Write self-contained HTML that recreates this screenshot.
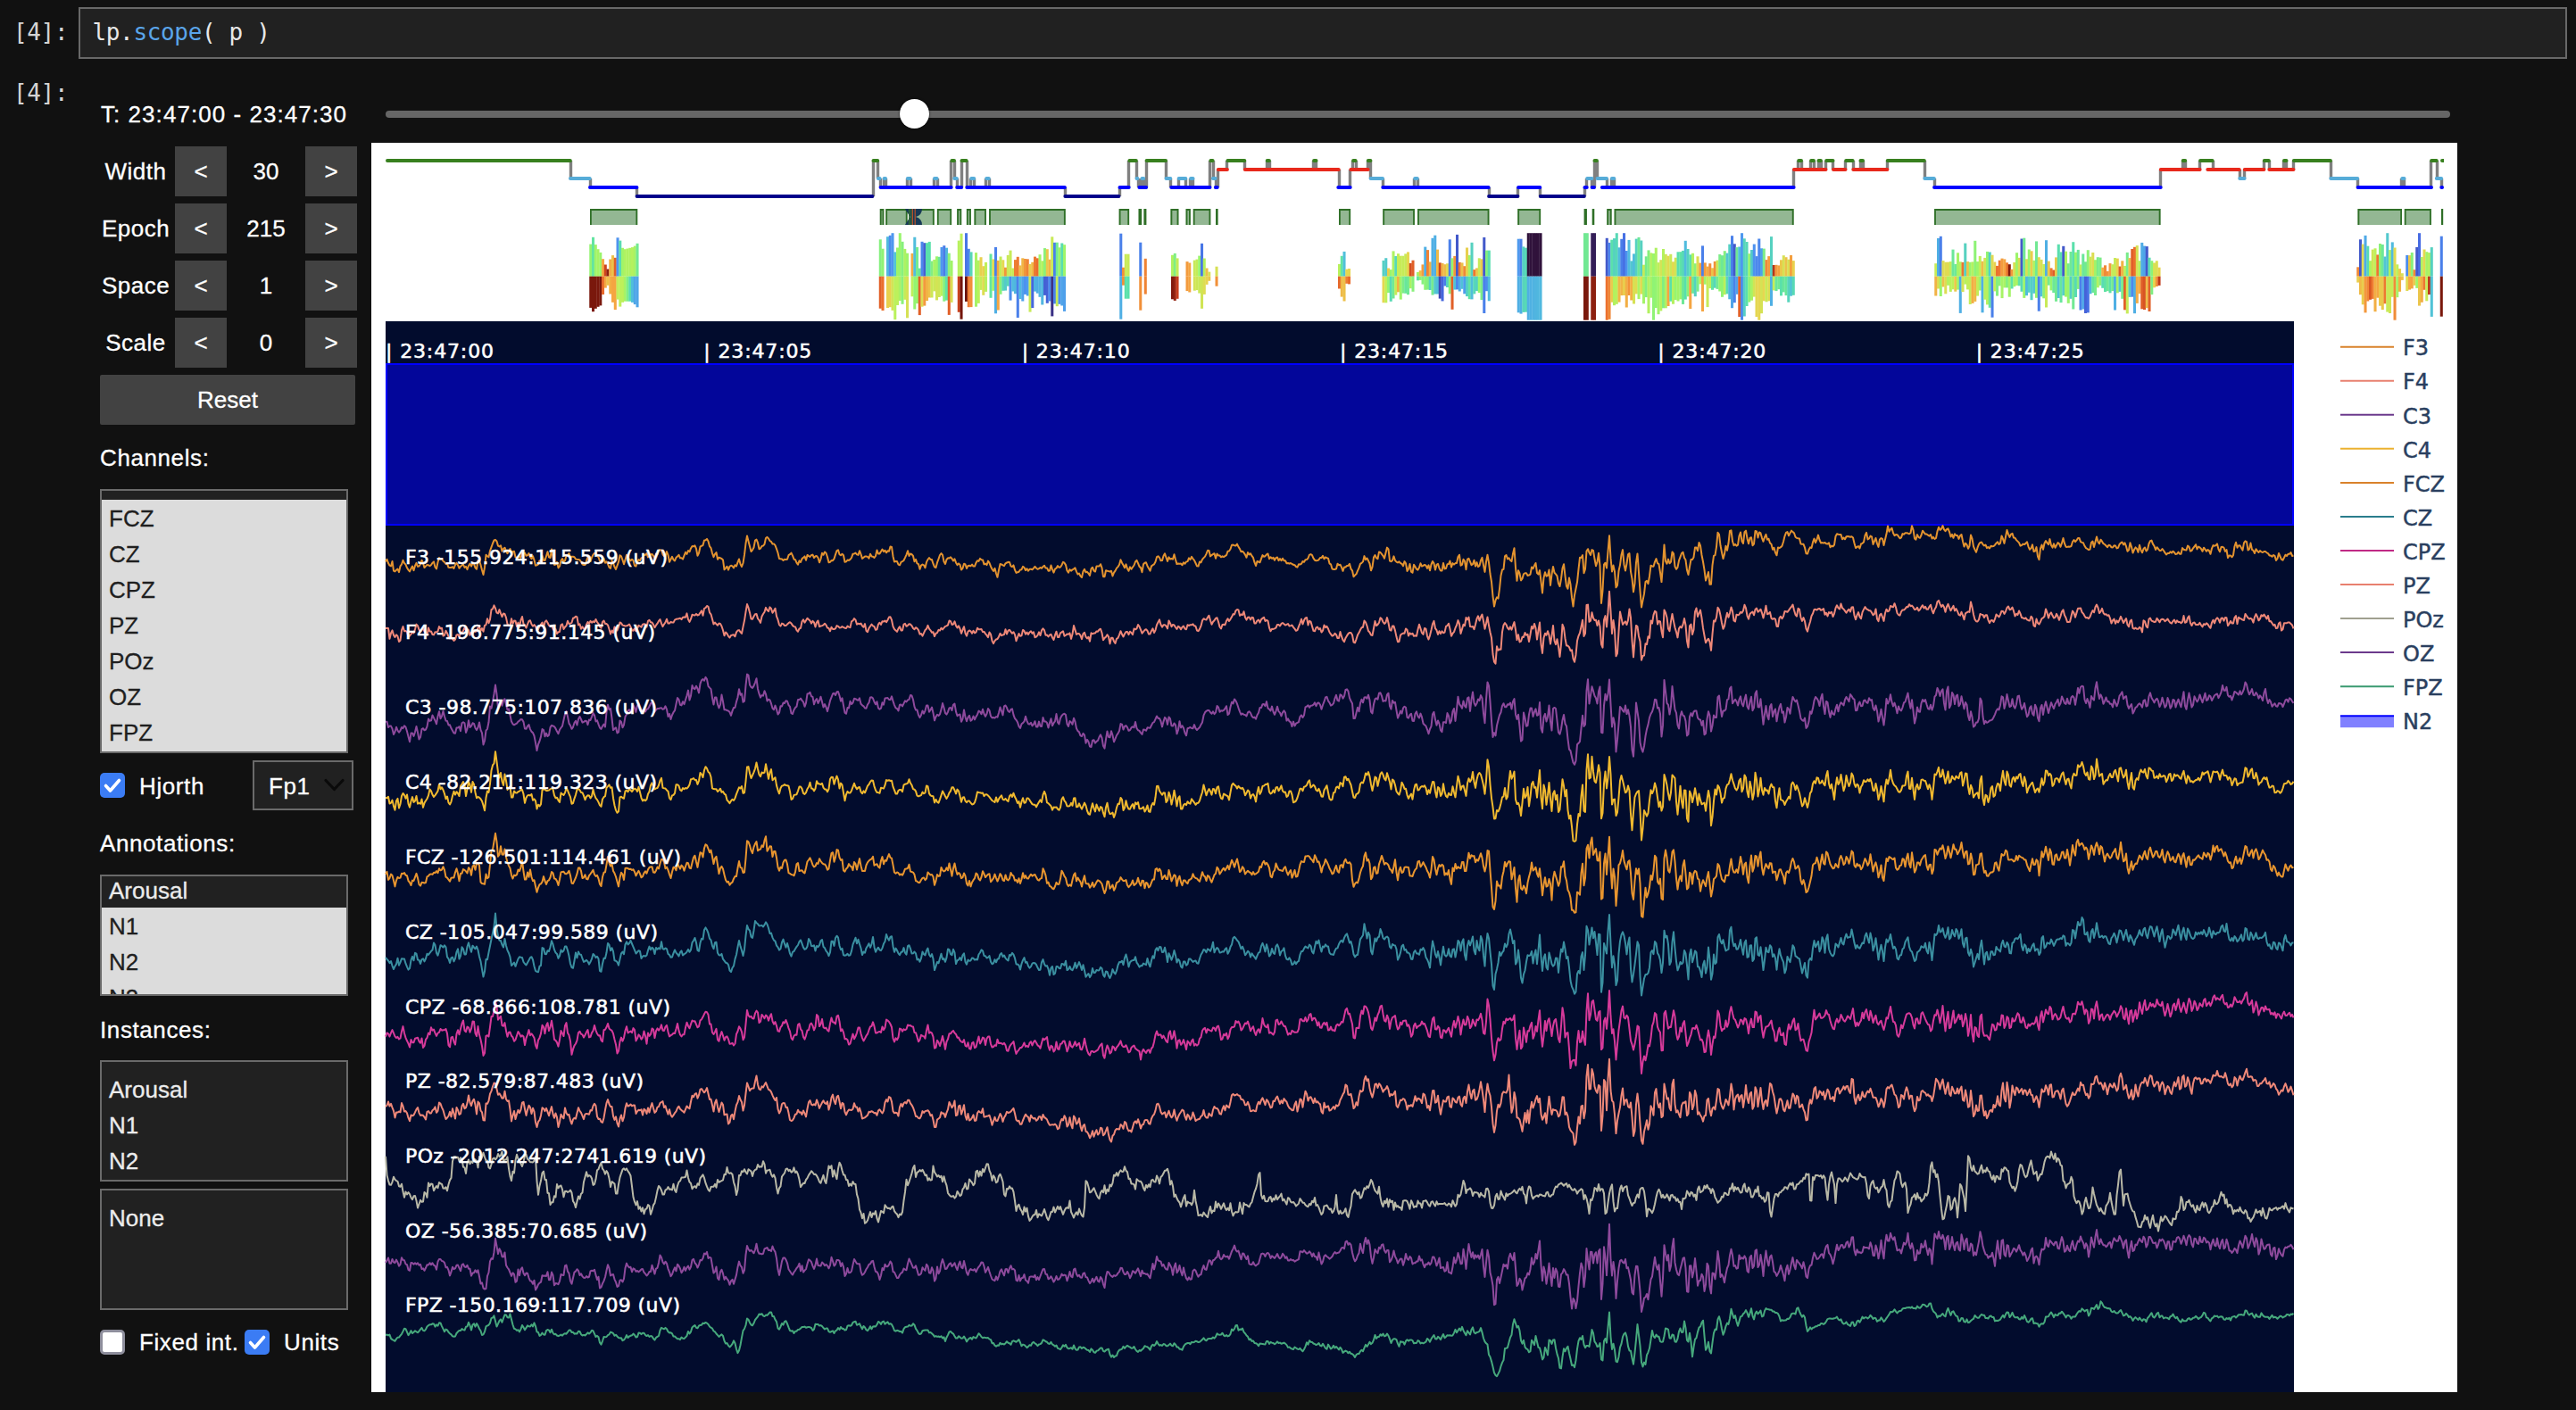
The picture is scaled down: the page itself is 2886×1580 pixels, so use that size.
<!DOCTYPE html><html><head><meta charset="utf-8"><title>lp.scope</title><style>
html,body{margin:0;padding:0;background:#111111;}
body{-webkit-text-stroke:0.3px currentColor;width:2886px;height:1580px;position:relative;overflow:hidden;font-family:"Liberation Sans",sans-serif;font-size:26px;color:#fff;}
.abs{position:absolute;}
.mono{font-family:"DejaVu Sans Mono","Liberation Mono",monospace;font-size:26px;letter-spacing:-0.35px;-webkit-text-stroke:0;}
.prompt{color:#d4d4d4;left:15px;width:70px;white-space:pre;}
.cell{left:88px;top:8px;width:2784px;height:54px;border:2px solid #686868;background:#212121;}
.code{left:103.5px;top:20px;color:#e8e8e8;white-space:pre;line-height:32px;}
.code .fn{color:#5aa5ea;}
.lbl{white-space:nowrap;line-height:30px;letter-spacing:0.6px;}
.btn{background:#424242;width:58px;height:56px;text-align:center;line-height:56px;color:#fff;}
.val{width:80px;text-align:center;line-height:56px;}
.rlbl{width:84px;text-align:center;line-height:56px;left:110px;letter-spacing:0.5px;}
.box{border:2px solid #6a6a6a;background:#212121;box-sizing:border-box;overflow:hidden;}
.it{position:absolute;left:8px;line-height:40px;height:40px;white-space:nowrap;}
.dk{color:#1f1f1f;}
.lt{color:#ececec;}
.cb{width:28px;height:28px;border-radius:5px;box-sizing:border-box;}
.cbon{background:#3b7cf4;}
.cboff{background:#fff;border:3.5px solid #8e8e9c;}
svg text{font-family:"DejaVu Sans","Liberation Sans",sans-serif;}
.wt{fill:#fff;stroke:#fff;stroke-width:0.55px;}
.lg{fill:#2a3f5f;stroke:#2a3f5f;stroke-width:0.45px;}
</style></head><body>
<div class="abs mono prompt" style="top:20px;line-height:32px;">[4]:</div>
<div class="abs cell"></div>
<div class="abs mono code">lp.<span class="fn">scope</span>( p )</div>
<div class="abs mono prompt" style="top:88px;line-height:32px;">[4]:</div>
<div class="abs lbl" id="tlabel" style="left:113px;top:113px;letter-spacing:1.05px;">T: 23:47:00 - 23:47:30</div>
<div class="abs" style="left:432px;top:124px;width:2313px;height:8px;border-radius:4px;background:#666666;"></div>
<div class="abs" style="left:1008px;top:111px;width:33px;height:33px;border-radius:50%;background:#ffffff;box-shadow:0 0 2px 1px rgba(0,0,0,0.35);"></div>
<div class="abs rlbl" style="top:164px;">Width</div>
<div class="abs btn" style="left:196px;top:164px;">&lt;</div>
<div class="abs val" style="left:258px;top:164px;">30</div>
<div class="abs btn" style="left:342px;top:164px;">&gt;</div>
<div class="abs rlbl" style="top:228px;">Epoch</div>
<div class="abs btn" style="left:196px;top:228px;">&lt;</div>
<div class="abs val" style="left:258px;top:228px;">215</div>
<div class="abs btn" style="left:342px;top:228px;">&gt;</div>
<div class="abs rlbl" style="top:292px;">Space</div>
<div class="abs btn" style="left:196px;top:292px;">&lt;</div>
<div class="abs val" style="left:258px;top:292px;">1</div>
<div class="abs btn" style="left:342px;top:292px;">&gt;</div>
<div class="abs rlbl" style="top:356px;">Scale</div>
<div class="abs btn" style="left:196px;top:356px;">&lt;</div>
<div class="abs val" style="left:258px;top:356px;">0</div>
<div class="abs btn" style="left:342px;top:356px;">&gt;</div>
<div class="abs" style="left:112px;top:420px;width:286px;height:56px;background:#424242;text-align:center;line-height:56px;border-radius:2px;">Reset</div>
<div class="abs lbl" style="left:112px;top:498px;">Channels:</div>
<div class="abs box" style="left:112px;top:548px;width:278px;height:296px;"><div class="abs" style="left:0;top:10px;width:274px;height:284px;background:#dcdcdc;"></div>
<div class="it dk" style="top:11px;">FCZ</div>
<div class="it dk" style="top:51px;">CZ</div>
<div class="it dk" style="top:91px;">CPZ</div>
<div class="it dk" style="top:131px;">PZ</div>
<div class="it dk" style="top:171px;">POz</div>
<div class="it dk" style="top:211px;">OZ</div>
<div class="it dk" style="top:251px;">FPZ</div>
</div>
<div class="abs cb cbon" style="left:112px;top:866px;"><svg width="28" height="28" viewBox="0 0 28 28"><path d="M6.5 14.5 L11.5 20 L21.5 8.5" fill="none" stroke="#fff" stroke-width="3.6" stroke-linecap="round" stroke-linejoin="round"/></svg></div>
<div class="abs lbl" style="left:156px;top:866px;">Hjorth</div>
<div class="abs box" style="left:283px;top:852px;width:113px;height:56px;"></div>
<div class="abs lbl" style="left:301px;top:866px;">Fp1</div>
<svg class="abs" style="left:362px;top:871px;" width="26" height="18" viewBox="0 0 26 18"><path d="M3 3.5 L12.5 13.5 L22 3.5" fill="none" stroke="#0a0a0a" stroke-width="3.2" stroke-linecap="round" stroke-linejoin="round"/></svg>
<div class="abs lbl" style="left:112px;top:930px;">Annotations:</div>
<div class="abs box" style="left:112px;top:980px;width:278px;height:136px;"><div class="abs" style="left:0;top:35px;width:274px;height:100px;background:#dcdcdc;"></div><div class="it lt" style="top:-4px;">Arousal</div><div class="it dk" style="top:36px;">N1</div><div class="it dk" style="top:76px;">N2</div><div class="it dk" style="top:116px;">N3</div></div>
<div class="abs lbl" style="left:112px;top:1139px;">Instances:</div>
<div class="abs box" style="left:112px;top:1188px;width:278px;height:136px;"><div class="it lt" style="top:11px;">Arousal</div><div class="it lt" style="top:51px;">N1</div><div class="it lt" style="top:91px;">N2</div></div>
<div class="abs box" style="left:112px;top:1332px;width:278px;height:136px;"><div class="it lt" style="top:11px;">None</div></div>
<div class="abs cb cboff" style="left:112px;top:1490px;"></div>
<div class="abs lbl" style="left:156px;top:1489px;">Fixed int.</div>
<div class="abs cb cbon" style="left:274px;top:1490px;"><svg width="28" height="28" viewBox="0 0 28 28"><path d="M6.5 14.5 L11.5 20 L21.5 8.5" fill="none" stroke="#fff" stroke-width="3.6" stroke-linecap="round" stroke-linejoin="round"/></svg></div>
<div class="abs lbl" style="left:318px;top:1489px;">Units</div>
<svg class="abs" style="left:0;top:0;" width="2886" height="1580" viewBox="0 0 2886 1580">
<rect x="416" y="160" width="2337" height="1400" fill="#ffffff"/>
<defs><clipPath id="ov"><rect x="432" y="160" width="2306" height="200"/></clipPath></defs><g clip-path="url(#ov)">
<path d="M639.5 180V200M661.5 200V210M713.5 210V220M978.5 180V220M983.5 180V200M986.5 200V210M990.5 200V210M992.5 200V210M1016.5 200V210M1020.5 200V210M1046.5 200V210M1050.5 200V210M1065.5 180V210M1069.5 180V200M1072.5 200V210M1077.5 180V210M1083.5 180V210M1087.5 200V210M1091.5 200V210M1104.5 200V210M1108.5 200V210M1193.5 210V220M1254.5 210V220M1264.5 180V210M1273.5 180V200M1275.5 200V210M1278.5 200V210M1281.5 200V210M1284.5 180V210M1306.5 180V200M1311.5 200V210M1320.5 200V210M1328.5 200V210M1333.5 200V210M1336.5 200V210M1355.5 180V210M1359.5 180V200M1362.5 200V210M1364.5 190V210M1374.5 180V190M1394.5 180V190M1419.5 180V190M1422.5 180V190M1471.5 180V190M1474.5 180V190M1500.5 190V210M1512.5 190V210M1515.5 180V190M1519.5 180V190M1532.5 180V190M1535.5 180V200M1549.5 200V210M1584.5 200V210M1588.5 200V210M1668.5 210V220M1700.5 210V220M1725.5 210V220M1775.5 210V220M1777.5 200V210M1783.5 200V210M1786.5 180V210M1789.5 180V200M1800.5 200V210M1805.5 200V210M1808.5 200V210M2009.5 190V210M2014.5 180V190M2018.5 180V190M2028.5 180V190M2032.5 180V190M2037.5 180V190M2040.5 180V190M2045.5 180V190M2053.5 180V190M2067.5 180V190M2076.5 180V190M2084.5 180V190M2087.5 180V190M2114.5 180V190M2156.5 180V200M2167.5 200V210M2420.5 190V210M2445.5 180V190M2448.5 180V190M2464.5 180V190M2479.5 180V190M2509.5 190V200M2514.5 190V200M2536.5 180V190M2542.5 180V190M2558.5 180V190M2561.5 180V190M2569.5 180V190M2611.5 180V200M2641.5 200V210M2690.5 200V210M2693.5 200V210M2723.5 180V210M2730.5 180V200M2735.5 200V210" stroke="#808080" stroke-width="3.4" fill="none"/>
<path d="M713.6 220H977.4M1193.4 220H1253.4M1668.1 220H1700.4M1725.8 220H1774.8" stroke="#00008b" stroke-width="4" stroke-linecap="round" fill="none"/>
<path d="M661.0 210H713.4M986.6 210H1065.7M1072.2 210H1077.2M1083.3 210H1192.9M1254.5 210H1264.7M1276.4 210H1284.1M1312.3 210H1355.5M1361.8 210H1363.7M1499.3 210H1512.7M1549.3 210H1667.6M1701.1 210H1725.3M1775.5 210H1777.7M1783.6 210H1786.0M1794.9 210H2009.6M2167.1 210H2420.7M2641.6 210H2724.0M2735.3 210H2736.0" stroke="#0000ff" stroke-width="4" stroke-linecap="round" fill="none"/>
<path d="M639.0 200H660.7M983.9 200H985.6M990.6 200H992.0M1016.9 200H1019.7M1047.0 200H1049.6M1069.3 200H1071.9M1088.2 200H1091.2M1105.2 200H1107.8M1273.5 200H1274.4M1279.4 200H1281.2M1306.5 200H1311.3M1320.7 200H1328.3M1334.1 200H1336.5M1358.9 200H1361.7M1535.6 200H1549.0M1585.2 200H1587.8M1778.2 200H1783.5M1789.5 200H1800.0M1805.9 200H1808.3M2156.3 200H2166.8M2509.3 200H2514.6M2611.3 200H2641.2M2691.3 200H2693.5M2729.8 200H2735.1" stroke="#56acd8" stroke-width="4" stroke-linecap="round" fill="none"/>
<path d="M1364.8 190H1374.9M1394.8 190H1499.7M1513.4 190H1532.7M2009.9 190H2045.5M2054.0 190H2067.5M2076.3 190H2114.4M2420.8 190H2464.6M2473.3 190H2508.7M2514.8 190H2536.4M2542.4 190H2569.5" stroke="#e8291c" stroke-width="4" stroke-linecap="round" fill="none"/>
<path d="M434.0 180H638.8M978.5 180H983.2M1066.4 180H1069.0M1077.5 180H1082.6M1265.4 180H1272.8M1284.6 180H1306.0M1356.4 180H1358.6M1375.4 180H1394.3M1419.7 180H1421.9M1472.1 180H1474.5M1516.1 180H1518.6M1532.8 180H1535.4M1786.5 180H1788.9M2015.2 180H2018.0M2029.1 180H2031.9M2037.5 180H2039.9M2046.2 180H2053.5M2068.2 180H2075.6M2084.5 180H2087.0M2114.7 180H2155.8M2445.7 180H2448.2M2465.1 180H2478.6M2536.8 180H2541.8M2559.0 180H2561.5M2569.9 180H2610.9M2724.1 180H2729.7M2738.0 180H2736.0" stroke="#38801f" stroke-width="4" stroke-linecap="round" fill="none"/>
<g fill="#93b793"><rect x="661.0" y="234" width="53.2" height="18"/><rect x="985.8" y="234" width="4.5" height="18"/><rect x="992.3" y="234" width="24.3" height="18"/><rect x="1020.0" y="234" width="26.7" height="18"/><rect x="1049.9" y="234" width="16.2" height="18"/><rect x="1072.2" y="234" width="5.0" height="18"/><rect x="1082.9" y="234" width="5.0" height="18"/><rect x="1091.5" y="234" width="13.4" height="18"/><rect x="1108.1" y="234" width="85.6" height="18"/><rect x="1253.7" y="234" width="11.4" height="18"/><rect x="1275.6" y="234" width="3.5" height="18"/><rect x="1281.5" y="234" width="2.8" height="18"/><rect x="1311.5" y="234" width="8.9" height="18"/><rect x="1328.6" y="234" width="5.2" height="18"/><rect x="1336.8" y="234" width="19.5" height="18"/><rect x="1362.0" y="234" width="2.5" height="18"/><rect x="1500.0" y="234" width="13.1" height="18"/><rect x="1549.3" y="234" width="35.6" height="18"/><rect x="1588.1" y="234" width="80.3" height="18"/><rect x="1700.3" y="234" width="25.8" height="18"/><rect x="1774.7" y="234" width="3.2" height="18"/><rect x="1783.8" y="234" width="2.4" height="18"/><rect x="1800.3" y="234" width="5.3" height="18"/><rect x="1808.6" y="234" width="201.0" height="18"/><rect x="2167.1" y="234" width="253.4" height="18"/><rect x="2641.5" y="234" width="49.5" height="18"/><rect x="2693.8" y="234" width="30.0" height="18"/><rect x="2735.4" y="234" width="1.5" height="18"/></g>
<path d="M661.9 252V235H713.3V252M986.7 252V235H989.4V252M993.2 252V235H1015.7V252M1020.9 252V235H1045.8V252M1050.8 252V235H1065.2V252M1073.1 252V235H1076.3V252M1083.8 252V235H1087.0V252M1092.4 252V235H1104.0V252M1109.0 252V235H1192.8V252M1254.6 252V235H1264.2V252M1276.5 252V235H1278.2V252M1282.4 252V235H1283.4V252M1312.4 252V235H1319.5V252M1329.5 252V235H1332.9V252M1337.7 252V235H1355.4V252M1362.9 252V235H1363.6V252M1500.9 252V235H1512.2V252M1550.2 252V235H1584.0V252M1589.0 252V235H1667.5V252M1701.2 252V235H1725.2V252M1775.6 252V235H1777.0V252M1784.7 252V235H1785.3V252M1801.2 252V235H1804.7V252M1809.5 252V235H2008.7V252M2168.0 252V235H2419.6V252M2642.4 252V235H2690.1V252M2694.7 252V235H2722.9V252M2736.3 252V235H2735.9V252" stroke="#2f6f27" stroke-width="1.8" fill="none"/>
<path d="M1014 234 L1033 234 Q1033 241 1026 243 Q1033 245 1033 252 L1014 252 L1019.5 243 Z" fill="#183a56"/>
<path d="M1018.5 234V252M1020.8 234V252" stroke="#3a7d2a" stroke-width="1"/>
<path d="M1022.4 234V252M1025.2 234V252" stroke="#b8522a" stroke-width="1.2"/>
<g><path d="M660.25 273.6h3.05V309.7h-3.05z" fill="#94f470"/><path d="M660.25 309.7h3.05v35.2h-3.05z" fill="#7a180c"/><path d="M663.00 265.8h3.05V309.7h-3.05z" fill="#63e4a1"/><path d="M663.00 309.7h3.05v39.5h-3.05z" fill="#7a180c"/><path d="M665.75 274.1h3.05V309.7h-3.05z" fill="#a1f469"/><path d="M665.75 309.7h3.05v36.1h-3.05z" fill="#7a180c"/><path d="M668.50 279.2h3.05V309.7h-3.05z" fill="#a7f365"/><path d="M668.50 309.7h3.05v34.1h-3.05z" fill="#7a180c"/><path d="M671.25 282.9h3.05V309.7h-3.05z" fill="#9cf46b"/><path d="M671.25 309.7h3.05v32.7h-3.05z" fill="#7a180c"/><path d="M674.00 290.2h3.05V309.7h-3.05z" fill="#f3aa43"/><path d="M674.00 309.7h3.05v20.3h-3.05z" fill="#e6682b"/><path d="M676.75 296.5h3.05V309.7h-3.05z" fill="#cc431e"/><path d="M676.75 309.7h3.05v12.9h-3.05z" fill="#f4a742"/><path d="M679.50 301.5h3.05V309.7h-3.05z" fill="#8f2110"/><path d="M679.50 309.7h3.05v10.1h-3.05z" fill="#edc049"/><path d="M682.25 290.5h3.05V309.7h-3.05z" fill="#f2ae44"/><path d="M682.25 309.7h3.05v19.8h-3.05z" fill="#f2af44"/><path d="M685.00 286.1h3.05V309.7h-3.05z" fill="#ecc24a"/><path d="M685.00 309.7h3.05v29.1h-3.05z" fill="#f5a541"/><path d="M687.75 288.8h3.05V309.7h-3.05z" fill="#e06028"/><path d="M687.75 309.7h3.05v37.4h-3.05z" fill="#f5a541"/><path d="M690.50 266.3h3.05V309.7h-3.05z" fill="#4e93ef"/><path d="M690.50 309.7h3.05v25.9h-3.05z" fill="#c3ed59"/><path d="M693.25 269.6h3.05V309.7h-3.05z" fill="#59dcb1"/><path d="M693.25 309.7h3.05v33.9h-3.05z" fill="#bef05a"/><path d="M696.00 277.8h3.05V309.7h-3.05z" fill="#a2f468"/><path d="M696.00 309.7h3.05v29.1h-3.05z" fill="#bef05a"/><path d="M698.75 279.2h3.05V309.7h-3.05z" fill="#aff261"/><path d="M698.75 309.7h3.05v28.0h-3.05z" fill="#a6f366"/><path d="M701.50 278.5h3.05V309.7h-3.05z" fill="#aff261"/><path d="M701.50 309.7h3.05v28.0h-3.05z" fill="#80ee84"/><path d="M704.25 277.8h3.05V309.7h-3.05z" fill="#aff261"/><path d="M704.25 309.7h3.05v28.0h-3.05z" fill="#59ddb0"/><path d="M707.00 277.1h3.05V309.7h-3.05z" fill="#b5f15f"/><path d="M707.00 309.7h3.05v29.2h-3.05z" fill="#50bddc"/><path d="M709.75 275.6h3.05V309.7h-3.05z" fill="#a8f365"/><path d="M709.75 309.7h3.05v31.4h-3.05z" fill="#4fa5e8"/><path d="M712.50 272.8h3.05V309.7h-3.05z" fill="#73e991"/><path d="M712.50 309.7h3.05v34.6h-3.05z" fill="#4fa5e8"/><path d="M984.75 268.3h3.05V309.7h-3.05z" fill="#86f07e"/><path d="M984.75 309.7h3.05v36.0h-3.05z" fill="#e16028"/><path d="M987.50 278.7h3.05V309.7h-3.05z" fill="#8ff375"/><path d="M987.50 309.7h3.05v38.3h-3.05z" fill="#eb6f2d"/><path d="M993.00 265.2h3.05V309.7h-3.05z" fill="#50bade"/><path d="M993.00 309.7h3.05v35.3h-3.05z" fill="#e8d14e"/><path d="M995.75 263.8h3.05V309.7h-3.05z" fill="#4c8ced"/><path d="M995.75 309.7h3.05v34.5h-3.05z" fill="#e8d14e"/><path d="M998.50 261.2h3.05V309.7h-3.05z" fill="#4e97ef"/><path d="M998.50 309.7h3.05v38.2h-3.05z" fill="#d2e455"/><path d="M1001.25 282.4h3.05V309.7h-3.05z" fill="#52c4d4"/><path d="M1001.25 309.7h3.05v48.4h-3.05z" fill="#baf15c"/><path d="M1004.00 277.5h3.05V309.7h-3.05z" fill="#9df46a"/><path d="M1004.00 309.7h3.05v32.3h-3.05z" fill="#bdf05b"/><path d="M1006.75 261.2h3.05V309.7h-3.05z" fill="#99f56d"/><path d="M1006.75 309.7h3.05v27.3h-3.05z" fill="#aaf264"/><path d="M1009.50 270.8h3.05V309.7h-3.05z" fill="#87f07d"/><path d="M1009.50 309.7h3.05v31.1h-3.05z" fill="#8af17a"/><path d="M1012.25 278.9h3.05V309.7h-3.05z" fill="#acf263"/><path d="M1012.25 309.7h3.05v26.1h-3.05z" fill="#c5eb58"/><path d="M1015.00 283.7h3.05V309.7h-3.05z" fill="#9ff469"/><path d="M1015.00 309.7h3.05v46.6h-3.05z" fill="#d6e154"/><path d="M1020.50 283.9h3.05V309.7h-3.05z" fill="#f3ab43"/><path d="M1020.50 309.7h3.05v22.6h-3.05z" fill="#bef05a"/><path d="M1023.25 265.8h3.05V309.7h-3.05z" fill="#50bddc"/><path d="M1023.25 309.7h3.05v36.9h-3.05z" fill="#94f470"/><path d="M1026.00 277.0h3.05V309.7h-3.05z" fill="#77eb8d"/><path d="M1026.00 309.7h3.05v30.4h-3.05z" fill="#97f56e"/><path d="M1028.75 300.6h3.05V309.7h-3.05z" fill="#65e59f"/><path d="M1028.75 309.7h3.05v43.4h-3.05z" fill="#e16028"/><path d="M1031.50 270.8h3.05V309.7h-3.05z" fill="#4b87ec"/><path d="M1031.50 309.7h3.05v34.0h-3.05z" fill="#dcdd52"/><path d="M1034.25 272.2h3.05V309.7h-3.05z" fill="#4460d4"/><path d="M1034.25 309.7h3.05v32.9h-3.05z" fill="#f39a3d"/><path d="M1037.00 272.2h3.05V309.7h-3.05z" fill="#5ae0ab"/><path d="M1037.00 309.7h3.05v27.3h-3.05z" fill="#f1b345"/><path d="M1039.75 270.9h3.05V309.7h-3.05z" fill="#5ae0ab"/><path d="M1039.75 309.7h3.05v23.8h-3.05z" fill="#edc149"/><path d="M1042.50 292.5h3.05V309.7h-3.05z" fill="#82ee82"/><path d="M1042.50 309.7h3.05v23.8h-3.05z" fill="#cde756"/><path d="M1045.25 290.9h3.05V309.7h-3.05z" fill="#a8f365"/><path d="M1045.25 309.7h3.05v16.7h-3.05z" fill="#cce757"/><path d="M1048.00 287.3h3.05V309.7h-3.05z" fill="#9ff469"/><path d="M1048.00 309.7h3.05v26.7h-3.05z" fill="#d3e355"/><path d="M1050.75 287.8h3.05V309.7h-3.05z" fill="#6ce798"/><path d="M1050.75 309.7h3.05v23.3h-3.05z" fill="#cde656"/><path d="M1053.50 276.9h3.05V309.7h-3.05z" fill="#4e97ef"/><path d="M1053.50 309.7h3.05v22.0h-3.05z" fill="#bbf05b"/><path d="M1056.25 275.2h3.05V309.7h-3.05z" fill="#497ce8"/><path d="M1056.25 309.7h3.05v28.0h-3.05z" fill="#84ef80"/><path d="M1059.00 277.7h3.05V309.7h-3.05z" fill="#50b5e0"/><path d="M1059.00 309.7h3.05v26.9h-3.05z" fill="#60e3a4"/><path d="M1061.75 283.7h3.05V309.7h-3.05z" fill="#8cf278"/><path d="M1061.75 309.7h3.05v43.2h-3.05z" fill="#e16028"/><path d="M1064.50 292.0h3.05V309.7h-3.05z" fill="#a1f468"/><path d="M1064.50 309.7h3.05v29.2h-3.05z" fill="#dcdd52"/><path d="M1072.75 269.6h3.05V309.7h-3.05z" fill="#b7f15e"/><path d="M1072.75 309.7h3.05v40.1h-3.05z" fill="#ca411d"/><path d="M1075.50 261.7h3.05V309.7h-3.05z" fill="#bef05a"/><path d="M1075.50 309.7h3.05v48.0h-3.05z" fill="#74160c"/><path d="M1081.00 261.2h3.05V309.7h-3.05z" fill="#4876e6"/><path d="M1081.00 309.7h3.05v28.2h-3.05z" fill="#69120a"/><path d="M1083.75 278.8h3.05V309.7h-3.05z" fill="#4b86eb"/><path d="M1083.75 309.7h3.05v34.5h-3.05z" fill="#ee7c32"/><path d="M1086.50 282.4h3.05V309.7h-3.05z" fill="#57d7b8"/><path d="M1086.50 309.7h3.05v34.4h-3.05z" fill="#f18e39"/><path d="M1092.00 283.1h3.05V309.7h-3.05z" fill="#abf264"/><path d="M1092.00 309.7h3.05v34.0h-3.05z" fill="#a4f367"/><path d="M1094.75 291.7h3.05V309.7h-3.05z" fill="#b4f15f"/><path d="M1094.75 309.7h3.05v30.2h-3.05z" fill="#bbf05b"/><path d="M1097.50 288.2h3.05V309.7h-3.05z" fill="#e8d04e"/><path d="M1097.50 309.7h3.05v15.2h-3.05z" fill="#c6eb58"/><path d="M1100.25 298.2h3.05V309.7h-3.05z" fill="#e8d14e"/><path d="M1100.25 309.7h3.05v21.1h-3.05z" fill="#dddd52"/><path d="M1103.00 293.9h3.05V309.7h-3.05z" fill="#c0ef5a"/><path d="M1103.00 309.7h3.05v17.2h-3.05z" fill="#b7f15e"/><path d="M1108.50 284.5h3.05V309.7h-3.05z" fill="#65e59f"/><path d="M1108.50 309.7h3.05v24.1h-3.05z" fill="#62e4a2"/><path d="M1111.25 290.4h3.05V309.7h-3.05z" fill="#e0db51"/><path d="M1111.25 309.7h3.05v16.1h-3.05z" fill="#9ff46a"/><path d="M1114.00 277.0h3.05V309.7h-3.05z" fill="#4a80ea"/><path d="M1114.00 309.7h3.05v41.6h-3.05z" fill="#4fafe4"/><path d="M1116.75 291.9h3.05V309.7h-3.05z" fill="#f5a641"/><path d="M1116.75 309.7h3.05v37.8h-3.05z" fill="#f5a541"/><path d="M1119.50 287.5h3.05V309.7h-3.05z" fill="#c4ec58"/><path d="M1119.50 309.7h3.05v20.1h-3.05z" fill="#8af17a"/><path d="M1122.25 291.3h3.05V309.7h-3.05z" fill="#e4d951"/><path d="M1122.25 309.7h3.05v16.1h-3.05z" fill="#58d8b6"/><path d="M1125.00 299.7h3.05V309.7h-3.05z" fill="#f2953b"/><path d="M1125.00 309.7h3.05v15.9h-3.05z" fill="#54caca"/><path d="M1127.75 285.9h3.05V309.7h-3.05z" fill="#c9e957"/><path d="M1127.75 309.7h3.05v11.0h-3.05z" fill="#57d7b8"/><path d="M1130.50 280.6h3.05V309.7h-3.05z" fill="#c7eb58"/><path d="M1130.50 309.7h3.05v26.9h-3.05z" fill="#4c8ded"/><path d="M1133.25 300.5h3.05V309.7h-3.05z" fill="#c7ea58"/><path d="M1133.25 309.7h3.05v16.8h-3.05z" fill="#50bbde"/><path d="M1136.00 291.1h3.05V309.7h-3.05z" fill="#ee7d32"/><path d="M1136.00 309.7h3.05v19.5h-3.05z" fill="#50b7df"/><path d="M1138.75 287.8h3.05V309.7h-3.05z" fill="#ed7931"/><path d="M1138.75 309.7h3.05v46.3h-3.05z" fill="#4a80ea"/><path d="M1141.50 297.4h3.05V309.7h-3.05z" fill="#eebc48"/><path d="M1141.50 309.7h3.05v25.3h-3.05z" fill="#50bbde"/><path d="M1144.25 289.3h3.05V309.7h-3.05z" fill="#f0b546"/><path d="M1144.25 309.7h3.05v27.8h-3.05z" fill="#4fa2ea"/><path d="M1147.00 290.0h3.05V309.7h-3.05z" fill="#f2963b"/><path d="M1147.00 309.7h3.05v20.2h-3.05z" fill="#4d91ef"/><path d="M1149.75 290.3h3.05V309.7h-3.05z" fill="#ef8335"/><path d="M1149.75 309.7h3.05v21.8h-3.05z" fill="#4e9ded"/><path d="M1152.50 295.9h3.05V309.7h-3.05z" fill="#e9cc4d"/><path d="M1152.50 309.7h3.05v39.9h-3.05z" fill="#c8ea58"/><path d="M1155.25 293.8h3.05V309.7h-3.05z" fill="#efba47"/><path d="M1155.25 309.7h3.05v35.4h-3.05z" fill="#4567dd"/><path d="M1158.00 287.6h3.05V309.7h-3.05z" fill="#ed7931"/><path d="M1158.00 309.7h3.05v16.9h-3.05z" fill="#4fb2e2"/><path d="M1160.75 289.3h3.05V309.7h-3.05z" fill="#ea6d2d"/><path d="M1160.75 309.7h3.05v19.0h-3.05z" fill="#4faee4"/><path d="M1163.50 285.2h3.05V309.7h-3.05z" fill="#a4f367"/><path d="M1163.50 309.7h3.05v23.1h-3.05z" fill="#50b5e1"/><path d="M1166.25 292.3h3.05V309.7h-3.05z" fill="#b2f260"/><path d="M1166.25 309.7h3.05v31.8h-3.05z" fill="#50b5e0"/><path d="M1169.00 278.1h3.05V309.7h-3.05z" fill="#8bf179"/><path d="M1169.00 309.7h3.05v21.2h-3.05z" fill="#4460d3"/><path d="M1171.75 279.2h3.05V309.7h-3.05z" fill="#ebc84b"/><path d="M1171.75 309.7h3.05v30.1h-3.05z" fill="#4562d7"/><path d="M1174.50 290.7h3.05V309.7h-3.05z" fill="#f0b646"/><path d="M1174.50 309.7h3.05v27.8h-3.05z" fill="#4c8ced"/><path d="M1177.25 265.3h3.05V309.7h-3.05z" fill="#c8ea57"/><path d="M1177.25 309.7h3.05v44.7h-3.05z" fill="#3a3185"/><path d="M1180.00 271.8h3.05V309.7h-3.05z" fill="#4a80ea"/><path d="M1180.00 309.7h3.05v30.7h-3.05z" fill="#4a82ea"/><path d="M1182.75 271.7h3.05V309.7h-3.05z" fill="#73e991"/><path d="M1182.75 309.7h3.05v33.5h-3.05z" fill="#c8ea58"/><path d="M1185.50 277.3h3.05V309.7h-3.05z" fill="#98f56d"/><path d="M1185.50 309.7h3.05v31.1h-3.05z" fill="#4d93ef"/><path d="M1188.25 272.5h3.05V309.7h-3.05z" fill="#59ddb0"/><path d="M1188.25 309.7h3.05v32.8h-3.05z" fill="#4fa4e9"/><path d="M1191.00 274.2h3.05V309.7h-3.05z" fill="#9ff46a"/><path d="M1191.00 309.7h3.05v39.2h-3.05z" fill="#4e9feb"/><path d="M1254.25 261.7h3.05V309.7h-3.05z" fill="#4a80ea"/><path d="M1254.25 309.7h3.05v48.0h-3.05z" fill="#4fafe4"/><path d="M1257.00 299.7h3.05V309.7h-3.05z" fill="#f19039"/><path d="M1257.00 309.7h3.05v10.0h-3.05z" fill="#f19039"/><path d="M1259.75 284.7h3.05V309.7h-3.05z" fill="#c8ea58"/><path d="M1259.75 309.7h3.05v25.0h-3.05z" fill="#5ae1aa"/><path d="M1262.50 284.7h3.05V309.7h-3.05z" fill="#c8ea58"/><path d="M1262.50 309.7h3.05v25.0h-3.05z" fill="#5ae1aa"/><path d="M1276.25 271.7h3.05V309.7h-3.05z" fill="#4a80ea"/><path d="M1276.25 309.7h3.05v38.0h-3.05z" fill="#f19039"/><path d="M1281.75 289.8h3.05V309.7h-3.05z" fill="#ef8334"/><path d="M1281.75 309.7h3.05v19.9h-3.05z" fill="#ef8334"/><path d="M1312.00 285.8h3.05V309.7h-3.05z" fill="#b1f260"/><path d="M1312.00 309.7h3.05v25.6h-3.05z" fill="#801a0d"/><path d="M1314.75 283.9h3.05V309.7h-3.05z" fill="#80ee84"/><path d="M1314.75 309.7h3.05v27.2h-3.05z" fill="#942411"/><path d="M1317.50 289.4h3.05V309.7h-3.05z" fill="#c5ec58"/><path d="M1317.50 309.7h3.05v25.1h-3.05z" fill="#c63d1c"/><path d="M1328.50 293.1h3.05V309.7h-3.05z" fill="#f39a3d"/><path d="M1328.50 309.7h3.05v16.4h-3.05z" fill="#f39a3d"/><path d="M1331.25 294.5h3.05V309.7h-3.05z" fill="#f5a441"/><path d="M1331.25 309.7h3.05v17.8h-3.05z" fill="#f5a441"/><path d="M1336.75 291.6h3.05V309.7h-3.05z" fill="#c8ea58"/><path d="M1336.75 309.7h3.05v16.0h-3.05z" fill="#d2e455"/><path d="M1339.50 290.6h3.05V309.7h-3.05z" fill="#c2ed59"/><path d="M1339.50 309.7h3.05v15.4h-3.05z" fill="#cce756"/><path d="M1342.25 286.6h3.05V309.7h-3.05z" fill="#98f56d"/><path d="M1342.25 309.7h3.05v18.9h-3.05z" fill="#cae957"/><path d="M1345.00 272.8h3.05V309.7h-3.05z" fill="#4876e6"/><path d="M1345.00 309.7h3.05v36.1h-3.05z" fill="#d0e455"/><path d="M1347.75 289.5h3.05V309.7h-3.05z" fill="#b4f15f"/><path d="M1347.75 309.7h3.05v20.2h-3.05z" fill="#dddd52"/><path d="M1350.50 300.5h3.05V309.7h-3.05z" fill="#edbf49"/><path d="M1350.50 309.7h3.05v9.2h-3.05z" fill="#e7d44f"/><path d="M1353.25 304.6h3.05V309.7h-3.05z" fill="#d9df53"/><path d="M1353.25 309.7h3.05v5.1h-3.05z" fill="#ebc74b"/><path d="M1361.50 298.7h3.05V309.7h-3.05z" fill="#d7e054"/><path d="M1361.50 309.7h3.05v11.0h-3.05z" fill="#f19039"/><path d="M1499.00 295.9h3.05V309.7h-3.05z" fill="#b9f15c"/><path d="M1499.00 309.7h3.05v13.8h-3.05z" fill="#e6682b"/><path d="M1501.75 286.8h3.05V309.7h-3.05z" fill="#62e4a2"/><path d="M1501.75 309.7h3.05v22.9h-3.05z" fill="#efb847"/><path d="M1504.50 281.9h3.05V309.7h-3.05z" fill="#50c0da"/><path d="M1504.50 309.7h3.05v27.8h-3.05z" fill="#edc049"/><path d="M1507.25 301.6h3.05V309.7h-3.05z" fill="#e6d750"/><path d="M1507.25 309.7h3.05v8.1h-3.05z" fill="#ee7e33"/><path d="M1510.00 301.0h3.05V309.7h-3.05z" fill="#e6d750"/><path d="M1510.00 309.7h3.05v8.7h-3.05z" fill="#e96b2c"/><path d="M1548.50 291.9h3.05V309.7h-3.05z" fill="#55d0c2"/><path d="M1548.50 309.7h3.05v29.5h-3.05z" fill="#e5d750"/><path d="M1551.25 289.2h3.05V309.7h-3.05z" fill="#53cacb"/><path d="M1551.25 309.7h3.05v29.6h-3.05z" fill="#c0ef5a"/><path d="M1554.00 300.5h3.05V309.7h-3.05z" fill="#e9cc4d"/><path d="M1554.00 309.7h3.05v18.4h-3.05z" fill="#90f374"/><path d="M1556.75 302.1h3.05V309.7h-3.05z" fill="#99f56d"/><path d="M1556.75 309.7h3.05v28.1h-3.05z" fill="#58dab4"/><path d="M1559.50 281.4h3.05V309.7h-3.05z" fill="#aef262"/><path d="M1559.50 309.7h3.05v24.8h-3.05z" fill="#71e993"/><path d="M1562.25 287.0h3.05V309.7h-3.05z" fill="#58d9b6"/><path d="M1562.25 309.7h3.05v20.9h-3.05z" fill="#c4ec59"/><path d="M1565.00 284.2h3.05V309.7h-3.05z" fill="#c5ec58"/><path d="M1565.00 309.7h3.05v17.6h-3.05z" fill="#f1b245"/><path d="M1567.75 286.7h3.05V309.7h-3.05z" fill="#c8ea57"/><path d="M1567.75 309.7h3.05v25.9h-3.05z" fill="#9ff469"/><path d="M1570.50 286.7h3.05V309.7h-3.05z" fill="#c5ec58"/><path d="M1570.50 309.7h3.05v18.9h-3.05z" fill="#7cec88"/><path d="M1573.25 284.4h3.05V309.7h-3.05z" fill="#c9e957"/><path d="M1573.25 309.7h3.05v19.1h-3.05z" fill="#69e69b"/><path d="M1576.00 282.4h3.05V309.7h-3.05z" fill="#e6d750"/><path d="M1576.00 309.7h3.05v20.5h-3.05z" fill="#6fe895"/><path d="M1578.75 294.9h3.05V309.7h-3.05z" fill="#d34d21"/><path d="M1578.75 309.7h3.05v13.5h-3.05z" fill="#abf264"/><path d="M1581.50 291.7h3.05V309.7h-3.05z" fill="#e06028"/><path d="M1581.50 309.7h3.05v17.1h-3.05z" fill="#89f17b"/><path d="M1587.00 304.9h3.05V309.7h-3.05z" fill="#a5f366"/><path d="M1587.00 309.7h3.05v4.6h-3.05z" fill="#62e4a2"/><path d="M1589.75 303.1h3.05V309.7h-3.05z" fill="#ecc24a"/><path d="M1589.75 309.7h3.05v4.2h-3.05z" fill="#8df277"/><path d="M1592.50 296.4h3.05V309.7h-3.05z" fill="#f39b3d"/><path d="M1592.50 309.7h3.05v8.9h-3.05z" fill="#86f07e"/><path d="M1595.25 276.6h3.05V309.7h-3.05z" fill="#4fafe4"/><path d="M1595.25 309.7h3.05v15.1h-3.05z" fill="#8cf278"/><path d="M1598.00 280.1h3.05V309.7h-3.05z" fill="#ee8134"/><path d="M1598.00 309.7h3.05v14.9h-3.05z" fill="#83ef81"/><path d="M1600.75 293.4h3.05V309.7h-3.05z" fill="#f1b245"/><path d="M1600.75 309.7h3.05v15.3h-3.05z" fill="#56d2c0"/><path d="M1603.50 266.8h3.05V309.7h-3.05z" fill="#4fafe4"/><path d="M1603.50 309.7h3.05v20.9h-3.05z" fill="#76ea8e"/><path d="M1606.25 263.7h3.05V309.7h-3.05z" fill="#4fafe4"/><path d="M1606.25 309.7h3.05v19.8h-3.05z" fill="#53c8cd"/><path d="M1609.00 279.6h3.05V309.7h-3.05z" fill="#efb947"/><path d="M1609.00 309.7h3.05v19.8h-3.05z" fill="#50bfdb"/><path d="M1611.75 294.4h3.05V309.7h-3.05z" fill="#cc441e"/><path d="M1611.75 309.7h3.05v24.9h-3.05z" fill="#404ab4"/><path d="M1614.50 295.0h3.05V309.7h-3.05z" fill="#f0b546"/><path d="M1614.50 309.7h3.05v27.7h-3.05z" fill="#4566dc"/><path d="M1617.25 296.2h3.05V309.7h-3.05z" fill="#eebb48"/><path d="M1617.25 309.7h3.05v10.8h-3.05z" fill="#497ee9"/><path d="M1620.00 295.3h3.05V309.7h-3.05z" fill="#e2da51"/><path d="M1620.00 309.7h3.05v12.3h-3.05z" fill="#56d1c0"/><path d="M1622.75 268.3h3.05V309.7h-3.05z" fill="#4a80ea"/><path d="M1622.75 309.7h3.05v19.6h-3.05z" fill="#8cf278"/><path d="M1625.50 289.3h3.05V309.7h-3.05z" fill="#97f56d"/><path d="M1625.50 309.7h3.05v37.1h-3.05z" fill="#e16028"/><path d="M1628.25 286.9h3.05V309.7h-3.05z" fill="#f2943b"/><path d="M1628.25 309.7h3.05v14.9h-3.05z" fill="#51c3d5"/><path d="M1631.00 262.9h3.05V309.7h-3.05z" fill="#4359ca"/><path d="M1631.00 309.7h3.05v14.7h-3.05z" fill="#4b86eb"/><path d="M1633.75 293.9h3.05V309.7h-3.05z" fill="#ec7530"/><path d="M1633.75 309.7h3.05v16.8h-3.05z" fill="#4faae6"/><path d="M1636.50 294.4h3.05V309.7h-3.05z" fill="#edc049"/><path d="M1636.50 309.7h3.05v14.1h-3.05z" fill="#51c1d8"/><path d="M1639.25 298.2h3.05V309.7h-3.05z" fill="#f08937"/><path d="M1639.25 309.7h3.05v19.6h-3.05z" fill="#4e9eec"/><path d="M1642.00 277.5h3.05V309.7h-3.05z" fill="#e8cf4e"/><path d="M1642.00 309.7h3.05v22.4h-3.05z" fill="#54cdc7"/><path d="M1644.75 285.9h3.05V309.7h-3.05z" fill="#a6f366"/><path d="M1644.75 309.7h3.05v25.5h-3.05z" fill="#61e3a3"/><path d="M1647.50 271.8h3.05V309.7h-3.05z" fill="#56d1c0"/><path d="M1647.50 309.7h3.05v25.7h-3.05z" fill="#50bedb"/><path d="M1650.25 302.1h3.05V309.7h-3.05z" fill="#ed7730"/><path d="M1650.25 309.7h3.05v19.7h-3.05z" fill="#57d8b7"/><path d="M1653.00 300.4h3.05V309.7h-3.05z" fill="#ecc24a"/><path d="M1653.00 309.7h3.05v16.4h-3.05z" fill="#55d1c1"/><path d="M1655.75 289.3h3.05V309.7h-3.05z" fill="#c8e957"/><path d="M1655.75 309.7h3.05v18.4h-3.05z" fill="#96f56e"/><path d="M1658.50 290.3h3.05V309.7h-3.05z" fill="#eaca4c"/><path d="M1658.50 309.7h3.05v26.4h-3.05z" fill="#7aec8a"/><path d="M1661.25 266.0h3.05V309.7h-3.05z" fill="#4359ca"/><path d="M1661.25 309.7h3.05v41.3h-3.05z" fill="#4a80ea"/><path d="M1664.00 280.6h3.05V309.7h-3.05z" fill="#85ef7f"/><path d="M1664.00 309.7h3.05v16.5h-3.05z" fill="#4c8ced"/><path d="M1666.75 280.6h3.05V309.7h-3.05z" fill="#59deaf"/><path d="M1666.75 309.7h3.05v27.6h-3.05z" fill="#50bade"/><path d="M1699.75 267.7h3.05V309.7h-3.05z" fill="#4e9aee"/><path d="M1699.75 309.7h3.05v40.6h-3.05z" fill="#4fafe4"/><path d="M1702.50 267.7h3.05V309.7h-3.05z" fill="#4a82ea"/><path d="M1702.50 309.7h3.05v41.9h-3.05z" fill="#4fafe4"/><path d="M1705.25 276.4h3.05V309.7h-3.05z" fill="#55d0c3"/><path d="M1705.25 309.7h3.05v40.2h-3.05z" fill="#56d4bc"/><path d="M1708.00 277.7h3.05V309.7h-3.05z" fill="#58d9b5"/><path d="M1708.00 309.7h3.05v40.0h-3.05z" fill="#58d9b5"/><path d="M1710.75 261.2h3.05V309.7h-3.05z" fill="#30123b"/><path d="M1710.75 309.7h3.05v49.0h-3.05z" fill="#4fafe3"/><path d="M1713.50 261.2h3.05V309.7h-3.05z" fill="#30123b"/><path d="M1713.50 309.7h3.05v49.0h-3.05z" fill="#4fb1e2"/><path d="M1716.25 261.2h3.05V309.7h-3.05z" fill="#30123b"/><path d="M1716.25 309.7h3.05v49.0h-3.05z" fill="#4fb3e1"/><path d="M1719.00 261.2h3.05V309.7h-3.05z" fill="#30123b"/><path d="M1719.00 309.7h3.05v49.0h-3.05z" fill="#50b5e0"/><path d="M1721.75 261.2h3.05V309.7h-3.05z" fill="#30123b"/><path d="M1721.75 309.7h3.05v49.0h-3.05z" fill="#50b7df"/><path d="M1724.50 261.2h3.05V309.7h-3.05z" fill="#30123b"/><path d="M1724.50 309.7h3.05v49.0h-3.05z" fill="#50b9df"/><path d="M1774.00 261.2h3.05V309.7h-3.05z" fill="#71e893"/><path d="M1774.00 309.7h3.05v49.0h-3.05z" fill="#7a180c"/><path d="M1776.75 261.2h3.05V309.7h-3.05z" fill="#71e893"/><path d="M1776.75 309.7h3.05v49.0h-3.05z" fill="#7a180c"/><path d="M1782.25 261.2h3.05V309.7h-3.05z" fill="#341e58"/><path d="M1782.25 309.7h3.05v49.0h-3.05z" fill="#8c2010"/><path d="M1785.00 261.2h3.05V309.7h-3.05z" fill="#341e58"/><path d="M1785.00 309.7h3.05v49.0h-3.05z" fill="#8c2010"/><path d="M1798.75 266.8h3.05V309.7h-3.05z" fill="#4359ca"/><path d="M1798.75 309.7h3.05v49.0h-3.05z" fill="#ec712e"/><path d="M1801.50 271.9h3.05V309.7h-3.05z" fill="#4b85eb"/><path d="M1801.50 309.7h3.05v48.1h-3.05z" fill="#ef8636"/><path d="M1804.25 268.7h3.05V309.7h-3.05z" fill="#5ae0ab"/><path d="M1804.25 309.7h3.05v29.0h-3.05z" fill="#e9cc4d"/><path d="M1807.00 267.1h3.05V309.7h-3.05z" fill="#56d2c0"/><path d="M1807.00 309.7h3.05v32.5h-3.05z" fill="#b2f160"/><path d="M1809.75 261.2h3.05V309.7h-3.05z" fill="#58d9b6"/><path d="M1809.75 309.7h3.05v31.1h-3.05z" fill="#b7f15d"/><path d="M1812.50 277.3h3.05V309.7h-3.05z" fill="#50bbde"/><path d="M1812.50 309.7h3.05v28.9h-3.05z" fill="#f0b746"/><path d="M1815.25 267.8h3.05V309.7h-3.05z" fill="#4a7ee9"/><path d="M1815.25 309.7h3.05v21.4h-3.05z" fill="#f0b546"/><path d="M1818.00 261.2h3.05V309.7h-3.05z" fill="#4770e4"/><path d="M1818.00 309.7h3.05v21.3h-3.05z" fill="#e9ce4d"/><path d="M1820.75 281.0h3.05V309.7h-3.05z" fill="#4d92ef"/><path d="M1820.75 309.7h3.05v34.8h-3.05z" fill="#f2ae44"/><path d="M1823.50 268.9h3.05V309.7h-3.05z" fill="#50bade"/><path d="M1823.50 309.7h3.05v21.3h-3.05z" fill="#f2923a"/><path d="M1826.25 292.4h3.05V309.7h-3.05z" fill="#52c6d0"/><path d="M1826.25 309.7h3.05v26.8h-3.05z" fill="#f2b144"/><path d="M1829.00 284.4h3.05V309.7h-3.05z" fill="#50bcdd"/><path d="M1829.00 309.7h3.05v30.8h-3.05z" fill="#d6e154"/><path d="M1831.75 267.6h3.05V309.7h-3.05z" fill="#56d1c0"/><path d="M1831.75 309.7h3.05v19.7h-3.05z" fill="#e0db51"/><path d="M1834.50 265.9h3.05V309.7h-3.05z" fill="#6ce798"/><path d="M1834.50 309.7h3.05v25.4h-3.05z" fill="#aaf364"/><path d="M1837.25 269.5h3.05V309.7h-3.05z" fill="#56d1c0"/><path d="M1837.25 309.7h3.05v19.9h-3.05z" fill="#dfdb52"/><path d="M1840.00 296.7h3.05V309.7h-3.05z" fill="#c5eb58"/><path d="M1840.00 309.7h3.05v30.6h-3.05z" fill="#a3f368"/><path d="M1842.75 287.3h3.05V309.7h-3.05z" fill="#76ea8e"/><path d="M1842.75 309.7h3.05v23.4h-3.05z" fill="#82ee82"/><path d="M1845.50 280.4h3.05V309.7h-3.05z" fill="#87f07d"/><path d="M1845.50 309.7h3.05v41.5h-3.05z" fill="#b2f160"/><path d="M1848.25 283.4h3.05V309.7h-3.05z" fill="#b2f160"/><path d="M1848.25 309.7h3.05v24.0h-3.05z" fill="#a4f367"/><path d="M1851.00 284.0h3.05V309.7h-3.05z" fill="#9af56c"/><path d="M1851.00 309.7h3.05v49.0h-3.05z" fill="#8ff375"/><path d="M1853.75 277.7h3.05V309.7h-3.05z" fill="#aef262"/><path d="M1853.75 309.7h3.05v35.4h-3.05z" fill="#93f471"/><path d="M1856.50 294.1h3.05V309.7h-3.05z" fill="#bfef5a"/><path d="M1856.50 309.7h3.05v42.5h-3.05z" fill="#9ff469"/><path d="M1859.25 291.2h3.05V309.7h-3.05z" fill="#d3e355"/><path d="M1859.25 309.7h3.05v38.7h-3.05z" fill="#b6f15e"/><path d="M1862.00 279.0h3.05V309.7h-3.05z" fill="#b3f15f"/><path d="M1862.00 309.7h3.05v35.6h-3.05z" fill="#81ee83"/><path d="M1864.75 284.8h3.05V309.7h-3.05z" fill="#cfe556"/><path d="M1864.75 309.7h3.05v35.6h-3.05z" fill="#aff262"/><path d="M1867.50 286.7h3.05V309.7h-3.05z" fill="#e0db51"/><path d="M1867.50 309.7h3.05v33.3h-3.05z" fill="#f5a541"/><path d="M1870.25 284.8h3.05V309.7h-3.05z" fill="#cae857"/><path d="M1870.25 309.7h3.05v28.0h-3.05z" fill="#5be1a9"/><path d="M1873.00 293.3h3.05V309.7h-3.05z" fill="#e2d951"/><path d="M1873.00 309.7h3.05v31.0h-3.05z" fill="#b4f15f"/><path d="M1875.75 288.7h3.05V309.7h-3.05z" fill="#d0e555"/><path d="M1875.75 309.7h3.05v26.3h-3.05z" fill="#97f56e"/><path d="M1878.50 282.3h3.05V309.7h-3.05z" fill="#59dfad"/><path d="M1878.50 309.7h3.05v27.8h-3.05z" fill="#a3f367"/><path d="M1881.25 282.2h3.05V309.7h-3.05z" fill="#5ee2a6"/><path d="M1881.25 309.7h3.05v25.7h-3.05z" fill="#9cf46b"/><path d="M1884.00 280.9h3.05V309.7h-3.05z" fill="#58dab5"/><path d="M1884.00 309.7h3.05v31.2h-3.05z" fill="#6ee896"/><path d="M1886.75 269.8h3.05V309.7h-3.05z" fill="#50bbde"/><path d="M1886.75 309.7h3.05v25.9h-3.05z" fill="#59dfad"/><path d="M1889.50 279.0h3.05V309.7h-3.05z" fill="#55d1c1"/><path d="M1889.50 309.7h3.05v22.6h-3.05z" fill="#89f17b"/><path d="M1892.25 285.3h3.05V309.7h-3.05z" fill="#5ae0ac"/><path d="M1892.25 309.7h3.05v36.3h-3.05z" fill="#f5a541"/><path d="M1895.00 283.8h3.05V309.7h-3.05z" fill="#b1f261"/><path d="M1895.00 309.7h3.05v19.1h-3.05z" fill="#6fe895"/><path d="M1897.75 295.2h3.05V309.7h-3.05z" fill="#8af17a"/><path d="M1897.75 309.7h3.05v22.5h-3.05z" fill="#56d1c0"/><path d="M1900.50 287.3h3.05V309.7h-3.05z" fill="#dfdb52"/><path d="M1900.50 309.7h3.05v17.0h-3.05z" fill="#7aec8a"/><path d="M1903.25 294.6h3.05V309.7h-3.05z" fill="#f4a140"/><path d="M1903.25 309.7h3.05v8.7h-3.05z" fill="#b8f15d"/><path d="M1906.00 275.4h3.05V309.7h-3.05z" fill="#4a80ea"/><path d="M1906.00 309.7h3.05v39.3h-3.05z" fill="#f5a541"/><path d="M1908.75 294.4h3.05V309.7h-3.05z" fill="#f39b3d"/><path d="M1908.75 309.7h3.05v9.0h-3.05z" fill="#9ff46a"/><path d="M1911.50 298.6h3.05V309.7h-3.05z" fill="#f3ab43"/><path d="M1911.50 309.7h3.05v34.4h-3.05z" fill="#c8ea58"/><path d="M1914.25 295.2h3.05V309.7h-3.05z" fill="#f18e39"/><path d="M1914.25 309.7h3.05v13.4h-3.05z" fill="#c1ee59"/><path d="M1917.00 300.3h3.05V309.7h-3.05z" fill="#edc149"/><path d="M1917.00 309.7h3.05v15.1h-3.05z" fill="#63e4a1"/><path d="M1919.75 292.9h3.05V309.7h-3.05z" fill="#f19039"/><path d="M1919.75 309.7h3.05v13.0h-3.05z" fill="#57d6b9"/><path d="M1922.50 291.6h3.05V309.7h-3.05z" fill="#c7ea58"/><path d="M1922.50 309.7h3.05v14.2h-3.05z" fill="#73e991"/><path d="M1925.25 285.0h3.05V309.7h-3.05z" fill="#7ded87"/><path d="M1925.25 309.7h3.05v16.8h-3.05z" fill="#93f471"/><path d="M1928.00 286.2h3.05V309.7h-3.05z" fill="#6ee896"/><path d="M1928.00 309.7h3.05v23.1h-3.05z" fill="#91f373"/><path d="M1930.75 281.2h3.05V309.7h-3.05z" fill="#85ef7f"/><path d="M1930.75 309.7h3.05v20.5h-3.05z" fill="#bbf05c"/><path d="M1933.50 283.6h3.05V309.7h-3.05z" fill="#52c5d2"/><path d="M1933.50 309.7h3.05v19.7h-3.05z" fill="#59ddaf"/><path d="M1936.25 273.7h3.05V309.7h-3.05z" fill="#55d0c3"/><path d="M1936.25 309.7h3.05v25.6h-3.05z" fill="#50b5e0"/><path d="M1939.00 264.2h3.05V309.7h-3.05z" fill="#4a80ea"/><path d="M1939.00 309.7h3.05v35.5h-3.05z" fill="#4fa5e8"/><path d="M1941.75 273.3h3.05V309.7h-3.05z" fill="#4359ca"/><path d="M1941.75 309.7h3.05v29.5h-3.05z" fill="#4a83ea"/><path d="M1944.50 277.1h3.05V309.7h-3.05z" fill="#6fe895"/><path d="M1944.50 309.7h3.05v20.1h-3.05z" fill="#4fa1eb"/><path d="M1947.25 276.5h3.05V309.7h-3.05z" fill="#50bedc"/><path d="M1947.25 309.7h3.05v45.4h-3.05z" fill="#e16028"/><path d="M1950.00 261.2h3.05V309.7h-3.05z" fill="#4e98ef"/><path d="M1950.00 309.7h3.05v49.0h-3.05z" fill="#4c89ec"/><path d="M1952.75 267.3h3.05V309.7h-3.05z" fill="#57d5bb"/><path d="M1952.75 309.7h3.05v44.8h-3.05z" fill="#55cec5"/><path d="M1955.50 271.0h3.05V309.7h-3.05z" fill="#57d7b8"/><path d="M1955.50 309.7h3.05v33.3h-3.05z" fill="#59dfad"/><path d="M1958.25 284.2h3.05V309.7h-3.05z" fill="#94f470"/><path d="M1958.25 309.7h3.05v28.9h-3.05z" fill="#8cf278"/><path d="M1961.00 280.0h3.05V309.7h-3.05z" fill="#54cbc9"/><path d="M1961.00 309.7h3.05v27.0h-3.05z" fill="#a9f364"/><path d="M1963.75 273.6h3.05V309.7h-3.05z" fill="#4d92ef"/><path d="M1963.75 309.7h3.05v22.9h-3.05z" fill="#d1e455"/><path d="M1966.50 287.1h3.05V309.7h-3.05z" fill="#4c89ec"/><path d="M1966.50 309.7h3.05v45.3h-3.05z" fill="#e5d750"/><path d="M1969.25 267.5h3.05V309.7h-3.05z" fill="#4b86eb"/><path d="M1969.25 309.7h3.05v49.0h-3.05z" fill="#e6d650"/><path d="M1972.00 278.3h3.05V309.7h-3.05z" fill="#4fa0eb"/><path d="M1972.00 309.7h3.05v41.5h-3.05z" fill="#d5e254"/><path d="M1974.75 278.6h3.05V309.7h-3.05z" fill="#7cec88"/><path d="M1974.75 309.7h3.05v27.6h-3.05z" fill="#e6d750"/><path d="M1977.50 291.1h3.05V309.7h-3.05z" fill="#f08736"/><path d="M1977.50 309.7h3.05v28.6h-3.05z" fill="#c8ea57"/><path d="M1980.25 287.1h3.05V309.7h-3.05z" fill="#f39b3d"/><path d="M1980.25 309.7h3.05v27.6h-3.05z" fill="#dcdd52"/><path d="M1983.00 265.1h3.05V309.7h-3.05z" fill="#56d1c0"/><path d="M1983.00 309.7h3.05v33.1h-3.05z" fill="#4fafe4"/><path d="M1985.75 297.0h3.05V309.7h-3.05z" fill="#b63518"/><path d="M1985.75 309.7h3.05v15.7h-3.05z" fill="#c3ed59"/><path d="M1988.50 296.8h3.05V309.7h-3.05z" fill="#f39a3d"/><path d="M1988.50 309.7h3.05v16.4h-3.05z" fill="#69e69b"/><path d="M1991.25 297.4h3.05V309.7h-3.05z" fill="#f49f3f"/><path d="M1991.25 309.7h3.05v14.5h-3.05z" fill="#72e992"/><path d="M1994.00 291.3h3.05V309.7h-3.05z" fill="#ebc74b"/><path d="M1994.00 309.7h3.05v21.7h-3.05z" fill="#5ae0ab"/><path d="M1996.75 286.2h3.05V309.7h-3.05z" fill="#d7e154"/><path d="M1996.75 309.7h3.05v17.7h-3.05z" fill="#69e69b"/><path d="M1999.50 288.2h3.05V309.7h-3.05z" fill="#ecc24a"/><path d="M1999.50 309.7h3.05v21.4h-3.05z" fill="#69e69b"/><path d="M2002.25 290.7h3.05V309.7h-3.05z" fill="#d9df53"/><path d="M2002.25 309.7h3.05v29.0h-3.05z" fill="#56d4bc"/><path d="M2005.00 286.0h3.05V309.7h-3.05z" fill="#f49f3f"/><path d="M2005.00 309.7h3.05v22.0h-3.05z" fill="#52c4d4"/><path d="M2007.75 292.1h3.05V309.7h-3.05z" fill="#e8d14e"/><path d="M2007.75 309.7h3.05v21.1h-3.05z" fill="#58d9b5"/><path d="M2167.25 295.2h3.05V309.7h-3.05z" fill="#c7eb58"/><path d="M2167.25 309.7h3.05v21.8h-3.05z" fill="#f1b245"/><path d="M2170.00 267.0h3.05V309.7h-3.05z" fill="#4fafe4"/><path d="M2170.00 309.7h3.05v13.8h-3.05z" fill="#dddc52"/><path d="M2172.75 264.8h3.05V309.7h-3.05z" fill="#4a80ea"/><path d="M2172.75 309.7h3.05v22.3h-3.05z" fill="#99f56c"/><path d="M2175.50 292.1h3.05V309.7h-3.05z" fill="#e0db52"/><path d="M2175.50 309.7h3.05v11.8h-3.05z" fill="#edbf49"/><path d="M2178.25 293.7h3.05V309.7h-3.05z" fill="#dedc52"/><path d="M2178.25 309.7h3.05v19.6h-3.05z" fill="#dcdd53"/><path d="M2181.00 293.7h3.05V309.7h-3.05z" fill="#e2d951"/><path d="M2181.00 309.7h3.05v10.1h-3.05z" fill="#b3f15f"/><path d="M2183.75 293.1h3.05V309.7h-3.05z" fill="#c6eb58"/><path d="M2183.75 309.7h3.05v17.2h-3.05z" fill="#baf15c"/><path d="M2186.50 279.6h3.05V309.7h-3.05z" fill="#6be799"/><path d="M2186.50 309.7h3.05v14.6h-3.05z" fill="#bdf05b"/><path d="M2189.25 295.9h3.05V309.7h-3.05z" fill="#6ee896"/><path d="M2189.25 309.7h3.05v17.0h-3.05z" fill="#ebc84b"/><path d="M2192.00 283.3h3.05V309.7h-3.05z" fill="#a5f366"/><path d="M2192.00 309.7h3.05v14.9h-3.05z" fill="#a7f366"/><path d="M2194.75 293.3h3.05V309.7h-3.05z" fill="#b3f160"/><path d="M2194.75 309.7h3.05v41.2h-3.05z" fill="#4fafe4"/><path d="M2197.50 293.9h3.05V309.7h-3.05z" fill="#ec7630"/><path d="M2197.50 309.7h3.05v17.4h-3.05z" fill="#d4e254"/><path d="M2200.25 272.6h3.05V309.7h-3.05z" fill="#56d1c0"/><path d="M2200.25 309.7h3.05v8.9h-3.05z" fill="#b7f15e"/><path d="M2203.00 293.1h3.05V309.7h-3.05z" fill="#ecc44a"/><path d="M2203.00 309.7h3.05v14.7h-3.05z" fill="#c1ee59"/><path d="M2205.75 293.8h3.05V309.7h-3.05z" fill="#98f56d"/><path d="M2205.75 309.7h3.05v31.3h-3.05z" fill="#c6eb58"/><path d="M2208.50 293.4h3.05V309.7h-3.05z" fill="#b4f15f"/><path d="M2208.50 309.7h3.05v30.2h-3.05z" fill="#f3ad43"/><path d="M2211.25 269.8h3.05V309.7h-3.05z" fill="#8ef276"/><path d="M2211.25 309.7h3.05v28.2h-3.05z" fill="#efb847"/><path d="M2214.00 293.1h3.05V309.7h-3.05z" fill="#9af56c"/><path d="M2214.00 309.7h3.05v21.9h-3.05z" fill="#c5ec58"/><path d="M2216.75 286.9h3.05V309.7h-3.05z" fill="#bfef5a"/><path d="M2216.75 309.7h3.05v15.8h-3.05z" fill="#a0f469"/><path d="M2219.50 292.7h3.05V309.7h-3.05z" fill="#eebc48"/><path d="M2219.50 309.7h3.05v40.6h-3.05z" fill="#4fafe4"/><path d="M2222.25 288.9h3.05V309.7h-3.05z" fill="#d3e355"/><path d="M2222.25 309.7h3.05v26.0h-3.05z" fill="#b7f15e"/><path d="M2225.00 281.9h3.05V309.7h-3.05z" fill="#93f471"/><path d="M2225.00 309.7h3.05v31.7h-3.05z" fill="#b8f15d"/><path d="M2227.75 282.5h3.05V309.7h-3.05z" fill="#54cdc7"/><path d="M2227.75 309.7h3.05v35.1h-3.05z" fill="#6be799"/><path d="M2230.50 285.7h3.05V309.7h-3.05z" fill="#e2da51"/><path d="M2230.50 309.7h3.05v46.0h-3.05z" fill="#4a80ea"/><path d="M2233.25 293.5h3.05V309.7h-3.05z" fill="#e8d04e"/><path d="M2233.25 309.7h3.05v16.7h-3.05z" fill="#c4ec59"/><path d="M2236.00 297.9h3.05V309.7h-3.05z" fill="#eb702e"/><path d="M2236.00 309.7h3.05v21.9h-3.05z" fill="#85ef7f"/><path d="M2238.75 291.7h3.05V309.7h-3.05z" fill="#ec7630"/><path d="M2238.75 309.7h3.05v10.7h-3.05z" fill="#8cf278"/><path d="M2241.50 289.6h3.05V309.7h-3.05z" fill="#f39c3e"/><path d="M2241.50 309.7h3.05v24.4h-3.05z" fill="#a7f366"/><path d="M2244.25 290.4h3.05V309.7h-3.05z" fill="#f5a541"/><path d="M2244.25 309.7h3.05v12.7h-3.05z" fill="#a9f365"/><path d="M2247.00 294.3h3.05V309.7h-3.05z" fill="#ee7d32"/><path d="M2247.00 309.7h3.05v12.7h-3.05z" fill="#84ef80"/><path d="M2249.75 296.2h3.05V309.7h-3.05z" fill="#861d0e"/><path d="M2249.75 309.7h3.05v23.0h-3.05z" fill="#a3f368"/><path d="M2252.50 301.8h3.05V309.7h-3.05z" fill="#f3983c"/><path d="M2252.50 309.7h3.05v13.8h-3.05z" fill="#5ce2a8"/><path d="M2255.25 294.0h3.05V309.7h-3.05z" fill="#d9df53"/><path d="M2255.25 309.7h3.05v11.5h-3.05z" fill="#a1f469"/><path d="M2258.00 283.2h3.05V309.7h-3.05z" fill="#9cf46b"/><path d="M2258.00 309.7h3.05v10.2h-3.05z" fill="#adf262"/><path d="M2260.75 288.9h3.05V309.7h-3.05z" fill="#dade53"/><path d="M2260.75 309.7h3.05v10.6h-3.05z" fill="#60e3a4"/><path d="M2263.50 267.5h3.05V309.7h-3.05z" fill="#4359ca"/><path d="M2263.50 309.7h3.05v17.1h-3.05z" fill="#58d9b6"/><path d="M2266.25 266.7h3.05V309.7h-3.05z" fill="#71e893"/><path d="M2266.25 309.7h3.05v24.2h-3.05z" fill="#9cf46b"/><path d="M2269.00 290.3h3.05V309.7h-3.05z" fill="#d7e054"/><path d="M2269.00 309.7h3.05v21.5h-3.05z" fill="#50bade"/><path d="M2271.75 279.5h3.05V309.7h-3.05z" fill="#95f56f"/><path d="M2271.75 309.7h3.05v18.1h-3.05z" fill="#55d1c1"/><path d="M2274.50 281.3h3.05V309.7h-3.05z" fill="#e9ce4d"/><path d="M2274.50 309.7h3.05v26.5h-3.05z" fill="#55cfc4"/><path d="M2277.25 291.8h3.05V309.7h-3.05z" fill="#aff262"/><path d="M2277.25 309.7h3.05v19.1h-3.05z" fill="#52c6d1"/><path d="M2280.00 270.4h3.05V309.7h-3.05z" fill="#71e893"/><path d="M2280.00 309.7h3.05v24.1h-3.05z" fill="#9bf46b"/><path d="M2282.75 288.2h3.05V309.7h-3.05z" fill="#dddc52"/><path d="M2282.75 309.7h3.05v39.0h-3.05z" fill="#4a80ea"/><path d="M2285.50 290.9h3.05V309.7h-3.05z" fill="#dade53"/><path d="M2285.50 309.7h3.05v22.6h-3.05z" fill="#50c0da"/><path d="M2288.25 296.0h3.05V309.7h-3.05z" fill="#c2ee59"/><path d="M2288.25 309.7h3.05v24.6h-3.05z" fill="#8bf179"/><path d="M2291.00 269.2h3.05V309.7h-3.05z" fill="#4fafe4"/><path d="M2291.00 309.7h3.05v34.8h-3.05z" fill="#c8ea58"/><path d="M2293.75 292.6h3.05V309.7h-3.05z" fill="#eac94c"/><path d="M2293.75 309.7h3.05v10.0h-3.05z" fill="#75ea8f"/><path d="M2296.50 300.4h3.05V309.7h-3.05z" fill="#ec7630"/><path d="M2296.50 309.7h3.05v15.7h-3.05z" fill="#96f56e"/><path d="M2299.25 302.5h3.05V309.7h-3.05z" fill="#df5e27"/><path d="M2299.25 309.7h3.05v18.4h-3.05z" fill="#6be799"/><path d="M2302.00 288.4h3.05V309.7h-3.05z" fill="#e9cc4d"/><path d="M2302.00 309.7h3.05v28.1h-3.05z" fill="#74ea90"/><path d="M2304.75 273.8h3.05V309.7h-3.05z" fill="#59deae"/><path d="M2304.75 309.7h3.05v24.3h-3.05z" fill="#51c2d7"/><path d="M2307.50 282.4h3.05V309.7h-3.05z" fill="#59ddb0"/><path d="M2307.50 309.7h3.05v29.4h-3.05z" fill="#68e69c"/><path d="M2310.25 275.8h3.05V309.7h-3.05z" fill="#4359ca"/><path d="M2310.25 309.7h3.05v21.5h-3.05z" fill="#54cec6"/><path d="M2313.00 281.7h3.05V309.7h-3.05z" fill="#b0f261"/><path d="M2313.00 309.7h3.05v22.9h-3.05z" fill="#a3f367"/><path d="M2315.75 295.2h3.05V309.7h-3.05z" fill="#78eb8c"/><path d="M2315.75 309.7h3.05v30.1h-3.05z" fill="#99f56d"/><path d="M2318.50 282.0h3.05V309.7h-3.05z" fill="#71e993"/><path d="M2318.50 309.7h3.05v25.1h-3.05z" fill="#54cdc7"/><path d="M2321.25 271.2h3.05V309.7h-3.05z" fill="#5ae0ab"/><path d="M2321.25 309.7h3.05v36.8h-3.05z" fill="#71e993"/><path d="M2324.00 282.7h3.05V309.7h-3.05z" fill="#98f56d"/><path d="M2324.00 309.7h3.05v23.3h-3.05z" fill="#58dab4"/><path d="M2326.75 279.9h3.05V309.7h-3.05z" fill="#6be799"/><path d="M2326.75 309.7h3.05v14.2h-3.05z" fill="#88f07c"/><path d="M2329.50 296.4h3.05V309.7h-3.05z" fill="#c0ef5a"/><path d="M2329.50 309.7h3.05v37.8h-3.05z" fill="#4a80ea"/><path d="M2332.25 284.5h3.05V309.7h-3.05z" fill="#6be799"/><path d="M2332.25 309.7h3.05v36.8h-3.05z" fill="#4fa6e8"/><path d="M2335.00 293.3h3.05V309.7h-3.05z" fill="#73e991"/><path d="M2335.00 309.7h3.05v41.3h-3.05z" fill="#4562d7"/><path d="M2337.75 280.2h3.05V309.7h-3.05z" fill="#8ef276"/><path d="M2337.75 309.7h3.05v40.7h-3.05z" fill="#476fe4"/><path d="M2340.50 287.6h3.05V309.7h-3.05z" fill="#cee656"/><path d="M2340.50 309.7h3.05v19.6h-3.05z" fill="#50b5e0"/><path d="M2343.25 283.0h3.05V309.7h-3.05z" fill="#dcdd52"/><path d="M2343.25 309.7h3.05v18.3h-3.05z" fill="#66e59e"/><path d="M2346.00 291.2h3.05V309.7h-3.05z" fill="#a2f368"/><path d="M2346.00 309.7h3.05v21.3h-3.05z" fill="#77eb8d"/><path d="M2348.75 288.2h3.05V309.7h-3.05z" fill="#7bec89"/><path d="M2348.75 309.7h3.05v12.6h-3.05z" fill="#b1f261"/><path d="M2351.50 288.6h3.05V309.7h-3.05z" fill="#7cec88"/><path d="M2351.50 309.7h3.05v10.2h-3.05z" fill="#89f17b"/><path d="M2354.25 299.7h3.05V309.7h-3.05z" fill="#f1b145"/><path d="M2354.25 309.7h3.05v13.1h-3.05z" fill="#58dbb3"/><path d="M2357.00 297.3h3.05V309.7h-3.05z" fill="#f08937"/><path d="M2357.00 309.7h3.05v17.4h-3.05z" fill="#5ee2a6"/><path d="M2359.75 303.9h3.05V309.7h-3.05z" fill="#f1923a"/><path d="M2359.75 309.7h3.05v16.5h-3.05z" fill="#71e993"/><path d="M2362.50 295.1h3.05V309.7h-3.05z" fill="#f39d3e"/><path d="M2362.50 309.7h3.05v18.6h-3.05z" fill="#5be1a9"/><path d="M2365.25 296.2h3.05V309.7h-3.05z" fill="#c5eb58"/><path d="M2365.25 309.7h3.05v16.4h-3.05z" fill="#74ea90"/><path d="M2368.00 289.0h3.05V309.7h-3.05z" fill="#c4ec59"/><path d="M2368.00 309.7h3.05v37.8h-3.05z" fill="#4fafe4"/><path d="M2370.75 289.6h3.05V309.7h-3.05z" fill="#e8d24e"/><path d="M2370.75 309.7h3.05v18.6h-3.05z" fill="#a4f367"/><path d="M2373.50 298.5h3.05V309.7h-3.05z" fill="#dd5b26"/><path d="M2373.50 309.7h3.05v17.2h-3.05z" fill="#53c7cf"/><path d="M2376.25 292.3h3.05V309.7h-3.05z" fill="#f1b345"/><path d="M2376.25 309.7h3.05v25.1h-3.05z" fill="#77eb8d"/><path d="M2379.00 297.9h3.05V309.7h-3.05z" fill="#bfef5a"/><path d="M2379.00 309.7h3.05v37.6h-3.05z" fill="#e16028"/><path d="M2381.75 282.9h3.05V309.7h-3.05z" fill="#79eb8b"/><path d="M2381.75 309.7h3.05v41.7h-3.05z" fill="#c8ea58"/><path d="M2384.50 289.1h3.05V309.7h-3.05z" fill="#edc049"/><path d="M2384.50 309.7h3.05v23.2h-3.05z" fill="#54cbc9"/><path d="M2387.25 279.0h3.05V309.7h-3.05z" fill="#e05f28"/><path d="M2387.25 309.7h3.05v23.0h-3.05z" fill="#4c89ec"/><path d="M2390.00 276.8h3.05V309.7h-3.05z" fill="#eb6e2d"/><path d="M2390.00 309.7h3.05v41.5h-3.05z" fill="#4fafe4"/><path d="M2392.75 275.1h3.05V309.7h-3.05z" fill="#d4e254"/><path d="M2392.75 309.7h3.05v30.2h-3.05z" fill="#f3ab43"/><path d="M2395.50 292.2h3.05V309.7h-3.05z" fill="#b4f15f"/><path d="M2395.50 309.7h3.05v19.4h-3.05z" fill="#f3ac43"/><path d="M2398.25 271.9h3.05V309.7h-3.05z" fill="#4face5"/><path d="M2398.25 309.7h3.05v36.6h-3.05z" fill="#df5e27"/><path d="M2401.00 275.6h3.05V309.7h-3.05z" fill="#4fa4e9"/><path d="M2401.00 309.7h3.05v37.3h-3.05z" fill="#d85424"/><path d="M2403.75 276.1h3.05V309.7h-3.05z" fill="#4359ca"/><path d="M2403.75 309.7h3.05v35.5h-3.05z" fill="#eebb48"/><path d="M2406.50 288.7h3.05V309.7h-3.05z" fill="#59ddb0"/><path d="M2406.50 309.7h3.05v39.3h-3.05z" fill="#e16028"/><path d="M2409.25 292.2h3.05V309.7h-3.05z" fill="#8df277"/><path d="M2409.25 309.7h3.05v20.4h-3.05z" fill="#81ee83"/><path d="M2412.00 294.5h3.05V309.7h-3.05z" fill="#d6e154"/><path d="M2412.00 309.7h3.05v12.6h-3.05z" fill="#e7d54f"/><path d="M2414.75 292.3h3.05V309.7h-3.05z" fill="#dbde53"/><path d="M2414.75 309.7h3.05v11.3h-3.05z" fill="#f2933b"/><path d="M2417.50 299.7h3.05V309.7h-3.05z" fill="#e7d34f"/><path d="M2417.50 309.7h3.05v10.2h-3.05z" fill="#c03a1a"/><path d="M2640.25 299.3h3.05V309.7h-3.05z" fill="#ef8736"/><path d="M2640.25 309.7h3.05v6.9h-3.05z" fill="#e9ce4d"/><path d="M2643.00 268.3h3.05V309.7h-3.05z" fill="#4359ca"/><path d="M2643.00 309.7h3.05v20.5h-3.05z" fill="#efba47"/><path d="M2645.75 273.6h3.05V309.7h-3.05z" fill="#e2da51"/><path d="M2645.75 309.7h3.05v31.6h-3.05z" fill="#e9cd4d"/><path d="M2648.50 263.9h3.05V309.7h-3.05z" fill="#4fa9e7"/><path d="M2648.50 309.7h3.05v40.7h-3.05z" fill="#f3983c"/><path d="M2651.25 275.7h3.05V309.7h-3.05z" fill="#58d9b5"/><path d="M2651.25 309.7h3.05v27.8h-3.05z" fill="#f08937"/><path d="M2654.00 292.2h3.05V309.7h-3.05z" fill="#acf263"/><path d="M2654.00 309.7h3.05v26.1h-3.05z" fill="#db5825"/><path d="M2656.75 279.6h3.05V309.7h-3.05z" fill="#cee656"/><path d="M2656.75 309.7h3.05v25.2h-3.05z" fill="#ee7c32"/><path d="M2659.50 278.3h3.05V309.7h-3.05z" fill="#bef05a"/><path d="M2659.50 309.7h3.05v39.5h-3.05z" fill="#f2af44"/><path d="M2662.25 285.4h3.05V309.7h-3.05z" fill="#ed7730"/><path d="M2662.25 309.7h3.05v24.0h-3.05z" fill="#f4a842"/><path d="M2665.00 273.0h3.05V309.7h-3.05z" fill="#8af17a"/><path d="M2665.00 309.7h3.05v33.0h-3.05z" fill="#eac94c"/><path d="M2667.75 274.0h3.05V309.7h-3.05z" fill="#6ee896"/><path d="M2667.75 309.7h3.05v37.4h-3.05z" fill="#eac84c"/><path d="M2670.50 287.5h3.05V309.7h-3.05z" fill="#52c5d3"/><path d="M2670.50 309.7h3.05v30.6h-3.05z" fill="#ed7931"/><path d="M2673.25 261.2h3.05V309.7h-3.05z" fill="#53c8ce"/><path d="M2673.25 309.7h3.05v39.9h-3.05z" fill="#c7ea58"/><path d="M2676.00 280.1h3.05V309.7h-3.05z" fill="#aaf264"/><path d="M2676.00 309.7h3.05v41.3h-3.05z" fill="#cee656"/><path d="M2678.75 271.4h3.05V309.7h-3.05z" fill="#50bbde"/><path d="M2678.75 309.7h3.05v23.1h-3.05z" fill="#c4ed59"/><path d="M2681.50 277.5h3.05V309.7h-3.05z" fill="#e0db51"/><path d="M2681.50 309.7h3.05v49.0h-3.05z" fill="#f08c38"/><path d="M2684.25 296.3h3.05V309.7h-3.05z" fill="#c0ef5a"/><path d="M2684.25 309.7h3.05v23.5h-3.05z" fill="#a7f366"/><path d="M2687.00 301.1h3.05V309.7h-3.05z" fill="#e9cd4d"/><path d="M2687.00 309.7h3.05v17.1h-3.05z" fill="#f1b145"/><path d="M2689.75 306.2h3.05V309.7h-3.05z" fill="#d7e054"/><path d="M2689.75 309.7h3.05v4.2h-3.05z" fill="#eebe48"/><path d="M2695.25 286.0h3.05V309.7h-3.05z" fill="#4c8ced"/><path d="M2695.25 309.7h3.05v16.3h-3.05z" fill="#e1da51"/><path d="M2698.00 286.1h3.05V309.7h-3.05z" fill="#ebc84b"/><path d="M2698.00 309.7h3.05v14.9h-3.05z" fill="#f4a842"/><path d="M2700.75 283.0h3.05V309.7h-3.05z" fill="#89f17b"/><path d="M2700.75 309.7h3.05v13.7h-3.05z" fill="#f5a340"/><path d="M2703.50 302.2h3.05V309.7h-3.05z" fill="#f08937"/><path d="M2703.50 309.7h3.05v10.2h-3.05z" fill="#e9cc4d"/><path d="M2706.25 277.0h3.05V309.7h-3.05z" fill="#4359ca"/><path d="M2706.25 309.7h3.05v13.2h-3.05z" fill="#9ff469"/><path d="M2709.00 261.2h3.05V309.7h-3.05z" fill="#466be3"/><path d="M2709.00 309.7h3.05v32.9h-3.05z" fill="#ebc54b"/><path d="M2711.75 288.0h3.05V309.7h-3.05z" fill="#aff262"/><path d="M2711.75 309.7h3.05v29.1h-3.05z" fill="#f3ac43"/><path d="M2714.50 279.5h3.05V309.7h-3.05z" fill="#e4d850"/><path d="M2714.50 309.7h3.05v15.1h-3.05z" fill="#ed7830"/><path d="M2717.25 282.2h3.05V309.7h-3.05z" fill="#a4f367"/><path d="M2717.25 309.7h3.05v27.6h-3.05z" fill="#c8ea58"/><path d="M2720.00 283.1h3.05V309.7h-3.05z" fill="#b3f160"/><path d="M2720.00 309.7h3.05v20.4h-3.05z" fill="#bf391a"/><path d="M2722.75 277.1h3.05V309.7h-3.05z" fill="#56d1c0"/><path d="M2722.75 309.7h3.05v45.2h-3.05z" fill="#51c2d6"/><path d="M2733.75 264.7h3.05V309.7h-3.05z" fill="#4a80ea"/><path d="M2733.75 309.7h3.05v45.0h-3.05z" fill="#7a180c"/></g>
</g>
<rect x="432" y="360" width="2138" height="1200" fill="#020c2d"/>
<rect x="433" y="408" width="2136" height="180" fill="#03069a" stroke="#0000ff" stroke-width="2"/>
<text x="432.0" y="401" font-size="22" class="wt" textLength="121" lengthAdjust="spacing">| 23:47:00</text>
<text x="788.3" y="401" font-size="22" class="wt" textLength="121" lengthAdjust="spacing">| 23:47:05</text>
<text x="1144.7" y="401" font-size="22" class="wt" textLength="121" lengthAdjust="spacing">| 23:47:10</text>
<text x="1501.0" y="401" font-size="22" class="wt" textLength="121" lengthAdjust="spacing">| 23:47:15</text>
<text x="1857.3" y="401" font-size="22" class="wt" textLength="121" lengthAdjust="spacing">| 23:47:20</text>
<text x="2213.7" y="401" font-size="22" class="wt" textLength="121" lengthAdjust="spacing">| 23:47:25</text>
<path d="M432.0,629.2 433.5,626.7 435.0,631.1 436.5,633.7 438.0,634.4 439.5,628.9 441.0,639.6 442.5,640.4 444.0,638.8 445.5,637.6 447.0,641.1 448.5,634.3 450.0,632.3 451.5,627.8 453.0,631.0 454.5,632.6 456.0,636.3 457.5,638.6 459.0,640.4 460.5,637.3 462.0,634.5 463.5,639.1 465.0,634.0 466.5,630.8 468.0,634.8 469.5,634.5 471.0,632.2 472.5,627.7 474.0,631.0 475.5,636.1 477.0,634.4 478.5,632.9 480.0,633.2 481.5,634.3 483.0,633.0 484.5,630.7 486.0,629.4 487.5,635.4 489.0,637.5 490.5,630.0 492.0,625.1 493.5,626.5 495.0,626.4 496.5,628.8 498.0,629.9 499.5,632.0 501.0,631.7 502.5,635.8 504.0,636.0 505.5,636.1 507.0,635.2 508.5,637.0 510.0,633.0 511.5,630.7 513.0,633.2 514.5,636.8 516.0,634.7 517.5,633.4 519.0,632.7 520.5,635.9 522.0,634.9 523.5,638.2 525.0,634.0 526.5,631.5 528.0,634.5 529.5,631.3 531.0,632.1 532.5,636.2 534.0,637.8 535.5,628.0 537.0,628.0 538.5,633.0 540.0,638.8 541.5,644.0 543.0,635.7 544.5,621.8 546.0,623.2 547.5,624.3 549.0,617.3 550.5,613.1 552.0,609.0 553.5,605.5 555.0,604.8 556.5,606.5 558.0,611.6 559.5,612.4 561.0,611.3 562.5,617.8 564.0,615.1 565.5,613.7 567.0,617.2 568.5,620.2 570.0,617.5 571.5,615.1 573.0,618.8 574.5,618.2 576.0,617.8 577.5,624.2 579.0,624.7 580.5,624.8 582.0,623.8 583.5,625.1 585.0,619.8 586.5,619.9 588.0,619.6 589.5,622.7 591.0,622.3 592.5,620.1 594.0,624.2 595.5,626.2 597.0,623.2 598.5,627.5 600.0,633.7 601.5,633.3 603.0,632.4 604.5,628.2 606.0,629.2 607.5,622.9 609.0,627.7 610.5,628.1 612.0,623.3 613.5,618.3 615.0,624.4 616.5,625.0 618.0,615.6 619.5,624.9 621.0,632.9 622.5,632.6 624.0,629.9 625.5,636.4 627.0,634.4 628.5,628.4 630.0,626.0 631.5,629.5 633.0,628.2 634.5,622.5 636.0,622.1 637.5,620.0 639.0,624.8 640.5,623.8 642.0,623.7 643.5,624.2 645.0,626.5 646.5,626.9 648.0,626.9 649.5,627.4 651.0,629.8 652.5,632.3 654.0,633.1 655.5,633.0 657.0,628.5 658.5,624.3 660.0,629.3 661.5,629.1 663.0,624.7 664.5,621.7 666.0,619.8 667.5,620.5 669.0,622.9 670.5,624.2 672.0,628.7 673.5,628.4 675.0,626.3 676.5,625.8 678.0,630.7 679.5,629.2 681.0,632.0 682.5,635.8 684.0,636.9 685.5,628.0 687.0,631.0 688.5,635.3 690.0,637.9 691.5,633.9 693.0,629.7 694.5,622.2 696.0,623.3 697.5,627.5 699.0,632.3 700.5,627.4 702.0,621.8 703.5,624.4 705.0,626.8 706.5,628.2 708.0,626.7 709.5,628.1 711.0,633.8 712.5,634.5 714.0,629.9 715.5,627.1 717.0,628.2 718.5,625.2 720.0,625.1 721.5,622.3 723.0,621.8 724.5,620.1 726.0,624.4 727.5,623.6 729.0,621.2 730.5,621.0 732.0,622.8 733.5,625.7 735.0,620.6 736.5,621.2 738.0,616.7 739.5,616.3 741.0,616.4 742.5,621.3 744.0,623.2 745.5,623.3 747.0,618.1 748.5,622.0 750.0,629.8 751.5,626.8 753.0,623.8 754.5,627.2 756.0,628.4 757.5,624.8 759.0,623.5 760.5,621.8 762.0,625.3 763.5,625.3 765.0,626.6 766.5,622.7 768.0,618.8 769.5,621.0 771.0,617.0 772.5,618.3 774.0,614.4 775.5,611.9 777.0,612.3 778.5,611.4 780.0,614.9 781.5,622.7 783.0,619.8 784.5,612.7 786.0,611.7 787.5,611.1 789.0,605.4 790.5,605.3 792.0,603.9 793.5,606.5 795.0,612.2 796.5,614.1 798.0,620.0 799.5,624.2 801.0,620.9 802.5,619.0 804.0,626.8 805.5,624.7 807.0,625.3 808.5,626.0 810.0,627.4 811.5,638.3 813.0,636.6 814.5,634.7 816.0,638.6 817.5,634.8 819.0,633.7 820.5,634.4 822.0,636.4 823.5,633.2 825.0,634.5 826.5,630.2 828.0,626.5 829.5,632.1 831.0,635.0 832.5,631.0 834.0,621.7 835.5,609.0 837.0,600.5 838.5,606.4 840.0,612.3 841.5,618.1 843.0,616.4 844.5,613.5 846.0,605.6 847.5,604.6 849.0,608.2 850.5,615.3 852.0,614.6 853.5,611.9 855.0,611.6 856.5,609.8 858.0,603.0 859.5,601.9 861.0,603.5 862.5,606.1 864.0,606.9 865.5,609.6 867.0,609.4 868.5,611.1 870.0,615.1 871.5,619.5 873.0,626.0 874.5,626.2 876.0,626.5 877.5,627.9 879.0,626.7 880.5,627.0 882.0,626.8 883.5,622.2 885.0,621.2 886.5,619.6 888.0,622.6 889.5,626.7 891.0,627.1 892.5,630.6 894.0,632.7 895.5,628.3 897.0,630.0 898.5,626.1 900.0,624.9 901.5,623.4 903.0,627.8 904.5,621.9 906.0,623.1 907.5,624.0 909.0,622.0 910.5,621.6 912.0,625.0 913.5,623.3 915.0,623.0 916.5,625.0 918.0,630.3 919.5,626.5 921.0,619.8 922.5,621.8 924.0,618.5 925.5,619.7 927.0,624.2 928.5,630.3 930.0,629.7 931.5,628.1 933.0,628.2 934.5,626.2 936.0,621.4 937.5,617.2 939.0,616.3 940.5,621.2 942.0,622.3 943.5,620.8 945.0,622.3 946.5,629.8 948.0,629.3 949.5,627.6 951.0,627.9 952.5,626.9 954.0,625.0 955.5,620.7 957.0,620.4 958.5,619.6 960.0,621.4 961.5,621.9 963.0,617.2 964.5,621.0 966.0,625.9 967.5,624.7 969.0,623.5 970.5,623.5 972.0,623.9 973.5,625.7 975.0,620.7 976.5,623.4 978.0,623.7 979.5,625.0 981.0,623.0 982.5,616.5 984.0,620.5 985.5,620.4 987.0,618.0 988.5,615.6 990.0,618.1 991.5,616.7 993.0,619.3 994.5,617.3 996.0,617.7 997.5,612.4 999.0,612.9 1000.5,623.4 1002.0,629.6 1003.5,629.0 1005.0,629.1 1006.5,632.6 1008.0,633.3 1009.5,629.8 1011.0,629.1 1012.5,628.0 1014.0,624.9 1015.5,621.6 1017.0,617.3 1018.5,623.1 1020.0,620.5 1021.5,621.2 1023.0,623.0 1024.5,629.2 1026.0,626.8 1027.5,631.4 1029.0,632.1 1030.5,637.8 1032.0,633.6 1033.5,632.5 1035.0,633.4 1036.5,636.3 1038.0,629.9 1039.5,627.0 1041.0,625.0 1042.5,626.9 1044.0,627.1 1045.5,631.7 1047.0,635.3 1048.5,636.0 1050.0,630.4 1051.5,626.4 1053.0,622.0 1054.5,620.1 1056.0,621.9 1057.5,629.3 1059.0,632.0 1060.5,627.0 1062.0,625.3 1063.5,625.5 1065.0,624.3 1066.5,626.0 1068.0,628.5 1069.5,626.4 1071.0,630.4 1072.5,633.1 1074.0,631.4 1075.5,632.7 1077.0,638.6 1078.5,636.9 1080.0,631.7 1081.5,632.5 1083.0,637.0 1084.5,633.9 1086.0,633.7 1087.5,634.3 1089.0,632.6 1090.5,634.6 1092.0,634.6 1093.5,630.6 1095.0,628.2 1096.5,628.9 1098.0,625.9 1099.5,627.3 1101.0,627.4 1102.5,632.4 1104.0,631.6 1105.5,633.1 1107.0,628.6 1108.5,630.9 1110.0,634.7 1111.5,637.8 1113.0,640.0 1114.5,636.8 1116.0,642.5 1117.5,646.8 1119.0,638.9 1120.5,632.1 1122.0,632.4 1123.5,633.4 1125.0,634.1 1126.5,631.3 1128.0,630.5 1129.5,629.8 1131.0,630.0 1132.5,634.3 1134.0,635.1 1135.5,633.4 1137.0,638.7 1138.5,641.9 1140.0,641.3 1141.5,640.8 1143.0,638.5 1144.5,638.2 1146.0,634.8 1147.5,636.0 1149.0,639.0 1150.5,637.2 1152.0,639.6 1153.5,637.8 1155.0,637.8 1156.5,638.2 1158.0,636.7 1159.5,634.9 1161.0,636.7 1162.5,637.8 1164.0,637.1 1165.5,636.0 1167.0,636.8 1168.5,635.0 1170.0,633.7 1171.5,636.6 1173.0,636.4 1174.5,639.7 1176.0,639.5 1177.5,633.5 1179.0,638.1 1180.5,641.7 1182.0,637.6 1183.5,636.7 1185.0,634.1 1186.5,635.9 1188.0,635.5 1189.5,633.2 1191.0,629.8 1192.5,630.7 1194.0,633.1 1195.5,639.4 1197.0,641.6 1198.5,638.1 1200.0,639.6 1201.5,638.4 1203.0,637.6 1204.5,636.3 1206.0,640.6 1207.5,643.5 1209.0,642.6 1210.5,645.5 1212.0,647.0 1213.5,640.3 1215.0,637.9 1216.5,641.3 1218.0,640.8 1219.5,642.6 1221.0,644.9 1222.5,637.5 1224.0,635.7 1225.5,639.7 1227.0,640.5 1228.5,634.4 1230.0,634.4 1231.5,634.5 1233.0,632.2 1234.5,636.3 1236.0,646.2 1237.5,646.3 1239.0,639.2 1240.5,639.7 1242.0,640.1 1243.5,640.6 1245.0,639.7 1246.5,645.5 1248.0,641.7 1249.5,639.6 1251.0,636.6 1252.5,635.1 1254.0,632.8 1255.5,627.3 1257.0,630.7 1258.5,633.2 1260.0,636.3 1261.5,632.4 1263.0,637.3 1264.5,639.8 1266.0,635.4 1267.5,637.8 1269.0,635.5 1270.5,633.5 1272.0,629.5 1273.5,627.8 1275.0,631.1 1276.5,634.9 1278.0,636.1 1279.5,641.2 1281.0,632.3 1282.5,630.7 1284.0,630.3 1285.5,634.2 1287.0,637.0 1288.5,639.6 1290.0,634.4 1291.5,633.2 1293.0,632.3 1294.5,629.5 1296.0,624.2 1297.5,623.3 1299.0,624.9 1300.5,628.3 1302.0,628.1 1303.5,623.0 1305.0,620.3 1306.5,624.7 1308.0,628.9 1309.5,624.4 1311.0,626.5 1312.5,626.0 1314.0,626.6 1315.5,621.2 1317.0,627.0 1318.5,632.1 1320.0,631.5 1321.5,631.7 1323.0,631.6 1324.5,633.3 1326.0,630.3 1327.5,631.7 1329.0,629.5 1330.5,629.1 1332.0,625.4 1333.5,627.1 1335.0,623.9 1336.5,626.1 1338.0,627.8 1339.5,631.0 1341.0,634.3 1342.5,634.6 1344.0,629.5 1345.5,630.3 1347.0,626.9 1348.5,625.1 1350.0,623.6 1351.5,620.6 1353.0,616.8 1354.5,617.1 1356.0,623.4 1357.5,622.1 1359.0,621.0 1360.5,620.2 1362.0,625.8 1363.5,620.6 1365.0,622.4 1366.5,622.4 1368.0,624.3 1369.5,623.3 1371.0,624.1 1372.5,623.0 1374.0,622.2 1375.5,617.8 1377.0,617.5 1378.5,615.3 1380.0,610.7 1381.5,610.6 1383.0,611.2 1384.5,611.6 1386.0,609.6 1387.5,612.8 1389.0,615.1 1390.5,618.3 1392.0,617.8 1393.5,619.2 1395.0,621.6 1396.5,624.7 1398.0,619.1 1399.5,621.4 1401.0,620.2 1402.5,622.9 1404.0,624.9 1405.5,630.2 1407.0,634.0 1408.5,628.9 1410.0,629.5 1411.5,630.3 1413.0,626.2 1414.5,622.1 1416.0,623.7 1417.5,623.2 1419.0,621.3 1420.5,620.5 1422.0,626.2 1423.5,624.2 1425.0,625.8 1426.5,624.8 1428.0,627.8 1429.5,625.1 1431.0,624.5 1432.5,628.1 1434.0,626.0 1435.5,628.2 1437.0,625.7 1438.5,628.2 1440.0,628.2 1441.5,631.2 1443.0,631.0 1444.5,631.7 1446.0,631.0 1447.5,632.0 1449.0,632.8 1450.5,633.2 1452.0,635.0 1453.5,635.7 1455.0,632.3 1456.5,632.6 1458.0,631.7 1459.5,629.0 1461.0,629.8 1462.5,627.3 1464.0,627.1 1465.5,625.5 1467.0,621.6 1468.5,621.1 1470.0,622.1 1471.5,625.6 1473.0,627.7 1474.5,628.2 1476.0,628.0 1477.5,627.3 1479.0,625.0 1480.5,625.1 1482.0,622.9 1483.5,626.3 1485.0,624.4 1486.5,625.2 1488.0,625.6 1489.5,631.5 1491.0,632.3 1492.5,637.6 1494.0,637.9 1495.5,638.0 1497.0,637.4 1498.5,631.7 1500.0,633.2 1501.5,632.8 1503.0,635.6 1504.5,639.8 1506.0,635.5 1507.5,635.5 1509.0,633.9 1510.5,633.9 1512.0,631.8 1513.5,637.5 1515.0,639.3 1516.5,646.3 1518.0,644.6 1519.5,643.3 1521.0,639.6 1522.5,636.4 1524.0,631.9 1525.5,630.9 1527.0,629.4 1528.5,623.1 1530.0,627.2 1531.5,625.5 1533.0,628.3 1534.5,631.5 1536.0,639.3 1537.5,635.4 1539.0,624.6 1540.5,622.0 1542.0,625.4 1543.5,626.2 1545.0,618.4 1546.5,619.0 1548.0,620.9 1549.5,622.8 1551.0,625.7 1552.5,619.4 1554.0,613.6 1555.5,615.4 1557.0,628.5 1558.5,629.2 1560.0,627.9 1561.5,623.4 1563.0,628.0 1564.5,629.6 1566.0,630.5 1567.5,629.3 1569.0,631.0 1570.5,631.8 1572.0,634.3 1573.5,629.1 1575.0,631.3 1576.5,639.9 1578.0,637.6 1579.5,632.0 1581.0,640.6 1582.5,641.8 1584.0,632.8 1585.5,635.1 1587.0,637.7 1588.5,638.6 1590.0,635.9 1591.5,631.3 1593.0,634.5 1594.5,633.9 1596.0,632.9 1597.5,633.6 1599.0,636.9 1600.5,633.3 1602.0,639.2 1603.5,632.5 1605.0,629.0 1606.5,631.4 1608.0,638.5 1609.5,632.9 1611.0,631.9 1612.5,636.8 1614.0,639.5 1615.5,639.6 1617.0,631.0 1618.5,637.4 1620.0,637.0 1621.5,632.2 1623.0,632.1 1624.5,628.6 1626.0,635.5 1627.5,631.1 1629.0,632.6 1630.5,631.1 1632.0,631.0 1633.5,624.0 1635.0,621.7 1636.5,633.7 1638.0,632.8 1639.5,626.7 1641.0,628.9 1642.5,638.2 1644.0,626.6 1645.5,625.8 1647.0,629.4 1648.5,633.2 1650.0,632.2 1651.5,627.7 1653.0,634.6 1654.5,630.1 1656.0,635.1 1657.5,634.0 1659.0,627.9 1660.5,624.9 1662.0,633.6 1663.5,640.9 1665.0,629.5 1666.5,621.8 1668.0,630.3 1669.5,643.0 1671.0,652.0 1672.5,668.1 1674.0,679.6 1675.5,672.7 1677.0,669.3 1678.5,670.6 1680.0,659.8 1681.5,645.0 1683.0,638.5 1684.5,637.8 1686.0,623.3 1687.5,622.0 1689.0,626.4 1690.5,625.3 1692.0,627.8 1693.5,629.1 1695.0,620.6 1696.5,614.3 1698.0,636.2 1699.5,650.8 1701.0,639.2 1702.5,642.5 1704.0,650.4 1705.5,648.4 1707.0,643.3 1708.5,642.2 1710.0,642.2 1711.5,644.9 1713.0,644.6 1714.5,643.6 1716.0,635.5 1717.5,637.2 1719.0,633.8 1720.5,631.0 1722.0,642.0 1723.5,643.6 1725.0,639.1 1726.5,651.8 1728.0,664.4 1729.5,647.4 1731.0,641.3 1732.5,645.7 1734.0,645.0 1735.5,638.4 1737.0,655.9 1738.5,643.6 1740.0,634.9 1741.5,641.8 1743.0,643.4 1744.5,645.3 1746.0,653.8 1747.5,657.0 1749.0,648.7 1750.5,636.8 1752.0,632.2 1753.5,645.4 1755.0,656.9 1756.5,659.7 1758.0,647.6 1759.5,654.8 1761.0,669.4 1762.5,679.6 1764.0,667.0 1765.5,659.8 1767.0,652.3 1768.5,637.9 1770.0,624.7 1771.5,624.9 1773.0,622.1 1774.5,642.3 1776.0,637.6 1777.5,617.6 1779.0,615.2 1780.5,619.3 1782.0,622.0 1783.5,616.1 1785.0,616.9 1786.5,626.3 1788.0,634.2 1789.5,629.5 1791.0,619.8 1792.5,634.1 1794.0,676.0 1795.5,661.8 1797.0,632.6 1798.5,630.7 1800.0,636.6 1801.5,617.8 1803.0,600.3 1804.5,625.4 1806.0,640.5 1807.5,633.6 1809.0,640.4 1810.5,658.3 1812.0,655.9 1813.5,639.8 1815.0,633.1 1816.5,621.7 1818.0,616.1 1819.5,632.9 1821.0,639.6 1822.5,631.5 1824.0,621.3 1825.5,620.1 1827.0,640.6 1828.5,648.6 1830.0,663.3 1831.5,653.8 1833.0,630.4 1834.5,620.5 1836.0,641.6 1837.5,662.4 1839.0,680.5 1840.5,672.9 1842.0,665.4 1843.5,652.1 1845.0,650.8 1846.5,654.1 1848.0,645.7 1849.5,633.7 1851.0,634.5 1852.5,634.7 1854.0,629.6 1855.5,626.1 1857.0,631.2 1858.5,632.1 1860.0,641.5 1861.5,652.1 1863.0,632.9 1864.5,610.4 1866.0,628.9 1867.5,631.7 1869.0,626.6 1870.5,631.3 1872.0,629.5 1873.5,618.5 1875.0,620.3 1876.5,634.9 1878.0,637.8 1879.5,635.7 1881.0,628.1 1882.5,624.1 1884.0,620.0 1885.5,618.7 1887.0,625.1 1888.5,627.6 1890.0,638.8 1891.5,644.0 1893.0,635.1 1894.5,626.9 1896.0,627.1 1897.5,624.4 1899.0,613.6 1900.5,613.4 1902.0,617.2 1903.5,608.0 1905.0,611.5 1906.5,622.0 1908.0,629.5 1909.5,638.6 1911.0,650.5 1912.5,646.1 1914.0,641.0 1915.5,654.8 1917.0,654.7 1918.5,633.3 1920.0,622.9 1921.5,622.1 1923.0,612.8 1924.5,596.7 1926.0,598.9 1927.5,611.3 1929.0,619.0 1930.5,626.1 1932.0,620.9 1933.5,611.7 1935.0,616.7 1936.5,608.8 1938.0,594.9 1939.5,594.4 1941.0,606.5 1942.5,611.2 1944.0,609.9 1945.5,611.7 1947.0,610.6 1948.5,600.5 1950.0,596.5 1951.5,606.5 1953.0,609.0 1954.5,596.1 1956.0,594.6 1957.5,603.4 1959.0,609.2 1960.5,602.9 1962.0,602.2 1963.5,611.2 1965.0,609.6 1966.5,595.0 1968.0,595.4 1969.5,602.5 1971.0,596.4 1972.5,597.4 1974.0,602.8 1975.5,606.8 1977.0,602.0 1978.5,598.9 1980.0,604.7 1981.5,603.8 1983.0,608.5 1984.5,609.7 1986.0,615.8 1987.5,613.7 1989.0,619.2 1990.5,622.3 1992.0,613.5 1993.5,614.1 1995.0,613.2 1996.5,611.7 1998.0,607.0 1999.5,600.8 2001.0,596.9 2002.5,596.0 2004.0,600.3 2005.5,597.4 2007.0,594.6 2008.5,596.1 2010.0,597.3 2011.5,601.8 2013.0,602.9 2014.5,603.3 2016.0,603.6 2017.5,609.6 2019.0,609.7 2020.5,609.8 2022.0,613.7 2023.5,620.2 2025.0,620.6 2026.5,616.0 2028.0,613.4 2029.5,614.0 2031.0,607.7 2032.5,603.6 2034.0,608.1 2035.5,604.7 2037.0,599.6 2038.5,605.0 2040.0,608.4 2041.5,608.1 2043.0,608.5 2044.5,607.9 2046.0,609.3 2047.5,609.5 2049.0,608.4 2050.5,613.2 2052.0,611.6 2053.5,612.4 2055.0,610.6 2056.5,601.0 2058.0,598.3 2059.5,598.8 2061.0,599.1 2062.5,599.1 2064.0,604.3 2065.5,602.5 2067.0,604.3 2068.5,601.3 2070.0,601.1 2071.5,601.3 2073.0,601.8 2074.5,601.3 2076.0,602.5 2077.5,608.7 2079.0,614.1 2080.5,612.9 2082.0,612.1 2083.5,614.5 2085.0,609.5 2086.5,608.8 2088.0,607.5 2089.5,600.0 2091.0,596.8 2092.5,604.4 2094.0,603.5 2095.5,600.6 2097.0,601.4 2098.5,609.9 2100.0,606.3 2101.5,603.0 2103.0,609.0 2104.5,612.9 2106.0,604.5 2107.5,603.1 2109.0,603.9 2110.5,611.0 2112.0,604.5 2113.5,598.3 2115.0,589.5 2116.5,595.7 2118.0,593.2 2119.5,591.7 2121.0,597.2 2122.5,600.1 2124.0,599.1 2125.5,599.2 2127.0,601.1 2128.5,603.3 2130.0,602.3 2131.5,598.1 2133.0,598.7 2134.5,597.3 2136.0,597.3 2137.5,597.6 2139.0,598.3 2140.5,597.2 2142.0,589.3 2143.5,593.7 2145.0,603.4 2146.5,604.6 2148.0,599.1 2149.5,602.1 2151.0,602.7 2152.5,599.7 2154.0,594.7 2155.5,596.7 2157.0,598.5 2158.5,598.5 2160.0,599.7 2161.5,600.6 2163.0,599.0 2164.5,603.5 2166.0,601.9 2167.5,604.0 2169.0,603.0 2170.5,595.4 2172.0,590.7 2173.5,593.9 2175.0,592.7 2176.5,589.1 2178.0,593.3 2179.5,595.2 2181.0,593.2 2182.5,592.3 2184.0,596.1 2185.5,601.6 2187.0,598.9 2188.5,602.8 2190.0,598.3 2191.5,600.1 2193.0,600.0 2194.5,603.9 2196.0,600.3 2197.5,599.0 2199.0,606.5 2200.5,612.6 2202.0,608.8 2203.5,610.4 2205.0,614.7 2206.5,611.7 2208.0,599.5 2209.5,603.6 2211.0,612.3 2212.5,615.9 2214.0,618.8 2215.5,613.7 2217.0,609.9 2218.5,607.9 2220.0,607.6 2221.5,610.1 2223.0,611.5 2224.5,610.5 2226.0,614.0 2227.5,613.1 2229.0,614.4 2230.5,611.7 2232.0,612.2 2233.5,612.0 2235.0,610.7 2236.5,608.7 2238.0,607.3 2239.5,609.9 2241.0,608.7 2242.5,600.4 2244.0,604.0 2245.5,608.9 2247.0,601.5 2248.5,594.0 2250.0,598.6 2251.5,601.9 2253.0,598.6 2254.5,597.8 2256.0,602.6 2257.5,602.8 2259.0,605.1 2260.5,606.6 2262.0,608.1 2263.5,611.6 2265.0,611.0 2266.5,609.6 2268.0,610.1 2269.5,608.9 2271.0,607.3 2272.5,612.6 2274.0,615.8 2275.5,614.3 2277.0,610.4 2278.5,618.0 2280.0,617.5 2281.5,613.1 2283.0,623.7 2284.5,627.2 2286.0,614.7 2287.5,610.5 2289.0,615.8 2290.5,608.7 2292.0,606.0 2293.5,608.4 2295.0,610.2 2296.5,604.1 2298.0,611.1 2299.5,613.6 2301.0,609.4 2302.5,613.7 2304.0,611.1 2305.5,608.1 2307.0,609.2 2308.5,612.8 2310.0,608.4 2311.5,602.9 2313.0,609.0 2314.5,612.7 2316.0,612.9 2317.5,612.5 2319.0,612.7 2320.5,612.0 2322.0,607.0 2323.5,605.1 2325.0,607.2 2326.5,605.4 2328.0,602.9 2329.5,602.9 2331.0,607.1 2332.5,607.9 2334.0,608.3 2335.5,611.8 2337.0,614.1 2338.5,615.0 2340.0,616.1 2341.5,615.5 2343.0,608.0 2344.5,606.6 2346.0,613.0 2347.5,607.2 2349.0,601.5 2350.5,607.1 2352.0,609.3 2353.5,604.7 2355.0,606.7 2356.5,609.1 2358.0,610.0 2359.5,611.5 2361.0,613.2 2362.5,610.8 2364.0,611.2 2365.5,613.3 2367.0,613.4 2368.5,611.3 2370.0,611.5 2371.5,614.4 2373.0,613.9 2374.5,610.0 2376.0,608.3 2377.5,607.5 2379.0,610.4 2380.5,608.4 2382.0,612.2 2383.5,617.7 2385.0,616.3 2386.5,608.3 2388.0,612.7 2389.5,619.6 2391.0,616.0 2392.5,613.4 2394.0,614.9 2395.5,618.8 2397.0,610.7 2398.5,616.4 2400.0,619.3 2401.5,615.0 2403.0,613.5 2404.5,617.5 2406.0,615.9 2407.5,609.2 2409.0,606.2 2410.5,605.6 2412.0,609.7 2413.5,611.8 2415.0,616.0 2416.5,613.2 2418.0,615.0 2419.5,616.9 2421.0,616.9 2422.5,615.1 2424.0,617.0 2425.5,619.4 2427.0,621.4 2428.5,620.1 2430.0,620.0 2431.5,618.3 2433.0,619.6 2434.5,617.7 2436.0,619.1 2437.5,621.1 2439.0,620.6 2440.5,618.6 2442.0,620.7 2443.5,620.8 2445.0,614.1 2446.5,615.7 2448.0,616.3 2449.5,616.4 2451.0,611.6 2452.5,612.8 2454.0,617.6 2455.5,617.0 2457.0,614.3 2458.5,612.5 2460.0,610.2 2461.5,615.4 2463.0,612.6 2464.5,613.4 2466.0,615.0 2467.5,617.8 2469.0,613.7 2470.5,615.7 2472.0,617.8 2473.5,616.0 2475.0,617.1 2476.5,620.8 2478.0,614.6 2479.5,611.1 2481.0,611.7 2482.5,611.1 2484.0,609.4 2485.5,615.5 2487.0,618.3 2488.5,613.0 2490.0,612.7 2491.5,613.8 2493.0,617.9 2494.5,616.0 2496.0,625.1 2497.5,622.4 2499.0,622.6 2500.5,624.3 2502.0,622.2 2503.5,612.2 2505.0,607.7 2506.5,613.7 2508.0,611.3 2509.5,611.3 2511.0,613.9 2512.5,616.6 2514.0,608.4 2515.5,606.3 2517.0,607.1 2518.5,616.4 2520.0,615.4 2521.5,608.6 2523.0,615.9 2524.5,616.8 2526.0,620.0 2527.5,615.3 2529.0,617.4 2530.5,619.0 2532.0,617.1 2533.5,618.4 2535.0,619.0 2536.5,618.1 2538.0,617.9 2539.5,619.4 2541.0,620.1 2542.5,622.4 2544.0,622.6 2545.5,623.8 2547.0,622.0 2548.5,622.9 2550.0,628.0 2551.5,625.9 2553.0,619.9 2554.5,623.5 2556.0,626.9 2557.5,627.7 2559.0,624.8 2560.5,621.7 2562.0,623.0 2563.5,620.8 2565.0,620.8 2566.5,619.1 2568.0,622.9 2569.5,622.7" fill="none" stroke="#e3932f" stroke-width="2" stroke-linejoin="round"/>
<path d="M432.0,704.1 433.5,703.8 435.0,703.9 436.5,715.8 438.0,709.5 439.5,706.4 441.0,711.6 442.5,714.0 444.0,711.3 445.5,712.9 447.0,719.0 448.5,717.7 450.0,706.1 451.5,702.0 453.0,707.3 454.5,707.0 456.0,708.0 457.5,713.7 459.0,712.4 460.5,710.7 462.0,708.7 463.5,709.4 465.0,705.1 466.5,699.6 468.0,701.2 469.5,705.6 471.0,708.3 472.5,706.1 474.0,703.7 475.5,707.4 477.0,708.6 478.5,711.5 480.0,703.6 481.5,707.6 483.0,707.5 484.5,711.0 486.0,711.4 487.5,708.2 489.0,708.5 490.5,707.4 492.0,702.1 493.5,704.4 495.0,703.7 496.5,712.6 498.0,711.8 499.5,706.8 501.0,709.4 502.5,713.3 504.0,715.4 505.5,714.8 507.0,716.1 508.5,718.0 510.0,716.6 511.5,711.4 513.0,711.1 514.5,713.7 516.0,708.9 517.5,709.4 519.0,706.7 520.5,703.3 522.0,706.3 523.5,705.2 525.0,706.1 526.5,711.8 528.0,708.8 529.5,708.0 531.0,706.3 532.5,707.9 534.0,707.4 535.5,703.4 537.0,702.9 538.5,706.8 540.0,704.1 541.5,707.7 543.0,700.8 544.5,700.1 546.0,693.2 547.5,698.2 549.0,694.1 550.5,683.2 552.0,682.3 553.5,678.4 555.0,681.6 556.5,686.7 558.0,687.4 559.5,683.1 561.0,687.3 562.5,691.1 564.0,687.5 565.5,688.0 567.0,692.1 568.5,699.3 570.0,701.2 571.5,701.1 573.0,693.3 574.5,698.7 576.0,695.6 577.5,695.7 579.0,701.9 580.5,697.6 582.0,702.7 583.5,694.9 585.0,691.0 586.5,699.2 588.0,700.3 589.5,703.7 591.0,699.6 592.5,695.9 594.0,695.3 595.5,699.5 597.0,701.7 598.5,700.1 600.0,701.8 601.5,706.3 603.0,705.1 604.5,701.6 606.0,699.7 607.5,697.5 609.0,703.8 610.5,697.0 612.0,695.3 613.5,697.7 615.0,700.7 616.5,702.0 618.0,700.9 619.5,704.6 621.0,707.0 622.5,705.0 624.0,710.1 625.5,708.2 627.0,707.9 628.5,700.3 630.0,699.3 631.5,705.0 633.0,702.6 634.5,701.2 636.0,695.8 637.5,699.1 639.0,698.8 640.5,697.7 642.0,692.8 643.5,692.2 645.0,690.7 646.5,691.5 648.0,700.4 649.5,699.3 651.0,704.7 652.5,702.3 654.0,704.6 655.5,704.1 657.0,699.9 658.5,697.0 660.0,698.8 661.5,695.9 663.0,697.7 664.5,696.3 666.0,697.2 667.5,694.0 669.0,697.1 670.5,699.0 672.0,702.3 673.5,703.7 675.0,697.0 676.5,695.5 678.0,698.9 679.5,699.0 681.0,700.4 682.5,705.0 684.0,710.5 685.5,706.5 687.0,709.0 688.5,702.4 690.0,704.7 691.5,706.4 693.0,702.7 694.5,697.4 696.0,698.4 697.5,700.6 699.0,701.0 700.5,701.5 702.0,701.2 703.5,700.7 705.0,699.5 706.5,702.4 708.0,706.3 709.5,706.7 711.0,704.3 712.5,707.2 714.0,704.3 715.5,700.9 717.0,701.7 718.5,702.8 720.0,699.7 721.5,699.3 723.0,699.4 724.5,702.5 726.0,695.9 727.5,694.8 729.0,697.2 730.5,697.5 732.0,699.9 733.5,703.1 735.0,700.7 736.5,698.7 738.0,695.9 739.5,694.0 741.0,698.6 742.5,702.1 744.0,699.5 745.5,697.4 747.0,693.7 748.5,698.6 750.0,698.5 751.5,696.8 753.0,697.5 754.5,697.6 756.0,694.6 757.5,693.8 759.0,693.6 760.5,693.2 762.0,692.8 763.5,694.1 765.0,691.7 766.5,691.6 768.0,691.8 769.5,687.4 771.0,694.1 772.5,696.9 774.0,693.7 775.5,688.8 777.0,689.2 778.5,689.5 780.0,687.9 781.5,689.5 783.0,688.8 784.5,686.7 786.0,684.4 787.5,689.8 789.0,681.8 790.5,681.1 792.0,679.0 793.5,679.8 795.0,686.4 796.5,688.3 798.0,693.8 799.5,699.4 801.0,697.6 802.5,699.2 804.0,700.7 805.5,698.6 807.0,698.9 808.5,701.7 810.0,706.2 811.5,712.3 813.0,708.5 814.5,710.0 816.0,712.9 817.5,714.5 819.0,712.0 820.5,711.6 822.0,711.3 823.5,713.3 825.0,708.4 826.5,706.5 828.0,706.1 829.5,708.3 831.0,709.9 832.5,702.4 834.0,695.3 835.5,685.7 837.0,677.1 838.5,680.9 840.0,686.4 841.5,693.6 843.0,693.8 844.5,690.7 846.0,688.2 847.5,687.9 849.0,693.1 850.5,695.0 852.0,697.9 853.5,690.7 855.0,688.0 856.5,685.7 858.0,680.9 859.5,683.7 861.0,685.1 862.5,680.4 864.0,682.0 865.5,686.8 867.0,684.4 868.5,681.7 870.0,690.7 871.5,694.4 873.0,700.1 874.5,701.6 876.0,698.6 877.5,699.1 879.0,701.1 880.5,701.1 882.0,699.6 883.5,698.2 885.0,697.2 886.5,698.5 888.0,700.9 889.5,702.1 891.0,702.5 892.5,706.1 894.0,707.7 895.5,704.5 897.0,703.9 898.5,696.5 900.0,694.3 901.5,697.7 903.0,695.2 904.5,692.8 906.0,694.3 907.5,695.6 909.0,698.6 910.5,695.9 912.0,697.5 913.5,702.5 915.0,697.3 916.5,695.5 918.0,702.2 919.5,701.5 921.0,701.1 922.5,700.4 924.0,698.8 925.5,700.4 927.0,703.6 928.5,703.9 930.0,707.3 931.5,702.7 933.0,705.0 934.5,705.0 936.0,704.3 937.5,701.1 939.0,701.8 940.5,703.4 942.0,703.3 943.5,702.1 945.0,703.0 946.5,703.7 948.0,704.1 949.5,701.6 951.0,702.6 952.5,703.1 954.0,696.4 955.5,695.5 957.0,693.1 958.5,694.6 960.0,699.7 961.5,698.7 963.0,699.4 964.5,698.5 966.0,701.2 967.5,702.8 969.0,699.1 970.5,706.9 972.0,708.1 973.5,703.9 975.0,701.7 976.5,699.6 978.0,701.3 979.5,702.2 981.0,705.8 982.5,705.3 984.0,699.6 985.5,697.7 987.0,699.9 988.5,696.2 990.0,696.6 991.5,695.5 993.0,697.2 994.5,694.7 996.0,691.6 997.5,691.3 999.0,694.7 1000.5,702.0 1002.0,705.0 1003.5,706.4 1005.0,707.9 1006.5,704.3 1008.0,702.2 1009.5,706.4 1011.0,706.4 1012.5,699.7 1014.0,698.9 1015.5,701.8 1017.0,700.8 1018.5,699.3 1020.0,699.6 1021.5,701.2 1023.0,703.9 1024.5,705.2 1026.0,703.2 1027.5,704.1 1029.0,706.1 1030.5,710.6 1032.0,710.0 1033.5,712.6 1035.0,709.4 1036.5,706.1 1038.0,704.7 1039.5,700.9 1041.0,704.6 1042.5,706.3 1044.0,708.8 1045.5,708.2 1047.0,713.1 1048.5,709.7 1050.0,709.1 1051.5,705.9 1053.0,706.5 1054.5,703.7 1056.0,705.4 1057.5,703.7 1059.0,701.9 1060.5,701.4 1062.0,700.4 1063.5,695.5 1065.0,696.2 1066.5,700.0 1068.0,699.5 1069.5,696.4 1071.0,701.1 1072.5,703.4 1074.0,701.3 1075.5,704.5 1077.0,709.8 1078.5,705.9 1080.0,702.2 1081.5,709.5 1083.0,712.7 1084.5,707.8 1086.0,706.4 1087.5,707.3 1089.0,709.7 1090.5,706.8 1092.0,709.3 1093.5,708.4 1095.0,703.7 1096.5,705.2 1098.0,705.3 1099.5,704.9 1101.0,708.1 1102.5,707.9 1104.0,710.1 1105.5,711.9 1107.0,714.1 1108.5,708.5 1110.0,710.7 1111.5,718.1 1113.0,721.1 1114.5,718.1 1116.0,716.5 1117.5,716.0 1119.0,713.4 1120.5,709.8 1122.0,712.2 1123.5,711.4 1125.0,711.1 1126.5,705.3 1128.0,710.5 1129.5,706.7 1131.0,705.8 1132.5,707.8 1134.0,709.8 1135.5,708.3 1137.0,711.1 1138.5,718.2 1140.0,714.2 1141.5,710.0 1143.0,712.8 1144.5,712.4 1146.0,705.9 1147.5,707.1 1149.0,710.7 1150.5,708.6 1152.0,710.9 1153.5,708.5 1155.0,707.4 1156.5,709.8 1158.0,708.2 1159.5,714.2 1161.0,713.5 1162.5,711.8 1164.0,708.3 1165.5,712.0 1167.0,706.4 1168.5,704.3 1170.0,706.2 1171.5,711.8 1173.0,711.5 1174.5,713.4 1176.0,711.5 1177.5,710.8 1179.0,714.4 1180.5,716.9 1182.0,711.7 1183.5,707.7 1185.0,714.1 1186.5,713.9 1188.0,709.3 1189.5,708.4 1191.0,707.3 1192.5,712.7 1194.0,711.8 1195.5,710.5 1197.0,710.7 1198.5,709.4 1200.0,715.9 1201.5,710.6 1203.0,701.1 1204.5,705.9 1206.0,710.9 1207.5,710.1 1209.0,710.1 1210.5,712.1 1212.0,716.1 1213.5,710.2 1215.0,708.8 1216.5,713.6 1218.0,715.4 1219.5,713.8 1221.0,718.6 1222.5,709.3 1224.0,710.3 1225.5,709.6 1227.0,709.5 1228.5,707.4 1230.0,707.7 1231.5,705.6 1233.0,704.7 1234.5,709.3 1236.0,717.3 1237.5,714.9 1239.0,713.7 1240.5,711.2 1242.0,713.5 1243.5,721.4 1245.0,714.7 1246.5,714.7 1248.0,718.7 1249.5,720.9 1251.0,715.8 1252.5,714.9 1254.0,711.3 1255.5,707.2 1257.0,710.8 1258.5,713.5 1260.0,710.3 1261.5,708.1 1263.0,708.0 1264.5,711.1 1266.0,707.7 1267.5,709.0 1269.0,711.1 1270.5,704.5 1272.0,705.3 1273.5,704.3 1275.0,700.0 1276.5,702.1 1278.0,705.7 1279.5,709.7 1281.0,707.9 1282.5,706.0 1284.0,705.2 1285.5,706.9 1287.0,710.6 1288.5,710.4 1290.0,706.9 1291.5,704.3 1293.0,709.0 1294.5,706.1 1296.0,700.3 1297.5,697.3 1299.0,694.4 1300.5,699.9 1302.0,702.6 1303.5,700.2 1305.0,700.3 1306.5,701.5 1308.0,704.4 1309.5,695.5 1311.0,698.4 1312.5,702.2 1314.0,699.9 1315.5,700.4 1317.0,703.0 1318.5,704.9 1320.0,701.8 1321.5,702.8 1323.0,705.3 1324.5,702.8 1326.0,701.6 1327.5,704.6 1329.0,705.2 1330.5,700.2 1332.0,701.1 1333.5,700.2 1335.0,700.3 1336.5,699.4 1338.0,701.3 1339.5,701.8 1341.0,706.5 1342.5,707.2 1344.0,704.9 1345.5,701.4 1347.0,695.4 1348.5,693.2 1350.0,694.1 1351.5,694.6 1353.0,691.8 1354.5,689.7 1356.0,695.3 1357.5,699.7 1359.0,696.8 1360.5,695.2 1362.0,692.9 1363.5,692.2 1365.0,696.7 1366.5,702.5 1368.0,704.5 1369.5,700.0 1371.0,699.8 1372.5,700.2 1374.0,695.8 1375.5,693.2 1377.0,695.9 1378.5,693.8 1380.0,691.3 1381.5,688.1 1383.0,688.5 1384.5,684.2 1386.0,683.1 1387.5,683.4 1389.0,689.9 1390.5,688.5 1392.0,689.1 1393.5,685.3 1395.0,691.8 1396.5,694.6 1398.0,691.7 1399.5,691.6 1401.0,694.4 1402.5,691.8 1404.0,692.3 1405.5,698.5 1407.0,698.4 1408.5,695.5 1410.0,694.6 1411.5,697.6 1413.0,694.1 1414.5,692.9 1416.0,691.7 1417.5,696.0 1419.0,694.8 1420.5,695.8 1422.0,703.4 1423.5,707.3 1425.0,704.8 1426.5,704.9 1428.0,704.4 1429.5,703.5 1431.0,699.9 1432.5,700.1 1434.0,701.4 1435.5,698.9 1437.0,698.0 1438.5,699.2 1440.0,700.6 1441.5,699.9 1443.0,699.0 1444.5,701.6 1446.0,701.1 1447.5,700.5 1449.0,702.9 1450.5,704.7 1452.0,706.8 1453.5,706.1 1455.0,702.1 1456.5,698.3 1458.0,693.8 1459.5,699.4 1461.0,695.1 1462.5,692.4 1464.0,692.1 1465.5,700.4 1467.0,695.8 1468.5,696.6 1470.0,701.8 1471.5,706.9 1473.0,707.3 1474.5,703.4 1476.0,702.5 1477.5,705.3 1479.0,704.1 1480.5,708.5 1482.0,706.7 1483.5,700.5 1485.0,703.1 1486.5,701.9 1488.0,704.6 1489.5,708.5 1491.0,710.6 1492.5,712.7 1494.0,712.0 1495.5,709.7 1497.0,711.2 1498.5,715.1 1500.0,715.0 1501.5,708.1 1503.0,713.2 1504.5,717.2 1506.0,719.2 1507.5,714.9 1509.0,712.4 1510.5,710.1 1512.0,708.9 1513.5,708.9 1515.0,711.4 1516.5,719.5 1518.0,720.3 1519.5,716.3 1521.0,711.6 1522.5,709.1 1524.0,705.8 1525.5,703.3 1527.0,702.7 1528.5,695.5 1530.0,697.4 1531.5,701.3 1533.0,707.0 1534.5,708.5 1536.0,711.6 1537.5,712.0 1539.0,704.2 1540.5,696.0 1542.0,701.1 1543.5,699.9 1545.0,697.7 1546.5,692.3 1548.0,693.6 1549.5,697.0 1551.0,698.9 1552.5,697.5 1554.0,692.1 1555.5,698.0 1557.0,705.9 1558.5,706.6 1560.0,701.6 1561.5,701.6 1563.0,706.6 1564.5,713.6 1566.0,719.2 1567.5,718.9 1569.0,711.7 1570.5,710.3 1572.0,709.6 1573.5,709.8 1575.0,704.5 1576.5,705.8 1578.0,712.6 1579.5,709.4 1581.0,710.8 1582.5,709.7 1584.0,712.7 1585.5,712.3 1587.0,712.8 1588.5,705.5 1590.0,699.7 1591.5,704.4 1593.0,709.2 1594.5,710.9 1596.0,704.0 1597.5,704.7 1599.0,712.8 1600.5,716.5 1602.0,712.1 1603.5,706.0 1605.0,699.1 1606.5,695.9 1608.0,704.2 1609.5,706.2 1611.0,711.0 1612.5,707.2 1614.0,710.1 1615.5,707.4 1617.0,709.2 1618.5,708.6 1620.0,701.9 1621.5,701.0 1623.0,698.7 1624.5,704.7 1626.0,712.7 1627.5,709.7 1629.0,708.1 1630.5,703.7 1632.0,700.5 1633.5,695.1 1635.0,699.2 1636.5,709.9 1638.0,705.0 1639.5,699.7 1641.0,701.3 1642.5,692.1 1644.0,694.4 1645.5,691.6 1647.0,702.0 1648.5,702.4 1650.0,702.0 1651.5,705.2 1653.0,699.8 1654.5,693.4 1656.0,690.3 1657.5,695.6 1659.0,691.3 1660.5,688.6 1662.0,696.1 1663.5,704.7 1665.0,698.8 1666.5,691.5 1668.0,700.8 1669.5,708.5 1671.0,714.8 1672.5,733.0 1674.0,741.7 1675.5,743.6 1677.0,724.3 1678.5,728.7 1680.0,727.5 1681.5,727.7 1683.0,708.1 1684.5,700.5 1686.0,698.1 1687.5,700.0 1689.0,703.6 1690.5,705.5 1692.0,702.3 1693.5,705.7 1695.0,701.2 1696.5,697.1 1698.0,705.9 1699.5,717.0 1701.0,711.3 1702.5,719.4 1704.0,718.7 1705.5,713.7 1707.0,713.9 1708.5,709.0 1710.0,711.7 1711.5,710.8 1713.0,719.0 1714.5,711.0 1716.0,701.9 1717.5,704.5 1719.0,698.9 1720.5,703.8 1722.0,716.6 1723.5,706.2 1725.0,697.6 1726.5,722.0 1728.0,731.9 1729.5,714.8 1731.0,709.7 1732.5,711.8 1734.0,707.2 1735.5,711.9 1737.0,721.5 1738.5,712.6 1740.0,701.0 1741.5,718.0 1743.0,722.1 1744.5,716.3 1746.0,724.6 1747.5,735.9 1749.0,722.1 1750.5,699.8 1752.0,703.6 1753.5,715.4 1755.0,723.5 1756.5,723.6 1758.0,725.2 1759.5,729.2 1761.0,728.3 1762.5,738.0 1764.0,741.7 1765.5,733.7 1767.0,718.1 1768.5,712.6 1770.0,709.2 1771.5,702.2 1773.0,694.8 1774.5,712.9 1776.0,709.8 1777.5,678.0 1779.0,677.6 1780.5,696.8 1782.0,695.7 1783.5,686.2 1785.0,692.4 1786.5,695.0 1788.0,694.8 1789.5,701.0 1791.0,695.4 1792.5,701.9 1794.0,721.9 1795.5,725.6 1797.0,694.8 1798.5,690.1 1800.0,702.5 1801.5,686.4 1803.0,662.8 1804.5,684.8 1806.0,709.9 1807.5,694.9 1809.0,705.9 1810.5,735.3 1812.0,732.0 1813.5,707.8 1815.0,685.5 1816.5,692.4 1818.0,699.9 1819.5,698.0 1821.0,696.4 1822.5,700.0 1824.0,694.9 1825.5,682.4 1827.0,692.2 1828.5,717.9 1830.0,736.3 1831.5,717.3 1833.0,700.9 1834.5,702.1 1836.0,713.0 1837.5,718.8 1839.0,739.8 1840.5,735.0 1842.0,734.6 1843.5,721.3 1845.0,722.0 1846.5,713.2 1848.0,714.9 1849.5,695.4 1851.0,698.5 1852.5,689.1 1854.0,684.8 1855.5,685.8 1857.0,699.5 1858.5,695.9 1860.0,696.4 1861.5,707.2 1863.0,714.2 1864.5,683.5 1866.0,686.5 1867.5,691.9 1869.0,704.5 1870.5,707.2 1872.0,696.4 1873.5,687.9 1875.0,696.1 1876.5,703.3 1878.0,708.1 1879.5,714.4 1881.0,704.4 1882.5,702.0 1884.0,703.4 1885.5,699.9 1887.0,693.1 1888.5,700.5 1890.0,718.4 1891.5,725.5 1893.0,701.4 1894.5,699.5 1896.0,710.9 1897.5,705.8 1899.0,685.5 1900.5,681.5 1902.0,690.9 1903.5,687.1 1905.0,683.6 1906.5,692.5 1908.0,703.9 1909.5,712.3 1911.0,720.3 1912.5,717.7 1914.0,715.7 1915.5,719.3 1917.0,728.8 1918.5,710.5 1920.0,695.4 1921.5,696.4 1923.0,691.8 1924.5,680.8 1926.0,683.0 1927.5,689.8 1929.0,698.0 1930.5,704.8 1932.0,701.5 1933.5,693.3 1935.0,686.8 1936.5,691.7 1938.0,687.0 1939.5,680.4 1941.0,684.9 1942.5,695.5 1944.0,696.4 1945.5,688.8 1947.0,689.3 1948.5,688.6 1950.0,685.8 1951.5,686.8 1953.0,684.2 1954.5,677.8 1956.0,681.4 1957.5,690.1 1959.0,693.7 1960.5,687.9 1962.0,686.5 1963.5,685.5 1965.0,689.2 1966.5,682.9 1968.0,681.6 1969.5,685.7 1971.0,684.4 1972.5,682.7 1974.0,686.8 1975.5,692.5 1977.0,686.6 1978.5,678.8 1980.0,688.2 1981.5,687.6 1983.0,685.9 1984.5,692.8 1986.0,693.8 1987.5,693.0 1989.0,693.8 1990.5,701.9 1992.0,702.0 1993.5,692.7 1995.0,690.7 1996.5,693.2 1998.0,690.8 1999.5,685.1 2001.0,685.3 2002.5,685.8 2004.0,683.9 2005.5,681.7 2007.0,680.0 2008.5,677.6 2010.0,683.7 2011.5,688.8 2013.0,690.6 2014.5,681.8 2016.0,682.8 2017.5,692.0 2019.0,695.9 2020.5,692.1 2022.0,696.2 2023.5,704.5 2025.0,707.6 2026.5,701.5 2028.0,696.7 2029.5,690.3 2031.0,687.5 2032.5,683.0 2034.0,682.8 2035.5,683.6 2037.0,682.2 2038.5,681.9 2040.0,683.8 2041.5,683.2 2043.0,682.0 2044.5,688.8 2046.0,686.7 2047.5,690.5 2049.0,686.1 2050.5,687.1 2052.0,685.8 2053.5,691.0 2055.0,687.6 2056.5,681.4 2058.0,678.3 2059.5,681.4 2061.0,682.4 2062.5,676.5 2064.0,681.4 2065.5,682.5 2067.0,684.6 2068.5,686.7 2070.0,684.2 2071.5,682.7 2073.0,685.5 2074.5,680.4 2076.0,680.2 2077.5,689.5 2079.0,694.1 2080.5,689.4 2082.0,686.1 2083.5,691.1 2085.0,693.3 2086.5,686.1 2088.0,682.9 2089.5,680.1 2091.0,682.4 2092.5,683.2 2094.0,684.2 2095.5,684.2 2097.0,686.5 2098.5,689.3 2100.0,687.9 2101.5,682.4 2103.0,693.4 2104.5,696.1 2106.0,689.3 2107.5,687.7 2109.0,691.5 2110.5,695.9 2112.0,687.0 2113.5,682.7 2115.0,685.2 2116.5,684.3 2118.0,678.9 2119.5,679.7 2121.0,680.3 2122.5,676.2 2124.0,680.5 2125.5,687.0 2127.0,689.0 2128.5,689.7 2130.0,685.5 2131.5,683.4 2133.0,683.5 2134.5,682.2 2136.0,680.1 2137.5,680.3 2139.0,677.2 2140.5,679.2 2142.0,678.6 2143.5,680.4 2145.0,683.0 2146.5,682.8 2148.0,680.7 2149.5,684.4 2151.0,683.1 2152.5,680.3 2154.0,678.2 2155.5,681.5 2157.0,679.8 2158.5,682.7 2160.0,682.8 2161.5,679.9 2163.0,677.7 2164.5,683.8 2166.0,687.3 2167.5,682.8 2169.0,680.2 2170.5,674.2 2172.0,672.9 2173.5,676.8 2175.0,680.0 2176.5,677.7 2178.0,680.2 2179.5,685.8 2181.0,680.0 2182.5,676.9 2184.0,680.8 2185.5,684.3 2187.0,681.6 2188.5,678.9 2190.0,684.4 2191.5,682.1 2193.0,685.0 2194.5,688.9 2196.0,689.7 2197.5,685.8 2199.0,689.6 2200.5,694.2 2202.0,687.4 2203.5,686.3 2205.0,685.4 2206.5,685.9 2208.0,674.4 2209.5,680.4 2211.0,688.5 2212.5,694.2 2214.0,696.2 2215.5,696.5 2217.0,694.2 2218.5,688.0 2220.0,688.6 2221.5,689.0 2223.0,692.0 2224.5,689.2 2226.0,689.2 2227.5,694.8 2229.0,698.1 2230.5,695.3 2232.0,695.1 2233.5,697.0 2235.0,693.7 2236.5,688.5 2238.0,689.9 2239.5,691.4 2241.0,688.7 2242.5,684.7 2244.0,684.9 2245.5,687.9 2247.0,685.2 2248.5,681.0 2250.0,679.5 2251.5,683.2 2253.0,682.7 2254.5,680.6 2256.0,684.7 2257.5,690.4 2259.0,687.9 2260.5,688.9 2262.0,684.5 2263.5,687.6 2265.0,692.1 2266.5,692.4 2268.0,693.3 2269.5,692.4 2271.0,694.4 2272.5,695.2 2274.0,695.5 2275.5,690.7 2277.0,692.6 2278.5,701.2 2280.0,702.0 2281.5,693.6 2283.0,698.2 2284.5,699.5 2286.0,696.7 2287.5,693.1 2289.0,692.3 2290.5,690.7 2292.0,682.4 2293.5,686.7 2295.0,692.5 2296.5,688.2 2298.0,686.4 2299.5,689.8 2301.0,692.5 2302.5,691.8 2304.0,687.9 2305.5,690.8 2307.0,694.8 2308.5,690.4 2310.0,685.3 2311.5,683.3 2313.0,689.4 2314.5,692.3 2316.0,696.9 2317.5,697.0 2319.0,696.8 2320.5,690.5 2322.0,684.6 2323.5,686.9 2325.0,691.7 2326.5,686.6 2328.0,681.8 2329.5,681.8 2331.0,681.4 2332.5,686.0 2334.0,687.6 2335.5,690.3 2337.0,692.3 2338.5,692.1 2340.0,693.2 2341.5,691.2 2343.0,687.1 2344.5,684.1 2346.0,686.3 2347.5,680.2 2349.0,677.6 2350.5,681.0 2352.0,687.0 2353.5,685.3 2355.0,681.9 2356.5,686.8 2358.0,688.6 2359.5,688.3 2361.0,689.9 2362.5,689.2 2364.0,692.8 2365.5,698.6 2367.0,695.2 2368.5,693.6 2370.0,698.8 2371.5,695.3 2373.0,697.4 2374.5,694.7 2376.0,690.9 2377.5,694.3 2379.0,698.0 2380.5,695.4 2382.0,693.0 2383.5,700.0 2385.0,702.3 2386.5,695.9 2388.0,694.6 2389.5,703.9 2391.0,704.7 2392.5,703.6 2394.0,704.7 2395.5,704.8 2397.0,702.9 2398.5,704.0 2400.0,708.4 2401.5,695.3 2403.0,696.3 2404.5,701.7 2406.0,703.3 2407.5,693.8 2409.0,692.6 2410.5,695.6 2412.0,696.2 2413.5,697.0 2415.0,696.7 2416.5,692.9 2418.0,694.9 2419.5,697.3 2421.0,694.4 2422.5,693.7 2424.0,694.1 2425.5,696.1 2427.0,695.0 2428.5,693.5 2430.0,696.0 2431.5,697.9 2433.0,698.6 2434.5,695.9 2436.0,694.6 2437.5,698.2 2439.0,695.4 2440.5,697.0 2442.0,697.0 2443.5,698.1 2445.0,696.9 2446.5,690.1 2448.0,697.7 2449.5,697.1 2451.0,692.4 2452.5,690.3 2454.0,698.2 2455.5,701.0 2457.0,697.9 2458.5,697.6 2460.0,700.1 2461.5,700.0 2463.0,699.9 2464.5,697.9 2466.0,700.5 2467.5,702.4 2469.0,699.2 2470.5,700.1 2472.0,698.4 2473.5,699.6 2475.0,702.0 2476.5,703.8 2478.0,697.8 2479.5,694.7 2481.0,698.4 2482.5,694.1 2484.0,692.3 2485.5,693.9 2487.0,697.6 2488.5,692.7 2490.0,692.5 2491.5,695.7 2493.0,691.9 2494.5,692.3 2496.0,701.1 2497.5,699.0 2499.0,696.0 2500.5,698.4 2502.0,698.5 2503.5,692.1 2505.0,690.1 2506.5,699.0 2508.0,691.8 2509.5,692.8 2511.0,693.5 2512.5,694.6 2514.0,695.0 2515.5,687.9 2517.0,690.2 2518.5,692.3 2520.0,693.5 2521.5,692.8 2523.0,694.0 2524.5,697.6 2526.0,691.3 2527.5,688.1 2529.0,691.2 2530.5,695.3 2532.0,693.3 2533.5,689.2 2535.0,690.6 2536.5,688.6 2538.0,691.1 2539.5,693.5 2541.0,690.0 2542.5,696.3 2544.0,696.1 2545.5,698.3 2547.0,700.8 2548.5,699.8 2550.0,704.1 2551.5,703.7 2553.0,698.5 2554.5,697.4 2556.0,706.5 2557.5,705.3 2559.0,698.2 2560.5,698.3 2562.0,698.2 2563.5,697.4 2565.0,697.6 2566.5,698.9 2568.0,700.5 2569.5,704.4" fill="none" stroke="#ee8878" stroke-width="2" stroke-linejoin="round"/>
<path d="M432.0,808.7 433.5,808.8 435.0,815.1 436.5,813.6 438.0,813.6 439.5,816.6 441.0,823.1 442.5,820.0 444.0,814.7 445.5,818.7 447.0,820.6 448.5,818.6 450.0,815.0 451.5,816.1 453.0,813.3 454.5,814.8 456.0,819.5 457.5,825.6 459.0,831.2 460.5,821.6 462.0,821.4 463.5,824.9 465.0,820.2 466.5,814.0 468.0,820.7 469.5,828.6 471.0,826.1 472.5,817.2 474.0,816.2 475.5,818.3 477.0,817.5 478.5,814.2 480.0,805.6 481.5,807.9 483.0,807.4 484.5,801.4 486.0,804.4 487.5,807.5 489.0,811.3 490.5,802.7 492.0,797.2 493.5,805.2 495.0,802.5 496.5,796.8 498.0,802.7 499.5,807.6 501.0,808.0 502.5,812.5 504.0,812.3 505.5,816.1 507.0,818.7 508.5,821.4 510.0,821.7 511.5,815.5 513.0,815.6 514.5,814.1 516.0,819.2 517.5,810.3 519.0,809.2 520.5,810.3 522.0,820.8 523.5,816.6 525.0,807.2 526.5,815.0 528.0,813.6 529.5,810.3 531.0,810.9 532.5,815.7 534.0,818.0 535.5,815.3 537.0,809.5 538.5,817.9 540.0,821.3 541.5,834.5 543.0,830.0 544.5,818.6 546.0,816.8 547.5,809.3 549.0,791.5 550.5,793.7 552.0,786.3 553.5,777.7 555.0,767.6 556.5,778.0 558.0,793.4 559.5,790.1 561.0,784.9 562.5,790.8 564.0,784.8 565.5,783.2 567.0,789.4 568.5,795.4 570.0,794.4 571.5,801.6 573.0,808.6 574.5,811.3 576.0,812.3 577.5,811.4 579.0,810.6 580.5,808.7 582.0,807.7 583.5,806.0 585.0,806.2 586.5,808.9 588.0,816.6 589.5,816.8 591.0,813.7 592.5,812.1 594.0,817.1 595.5,819.9 597.0,821.1 598.5,824.5 600.0,832.4 601.5,841.0 603.0,834.1 604.5,830.5 606.0,825.4 607.5,817.1 609.0,818.0 610.5,825.3 612.0,821.6 613.5,825.0 615.0,823.7 616.5,815.1 618.0,812.8 619.5,813.5 621.0,814.2 622.5,816.3 624.0,819.6 625.5,822.2 627.0,817.7 628.5,815.5 630.0,813.6 631.5,806.8 633.0,800.1 634.5,797.0 636.0,802.9 637.5,810.6 639.0,813.0 640.5,816.8 642.0,814.8 643.5,810.0 645.0,807.7 646.5,812.5 648.0,805.8 649.5,803.0 651.0,806.0 652.5,809.6 654.0,809.0 655.5,807.7 657.0,808.0 658.5,812.1 660.0,806.6 661.5,806.9 663.0,803.1 664.5,799.0 666.0,801.5 667.5,808.4 669.0,807.2 670.5,811.6 672.0,815.5 673.5,816.9 675.0,813.8 676.5,811.5 678.0,814.5 679.5,797.9 681.0,789.8 682.5,795.3 684.0,793.9 685.5,804.8 687.0,818.1 688.5,816.6 690.0,815.3 691.5,821.4 693.0,820.5 694.5,807.4 696.0,809.0 697.5,815.3 699.0,812.2 700.5,803.1 702.0,800.5 703.5,796.6 705.0,795.2 706.5,798.5 708.0,793.9 709.5,790.2 711.0,793.2 712.5,797.9 714.0,790.9 715.5,788.3 717.0,796.2 718.5,797.2 720.0,796.3 721.5,794.7 723.0,797.4 724.5,794.8 726.0,794.4 727.5,791.5 729.0,788.4 730.5,786.6 732.0,792.0 733.5,797.5 735.0,795.5 736.5,794.1 738.0,794.1 739.5,793.4 741.0,793.3 742.5,794.9 744.0,794.3 745.5,791.3 747.0,794.9 748.5,803.0 750.0,800.0 751.5,806.0 753.0,801.3 754.5,798.2 756.0,796.2 757.5,788.9 759.0,782.0 760.5,783.9 762.0,789.8 763.5,790.4 765.0,786.2 766.5,789.1 768.0,784.2 769.5,779.6 771.0,773.6 772.5,784.5 774.0,779.6 775.5,768.1 777.0,771.3 778.5,772.1 780.0,768.7 781.5,771.7 783.0,776.4 784.5,766.0 786.0,762.3 787.5,761.1 789.0,762.7 790.5,758.9 792.0,761.1 793.5,768.8 795.0,770.6 796.5,772.1 798.0,782.1 799.5,789.5 801.0,781.5 802.5,781.5 804.0,789.2 805.5,793.4 807.0,789.5 808.5,778.6 810.0,786.1 811.5,795.3 813.0,795.3 814.5,796.0 816.0,796.6 817.5,798.0 819.0,801.8 820.5,796.6 822.0,793.0 823.5,792.9 825.0,786.4 826.5,781.5 828.0,772.2 829.5,778.8 831.0,777.3 832.5,786.8 834.0,785.7 835.5,768.2 837.0,755.6 838.5,756.6 840.0,767.4 841.5,769.9 843.0,771.0 844.5,768.6 846.0,764.8 847.5,760.2 849.0,771.9 850.5,777.4 852.0,781.6 853.5,779.1 855.0,779.6 856.5,774.2 858.0,777.8 859.5,785.6 861.0,783.6 862.5,784.3 864.0,788.4 865.5,793.7 867.0,795.2 868.5,790.6 870.0,794.9 871.5,800.5 873.0,798.7 874.5,791.2 876.0,791.5 877.5,787.6 879.0,787.9 880.5,785.3 882.0,785.7 883.5,790.1 885.0,791.9 886.5,799.2 888.0,800.0 889.5,795.4 891.0,792.9 892.5,791.7 894.0,784.1 895.5,784.1 897.0,782.6 898.5,784.9 900.0,786.6 901.5,791.8 903.0,787.6 904.5,777.6 906.0,777.3 907.5,775.7 909.0,780.3 910.5,780.9 912.0,789.2 913.5,785.0 915.0,783.1 916.5,788.0 918.0,785.0 919.5,780.7 921.0,786.5 922.5,792.5 924.0,789.1 925.5,792.4 927.0,797.1 928.5,791.6 930.0,785.2 931.5,781.4 933.0,777.5 934.5,776.7 936.0,779.0 937.5,775.3 939.0,775.1 940.5,779.5 942.0,785.7 943.5,782.3 945.0,790.6 946.5,798.6 948.0,799.8 949.5,793.1 951.0,793.4 952.5,785.8 954.0,789.0 955.5,787.5 957.0,782.8 958.5,783.2 960.0,784.2 961.5,784.8 963.0,782.4 964.5,788.8 966.0,790.3 967.5,791.3 969.0,793.5 970.5,793.7 972.0,789.5 973.5,787.4 975.0,781.4 976.5,781.2 978.0,782.6 979.5,786.5 981.0,789.3 982.5,786.2 984.0,793.4 985.5,794.7 987.0,793.7 988.5,787.3 990.0,789.6 991.5,782.5 993.0,782.2 994.5,782.0 996.0,784.0 997.5,784.0 999.0,780.4 1000.5,785.6 1002.0,790.1 1003.5,793.4 1005.0,794.0 1006.5,796.5 1008.0,789.8 1009.5,789.5 1011.0,791.4 1012.5,788.4 1014.0,785.3 1015.5,786.5 1017.0,784.4 1018.5,783.9 1020.0,779.0 1021.5,779.5 1023.0,784.0 1024.5,791.9 1026.0,795.6 1027.5,795.4 1029.0,801.2 1030.5,804.1 1032.0,801.3 1033.5,796.5 1035.0,799.6 1036.5,796.3 1038.0,790.6 1039.5,790.6 1041.0,797.7 1042.5,795.5 1044.0,792.6 1045.5,798.9 1047.0,807.3 1048.5,803.2 1050.0,800.8 1051.5,802.0 1053.0,800.3 1054.5,795.1 1056.0,788.1 1057.5,793.1 1059.0,799.0 1060.5,800.6 1062.0,797.7 1063.5,793.4 1065.0,792.9 1066.5,796.0 1068.0,789.8 1069.5,788.6 1071.0,797.4 1072.5,802.3 1074.0,800.9 1075.5,800.5 1077.0,808.8 1078.5,805.6 1080.0,795.5 1081.5,803.5 1083.0,808.2 1084.5,803.9 1086.0,801.8 1087.5,807.8 1089.0,806.4 1090.5,802.5 1092.0,806.4 1093.5,803.1 1095.0,800.7 1096.5,796.6 1098.0,797.5 1099.5,800.2 1101.0,794.8 1102.5,800.0 1104.0,802.9 1105.5,799.9 1107.0,794.0 1108.5,796.1 1110.0,802.5 1111.5,804.4 1113.0,804.0 1114.5,804.6 1116.0,803.1 1117.5,803.6 1119.0,798.8 1120.5,792.5 1122.0,796.6 1123.5,801.4 1125.0,791.3 1126.5,790.5 1128.0,793.1 1129.5,796.8 1131.0,797.9 1132.5,795.0 1134.0,794.4 1135.5,801.1 1137.0,805.1 1138.5,806.7 1140.0,809.2 1141.5,813.9 1143.0,816.0 1144.5,811.3 1146.0,810.1 1147.5,808.4 1149.0,802.8 1150.5,807.9 1152.0,811.2 1153.5,811.6 1155.0,809.8 1156.5,813.4 1158.0,811.7 1159.5,808.2 1161.0,814.6 1162.5,814.4 1164.0,808.6 1165.5,813.8 1167.0,814.1 1168.5,804.1 1170.0,808.5 1171.5,808.4 1173.0,809.9 1174.5,815.5 1176.0,810.1 1177.5,805.2 1179.0,813.2 1180.5,810.3 1182.0,808.1 1183.5,800.1 1185.0,809.3 1186.5,811.4 1188.0,804.8 1189.5,802.0 1191.0,800.4 1192.5,799.8 1194.0,801.1 1195.5,811.2 1197.0,813.9 1198.5,808.1 1200.0,809.2 1201.5,811.7 1203.0,804.7 1204.5,808.6 1206.0,816.3 1207.5,819.1 1209.0,820.3 1210.5,824.3 1212.0,825.0 1213.5,821.8 1215.0,823.6 1216.5,832.7 1218.0,828.9 1219.5,831.3 1221.0,836.6 1222.5,837.0 1224.0,829.8 1225.5,829.2 1227.0,832.7 1228.5,830.9 1230.0,829.8 1231.5,826.0 1233.0,823.3 1234.5,827.0 1236.0,835.8 1237.5,838.6 1239.0,828.4 1240.5,819.5 1242.0,825.7 1243.5,826.3 1245.0,819.2 1246.5,823.9 1248.0,831.3 1249.5,827.8 1251.0,824.0 1252.5,821.9 1254.0,819.0 1255.5,811.1 1257.0,811.6 1258.5,817.6 1260.0,813.9 1261.5,813.1 1263.0,815.2 1264.5,818.8 1266.0,818.0 1267.5,815.4 1269.0,814.2 1270.5,815.3 1272.0,808.9 1273.5,816.0 1275.0,818.3 1276.5,818.9 1278.0,821.2 1279.5,822.9 1281.0,817.4 1282.5,817.7 1284.0,818.8 1285.5,815.3 1287.0,815.6 1288.5,815.7 1290.0,812.7 1291.5,809.9 1293.0,809.2 1294.5,805.9 1296.0,802.5 1297.5,804.9 1299.0,804.9 1300.5,808.2 1302.0,814.4 1303.5,808.6 1305.0,803.9 1306.5,805.5 1308.0,811.9 1309.5,803.4 1311.0,805.4 1312.5,813.3 1314.0,813.6 1315.5,810.5 1317.0,812.3 1318.5,822.3 1320.0,818.0 1321.5,808.2 1323.0,815.4 1324.5,813.2 1326.0,815.8 1327.5,821.3 1329.0,824.2 1330.5,816.3 1332.0,815.7 1333.5,815.0 1335.0,816.0 1336.5,816.2 1338.0,812.1 1339.5,816.2 1341.0,818.0 1342.5,816.4 1344.0,815.1 1345.5,811.9 1347.0,809.4 1348.5,801.7 1350.0,798.3 1351.5,796.8 1353.0,795.9 1354.5,796.0 1356.0,798.3 1357.5,799.8 1359.0,797.4 1360.5,800.1 1362.0,798.4 1363.5,791.1 1365.0,792.4 1366.5,797.8 1368.0,796.2 1369.5,796.7 1371.0,795.8 1372.5,793.9 1374.0,791.2 1375.5,801.1 1377.0,799.8 1378.5,792.2 1380.0,786.8 1381.5,788.4 1383.0,783.4 1384.5,785.3 1386.0,788.7 1387.5,793.3 1389.0,797.3 1390.5,800.8 1392.0,799.6 1393.5,800.7 1395.0,801.1 1396.5,802.5 1398.0,798.4 1399.5,797.2 1401.0,798.9 1402.5,802.5 1404.0,804.2 1405.5,803.6 1407.0,805.7 1408.5,801.2 1410.0,798.8 1411.5,793.0 1413.0,793.1 1414.5,789.2 1416.0,789.0 1417.5,791.2 1419.0,786.1 1420.5,793.6 1422.0,794.7 1423.5,796.5 1425.0,791.6 1426.5,797.5 1428.0,800.8 1429.5,797.0 1431.0,791.8 1432.5,797.1 1434.0,798.6 1435.5,802.4 1437.0,798.4 1438.5,796.4 1440.0,798.6 1441.5,807.6 1443.0,805.4 1444.5,808.3 1446.0,809.2 1447.5,814.1 1449.0,808.6 1450.5,813.4 1452.0,810.7 1453.5,809.9 1455.0,809.1 1456.5,803.1 1458.0,801.4 1459.5,803.9 1461.0,801.4 1462.5,792.4 1464.0,791.6 1465.5,790.4 1467.0,792.8 1468.5,790.7 1470.0,790.6 1471.5,789.7 1473.0,787.3 1474.5,791.2 1476.0,787.8 1477.5,787.5 1479.0,789.8 1480.5,794.7 1482.0,790.0 1483.5,786.2 1485.0,781.5 1486.5,780.8 1488.0,785.3 1489.5,787.3 1491.0,790.6 1492.5,789.9 1494.0,788.2 1495.5,782.6 1497.0,778.9 1498.5,784.9 1500.0,785.6 1501.5,778.3 1503.0,779.1 1504.5,782.7 1506.0,780.1 1507.5,773.0 1509.0,772.3 1510.5,774.6 1512.0,782.1 1513.5,785.5 1515.0,788.2 1516.5,805.1 1518.0,805.0 1519.5,799.1 1521.0,792.8 1522.5,797.3 1524.0,787.8 1525.5,783.7 1527.0,787.3 1528.5,781.5 1530.0,781.2 1531.5,782.8 1533.0,778.7 1534.5,784.6 1536.0,797.6 1537.5,799.4 1539.0,789.3 1540.5,783.4 1542.0,782.4 1543.5,783.7 1545.0,776.7 1546.5,776.3 1548.0,779.8 1549.5,785.9 1551.0,785.1 1552.5,785.5 1554.0,778.5 1555.5,776.7 1557.0,791.1 1558.5,794.6 1560.0,784.9 1561.5,787.6 1563.0,786.9 1564.5,796.0 1566.0,804.6 1567.5,801.0 1569.0,796.6 1570.5,799.5 1572.0,793.4 1573.5,791.7 1575.0,792.8 1576.5,803.8 1578.0,804.6 1579.5,801.1 1581.0,799.7 1582.5,807.8 1584.0,808.1 1585.5,799.7 1587.0,797.4 1588.5,802.7 1590.0,804.5 1591.5,799.6 1593.0,803.7 1594.5,810.7 1596.0,812.3 1597.5,813.6 1599.0,817.5 1600.5,822.2 1602.0,817.0 1603.5,813.9 1605.0,800.2 1606.5,797.8 1608.0,806.3 1609.5,812.8 1611.0,807.5 1612.5,811.1 1614.0,818.4 1615.5,820.2 1617.0,809.2 1618.5,809.2 1620.0,810.0 1621.5,799.1 1623.0,802.2 1624.5,810.6 1626.0,807.5 1627.5,797.2 1629.0,794.0 1630.5,808.0 1632.0,795.1 1633.5,780.7 1635.0,788.9 1636.5,791.1 1638.0,793.7 1639.5,785.5 1641.0,791.1 1642.5,792.8 1644.0,782.3 1645.5,781.3 1647.0,796.9 1648.5,784.2 1650.0,775.5 1651.5,787.7 1653.0,790.9 1654.5,788.1 1656.0,783.5 1657.5,785.1 1659.0,779.1 1660.5,782.4 1662.0,799.3 1663.5,810.2 1665.0,783.9 1666.5,764.4 1668.0,768.6 1669.5,786.4 1671.0,807.9 1672.5,826.0 1674.0,821.1 1675.5,824.4 1677.0,813.0 1678.5,807.0 1680.0,801.3 1681.5,798.3 1683.0,790.9 1684.5,788.2 1686.0,792.2 1687.5,792.3 1689.0,789.2 1690.5,789.8 1692.0,787.5 1693.5,794.6 1695.0,786.1 1696.5,783.1 1698.0,800.4 1699.5,805.9 1701.0,800.7 1702.5,814.0 1704.0,830.6 1705.5,829.0 1707.0,798.5 1708.5,804.5 1710.0,813.7 1711.5,813.1 1713.0,800.6 1714.5,793.6 1716.0,793.6 1717.5,802.9 1719.0,797.8 1720.5,794.3 1722.0,801.8 1723.5,800.9 1725.0,787.0 1726.5,816.3 1728.0,820.8 1729.5,803.7 1731.0,799.9 1732.5,808.4 1734.0,803.2 1735.5,790.6 1737.0,808.3 1738.5,818.5 1740.0,794.0 1741.5,792.9 1743.0,794.0 1744.5,807.5 1746.0,820.7 1747.5,822.7 1749.0,817.0 1750.5,806.9 1752.0,800.9 1753.5,811.0 1755.0,813.7 1756.5,828.1 1758.0,839.7 1759.5,841.3 1761.0,848.2 1762.5,854.5 1764.0,856.8 1765.5,852.7 1767.0,834.3 1768.5,832.8 1770.0,830.8 1771.5,816.1 1773.0,801.8 1774.5,813.9 1776.0,811.8 1777.5,774.2 1779.0,761.2 1780.5,788.5 1782.0,779.2 1783.5,769.3 1785.0,774.3 1786.5,779.7 1788.0,782.2 1789.5,788.5 1791.0,774.8 1792.5,769.4 1794.0,820.8 1795.5,821.2 1797.0,790.7 1798.5,777.8 1800.0,784.8 1801.5,777.8 1803.0,761.5 1804.5,788.7 1806.0,814.5 1807.5,804.3 1809.0,811.3 1810.5,842.4 1812.0,828.9 1813.5,811.1 1815.0,791.9 1816.5,793.6 1818.0,796.2 1819.5,797.8 1821.0,790.6 1822.5,800.1 1824.0,795.2 1825.5,802.1 1827.0,814.6 1828.5,840.1 1830.0,847.8 1831.5,821.9 1833.0,787.5 1834.5,797.7 1836.0,807.7 1837.5,832.0 1839.0,838.9 1840.5,842.6 1842.0,836.0 1843.5,824.8 1845.0,817.1 1846.5,811.9 1848.0,804.1 1849.5,800.0 1851.0,797.5 1852.5,792.6 1854.0,783.7 1855.5,784.1 1857.0,793.5 1858.5,793.0 1860.0,799.9 1861.5,825.5 1863.0,812.9 1864.5,761.9 1866.0,774.8 1867.5,787.9 1869.0,789.8 1870.5,800.6 1872.0,791.7 1873.5,769.1 1875.0,782.6 1876.5,795.1 1878.0,798.8 1879.5,812.5 1881.0,816.5 1882.5,802.5 1884.0,797.2 1885.5,801.8 1887.0,802.4 1888.5,808.0 1890.0,824.4 1891.5,822.8 1893.0,803.1 1894.5,799.1 1896.0,802.5 1897.5,797.6 1899.0,796.4 1900.5,796.6 1902.0,804.3 1903.5,806.2 1905.0,806.4 1906.5,812.9 1908.0,807.7 1909.5,823.2 1911.0,822.0 1912.5,805.6 1914.0,797.3 1915.5,801.9 1917.0,819.6 1918.5,813.0 1920.0,801.4 1921.5,804.0 1923.0,803.9 1924.5,781.1 1926.0,779.5 1927.5,792.7 1929.0,802.9 1930.5,796.5 1932.0,796.6 1933.5,794.9 1935.0,784.1 1936.5,783.4 1938.0,771.6 1939.5,769.6 1941.0,788.2 1942.5,785.9 1944.0,783.7 1945.5,786.0 1947.0,790.5 1948.5,784.0 1950.0,780.4 1951.5,788.6 1953.0,791.4 1954.5,783.7 1956.0,778.6 1957.5,791.6 1959.0,794.5 1960.5,786.2 1962.0,780.8 1963.5,796.2 1965.0,793.0 1966.5,777.1 1968.0,774.2 1969.5,792.2 1971.0,792.4 1972.5,783.3 1974.0,797.1 1975.5,811.8 1977.0,800.5 1978.5,791.1 1980.0,802.1 1981.5,806.2 1983.0,791.7 1984.5,789.0 1986.0,802.9 1987.5,797.3 1989.0,794.5 1990.5,808.3 1992.0,799.4 1993.5,792.4 1995.0,788.8 1996.5,798.7 1998.0,797.4 1999.5,809.6 2001.0,803.5 2002.5,793.0 2004.0,794.7 2005.5,799.7 2007.0,788.6 2008.5,780.9 2010.0,784.0 2011.5,786.3 2013.0,784.5 2014.5,790.5 2016.0,796.9 2017.5,805.1 2019.0,807.0 2020.5,807.8 2022.0,804.6 2023.5,815.9 2025.0,814.1 2026.5,808.6 2028.0,797.2 2029.5,799.6 2031.0,793.6 2032.5,785.2 2034.0,781.0 2035.5,782.6 2037.0,785.3 2038.5,791.1 2040.0,782.3 2041.5,777.7 2043.0,791.5 2044.5,800.1 2046.0,785.9 2047.5,787.1 2049.0,797.3 2050.5,803.9 2052.0,796.6 2053.5,800.1 2055.0,800.9 2056.5,794.1 2058.0,789.8 2059.5,797.3 2061.0,790.6 2062.5,787.2 2064.0,788.6 2065.5,790.4 2067.0,784.0 2068.5,781.0 2070.0,783.5 2071.5,786.1 2073.0,778.1 2074.5,780.1 2076.0,782.8 2077.5,783.6 2079.0,796.2 2080.5,796.1 2082.0,789.3 2083.5,786.6 2085.0,791.2 2086.5,791.1 2088.0,785.2 2089.5,784.5 2091.0,787.0 2092.5,787.8 2094.0,782.3 2095.5,784.7 2097.0,784.1 2098.5,793.5 2100.0,795.9 2101.5,790.5 2103.0,796.9 2104.5,808.6 2106.0,803.0 2107.5,794.7 2109.0,803.8 2110.5,812.6 2112.0,800.5 2113.5,782.9 2115.0,788.5 2116.5,785.3 2118.0,778.3 2119.5,786.8 2121.0,791.5 2122.5,787.6 2124.0,792.4 2125.5,799.2 2127.0,791.4 2128.5,795.3 2130.0,796.4 2131.5,792.8 2133.0,787.4 2134.5,786.5 2136.0,781.3 2137.5,776.6 2139.0,786.8 2140.5,793.8 2142.0,784.2 2143.5,796.6 2145.0,810.6 2146.5,804.3 2148.0,792.5 2149.5,797.3 2151.0,797.7 2152.5,788.1 2154.0,784.0 2155.5,786.2 2157.0,784.1 2158.5,789.3 2160.0,794.0 2161.5,794.8 2163.0,789.7 2164.5,795.6 2166.0,791.2 2167.5,780.7 2169.0,779.0 2170.5,770.9 2172.0,774.4 2173.5,780.1 2175.0,774.3 2176.5,772.4 2178.0,787.9 2179.5,795.6 2181.0,774.3 2182.5,769.5 2184.0,793.2 2185.5,789.8 2187.0,776.0 2188.5,778.7 2190.0,789.1 2191.5,779.9 2193.0,778.6 2194.5,791.2 2196.0,788.9 2197.5,780.3 2199.0,787.2 2200.5,794.4 2202.0,786.9 2203.5,789.7 2205.0,802.2 2206.5,807.1 2208.0,797.3 2209.5,803.6 2211.0,814.6 2212.5,813.3 2214.0,809.5 2215.5,809.5 2217.0,805.1 2218.5,782.5 2220.0,785.4 2221.5,803.0 2223.0,811.2 2224.5,807.8 2226.0,809.8 2227.5,809.1 2229.0,807.4 2230.5,807.2 2232.0,806.4 2233.5,803.7 2235.0,800.6 2236.5,796.5 2238.0,794.3 2239.5,795.4 2241.0,790.2 2242.5,780.3 2244.0,781.3 2245.5,793.9 2247.0,788.2 2248.5,778.1 2250.0,785.1 2251.5,792.0 2253.0,791.2 2254.5,783.2 2256.0,791.3 2257.5,793.6 2259.0,789.2 2260.5,780.2 2262.0,779.6 2263.5,788.7 2265.0,794.8 2266.5,792.7 2268.0,788.0 2269.5,796.0 2271.0,803.3 2272.5,801.0 2274.0,793.4 2275.5,791.2 2277.0,799.6 2278.5,801.8 2280.0,789.7 2281.5,793.3 2283.0,804.3 2284.5,808.2 2286.0,793.4 2287.5,790.0 2289.0,800.9 2290.5,791.8 2292.0,786.3 2293.5,792.8 2295.0,799.1 2296.5,793.3 2298.0,787.2 2299.5,790.9 2301.0,794.0 2302.5,789.0 2304.0,786.7 2305.5,783.7 2307.0,790.9 2308.5,788.1 2310.0,780.5 2311.5,783.8 2313.0,788.0 2314.5,789.0 2316.0,782.8 2317.5,788.2 2319.0,788.8 2320.5,781.5 2322.0,779.9 2323.5,781.6 2325.0,789.8 2326.5,781.2 2328.0,771.0 2329.5,776.9 2331.0,770.0 2332.5,768.7 2334.0,769.5 2335.5,784.0 2337.0,788.0 2338.5,783.0 2340.0,787.0 2341.5,792.9 2343.0,780.1 2344.5,782.9 2346.0,784.6 2347.5,771.2 2349.0,764.3 2350.5,775.0 2352.0,783.0 2353.5,778.4 2355.0,781.6 2356.5,788.7 2358.0,785.7 2359.5,781.5 2361.0,786.2 2362.5,785.9 2364.0,788.8 2365.5,788.8 2367.0,792.4 2368.5,783.9 2370.0,787.6 2371.5,791.3 2373.0,787.3 2374.5,779.9 2376.0,777.7 2377.5,775.4 2379.0,783.2 2380.5,781.2 2382.0,780.0 2383.5,789.8 2385.0,793.9 2386.5,791.3 2388.0,789.0 2389.5,799.4 2391.0,796.7 2392.5,792.8 2394.0,792.0 2395.5,789.5 2397.0,788.2 2398.5,789.9 2400.0,792.6 2401.5,785.2 2403.0,784.3 2404.5,791.6 2406.0,790.6 2407.5,780.3 2409.0,776.4 2410.5,781.9 2412.0,784.4 2413.5,787.4 2415.0,784.2 2416.5,782.8 2418.0,785.8 2419.5,792.0 2421.0,788.7 2422.5,781.7 2424.0,787.2 2425.5,792.8 2427.0,790.6 2428.5,782.1 2430.0,786.2 2431.5,793.8 2433.0,791.2 2434.5,784.0 2436.0,784.6 2437.5,792.5 2439.0,787.4 2440.5,783.6 2442.0,788.5 2443.5,792.3 2445.0,783.7 2446.5,775.3 2448.0,790.9 2449.5,794.8 2451.0,784.4 2452.5,776.6 2454.0,784.1 2455.5,792.6 2457.0,790.0 2458.5,780.3 2460.0,783.5 2461.5,786.4 2463.0,784.0 2464.5,778.4 2466.0,783.1 2467.5,787.2 2469.0,782.0 2470.5,776.7 2472.0,785.0 2473.5,784.1 2475.0,779.2 2476.5,780.4 2478.0,785.0 2479.5,782.1 2481.0,779.3 2482.5,778.2 2484.0,777.5 2485.5,782.1 2487.0,779.1 2488.5,775.6 2490.0,768.0 2491.5,773.8 2493.0,773.8 2494.5,769.9 2496.0,779.1 2497.5,780.7 2499.0,779.9 2500.5,784.5 2502.0,780.1 2503.5,774.9 2505.0,775.8 2506.5,777.2 2508.0,778.6 2509.5,774.2 2511.0,778.3 2512.5,775.7 2514.0,772.0 2515.5,764.4 2517.0,767.1 2518.5,773.9 2520.0,778.3 2521.5,775.6 2523.0,772.1 2524.5,778.8 2526.0,779.2 2527.5,776.0 2529.0,778.2 2530.5,782.6 2532.0,779.4 2533.5,781.4 2535.0,785.0 2536.5,776.3 2538.0,772.0 2539.5,782.8 2541.0,788.0 2542.5,784.0 2544.0,786.6 2545.5,791.8 2547.0,789.9 2548.5,788.3 2550.0,791.2 2551.5,791.7 2553.0,788.1 2554.5,788.3 2556.0,788.7 2557.5,792.0 2559.0,788.5 2560.5,784.5 2562.0,783.7 2563.5,786.6 2565.0,782.3 2566.5,783.3 2568.0,785.8 2569.5,787.9" fill="none" stroke="#8e4a9c" stroke-width="2" stroke-linejoin="round"/>
<path d="M432.0,894.1 433.5,894.3 435.0,892.7 436.5,900.6 438.0,899.7 439.5,896.6 441.0,903.4 442.5,907.7 444.0,897.6 445.5,894.9 447.0,905.4 448.5,901.0 450.0,892.0 451.5,889.0 453.0,890.8 454.5,894.7 456.0,890.5 457.5,900.6 459.0,904.6 460.5,897.8 462.0,893.1 463.5,898.9 465.0,897.6 466.5,892.0 468.0,900.7 469.5,899.7 471.0,900.8 472.5,895.4 474.0,904.8 475.5,899.6 477.0,897.2 478.5,895.0 480.0,891.4 481.5,884.4 483.0,886.3 484.5,890.5 486.0,893.0 487.5,891.1 489.0,888.9 490.5,886.5 492.0,878.7 493.5,884.3 495.0,882.2 496.5,885.2 498.0,889.5 499.5,895.2 501.0,892.5 502.5,899.4 504.0,901.5 505.5,898.3 507.0,891.7 508.5,886.8 510.0,890.5 511.5,887.2 513.0,889.0 514.5,892.0 516.0,880.9 517.5,878.7 519.0,876.0 520.5,880.3 522.0,892.1 523.5,884.3 525.0,876.2 526.5,879.3 528.0,887.8 529.5,876.0 531.0,878.9 532.5,888.0 534.0,894.2 535.5,893.0 537.0,893.7 538.5,895.3 540.0,897.7 541.5,902.4 543.0,908.3 544.5,894.0 546.0,886.5 547.5,887.9 549.0,878.3 550.5,863.4 552.0,857.4 553.5,855.5 555.0,842.2 556.5,853.4 558.0,865.4 559.5,871.6 561.0,865.9 562.5,875.5 564.0,880.0 565.5,867.6 567.0,874.8 568.5,884.9 570.0,882.5 571.5,881.3 573.0,893.6 574.5,893.5 576.0,886.4 577.5,888.3 579.0,888.6 580.5,887.2 582.0,886.6 583.5,885.3 585.0,885.0 586.5,889.8 588.0,899.8 589.5,893.9 591.0,891.4 592.5,890.9 594.0,891.5 595.5,889.9 597.0,896.7 598.5,895.4 600.0,897.4 601.5,906.4 603.0,901.7 604.5,903.4 606.0,901.1 607.5,885.4 609.0,884.2 610.5,884.8 612.0,885.9 613.5,885.9 615.0,885.5 616.5,884.3 618.0,883.2 619.5,884.3 621.0,891.2 622.5,894.3 624.0,893.8 625.5,896.8 627.0,898.9 628.5,888.6 630.0,889.9 631.5,890.9 633.0,888.3 634.5,883.3 636.0,885.8 637.5,889.7 639.0,893.1 640.5,900.7 642.0,900.1 643.5,894.8 645.0,890.6 646.5,884.7 648.0,884.1 649.5,885.2 651.0,887.9 652.5,888.2 654.0,891.6 655.5,896.3 657.0,892.7 658.5,891.3 660.0,891.5 661.5,894.4 663.0,892.1 664.5,884.7 666.0,890.7 667.5,894.3 669.0,896.1 670.5,898.9 672.0,902.4 673.5,903.9 675.0,895.5 676.5,893.2 678.0,892.2 679.5,882.8 681.0,881.1 682.5,879.3 684.0,882.8 685.5,882.2 687.0,894.2 688.5,902.5 690.0,907.9 691.5,910.8 693.0,909.3 694.5,893.4 696.0,892.7 697.5,894.0 699.0,894.8 700.5,886.6 702.0,885.6 703.5,887.3 705.0,884.5 706.5,885.4 708.0,887.1 709.5,884.9 711.0,883.8 712.5,884.4 714.0,887.0 715.5,881.7 717.0,887.8 718.5,894.1 720.0,897.4 721.5,896.0 723.0,897.2 724.5,895.8 726.0,889.8 727.5,887.0 729.0,880.0 730.5,877.3 732.0,881.8 733.5,884.3 735.0,883.4 736.5,883.0 738.0,880.0 739.5,874.7 741.0,871.9 742.5,882.9 744.0,883.3 745.5,883.6 747.0,885.4 748.5,886.7 750.0,894.3 751.5,896.1 753.0,891.5 754.5,890.9 756.0,888.8 757.5,879.2 759.0,879.3 760.5,880.6 762.0,885.2 763.5,886.2 765.0,883.1 766.5,884.3 768.0,882.9 769.5,883.6 771.0,881.9 772.5,879.2 774.0,873.2 775.5,873.0 777.0,872.0 778.5,874.0 780.0,874.1 781.5,878.9 783.0,875.0 784.5,865.9 786.0,867.6 787.5,871.0 789.0,863.1 790.5,859.2 792.0,861.1 793.5,865.0 795.0,866.3 796.5,870.8 798.0,883.4 799.5,884.1 801.0,884.3 802.5,884.2 804.0,887.0 805.5,885.7 807.0,883.7 808.5,887.8 810.0,886.9 811.5,889.6 813.0,890.6 814.5,896.5 816.0,898.1 817.5,900.1 819.0,897.4 820.5,895.8 822.0,896.9 823.5,894.4 825.0,889.9 826.5,886.1 828.0,882.4 829.5,883.4 831.0,881.1 832.5,888.9 834.0,888.4 835.5,875.5 837.0,859.5 838.5,859.1 840.0,866.5 841.5,872.0 843.0,868.9 844.5,865.3 846.0,861.3 847.5,854.5 849.0,861.8 850.5,867.9 852.0,870.1 853.5,865.5 855.0,866.3 856.5,865.5 858.0,856.3 859.5,864.3 861.0,872.8 862.5,865.6 864.0,862.1 865.5,874.2 867.0,872.8 868.5,871.2 870.0,880.1 871.5,885.3 873.0,889.3 874.5,883.2 876.0,880.6 877.5,880.2 879.0,879.1 880.5,880.1 882.0,880.3 883.5,880.8 885.0,887.0 886.5,895.9 888.0,895.2 889.5,891.0 891.0,890.6 892.5,890.2 894.0,886.3 895.5,881.6 897.0,881.5 898.5,883.9 900.0,888.9 901.5,889.9 903.0,888.2 904.5,884.0 906.0,881.8 907.5,876.8 909.0,883.6 910.5,883.8 912.0,886.3 913.5,883.7 915.0,875.2 916.5,878.2 918.0,878.3 919.5,879.1 921.0,877.8 922.5,882.6 924.0,884.5 925.5,884.6 927.0,887.2 928.5,884.1 930.0,873.0 931.5,870.7 933.0,871.0 934.5,878.7 936.0,873.7 937.5,869.6 939.0,873.6 940.5,883.4 942.0,877.6 943.5,879.7 945.0,888.5 946.5,897.2 948.0,890.3 949.5,886.9 951.0,888.6 952.5,888.5 954.0,885.9 955.5,881.9 957.0,877.8 958.5,881.8 960.0,884.3 961.5,882.5 963.0,882.0 964.5,887.3 966.0,889.2 967.5,886.4 969.0,888.3 970.5,884.6 972.0,880.7 973.5,879.0 975.0,876.1 976.5,874.5 978.0,874.8 979.5,881.1 981.0,885.5 982.5,888.1 984.0,888.1 985.5,888.8 987.0,882.7 988.5,883.1 990.0,883.6 991.5,879.9 993.0,874.1 994.5,874.7 996.0,874.2 997.5,875.0 999.0,874.8 1000.5,881.6 1002.0,885.3 1003.5,889.4 1005.0,889.6 1006.5,885.8 1008.0,885.0 1009.5,885.1 1011.0,887.1 1012.5,879.7 1014.0,878.7 1015.5,878.3 1017.0,877.6 1018.5,873.2 1020.0,877.5 1021.5,879.8 1023.0,884.1 1024.5,884.7 1026.0,886.6 1027.5,891.7 1029.0,892.4 1030.5,891.7 1032.0,891.1 1033.5,887.6 1035.0,889.2 1036.5,888.4 1038.0,880.5 1039.5,881.1 1041.0,889.1 1042.5,891.4 1044.0,892.1 1045.5,892.2 1047.0,899.4 1048.5,895.8 1050.0,898.6 1051.5,899.7 1053.0,895.6 1054.5,891.2 1056.0,886.5 1057.5,889.2 1059.0,892.2 1060.5,894.9 1062.0,892.1 1063.5,888.4 1065.0,886.3 1066.5,882.2 1068.0,882.3 1069.5,885.5 1071.0,889.4 1072.5,884.6 1074.0,886.3 1075.5,892.1 1077.0,898.8 1078.5,893.8 1080.0,893.2 1081.5,897.5 1083.0,899.2 1084.5,897.4 1086.0,897.5 1087.5,899.7 1089.0,901.4 1090.5,901.1 1092.0,899.2 1093.5,894.2 1095.0,887.5 1096.5,888.0 1098.0,888.2 1099.5,888.7 1101.0,888.4 1102.5,892.1 1104.0,890.3 1105.5,890.2 1107.0,891.5 1108.5,893.1 1110.0,895.2 1111.5,897.0 1113.0,898.0 1114.5,898.9 1116.0,893.4 1117.5,898.6 1119.0,895.4 1120.5,893.1 1122.0,891.3 1123.5,895.8 1125.0,896.4 1126.5,894.9 1128.0,896.8 1129.5,898.1 1131.0,892.2 1132.5,890.3 1134.0,893.0 1135.5,888.7 1137.0,893.1 1138.5,895.8 1140.0,900.0 1141.5,898.1 1143.0,904.8 1144.5,898.4 1146.0,894.3 1147.5,899.8 1149.0,899.2 1150.5,894.5 1152.0,894.5 1153.5,896.4 1155.0,898.9 1156.5,901.1 1158.0,901.7 1159.5,901.7 1161.0,904.3 1162.5,901.3 1164.0,898.8 1165.5,896.3 1167.0,898.9 1168.5,890.6 1170.0,886.9 1171.5,890.7 1173.0,899.4 1174.5,900.1 1176.0,901.7 1177.5,903.4 1179.0,907.7 1180.5,904.4 1182.0,904.8 1183.5,904.4 1185.0,906.6 1186.5,907.8 1188.0,904.9 1189.5,895.7 1191.0,893.2 1192.5,897.3 1194.0,899.1 1195.5,903.3 1197.0,903.4 1198.5,903.1 1200.0,899.8 1201.5,902.8 1203.0,894.6 1204.5,894.3 1206.0,904.3 1207.5,904.1 1209.0,900.4 1210.5,903.9 1212.0,906.6 1213.5,903.1 1215.0,899.6 1216.5,902.7 1218.0,908.5 1219.5,912.0 1221.0,912.8 1222.5,906.1 1224.0,900.3 1225.5,905.6 1227.0,909.4 1228.5,901.5 1230.0,905.4 1231.5,908.7 1233.0,904.1 1234.5,904.9 1236.0,910.9 1237.5,915.3 1239.0,904.7 1240.5,899.7 1242.0,908.7 1243.5,912.1 1245.0,911.7 1246.5,910.5 1248.0,915.9 1249.5,911.6 1251.0,905.1 1252.5,900.7 1254.0,901.0 1255.5,893.9 1257.0,896.1 1258.5,907.9 1260.0,905.3 1261.5,897.2 1263.0,903.5 1264.5,906.6 1266.0,906.7 1267.5,903.2 1269.0,901.0 1270.5,906.2 1272.0,899.3 1273.5,901.1 1275.0,899.0 1276.5,906.2 1278.0,906.3 1279.5,905.6 1281.0,904.2 1282.5,909.5 1284.0,906.9 1285.5,902.5 1287.0,909.3 1288.5,909.9 1290.0,902.9 1291.5,899.9 1293.0,901.8 1294.5,893.5 1296.0,880.9 1297.5,880.8 1299.0,886.3 1300.5,888.5 1302.0,890.7 1303.5,888.3 1305.0,888.6 1306.5,899.0 1308.0,897.0 1309.5,887.8 1311.0,892.1 1312.5,901.5 1314.0,894.9 1315.5,885.7 1317.0,893.8 1318.5,903.4 1320.0,894.3 1321.5,892.4 1323.0,906.5 1324.5,906.4 1326.0,902.1 1327.5,900.7 1329.0,902.1 1330.5,898.2 1332.0,900.0 1333.5,900.7 1335.0,895.3 1336.5,897.3 1338.0,899.3 1339.5,901.8 1341.0,900.0 1342.5,899.7 1344.0,897.2 1345.5,892.1 1347.0,887.7 1348.5,879.4 1350.0,885.3 1351.5,891.3 1353.0,886.9 1354.5,884.1 1356.0,886.7 1357.5,890.6 1359.0,883.9 1360.5,884.5 1362.0,889.3 1363.5,882.4 1365.0,881.2 1366.5,889.8 1368.0,894.6 1369.5,895.4 1371.0,889.5 1372.5,890.4 1374.0,891.5 1375.5,892.1 1377.0,896.4 1378.5,887.9 1380.0,879.9 1381.5,877.8 1383.0,879.6 1384.5,880.7 1386.0,883.5 1387.5,880.8 1389.0,882.6 1390.5,883.8 1392.0,882.8 1393.5,885.3 1395.0,891.3 1396.5,888.6 1398.0,885.5 1399.5,887.0 1401.0,894.6 1402.5,890.9 1404.0,890.0 1405.5,892.6 1407.0,898.4 1408.5,888.2 1410.0,881.9 1411.5,889.9 1413.0,887.1 1414.5,880.9 1416.0,880.6 1417.5,879.1 1419.0,879.0 1420.5,877.8 1422.0,887.4 1423.5,889.5 1425.0,888.4 1426.5,885.4 1428.0,888.2 1429.5,882.4 1431.0,882.0 1432.5,886.1 1434.0,883.9 1435.5,880.4 1437.0,886.2 1438.5,887.7 1440.0,887.6 1441.5,893.0 1443.0,891.8 1444.5,886.5 1446.0,886.4 1447.5,890.6 1449.0,899.2 1450.5,898.6 1452.0,897.4 1453.5,894.0 1455.0,889.0 1456.5,883.8 1458.0,883.7 1459.5,886.1 1461.0,881.6 1462.5,881.2 1464.0,879.8 1465.5,876.2 1467.0,874.3 1468.5,882.6 1470.0,881.2 1471.5,879.5 1473.0,881.2 1474.5,885.3 1476.0,886.4 1477.5,883.8 1479.0,887.5 1480.5,892.5 1482.0,892.8 1483.5,885.6 1485.0,883.0 1486.5,880.2 1488.0,888.0 1489.5,895.1 1491.0,896.5 1492.5,895.8 1494.0,888.3 1495.5,887.9 1497.0,882.3 1498.5,881.5 1500.0,883.4 1501.5,877.1 1503.0,877.8 1504.5,881.1 1506.0,871.0 1507.5,870.2 1509.0,874.2 1510.5,872.7 1512.0,876.2 1513.5,879.5 1515.0,886.7 1516.5,893.5 1518.0,894.0 1519.5,889.9 1521.0,889.4 1522.5,887.3 1524.0,878.5 1525.5,876.5 1527.0,877.5 1528.5,873.0 1530.0,866.4 1531.5,868.4 1533.0,865.1 1534.5,870.1 1536.0,879.0 1537.5,886.1 1539.0,878.7 1540.5,870.6 1542.0,871.5 1543.5,880.8 1545.0,874.0 1546.5,867.3 1548.0,865.3 1549.5,868.1 1551.0,872.6 1552.5,874.4 1554.0,866.2 1555.5,871.2 1557.0,876.1 1558.5,884.4 1560.0,873.4 1561.5,874.7 1563.0,879.7 1564.5,886.8 1566.0,889.0 1567.5,890.6 1569.0,885.9 1570.5,876.7 1572.0,879.4 1573.5,883.9 1575.0,883.8 1576.5,890.8 1578.0,894.8 1579.5,891.8 1581.0,889.6 1582.5,895.7 1584.0,885.8 1585.5,879.5 1587.0,878.7 1588.5,885.6 1590.0,884.9 1591.5,882.1 1593.0,881.0 1594.5,881.7 1596.0,880.3 1597.5,883.2 1599.0,890.1 1600.5,885.3 1602.0,888.7 1603.5,881.7 1605.0,876.0 1606.5,876.3 1608.0,887.0 1609.5,893.5 1611.0,882.1 1612.5,883.2 1614.0,891.9 1615.5,889.5 1617.0,878.3 1618.5,887.3 1620.0,892.1 1621.5,893.5 1623.0,888.7 1624.5,890.8 1626.0,890.9 1627.5,881.3 1629.0,887.7 1630.5,893.4 1632.0,881.0 1633.5,869.7 1635.0,875.5 1636.5,885.2 1638.0,881.1 1639.5,880.3 1641.0,885.7 1642.5,891.9 1644.0,877.8 1645.5,872.3 1647.0,876.0 1648.5,873.5 1650.0,865.0 1651.5,876.3 1653.0,882.9 1654.5,873.5 1656.0,867.8 1657.5,866.0 1659.0,868.0 1660.5,873.5 1662.0,880.1 1663.5,889.7 1665.0,875.1 1666.5,851.3 1668.0,859.1 1669.5,879.1 1671.0,894.3 1672.5,904.3 1674.0,917.4 1675.5,917.2 1677.0,907.9 1678.5,909.3 1680.0,906.0 1681.5,900.3 1683.0,893.4 1684.5,892.5 1686.0,882.9 1687.5,895.4 1689.0,892.8 1690.5,876.2 1692.0,863.9 1693.5,872.7 1695.0,869.5 1696.5,864.6 1698.0,895.7 1699.5,901.1 1701.0,899.9 1702.5,904.0 1704.0,914.1 1705.5,899.9 1707.0,883.8 1708.5,894.0 1710.0,891.6 1711.5,882.0 1713.0,903.4 1714.5,892.8 1716.0,878.6 1717.5,875.9 1719.0,882.7 1720.5,882.1 1722.0,893.7 1723.5,877.5 1725.0,863.1 1726.5,893.8 1728.0,906.2 1729.5,879.5 1731.0,885.8 1732.5,901.8 1734.0,891.2 1735.5,876.9 1737.0,895.5 1738.5,909.0 1740.0,889.4 1741.5,886.2 1743.0,896.0 1744.5,890.8 1746.0,910.0 1747.5,907.2 1749.0,890.3 1750.5,873.3 1752.0,880.8 1753.5,892.3 1755.0,885.1 1756.5,907.8 1758.0,917.4 1759.5,913.7 1761.0,926.4 1762.5,942.2 1764.0,942.9 1765.5,942.0 1767.0,923.8 1768.5,912.1 1770.0,914.4 1771.5,892.1 1773.0,879.4 1774.5,908.7 1776.0,909.9 1777.5,862.5 1779.0,845.3 1780.5,872.4 1782.0,871.4 1783.5,847.8 1785.0,864.7 1786.5,875.3 1788.0,877.1 1789.5,868.2 1791.0,857.3 1792.5,865.8 1794.0,917.2 1795.5,911.0 1797.0,878.2 1798.5,864.5 1800.0,883.5 1801.5,871.3 1803.0,848.0 1804.5,867.5 1806.0,901.5 1807.5,896.0 1809.0,895.6 1810.5,914.0 1812.0,910.3 1813.5,893.8 1815.0,875.0 1816.5,869.0 1818.0,874.8 1819.5,881.2 1821.0,888.3 1822.5,887.1 1824.0,880.5 1825.5,885.9 1827.0,911.9 1828.5,930.3 1830.0,910.3 1831.5,893.3 1833.0,889.5 1834.5,887.1 1836.0,886.1 1837.5,908.3 1839.0,941.5 1840.5,928.3 1842.0,908.1 1843.5,911.2 1845.0,914.7 1846.5,911.0 1848.0,896.7 1849.5,885.3 1851.0,889.0 1852.5,885.6 1854.0,877.5 1855.5,882.9 1857.0,893.6 1858.5,904.2 1860.0,898.4 1861.5,908.5 1863.0,903.9 1864.5,868.0 1866.0,873.0 1867.5,879.8 1869.0,889.3 1870.5,896.5 1872.0,888.0 1873.5,868.5 1875.0,870.2 1876.5,872.2 1878.0,898.3 1879.5,912.7 1881.0,897.5 1882.5,880.7 1884.0,898.0 1885.5,905.6 1887.0,885.5 1888.5,885.7 1890.0,917.2 1891.5,920.8 1893.0,886.6 1894.5,890.2 1896.0,899.1 1897.5,892.6 1899.0,883.2 1900.5,891.5 1902.0,902.2 1903.5,889.6 1905.0,896.4 1906.5,901.3 1908.0,900.4 1909.5,899.5 1911.0,908.7 1912.5,896.1 1914.0,886.0 1915.5,894.4 1917.0,925.2 1918.5,915.4 1920.0,897.7 1921.5,884.6 1923.0,890.5 1924.5,880.0 1926.0,882.4 1927.5,888.7 1929.0,899.5 1930.5,894.7 1932.0,894.1 1933.5,883.7 1935.0,879.4 1936.5,878.7 1938.0,874.0 1939.5,867.3 1941.0,874.2 1942.5,878.6 1944.0,883.5 1945.5,885.5 1947.0,882.8 1948.5,874.8 1950.0,872.5 1951.5,887.2 1953.0,883.6 1954.5,868.4 1956.0,871.5 1957.5,887.1 1959.0,893.3 1960.5,875.8 1962.0,882.7 1963.5,896.0 1965.0,889.0 1966.5,865.7 1968.0,873.7 1969.5,892.5 1971.0,884.8 1972.5,871.7 1974.0,885.5 1975.5,890.7 1977.0,883.0 1978.5,885.8 1980.0,885.6 1981.5,889.5 1983.0,882.1 1984.5,878.6 1986.0,882.0 1987.5,882.3 1989.0,897.6 1990.5,905.3 1992.0,892.5 1993.5,883.2 1995.0,896.1 1996.5,896.6 1998.0,897.7 1999.5,902.0 2001.0,898.2 2002.5,895.7 2004.0,892.9 2005.5,894.9 2007.0,879.1 2008.5,876.6 2010.0,879.2 2011.5,885.1 2013.0,880.1 2014.5,884.2 2016.0,888.7 2017.5,896.1 2019.0,903.4 2020.5,901.1 2022.0,894.3 2023.5,899.8 2025.0,904.9 2026.5,898.4 2028.0,888.9 2029.5,886.6 2031.0,878.3 2032.5,875.2 2034.0,877.8 2035.5,871.3 2037.0,872.0 2038.5,877.8 2040.0,877.3 2041.5,874.6 2043.0,878.1 2044.5,880.2 2046.0,869.3 2047.5,864.0 2049.0,878.0 2050.5,883.4 2052.0,878.8 2053.5,886.7 2055.0,896.0 2056.5,880.9 2058.0,871.3 2059.5,879.0 2061.0,876.8 2062.5,868.0 2064.0,877.2 2065.5,886.2 2067.0,881.4 2068.5,869.1 2070.0,875.7 2071.5,881.0 2073.0,877.1 2074.5,866.6 2076.0,869.4 2077.5,878.3 2079.0,881.9 2080.5,878.7 2082.0,880.2 2083.5,888.5 2085.0,881.7 2086.5,879.4 2088.0,874.2 2089.5,876.0 2091.0,875.8 2092.5,873.4 2094.0,875.5 2095.5,872.7 2097.0,877.4 2098.5,885.7 2100.0,886.1 2101.5,878.0 2103.0,884.9 2104.5,896.0 2106.0,890.9 2107.5,881.0 2109.0,889.3 2110.5,898.3 2112.0,882.0 2113.5,873.4 2115.0,878.5 2116.5,872.5 2118.0,862.7 2119.5,873.3 2121.0,877.9 2122.5,880.3 2124.0,881.4 2125.5,884.2 2127.0,887.3 2128.5,887.8 2130.0,885.4 2131.5,880.4 2133.0,880.6 2134.5,879.9 2136.0,869.6 2137.5,864.6 2139.0,883.7 2140.5,884.0 2142.0,871.7 2143.5,884.7 2145.0,895.9 2146.5,882.4 2148.0,878.9 2149.5,884.5 2151.0,883.0 2152.5,873.9 2154.0,873.4 2155.5,874.7 2157.0,874.9 2158.5,879.4 2160.0,884.2 2161.5,879.2 2163.0,883.5 2164.5,896.0 2166.0,883.2 2167.5,867.6 2169.0,868.4 2170.5,864.6 2172.0,859.9 2173.5,870.7 2175.0,870.0 2176.5,862.4 2178.0,870.0 2179.5,878.0 2181.0,872.1 2182.5,864.5 2184.0,877.3 2185.5,876.0 2187.0,869.7 2188.5,872.3 2190.0,873.6 2191.5,869.7 2193.0,871.3 2194.5,872.1 2196.0,866.4 2197.5,865.2 2199.0,880.5 2200.5,874.5 2202.0,866.5 2203.5,866.9 2205.0,881.8 2206.5,889.9 2208.0,879.8 2209.5,883.9 2211.0,893.6 2212.5,890.8 2214.0,889.1 2215.5,888.2 2217.0,894.5 2218.5,874.2 2220.0,869.7 2221.5,894.6 2223.0,902.0 2224.5,890.8 2226.0,891.9 2227.5,898.9 2229.0,894.1 2230.5,883.1 2232.0,881.0 2233.5,892.8 2235.0,891.3 2236.5,882.7 2238.0,878.0 2239.5,878.7 2241.0,886.2 2242.5,872.6 2244.0,863.8 2245.5,875.0 2247.0,879.8 2248.5,864.5 2250.0,868.4 2251.5,879.8 2253.0,881.7 2254.5,873.1 2256.0,870.8 2257.5,875.9 2259.0,870.4 2260.5,872.5 2262.0,868.1 2263.5,867.0 2265.0,876.7 2266.5,881.0 2268.0,870.5 2269.5,875.6 2271.0,888.3 2272.5,883.5 2274.0,880.5 2275.5,878.5 2277.0,876.7 2278.5,882.2 2280.0,888.1 2281.5,884.8 2283.0,883.5 2284.5,887.6 2286.0,880.9 2287.5,872.3 2289.0,879.8 2290.5,876.2 2292.0,863.4 2293.5,863.9 2295.0,869.2 2296.5,866.9 2298.0,868.8 2299.5,880.8 2301.0,878.9 2302.5,872.8 2304.0,872.1 2305.5,872.7 2307.0,876.5 2308.5,871.4 2310.0,867.1 2311.5,865.4 2313.0,872.9 2314.5,879.0 2316.0,873.2 2317.5,872.6 2319.0,879.0 2320.5,883.5 2322.0,870.7 2323.5,866.8 2325.0,869.0 2326.5,868.8 2328.0,857.3 2329.5,859.4 2331.0,858.3 2332.5,854.0 2334.0,858.8 2335.5,866.5 2337.0,868.9 2338.5,865.5 2340.0,873.1 2341.5,873.7 2343.0,858.5 2344.5,861.5 2346.0,873.1 2347.5,868.7 2349.0,850.5 2350.5,861.2 2352.0,869.8 2353.5,868.1 2355.0,867.0 2356.5,878.7 2358.0,876.1 2359.5,874.1 2361.0,874.4 2362.5,869.9 2364.0,867.0 2365.5,870.9 2367.0,870.9 2368.5,864.9 2370.0,862.9 2371.5,869.3 2373.0,875.6 2374.5,861.2 2376.0,860.3 2377.5,866.8 2379.0,871.4 2380.5,869.2 2382.0,862.8 2383.5,876.4 2385.0,884.1 2386.5,874.7 2388.0,866.1 2389.5,882.5 2391.0,884.7 2392.5,874.8 2394.0,872.1 2395.5,873.9 2397.0,866.6 2398.5,862.5 2400.0,865.0 2401.5,865.6 2403.0,862.0 2404.5,869.3 2406.0,872.4 2407.5,860.4 2409.0,861.1 2410.5,863.5 2412.0,864.0 2413.5,871.8 2415.0,871.3 2416.5,869.5 2418.0,872.3 2419.5,867.2 2421.0,870.5 2422.5,870.3 2424.0,869.1 2425.5,869.7 2427.0,876.2 2428.5,872.9 2430.0,867.6 2431.5,867.0 2433.0,875.1 2434.5,873.5 2436.0,867.5 2437.5,869.7 2439.0,868.5 2440.5,869.3 2442.0,871.6 2443.5,872.8 2445.0,867.3 2446.5,863.9 2448.0,871.8 2449.5,877.8 2451.0,869.3 2452.5,871.1 2454.0,875.9 2455.5,875.2 2457.0,876.8 2458.5,875.2 2460.0,874.1 2461.5,873.8 2463.0,871.7 2464.5,874.5 2466.0,871.4 2467.5,865.5 2469.0,867.9 2470.5,865.9 2472.0,865.6 2473.5,864.2 2475.0,869.7 2476.5,876.6 2478.0,870.6 2479.5,864.5 2481.0,864.9 2482.5,865.2 2484.0,864.6 2485.5,867.2 2487.0,873.8 2488.5,867.1 2490.0,862.6 2491.5,869.1 2493.0,868.9 2494.5,869.3 2496.0,873.8 2497.5,870.9 2499.0,872.7 2500.5,880.1 2502.0,876.4 2503.5,872.3 2505.0,872.9 2506.5,880.1 2508.0,877.9 2509.5,877.5 2511.0,876.8 2512.5,876.7 2514.0,869.5 2515.5,860.2 2517.0,861.3 2518.5,870.5 2520.0,867.8 2521.5,863.0 2523.0,861.4 2524.5,871.9 2526.0,872.2 2527.5,866.0 2529.0,871.0 2530.5,879.6 2532.0,877.1 2533.5,876.3 2535.0,872.8 2536.5,871.1 2538.0,873.3 2539.5,871.4 2541.0,878.1 2542.5,882.6 2544.0,882.3 2545.5,880.6 2547.0,880.9 2548.5,888.3 2550.0,888.1 2551.5,886.1 2553.0,886.6 2554.5,888.8 2556.0,887.3 2557.5,883.5 2559.0,878.2 2560.5,877.9 2562.0,877.6 2563.5,874.9 2565.0,876.6 2566.5,879.0 2568.0,878.1 2569.5,875.8" fill="none" stroke="#f0b92f" stroke-width="2" stroke-linejoin="round"/>
<path d="M432.0,979.4 433.5,976.8 435.0,985.8 436.5,984.0 438.0,979.6 439.5,981.0 441.0,986.7 442.5,993.4 444.0,986.6 445.5,982.9 447.0,984.0 448.5,983.6 450.0,978.7 451.5,979.1 453.0,978.1 454.5,980.8 456.0,981.2 457.5,987.0 459.0,988.8 460.5,992.0 462.0,986.6 463.5,987.0 465.0,982.8 466.5,978.9 468.0,983.9 469.5,991.1 471.0,992.6 472.5,988.8 474.0,989.0 475.5,989.5 477.0,989.0 478.5,982.3 480.0,981.6 481.5,979.7 483.0,979.4 484.5,979.9 486.0,977.7 487.5,978.1 489.0,976.1 490.5,978.1 492.0,973.3 493.5,975.3 495.0,974.5 496.5,971.2 498.0,974.9 499.5,982.7 501.0,983.7 502.5,985.6 504.0,987.7 505.5,983.7 507.0,983.6 508.5,983.5 510.0,977.6 511.5,973.3 513.0,978.8 514.5,987.2 516.0,978.7 517.5,978.8 519.0,974.1 520.5,974.9 522.0,976.4 523.5,978.4 525.0,972.2 526.5,974.0 528.0,980.7 529.5,970.8 531.0,969.4 532.5,974.7 534.0,967.1 535.5,967.4 537.0,969.8 538.5,988.5 540.0,990.0 541.5,990.2 543.0,990.8 544.5,979.6 546.0,984.2 547.5,983.0 549.0,968.8 550.5,953.7 552.0,952.2 553.5,942.8 555.0,933.8 556.5,943.1 558.0,959.8 559.5,957.6 561.0,948.2 562.5,957.5 564.0,957.7 565.5,951.4 567.0,960.6 568.5,966.1 570.0,970.1 571.5,973.0 573.0,980.8 574.5,984.5 576.0,980.6 577.5,981.2 579.0,980.2 580.5,974.5 582.0,976.1 583.5,972.1 585.0,964.0 586.5,976.5 588.0,985.5 589.5,985.4 591.0,977.6 592.5,982.8 594.0,974.4 595.5,982.8 597.0,987.2 598.5,986.2 600.0,993.3 601.5,999.7 603.0,994.7 604.5,991.1 606.0,990.3 607.5,988.2 609.0,982.1 610.5,987.2 612.0,991.0 613.5,987.1 615.0,986.3 616.5,983.2 618.0,977.0 619.5,978.2 621.0,984.5 622.5,984.9 624.0,987.3 625.5,992.0 627.0,985.5 628.5,977.4 630.0,976.9 631.5,976.7 633.0,978.9 634.5,979.2 636.0,978.1 637.5,975.8 639.0,981.0 640.5,989.7 642.0,990.1 643.5,986.8 645.0,983.5 646.5,979.2 648.0,972.5 649.5,972.4 651.0,976.0 652.5,984.1 654.0,983.3 655.5,980.2 657.0,984.9 658.5,985.4 660.0,981.1 661.5,979.3 663.0,977.1 664.5,974.7 666.0,980.0 667.5,981.9 669.0,980.9 670.5,984.5 672.0,990.7 673.5,993.0 675.0,982.8 676.5,977.7 678.0,977.2 679.5,968.9 681.0,959.9 682.5,967.1 684.0,970.5 685.5,967.6 687.0,975.9 688.5,978.6 690.0,982.5 691.5,987.9 693.0,993.4 694.5,983.6 696.0,977.8 697.5,979.7 699.0,985.9 700.5,973.0 702.0,972.6 703.5,973.2 705.0,974.0 706.5,973.7 708.0,974.9 709.5,974.3 711.0,976.9 712.5,981.4 714.0,978.3 715.5,975.9 717.0,979.2 718.5,983.3 720.0,982.2 721.5,978.4 723.0,976.3 724.5,978.7 726.0,974.4 727.5,972.0 729.0,971.4 730.5,971.3 732.0,977.5 733.5,977.9 735.0,975.4 736.5,971.5 738.0,973.5 739.5,967.8 741.0,962.9 742.5,963.1 744.0,966.0 745.5,973.3 747.0,971.6 748.5,975.0 750.0,979.9 751.5,984.0 753.0,977.1 754.5,971.8 756.0,972.2 757.5,975.3 759.0,967.8 760.5,970.7 762.0,973.6 763.5,969.6 765.0,971.2 766.5,975.6 768.0,971.0 769.5,966.8 771.0,967.3 772.5,972.5 774.0,973.1 775.5,966.7 777.0,960.8 778.5,958.7 780.0,965.8 781.5,971.9 783.0,963.2 784.5,955.2 786.0,955.9 787.5,960.5 789.0,950.5 790.5,946.2 792.0,947.3 793.5,951.2 795.0,955.2 796.5,952.5 798.0,959.7 799.5,968.1 801.0,961.8 802.5,959.9 804.0,969.2 805.5,979.0 807.0,972.9 808.5,970.9 810.0,973.8 811.5,980.2 813.0,986.0 814.5,988.6 816.0,987.8 817.5,991.7 819.0,989.7 820.5,988.7 822.0,984.7 823.5,981.9 825.0,982.0 826.5,972.8 828.0,965.1 829.5,972.1 831.0,972.5 832.5,977.9 834.0,977.6 835.5,962.0 837.0,942.3 838.5,943.4 840.0,947.4 841.5,952.9 843.0,956.1 844.5,949.1 846.0,945.6 847.5,943.0 849.0,953.3 850.5,952.1 852.0,951.6 853.5,947.4 855.0,949.0 856.5,941.9 858.0,937.3 859.5,953.7 861.0,951.4 862.5,948.2 864.0,948.4 865.5,960.1 867.0,954.0 868.5,954.0 870.0,961.2 871.5,971.6 873.0,975.7 874.5,971.7 876.0,972.9 877.5,966.4 879.0,963.7 880.5,963.5 882.0,968.3 883.5,978.1 885.0,978.9 886.5,980.0 888.0,980.2 889.5,981.3 891.0,977.1 892.5,968.2 894.0,967.0 895.5,976.1 897.0,975.5 898.5,975.3 900.0,977.4 901.5,978.5 903.0,972.5 904.5,965.5 906.0,963.6 907.5,961.4 909.0,964.8 910.5,969.3 912.0,971.5 913.5,970.5 915.0,967.1 916.5,967.9 918.0,962.2 919.5,965.0 921.0,966.9 922.5,968.3 924.0,968.4 925.5,970.5 927.0,974.7 928.5,973.4 930.0,964.1 931.5,956.1 933.0,955.2 934.5,965.7 936.0,960.6 937.5,952.1 939.0,952.7 940.5,960.8 942.0,963.9 943.5,963.1 945.0,975.5 946.5,976.6 948.0,973.5 949.5,972.2 951.0,968.1 952.5,970.5 954.0,971.2 955.5,975.1 957.0,966.0 958.5,968.1 960.0,974.6 961.5,968.2 963.0,962.1 964.5,970.2 966.0,976.1 967.5,976.0 969.0,975.9 970.5,969.5 972.0,966.4 973.5,964.5 975.0,963.2 976.5,962.6 978.0,959.9 979.5,969.8 981.0,968.7 982.5,968.3 984.0,971.2 985.5,972.6 987.0,964.5 988.5,960.1 990.0,968.3 991.5,964.0 993.0,964.8 994.5,960.6 996.0,957.1 997.5,961.1 999.0,961.6 1000.5,969.4 1002.0,977.5 1003.5,978.7 1005.0,977.4 1006.5,978.2 1008.0,980.5 1009.5,979.4 1011.0,980.7 1012.5,977.7 1014.0,973.7 1015.5,973.6 1017.0,972.8 1018.5,968.8 1020.0,976.6 1021.5,977.0 1023.0,977.6 1024.5,980.1 1026.0,987.0 1027.5,987.7 1029.0,988.9 1030.5,988.9 1032.0,986.0 1033.5,983.9 1035.0,983.5 1036.5,986.1 1038.0,984.5 1039.5,977.4 1041.0,979.1 1042.5,980.4 1044.0,979.9 1045.5,982.4 1047.0,991.8 1048.5,987.1 1050.0,980.0 1051.5,981.9 1053.0,981.5 1054.5,971.9 1056.0,975.2 1057.5,976.4 1059.0,975.7 1060.5,972.4 1062.0,975.3 1063.5,967.5 1065.0,974.4 1066.5,981.7 1068.0,973.0 1069.5,967.4 1071.0,974.7 1072.5,980.0 1074.0,978.0 1075.5,979.4 1077.0,984.1 1078.5,983.2 1080.0,978.5 1081.5,981.7 1083.0,990.2 1084.5,992.4 1086.0,986.9 1087.5,993.4 1089.0,988.8 1090.5,986.2 1092.0,984.2 1093.5,978.5 1095.0,979.7 1096.5,984.9 1098.0,986.5 1099.5,982.9 1101.0,976.2 1102.5,979.3 1104.0,983.0 1105.5,981.2 1107.0,979.8 1108.5,979.2 1110.0,988.2 1111.5,986.3 1113.0,984.1 1114.5,979.6 1116.0,983.8 1117.5,987.5 1119.0,983.8 1120.5,979.1 1122.0,981.4 1123.5,986.3 1125.0,987.0 1126.5,980.4 1128.0,985.4 1129.5,986.4 1131.0,984.5 1132.5,978.0 1134.0,980.7 1135.5,981.7 1137.0,986.7 1138.5,986.0 1140.0,988.9 1141.5,984.3 1143.0,990.0 1144.5,985.2 1146.0,978.3 1147.5,984.0 1149.0,981.1 1150.5,984.3 1152.0,984.5 1153.5,981.8 1155.0,979.7 1156.5,981.7 1158.0,980.5 1159.5,980.0 1161.0,983.1 1162.5,985.8 1164.0,986.6 1165.5,984.6 1167.0,984.1 1168.5,973.3 1170.0,976.4 1171.5,981.1 1173.0,989.8 1174.5,988.6 1176.0,992.8 1177.5,993.7 1179.0,995.5 1180.5,996.3 1182.0,993.3 1183.5,988.9 1185.0,990.9 1186.5,990.8 1188.0,984.8 1189.5,975.7 1191.0,978.3 1192.5,981.9 1194.0,984.0 1195.5,990.6 1197.0,992.9 1198.5,991.4 1200.0,992.9 1201.5,986.1 1203.0,980.4 1204.5,978.4 1206.0,987.3 1207.5,983.6 1209.0,986.1 1210.5,988.3 1212.0,993.5 1213.5,986.3 1215.0,981.2 1216.5,989.9 1218.0,990.4 1219.5,990.2 1221.0,994.8 1222.5,992.6 1224.0,988.9 1225.5,993.9 1227.0,991.5 1228.5,988.4 1230.0,986.3 1231.5,987.1 1233.0,988.5 1234.5,990.5 1236.0,996.2 1237.5,1001.0 1239.0,997.1 1240.5,987.6 1242.0,987.8 1243.5,995.7 1245.0,993.8 1246.5,991.6 1248.0,997.8 1249.5,994.7 1251.0,989.1 1252.5,988.3 1254.0,987.2 1255.5,983.1 1257.0,985.4 1258.5,987.1 1260.0,987.0 1261.5,986.0 1263.0,992.0 1264.5,994.1 1266.0,992.3 1267.5,990.5 1269.0,986.5 1270.5,992.1 1272.0,990.8 1273.5,989.0 1275.0,983.8 1276.5,989.4 1278.0,992.5 1279.5,986.8 1281.0,987.0 1282.5,995.2 1284.0,988.9 1285.5,989.9 1287.0,994.4 1288.5,993.0 1290.0,988.8 1291.5,985.4 1293.0,985.5 1294.5,974.1 1296.0,973.1 1297.5,976.2 1299.0,973.6 1300.5,976.1 1302.0,985.1 1303.5,982.7 1305.0,980.8 1306.5,984.9 1308.0,985.1 1309.5,975.0 1311.0,980.4 1312.5,987.4 1314.0,983.8 1315.5,980.3 1317.0,981.6 1318.5,992.8 1320.0,985.0 1321.5,981.7 1323.0,988.4 1324.5,992.1 1326.0,986.6 1327.5,986.4 1329.0,988.7 1330.5,990.1 1332.0,986.1 1333.5,985.5 1335.0,984.2 1336.5,979.3 1338.0,982.8 1339.5,984.0 1341.0,984.4 1342.5,986.3 1344.0,987.7 1345.5,982.7 1347.0,977.2 1348.5,981.2 1350.0,982.4 1351.5,987.0 1353.0,981.1 1354.5,982.0 1356.0,985.7 1357.5,988.7 1359.0,984.5 1360.5,980.3 1362.0,978.9 1363.5,971.8 1365.0,973.8 1366.5,979.5 1368.0,977.3 1369.5,974.5 1371.0,972.7 1372.5,975.4 1374.0,972.8 1375.5,969.9 1377.0,974.2 1378.5,969.0 1380.0,963.7 1381.5,967.1 1383.0,971.6 1384.5,966.6 1386.0,962.5 1387.5,969.1 1389.0,977.0 1390.5,975.5 1392.0,971.2 1393.5,973.4 1395.0,979.5 1396.5,977.4 1398.0,975.8 1399.5,977.3 1401.0,977.9 1402.5,980.3 1404.0,977.1 1405.5,979.9 1407.0,979.1 1408.5,978.0 1410.0,976.8 1411.5,971.0 1413.0,971.9 1414.5,967.0 1416.0,964.9 1417.5,968.7 1419.0,966.8 1420.5,969.0 1422.0,972.7 1423.5,981.9 1425.0,983.1 1426.5,976.9 1428.0,975.4 1429.5,967.6 1431.0,971.5 1432.5,974.4 1434.0,975.1 1435.5,975.4 1437.0,976.0 1438.5,972.8 1440.0,971.2 1441.5,976.6 1443.0,980.5 1444.5,977.2 1446.0,975.0 1447.5,983.5 1449.0,979.8 1450.5,975.0 1452.0,982.5 1453.5,982.1 1455.0,976.0 1456.5,968.9 1458.0,965.1 1459.5,965.7 1461.0,966.0 1462.5,959.6 1464.0,959.4 1465.5,959.0 1467.0,959.9 1468.5,962.4 1470.0,963.7 1471.5,966.3 1473.0,958.3 1474.5,961.4 1476.0,965.9 1477.5,965.5 1479.0,970.5 1480.5,977.5 1482.0,971.0 1483.5,968.5 1485.0,963.0 1486.5,965.8 1488.0,968.9 1489.5,973.1 1491.0,975.7 1492.5,979.4 1494.0,978.4 1495.5,973.5 1497.0,969.9 1498.5,976.3 1500.0,977.7 1501.5,969.9 1503.0,969.1 1504.5,972.2 1506.0,965.2 1507.5,962.9 1509.0,966.6 1510.5,967.2 1512.0,966.2 1513.5,968.6 1515.0,986.0 1516.5,993.8 1518.0,990.3 1519.5,988.6 1521.0,989.4 1522.5,984.6 1524.0,977.8 1525.5,973.4 1527.0,970.5 1528.5,959.4 1530.0,955.4 1531.5,964.5 1533.0,962.9 1534.5,967.8 1536.0,985.2 1537.5,982.7 1539.0,972.4 1540.5,971.3 1542.0,978.9 1543.5,978.4 1545.0,968.3 1546.5,964.1 1548.0,958.9 1549.5,963.3 1551.0,968.7 1552.5,967.0 1554.0,967.7 1555.5,969.5 1557.0,973.8 1558.5,974.8 1560.0,978.0 1561.5,971.3 1563.0,963.2 1564.5,977.6 1566.0,986.3 1567.5,975.3 1569.0,971.7 1570.5,978.1 1572.0,977.2 1573.5,971.9 1575.0,971.6 1576.5,971.7 1578.0,971.9 1579.5,981.4 1581.0,981.5 1582.5,982.0 1584.0,977.5 1585.5,974.4 1587.0,973.1 1588.5,965.4 1590.0,964.9 1591.5,971.4 1593.0,969.2 1594.5,966.1 1596.0,969.2 1597.5,971.9 1599.0,976.0 1600.5,978.6 1602.0,983.5 1603.5,974.6 1605.0,960.0 1606.5,963.5 1608.0,973.4 1609.5,980.2 1611.0,973.2 1612.5,969.1 1614.0,971.0 1615.5,968.8 1617.0,970.2 1618.5,980.6 1620.0,978.4 1621.5,980.3 1623.0,975.0 1624.5,985.2 1626.0,990.9 1627.5,972.6 1629.0,976.1 1630.5,967.9 1632.0,973.5 1633.5,971.4 1635.0,972.6 1636.5,973.0 1638.0,966.0 1639.5,965.9 1641.0,976.1 1642.5,976.0 1644.0,965.6 1645.5,955.7 1647.0,961.9 1648.5,958.2 1650.0,959.6 1651.5,959.1 1653.0,966.3 1654.5,963.1 1656.0,964.6 1657.5,960.6 1659.0,956.3 1660.5,961.4 1662.0,970.8 1663.5,976.5 1665.0,969.8 1666.5,953.1 1668.0,953.7 1669.5,975.6 1671.0,994.5 1672.5,1016.3 1674.0,1019.0 1675.5,1009.9 1677.0,987.6 1678.5,992.6 1680.0,992.2 1681.5,995.6 1683.0,982.6 1684.5,976.5 1686.0,965.9 1687.5,971.1 1689.0,967.4 1690.5,965.1 1692.0,965.7 1693.5,985.3 1695.0,979.2 1696.5,971.9 1698.0,995.3 1699.5,1010.8 1701.0,986.2 1702.5,980.9 1704.0,995.6 1705.5,997.1 1707.0,992.5 1708.5,995.3 1710.0,1001.2 1711.5,989.1 1713.0,982.5 1714.5,977.3 1716.0,966.4 1717.5,975.5 1719.0,974.2 1720.5,971.9 1722.0,979.0 1723.5,982.7 1725.0,973.3 1726.5,985.9 1728.0,1003.3 1729.5,991.2 1731.0,983.2 1732.5,993.5 1734.0,992.7 1735.5,985.0 1737.0,990.2 1738.5,1008.7 1740.0,984.8 1741.5,976.7 1743.0,981.8 1744.5,986.7 1746.0,992.7 1747.5,988.4 1749.0,971.2 1750.5,971.4 1752.0,965.3 1753.5,981.6 1755.0,986.7 1756.5,997.3 1758.0,1000.1 1759.5,1006.1 1761.0,1019.8 1762.5,1020.0 1764.0,1022.8 1765.5,1022.4 1767.0,999.7 1768.5,1000.7 1770.0,1002.7 1771.5,978.1 1773.0,967.7 1774.5,992.2 1776.0,983.8 1777.5,950.9 1779.0,946.8 1780.5,961.4 1782.0,944.3 1783.5,938.5 1785.0,957.9 1786.5,954.3 1788.0,951.1 1789.5,964.2 1791.0,964.4 1792.5,954.7 1794.0,1007.6 1795.5,1006.2 1797.0,967.4 1798.5,956.6 1800.0,980.0 1801.5,959.4 1803.0,937.8 1804.5,972.3 1806.0,995.4 1807.5,973.5 1809.0,982.6 1810.5,1015.0 1812.0,995.3 1813.5,969.3 1815.0,967.3 1816.5,961.4 1818.0,953.1 1819.5,964.9 1821.0,970.0 1822.5,974.2 1824.0,965.8 1825.5,964.2 1827.0,978.7 1828.5,1001.1 1830.0,1008.0 1831.5,987.5 1833.0,973.2 1834.5,979.5 1836.0,973.4 1837.5,990.1 1839.0,1026.7 1840.5,1027.8 1842.0,1011.0 1843.5,994.8 1845.0,1005.5 1846.5,1001.1 1848.0,994.0 1849.5,980.9 1851.0,985.9 1852.5,975.7 1854.0,958.8 1855.5,961.0 1857.0,988.0 1858.5,990.6 1860.0,984.6 1861.5,1007.0 1863.0,1008.1 1864.5,961.9 1866.0,952.6 1867.5,961.0 1869.0,975.5 1870.5,977.6 1872.0,968.4 1873.5,954.5 1875.0,952.3 1876.5,965.2 1878.0,984.1 1879.5,996.7 1881.0,985.9 1882.5,981.5 1884.0,987.4 1885.5,969.8 1887.0,964.0 1888.5,979.1 1890.0,996.5 1891.5,994.6 1893.0,977.8 1894.5,979.3 1896.0,990.6 1897.5,978.8 1899.0,975.8 1900.5,977.0 1902.0,984.6 1903.5,985.5 1905.0,998.7 1906.5,990.9 1908.0,986.2 1909.5,989.6 1911.0,993.2 1912.5,983.5 1914.0,977.0 1915.5,990.6 1917.0,1004.6 1918.5,997.3 1920.0,985.1 1921.5,983.8 1923.0,981.6 1924.5,968.1 1926.0,970.0 1927.5,978.6 1929.0,985.1 1930.5,986.8 1932.0,988.3 1933.5,980.7 1935.0,980.9 1936.5,980.9 1938.0,970.8 1939.5,962.4 1941.0,973.5 1942.5,977.6 1944.0,977.7 1945.5,974.2 1947.0,978.0 1948.5,969.9 1950.0,959.9 1951.5,967.4 1953.0,979.8 1954.5,968.3 1956.0,966.6 1957.5,983.1 1959.0,989.5 1960.5,970.5 1962.0,958.5 1963.5,976.7 1965.0,972.3 1966.5,958.9 1968.0,959.6 1969.5,970.7 1971.0,960.7 1972.5,954.6 1974.0,972.5 1975.5,980.4 1977.0,972.8 1978.5,968.1 1980.0,971.2 1981.5,973.1 1983.0,967.1 1984.5,967.5 1986.0,978.2 1987.5,976.7 1989.0,976.7 1990.5,986.3 1992.0,981.1 1993.5,974.4 1995.0,974.2 1996.5,978.7 1998.0,982.2 1999.5,990.4 2001.0,978.2 2002.5,976.2 2004.0,978.0 2005.5,973.2 2007.0,965.6 2008.5,962.0 2010.0,965.9 2011.5,973.5 2013.0,972.2 2014.5,970.0 2016.0,974.2 2017.5,986.6 2019.0,990.8 2020.5,986.1 2022.0,991.0 2023.5,1000.0 2025.0,998.9 2026.5,994.2 2028.0,987.9 2029.5,981.5 2031.0,969.3 2032.5,967.6 2034.0,967.2 2035.5,960.7 2037.0,965.9 2038.5,974.9 2040.0,965.3 2041.5,957.5 2043.0,967.4 2044.5,968.6 2046.0,954.5 2047.5,956.2 2049.0,962.5 2050.5,968.3 2052.0,970.9 2053.5,973.3 2055.0,972.6 2056.5,968.0 2058.0,970.4 2059.5,972.1 2061.0,962.3 2062.5,959.0 2064.0,962.8 2065.5,969.0 2067.0,967.4 2068.5,960.1 2070.0,962.4 2071.5,967.8 2073.0,962.1 2074.5,953.6 2076.0,955.4 2077.5,969.7 2079.0,971.8 2080.5,967.8 2082.0,970.1 2083.5,969.2 2085.0,974.2 2086.5,972.0 2088.0,966.8 2089.5,962.1 2091.0,965.1 2092.5,969.9 2094.0,967.0 2095.5,957.3 2097.0,966.8 2098.5,976.5 2100.0,970.2 2101.5,966.4 2103.0,972.4 2104.5,983.3 2106.0,978.1 2107.5,969.4 2109.0,983.3 2110.5,987.0 2112.0,973.9 2113.5,962.0 2115.0,965.0 2116.5,960.1 2118.0,960.9 2119.5,962.3 2121.0,963.0 2122.5,961.5 2124.0,972.4 2125.5,974.8 2127.0,973.6 2128.5,970.0 2130.0,969.6 2131.5,962.2 2133.0,963.2 2134.5,971.3 2136.0,961.6 2137.5,956.6 2139.0,968.2 2140.5,972.2 2142.0,955.3 2143.5,965.6 2145.0,977.5 2146.5,974.3 2148.0,966.6 2149.5,966.4 2151.0,969.5 2152.5,963.7 2154.0,961.5 2155.5,959.0 2157.0,958.1 2158.5,969.9 2160.0,974.8 2161.5,969.2 2163.0,968.8 2164.5,979.1 2166.0,974.6 2167.5,951.9 2169.0,952.7 2170.5,957.7 2172.0,953.6 2173.5,950.6 2175.0,951.6 2176.5,947.2 2178.0,953.4 2179.5,962.0 2181.0,957.2 2182.5,948.5 2184.0,954.7 2185.5,961.3 2187.0,954.2 2188.5,946.3 2190.0,951.8 2191.5,951.7 2193.0,957.2 2194.5,954.5 2196.0,951.4 2197.5,944.1 2199.0,954.6 2200.5,961.4 2202.0,954.4 2203.5,953.9 2205.0,968.4 2206.5,967.8 2208.0,956.5 2209.5,963.3 2211.0,980.2 2212.5,979.7 2214.0,969.3 2215.5,968.9 2217.0,968.0 2218.5,956.9 2220.0,956.3 2221.5,969.9 2223.0,977.9 2224.5,975.8 2226.0,981.5 2227.5,981.7 2229.0,978.9 2230.5,977.5 2232.0,977.4 2233.5,976.2 2235.0,967.2 2236.5,966.4 2238.0,972.4 2239.5,975.7 2241.0,966.2 2242.5,957.0 2244.0,958.7 2245.5,958.1 2247.0,952.7 2248.5,954.2 2250.0,963.4 2251.5,963.6 2253.0,963.1 2254.5,963.4 2256.0,965.4 2257.5,964.6 2259.0,959.1 2260.5,963.7 2262.0,958.8 2263.5,960.0 2265.0,960.9 2266.5,961.5 2268.0,963.4 2269.5,963.4 2271.0,969.3 2272.5,972.9 2274.0,976.2 2275.5,968.7 2277.0,962.2 2278.5,969.1 2280.0,968.8 2281.5,963.3 2283.0,965.1 2284.5,981.2 2286.0,967.0 2287.5,954.2 2289.0,960.6 2290.5,956.0 2292.0,948.8 2293.5,956.0 2295.0,964.0 2296.5,951.3 2298.0,955.4 2299.5,968.5 2301.0,968.9 2302.5,958.5 2304.0,957.4 2305.5,963.8 2307.0,963.7 2308.5,960.7 2310.0,954.9 2311.5,954.5 2313.0,961.5 2314.5,961.5 2316.0,952.0 2317.5,959.6 2319.0,969.7 2320.5,959.6 2322.0,947.1 2323.5,955.0 2325.0,958.6 2326.5,944.2 2328.0,940.9 2329.5,947.7 2331.0,945.9 2332.5,944.8 2334.0,947.4 2335.5,952.1 2337.0,949.5 2338.5,952.1 2340.0,962.8 2341.5,955.8 2343.0,947.5 2344.5,950.9 2346.0,957.9 2347.5,948.9 2349.0,944.3 2350.5,949.1 2352.0,957.3 2353.5,948.1 2355.0,949.7 2356.5,957.6 2358.0,965.5 2359.5,958.8 2361.0,956.5 2362.5,959.4 2364.0,961.8 2365.5,960.1 2367.0,955.9 2368.5,953.8 2370.0,951.1 2371.5,960.7 2373.0,962.8 2374.5,955.0 2376.0,943.8 2377.5,955.7 2379.0,965.3 2380.5,964.2 2382.0,956.6 2383.5,972.4 2385.0,978.9 2386.5,972.0 2388.0,965.3 2389.5,974.8 2391.0,970.4 2392.5,967.6 2394.0,968.0 2395.5,963.0 2397.0,958.6 2398.5,960.8 2400.0,963.3 2401.5,957.3 2403.0,953.7 2404.5,960.8 2406.0,962.9 2407.5,952.9 2409.0,949.6 2410.5,955.4 2412.0,960.6 2413.5,958.4 2415.0,954.0 2416.5,954.1 2418.0,959.6 2419.5,961.0 2421.0,958.2 2422.5,952.0 2424.0,962.7 2425.5,966.5 2427.0,959.0 2428.5,954.3 2430.0,957.5 2431.5,964.4 2433.0,962.8 2434.5,960.1 2436.0,965.4 2437.5,966.3 2439.0,961.0 2440.5,956.8 2442.0,960.0 2443.5,968.3 2445.0,959.1 2446.5,956.1 2448.0,964.3 2449.5,971.7 2451.0,961.0 2452.5,959.6 2454.0,969.1 2455.5,969.3 2457.0,963.4 2458.5,963.9 2460.0,962.2 2461.5,960.0 2463.0,958.3 2464.5,961.0 2466.0,961.4 2467.5,962.8 2469.0,955.4 2470.5,958.1 2472.0,960.3 2473.5,955.9 2475.0,957.2 2476.5,963.5 2478.0,958.0 2479.5,947.6 2481.0,954.7 2482.5,949.4 2484.0,947.9 2485.5,953.9 2487.0,952.1 2488.5,951.3 2490.0,955.2 2491.5,959.5 2493.0,955.1 2494.5,959.3 2496.0,964.9 2497.5,967.0 2499.0,966.2 2500.5,973.1 2502.0,971.9 2503.5,964.5 2505.0,959.8 2506.5,967.4 2508.0,964.7 2509.5,961.6 2511.0,967.9 2512.5,962.8 2514.0,955.5 2515.5,948.0 2517.0,949.1 2518.5,957.4 2520.0,959.3 2521.5,954.8 2523.0,952.3 2524.5,961.4 2526.0,953.9 2527.5,951.4 2529.0,955.5 2530.5,963.1 2532.0,960.8 2533.5,956.6 2535.0,952.6 2536.5,955.8 2538.0,958.0 2539.5,963.8 2541.0,963.3 2542.5,965.7 2544.0,974.2 2545.5,976.0 2547.0,970.0 2548.5,972.0 2550.0,976.8 2551.5,981.5 2553.0,977.6 2554.5,980.8 2556.0,982.4 2557.5,982.4 2559.0,975.1 2560.5,968.5 2562.0,972.7 2563.5,975.7 2565.0,971.4 2566.5,969.6 2568.0,972.3 2569.5,972.1" fill="none" stroke="#e8952f" stroke-width="2" stroke-linejoin="round"/>
<path d="M432.0,1072.9 433.5,1075.0 435.0,1076.4 436.5,1079.1 438.0,1077.1 439.5,1082.3 441.0,1086.0 442.5,1082.7 444.0,1080.4 445.5,1073.7 447.0,1081.7 448.5,1078.4 450.0,1074.2 451.5,1074.5 453.0,1074.6 454.5,1079.7 456.0,1083.3 457.5,1086.6 459.0,1085.1 460.5,1075.8 462.0,1071.9 463.5,1076.3 465.0,1067.8 466.5,1068.6 468.0,1075.5 469.5,1075.9 471.0,1079.9 472.5,1075.1 474.0,1074.3 475.5,1077.4 477.0,1074.3 478.5,1068.8 480.0,1070.0 481.5,1067.8 483.0,1065.8 484.5,1064.5 486.0,1056.5 487.5,1059.1 489.0,1067.7 490.5,1070.7 492.0,1065.6 493.5,1059.2 495.0,1060.2 496.5,1061.6 498.0,1059.3 499.5,1061.4 501.0,1072.4 502.5,1074.3 504.0,1078.9 505.5,1073.3 507.0,1072.6 508.5,1077.4 510.0,1074.1 511.5,1066.8 513.0,1063.4 514.5,1074.5 516.0,1071.0 517.5,1061.3 519.0,1063.4 520.5,1069.4 522.0,1069.4 523.5,1060.8 525.0,1056.4 526.5,1062.3 528.0,1066.7 529.5,1059.7 531.0,1061.7 532.5,1063.3 534.0,1060.6 535.5,1064.5 537.0,1072.0 538.5,1077.2 540.0,1086.1 541.5,1094.6 543.0,1088.6 544.5,1075.0 546.0,1075.2 547.5,1067.4 549.0,1060.0 550.5,1052.5 552.0,1045.4 553.5,1038.1 555.0,1023.5 556.5,1040.0 558.0,1049.2 559.5,1053.8 561.0,1054.1 562.5,1058.8 564.0,1061.5 565.5,1051.9 567.0,1059.8 568.5,1064.9 570.0,1068.0 571.5,1072.3 573.0,1081.9 574.5,1080.5 576.0,1078.6 577.5,1082.8 579.0,1078.5 580.5,1074.5 582.0,1072.3 583.5,1072.8 585.0,1073.0 586.5,1078.0 588.0,1080.0 589.5,1081.4 591.0,1078.7 592.5,1076.0 594.0,1073.1 595.5,1072.2 597.0,1075.5 598.5,1082.7 600.0,1087.9 601.5,1088.9 603.0,1089.3 604.5,1082.7 606.0,1082.0 607.5,1062.1 609.0,1062.6 610.5,1068.9 612.0,1069.2 613.5,1065.2 615.0,1066.0 616.5,1061.2 618.0,1054.3 619.5,1058.2 621.0,1064.2 622.5,1067.6 624.0,1068.9 625.5,1073.9 627.0,1071.0 628.5,1064.5 630.0,1066.8 631.5,1065.3 633.0,1060.5 634.5,1060.5 636.0,1065.1 637.5,1071.3 639.0,1080.0 640.5,1084.1 642.0,1084.8 643.5,1076.7 645.0,1067.5 646.5,1073.4 648.0,1066.4 649.5,1069.6 651.0,1069.7 652.5,1074.2 654.0,1077.9 655.5,1077.1 657.0,1075.9 658.5,1077.4 660.0,1080.6 661.5,1077.8 663.0,1074.4 664.5,1068.9 666.0,1070.5 667.5,1073.1 669.0,1071.8 670.5,1074.2 672.0,1087.9 673.5,1088.8 675.0,1079.9 676.5,1073.7 678.0,1074.0 679.5,1067.6 681.0,1057.0 682.5,1058.6 684.0,1065.3 685.5,1062.2 687.0,1066.1 688.5,1076.3 690.0,1076.7 691.5,1078.0 693.0,1081.6 694.5,1074.9 696.0,1068.4 697.5,1066.6 699.0,1069.2 700.5,1058.5 702.0,1055.3 703.5,1058.4 705.0,1057.1 706.5,1053.9 708.0,1057.5 709.5,1061.1 711.0,1064.6 712.5,1068.5 714.0,1066.8 715.5,1065.2 717.0,1066.0 718.5,1074.0 720.0,1071.7 721.5,1071.0 723.0,1071.6 724.5,1070.5 726.0,1064.9 727.5,1060.6 729.0,1064.3 730.5,1061.8 732.0,1063.3 733.5,1069.0 735.0,1061.9 736.5,1063.8 738.0,1062.2 739.5,1063.4 741.0,1055.3 742.5,1063.1 744.0,1063.7 745.5,1062.4 747.0,1063.3 748.5,1068.9 750.0,1070.0 751.5,1072.8 753.0,1072.5 754.5,1068.1 756.0,1064.5 757.5,1067.6 759.0,1069.2 760.5,1071.5 762.0,1067.2 763.5,1065.4 765.0,1070.5 766.5,1069.3 768.0,1068.2 769.5,1066.6 771.0,1063.9 772.5,1066.8 774.0,1064.4 775.5,1056.3 777.0,1054.0 778.5,1051.0 780.0,1056.3 781.5,1064.9 783.0,1065.8 784.5,1056.5 786.0,1051.8 787.5,1052.5 789.0,1042.0 790.5,1039.4 792.0,1041.9 793.5,1045.7 795.0,1051.8 796.5,1053.4 798.0,1059.9 799.5,1063.2 801.0,1056.3 802.5,1055.8 804.0,1067.8 805.5,1070.2 807.0,1070.5 808.5,1068.9 810.0,1074.7 811.5,1076.6 813.0,1078.7 814.5,1079.2 816.0,1081.1 817.5,1087.5 819.0,1089.1 820.5,1084.5 822.0,1082.4 823.5,1074.6 825.0,1069.8 826.5,1061.4 828.0,1053.9 829.5,1060.4 831.0,1065.0 832.5,1071.0 834.0,1063.9 835.5,1048.6 837.0,1037.0 838.5,1041.1 840.0,1042.7 841.5,1049.8 843.0,1051.0 844.5,1042.7 846.0,1032.1 847.5,1034.2 849.0,1035.3 850.5,1037.4 852.0,1037.3 853.5,1036.9 855.0,1038.5 856.5,1036.4 858.0,1033.4 859.5,1035.7 861.0,1040.0 862.5,1046.0 864.0,1045.6 865.5,1050.6 867.0,1053.6 868.5,1054.6 870.0,1059.6 871.5,1061.4 873.0,1064.6 874.5,1063.3 876.0,1056.0 877.5,1052.6 879.0,1057.7 880.5,1061.6 882.0,1057.0 883.5,1062.2 885.0,1068.4 886.5,1071.7 888.0,1066.8 889.5,1065.9 891.0,1063.2 892.5,1060.9 894.0,1059.0 895.5,1055.1 897.0,1053.4 898.5,1057.3 900.0,1061.6 901.5,1063.9 903.0,1063.2 904.5,1060.6 906.0,1052.1 907.5,1054.3 909.0,1060.1 910.5,1060.2 912.0,1059.3 913.5,1065.5 915.0,1060.0 916.5,1061.1 918.0,1059.2 919.5,1054.3 921.0,1053.0 922.5,1060.9 924.0,1062.3 925.5,1065.6 927.0,1067.3 928.5,1071.1 930.0,1067.1 931.5,1054.8 933.0,1054.8 934.5,1059.9 936.0,1051.0 937.5,1048.7 939.0,1050.7 940.5,1059.7 942.0,1064.2 943.5,1062.9 945.0,1070.3 946.5,1070.7 948.0,1070.2 949.5,1068.8 951.0,1070.8 952.5,1070.3 954.0,1065.6 955.5,1058.4 957.0,1054.6 958.5,1050.8 960.0,1057.2 961.5,1052.7 963.0,1057.9 964.5,1062.5 966.0,1070.0 967.5,1066.5 969.0,1067.6 970.5,1062.4 972.0,1059.9 973.5,1057.2 975.0,1061.8 976.5,1058.0 978.0,1050.0 979.5,1061.2 981.0,1066.8 982.5,1063.7 984.0,1061.7 985.5,1064.5 987.0,1065.1 988.5,1062.4 990.0,1057.6 991.5,1055.1 993.0,1047.0 994.5,1051.2 996.0,1053.6 997.5,1050.0 999.0,1049.2 1000.5,1060.4 1002.0,1066.8 1003.5,1062.6 1005.0,1065.0 1006.5,1068.3 1008.0,1070.2 1009.5,1067.0 1011.0,1066.5 1012.5,1062.1 1014.0,1067.7 1015.5,1069.6 1017.0,1060.2 1018.5,1059.2 1020.0,1063.1 1021.5,1068.5 1023.0,1068.3 1024.5,1066.5 1026.0,1068.4 1027.5,1075.5 1029.0,1074.6 1030.5,1077.7 1032.0,1073.9 1033.5,1066.5 1035.0,1069.3 1036.5,1070.4 1038.0,1065.3 1039.5,1062.6 1041.0,1069.7 1042.5,1072.0 1044.0,1069.1 1045.5,1074.6 1047.0,1087.1 1048.5,1082.8 1050.0,1078.0 1051.5,1079.3 1053.0,1073.9 1054.5,1068.7 1056.0,1075.1 1057.5,1074.1 1059.0,1077.8 1060.5,1073.1 1062.0,1063.5 1063.5,1064.2 1065.0,1069.2 1066.5,1070.3 1068.0,1063.8 1069.5,1067.4 1071.0,1080.1 1072.5,1076.2 1074.0,1075.6 1075.5,1073.1 1077.0,1076.1 1078.5,1070.3 1080.0,1068.4 1081.5,1077.7 1083.0,1080.7 1084.5,1075.6 1086.0,1076.7 1087.5,1076.4 1089.0,1073.5 1090.5,1073.8 1092.0,1075.7 1093.5,1075.0 1095.0,1075.5 1096.5,1069.5 1098.0,1067.5 1099.5,1064.3 1101.0,1065.5 1102.5,1071.1 1104.0,1071.2 1105.5,1073.5 1107.0,1072.9 1108.5,1071.1 1110.0,1077.8 1111.5,1080.3 1113.0,1079.4 1114.5,1075.2 1116.0,1078.3 1117.5,1074.7 1119.0,1074.2 1120.5,1069.4 1122.0,1068.1 1123.5,1072.1 1125.0,1070.5 1126.5,1073.6 1128.0,1075.3 1129.5,1076.5 1131.0,1070.0 1132.5,1070.8 1134.0,1067.9 1135.5,1069.7 1137.0,1073.7 1138.5,1080.4 1140.0,1080.6 1141.5,1081.6 1143.0,1086.5 1144.5,1080.0 1146.0,1075.9 1147.5,1073.1 1149.0,1078.7 1150.5,1078.0 1152.0,1082.5 1153.5,1084.6 1155.0,1083.1 1156.5,1079.7 1158.0,1078.9 1159.5,1079.2 1161.0,1081.0 1162.5,1084.3 1164.0,1087.0 1165.5,1086.7 1167.0,1078.2 1168.5,1075.1 1170.0,1080.3 1171.5,1082.6 1173.0,1082.1 1174.5,1085.8 1176.0,1092.8 1177.5,1084.6 1179.0,1083.0 1180.5,1092.1 1182.0,1090.8 1183.5,1083.1 1185.0,1083.1 1186.5,1084.9 1188.0,1085.2 1189.5,1079.9 1191.0,1080.2 1192.5,1081.8 1194.0,1076.7 1195.5,1087.1 1197.0,1086.1 1198.5,1083.0 1200.0,1086.4 1201.5,1087.2 1203.0,1084.0 1204.5,1078.7 1206.0,1084.9 1207.5,1081.8 1209.0,1078.1 1210.5,1082.0 1212.0,1087.0 1213.5,1081.2 1215.0,1087.5 1216.5,1094.7 1218.0,1092.6 1219.5,1091.0 1221.0,1095.1 1222.5,1092.6 1224.0,1085.0 1225.5,1090.1 1227.0,1089.7 1228.5,1087.0 1230.0,1087.4 1231.5,1087.2 1233.0,1083.9 1234.5,1085.3 1236.0,1092.4 1237.5,1094.6 1239.0,1088.6 1240.5,1088.9 1242.0,1093.4 1243.5,1095.9 1245.0,1092.4 1246.5,1086.1 1248.0,1089.7 1249.5,1091.4 1251.0,1087.7 1252.5,1081.5 1254.0,1078.1 1255.5,1078.3 1257.0,1076.8 1258.5,1081.1 1260.0,1073.5 1261.5,1069.5 1263.0,1075.2 1264.5,1083.4 1266.0,1078.3 1267.5,1076.7 1269.0,1076.1 1270.5,1076.1 1272.0,1072.3 1273.5,1078.6 1275.0,1080.7 1276.5,1083.6 1278.0,1082.1 1279.5,1082.2 1281.0,1079.6 1282.5,1080.4 1284.0,1081.2 1285.5,1073.9 1287.0,1079.8 1288.5,1083.3 1290.0,1076.2 1291.5,1071.3 1293.0,1073.6 1294.5,1064.6 1296.0,1062.2 1297.5,1065.2 1299.0,1061.0 1300.5,1061.3 1302.0,1067.1 1303.5,1066.7 1305.0,1061.7 1306.5,1068.5 1308.0,1078.1 1309.5,1068.2 1311.0,1071.6 1312.5,1075.7 1314.0,1071.6 1315.5,1065.0 1317.0,1070.4 1318.5,1078.6 1320.0,1074.9 1321.5,1076.9 1323.0,1083.0 1324.5,1084.5 1326.0,1077.5 1327.5,1077.4 1329.0,1081.7 1330.5,1080.5 1332.0,1074.6 1333.5,1074.5 1335.0,1076.1 1336.5,1078.0 1338.0,1076.9 1339.5,1076.4 1341.0,1079.3 1342.5,1079.8 1344.0,1074.3 1345.5,1069.8 1347.0,1067.4 1348.5,1064.0 1350.0,1064.7 1351.5,1067.2 1353.0,1063.4 1354.5,1064.2 1356.0,1065.8 1357.5,1062.0 1359.0,1055.7 1360.5,1067.3 1362.0,1063.8 1363.5,1062.0 1365.0,1063.5 1366.5,1067.5 1368.0,1067.2 1369.5,1066.3 1371.0,1066.4 1372.5,1063.8 1374.0,1062.2 1375.5,1068.8 1377.0,1066.1 1378.5,1061.1 1380.0,1058.4 1381.5,1051.2 1383.0,1049.8 1384.5,1051.5 1386.0,1053.8 1387.5,1055.2 1389.0,1059.2 1390.5,1063.3 1392.0,1060.7 1393.5,1064.3 1395.0,1070.3 1396.5,1068.3 1398.0,1065.7 1399.5,1067.3 1401.0,1072.5 1402.5,1068.4 1404.0,1070.7 1405.5,1072.4 1407.0,1074.7 1408.5,1070.8 1410.0,1067.6 1411.5,1066.9 1413.0,1060.1 1414.5,1056.9 1416.0,1061.0 1417.5,1066.4 1419.0,1058.3 1420.5,1063.5 1422.0,1071.6 1423.5,1069.6 1425.0,1062.9 1426.5,1067.8 1428.0,1069.0 1429.5,1060.3 1431.0,1058.3 1432.5,1062.2 1434.0,1070.5 1435.5,1066.0 1437.0,1065.1 1438.5,1062.3 1440.0,1070.9 1441.5,1074.8 1443.0,1075.4 1444.5,1073.3 1446.0,1075.9 1447.5,1081.1 1449.0,1080.4 1450.5,1077.4 1452.0,1080.3 1453.5,1077.9 1455.0,1077.0 1456.5,1069.8 1458.0,1065.9 1459.5,1065.9 1461.0,1062.9 1462.5,1060.5 1464.0,1061.6 1465.5,1062.5 1467.0,1058.6 1468.5,1060.1 1470.0,1066.5 1471.5,1068.4 1473.0,1061.1 1474.5,1054.7 1476.0,1057.2 1477.5,1053.6 1479.0,1060.9 1480.5,1066.5 1482.0,1060.5 1483.5,1061.4 1485.0,1058.4 1486.5,1060.5 1488.0,1060.5 1489.5,1067.6 1491.0,1069.2 1492.5,1069.4 1494.0,1070.0 1495.5,1065.4 1497.0,1062.8 1498.5,1062.4 1500.0,1058.0 1501.5,1055.1 1503.0,1053.9 1504.5,1055.8 1506.0,1050.9 1507.5,1048.0 1509.0,1046.3 1510.5,1051.4 1512.0,1056.6 1513.5,1055.0 1515.0,1060.4 1516.5,1069.3 1518.0,1072.4 1519.5,1070.3 1521.0,1070.1 1522.5,1061.0 1524.0,1052.4 1525.5,1050.3 1527.0,1048.0 1528.5,1035.2 1530.0,1042.6 1531.5,1051.5 1533.0,1044.8 1534.5,1048.1 1536.0,1065.8 1537.5,1069.4 1539.0,1059.9 1540.5,1051.5 1542.0,1054.8 1543.5,1050.7 1545.0,1049.7 1546.5,1041.1 1548.0,1045.1 1549.5,1051.1 1551.0,1052.6 1552.5,1050.4 1554.0,1049.5 1555.5,1051.1 1557.0,1060.9 1558.5,1062.7 1560.0,1058.0 1561.5,1059.1 1563.0,1059.5 1564.5,1063.6 1566.0,1075.5 1567.5,1072.4 1569.0,1067.4 1570.5,1060.1 1572.0,1058.6 1573.5,1064.7 1575.0,1063.9 1576.5,1067.5 1578.0,1067.6 1579.5,1069.2 1581.0,1074.8 1582.5,1074.9 1584.0,1067.0 1585.5,1065.1 1587.0,1068.4 1588.5,1068.4 1590.0,1069.8 1591.5,1063.7 1593.0,1064.7 1594.5,1062.1 1596.0,1065.2 1597.5,1072.7 1599.0,1075.2 1600.5,1079.0 1602.0,1084.4 1603.5,1067.0 1605.0,1054.5 1606.5,1060.7 1608.0,1069.3 1609.5,1072.9 1611.0,1066.1 1612.5,1072.8 1614.0,1081.4 1615.5,1070.2 1617.0,1060.8 1618.5,1069.9 1620.0,1071.7 1621.5,1070.1 1623.0,1063.3 1624.5,1071.3 1626.0,1072.5 1627.5,1064.0 1629.0,1063.4 1630.5,1072.5 1632.0,1064.8 1633.5,1053.9 1635.0,1055.8 1636.5,1065.4 1638.0,1055.6 1639.5,1052.3 1641.0,1070.1 1642.5,1075.7 1644.0,1059.7 1645.5,1053.9 1647.0,1059.4 1648.5,1054.8 1650.0,1049.4 1651.5,1065.1 1653.0,1069.3 1654.5,1054.0 1656.0,1062.0 1657.5,1065.3 1659.0,1049.1 1660.5,1053.1 1662.0,1070.7 1663.5,1082.6 1665.0,1059.0 1666.5,1045.9 1668.0,1051.4 1669.5,1066.7 1671.0,1080.6 1672.5,1104.7 1674.0,1109.0 1675.5,1091.5 1677.0,1085.9 1678.5,1078.9 1680.0,1066.7 1681.5,1070.9 1683.0,1067.3 1684.5,1065.5 1686.0,1057.4 1687.5,1061.2 1689.0,1058.1 1690.5,1046.5 1692.0,1041.5 1693.5,1048.5 1695.0,1057.0 1696.5,1054.1 1698.0,1080.5 1699.5,1077.7 1701.0,1064.4 1702.5,1076.8 1704.0,1095.8 1705.5,1101.5 1707.0,1091.8 1708.5,1087.5 1710.0,1077.8 1711.5,1070.3 1713.0,1071.0 1714.5,1070.4 1716.0,1066.0 1717.5,1079.5 1719.0,1070.1 1720.5,1064.5 1722.0,1080.2 1723.5,1064.4 1725.0,1047.4 1726.5,1072.2 1728.0,1088.0 1729.5,1073.4 1731.0,1069.4 1732.5,1084.0 1734.0,1086.4 1735.5,1067.6 1737.0,1073.2 1738.5,1080.3 1740.0,1082.7 1741.5,1081.0 1743.0,1073.4 1744.5,1073.7 1746.0,1089.8 1747.5,1074.7 1749.0,1063.5 1750.5,1066.5 1752.0,1055.6 1753.5,1063.8 1755.0,1074.1 1756.5,1072.0 1758.0,1084.2 1759.5,1099.0 1761.0,1105.6 1762.5,1108.8 1764.0,1113.8 1765.5,1111.4 1767.0,1091.3 1768.5,1088.0 1770.0,1090.9 1771.5,1071.5 1773.0,1067.1 1774.5,1087.0 1776.0,1070.2 1777.5,1037.8 1779.0,1042.2 1780.5,1058.6 1782.0,1049.4 1783.5,1039.5 1785.0,1051.3 1786.5,1044.0 1788.0,1056.2 1789.5,1070.1 1791.0,1046.7 1792.5,1047.1 1794.0,1111.8 1795.5,1101.1 1797.0,1057.1 1798.5,1062.8 1800.0,1068.6 1801.5,1043.4 1803.0,1025.0 1804.5,1057.5 1806.0,1084.2 1807.5,1071.3 1809.0,1080.9 1810.5,1104.1 1812.0,1098.8 1813.5,1069.2 1815.0,1054.6 1816.5,1047.6 1818.0,1044.3 1819.5,1048.6 1821.0,1057.0 1822.5,1069.4 1824.0,1057.2 1825.5,1050.4 1827.0,1085.8 1828.5,1100.4 1830.0,1091.9 1831.5,1081.2 1833.0,1068.8 1834.5,1055.3 1836.0,1059.1 1837.5,1094.4 1839.0,1115.5 1840.5,1105.8 1842.0,1096.5 1843.5,1092.1 1845.0,1092.0 1846.5,1090.4 1848.0,1084.2 1849.5,1067.3 1851.0,1065.0 1852.5,1069.1 1854.0,1055.0 1855.5,1057.1 1857.0,1067.9 1858.5,1070.4 1860.0,1076.1 1861.5,1090.1 1863.0,1078.8 1864.5,1042.7 1866.0,1050.6 1867.5,1048.7 1869.0,1058.1 1870.5,1081.1 1872.0,1077.5 1873.5,1055.6 1875.0,1044.3 1876.5,1062.6 1878.0,1077.3 1879.5,1087.3 1881.0,1083.4 1882.5,1077.9 1884.0,1080.3 1885.5,1078.6 1887.0,1064.9 1888.5,1068.5 1890.0,1081.7 1891.5,1097.4 1893.0,1069.7 1894.5,1063.7 1896.0,1078.3 1897.5,1072.9 1899.0,1065.5 1900.5,1067.2 1902.0,1083.3 1903.5,1083.6 1905.0,1088.1 1906.5,1095.1 1908.0,1081.1 1909.5,1076.6 1911.0,1090.6 1912.5,1083.8 1914.0,1061.6 1915.5,1075.0 1917.0,1097.8 1918.5,1091.0 1920.0,1069.6 1921.5,1079.9 1923.0,1078.5 1924.5,1050.2 1926.0,1047.0 1927.5,1054.3 1929.0,1057.3 1930.5,1053.1 1932.0,1059.7 1933.5,1065.4 1935.0,1064.5 1936.5,1063.6 1938.0,1042.5 1939.5,1038.8 1941.0,1054.2 1942.5,1060.2 1944.0,1057.7 1945.5,1063.7 1947.0,1063.5 1948.5,1059.4 1950.0,1053.0 1951.5,1062.4 1953.0,1069.8 1954.5,1056.5 1956.0,1053.6 1957.5,1072.8 1959.0,1072.1 1960.5,1059.8 1962.0,1059.2 1963.5,1077.0 1965.0,1074.8 1966.5,1051.8 1968.0,1050.2 1969.5,1069.9 1971.0,1070.9 1972.5,1061.2 1974.0,1072.6 1975.5,1087.1 1977.0,1075.6 1978.5,1061.7 1980.0,1066.5 1981.5,1067.2 1983.0,1059.2 1984.5,1061.3 1986.0,1072.1 1987.5,1069.4 1989.0,1073.6 1990.5,1086.7 1992.0,1072.4 1993.5,1063.3 1995.0,1070.7 1996.5,1074.6 1998.0,1078.2 1999.5,1090.3 2001.0,1086.2 2002.5,1071.9 2004.0,1075.3 2005.5,1078.1 2007.0,1070.0 2008.5,1059.2 2010.0,1061.7 2011.5,1071.3 2013.0,1072.2 2014.5,1073.7 2016.0,1074.4 2017.5,1082.4 2019.0,1090.6 2020.5,1085.0 2022.0,1079.0 2023.5,1092.9 2025.0,1095.6 2026.5,1076.5 2028.0,1073.9 2029.5,1075.8 2031.0,1062.4 2032.5,1054.1 2034.0,1061.2 2035.5,1058.3 2037.0,1055.0 2038.5,1066.2 2040.0,1062.5 2041.5,1050.2 2043.0,1054.1 2044.5,1067.7 2046.0,1051.8 2047.5,1047.3 2049.0,1063.2 2050.5,1067.6 2052.0,1070.4 2053.5,1071.5 2055.0,1068.8 2056.5,1057.6 2058.0,1059.0 2059.5,1061.4 2061.0,1056.2 2062.5,1050.9 2064.0,1057.0 2065.5,1058.4 2067.0,1050.8 2068.5,1046.6 2070.0,1050.9 2071.5,1050.2 2073.0,1050.1 2074.5,1041.4 2076.0,1048.7 2077.5,1056.6 2079.0,1062.8 2080.5,1059.1 2082.0,1061.8 2083.5,1062.7 2085.0,1059.6 2086.5,1056.5 2088.0,1057.1 2089.5,1049.0 2091.0,1045.6 2092.5,1051.5 2094.0,1056.5 2095.5,1045.6 2097.0,1052.4 2098.5,1065.3 2100.0,1060.4 2101.5,1051.3 2103.0,1063.0 2104.5,1075.5 2106.0,1065.6 2107.5,1058.7 2109.0,1066.2 2110.5,1077.1 2112.0,1061.5 2113.5,1052.6 2115.0,1055.7 2116.5,1052.7 2118.0,1047.0 2119.5,1055.7 2121.0,1062.8 2122.5,1060.8 2124.0,1063.9 2125.5,1073.9 2127.0,1075.3 2128.5,1070.5 2130.0,1070.3 2131.5,1063.5 2133.0,1062.2 2134.5,1055.7 2136.0,1052.9 2137.5,1050.3 2139.0,1060.9 2140.5,1065.2 2142.0,1066.5 2143.5,1071.6 2145.0,1077.0 2146.5,1075.5 2148.0,1067.1 2149.5,1066.0 2151.0,1064.5 2152.5,1060.3 2154.0,1061.4 2155.5,1061.9 2157.0,1056.8 2158.5,1065.4 2160.0,1068.4 2161.5,1055.9 2163.0,1063.4 2164.5,1076.1 2166.0,1061.9 2167.5,1046.8 2169.0,1047.9 2170.5,1045.6 2172.0,1037.0 2173.5,1044.6 2175.0,1043.6 2176.5,1040.2 2178.0,1047.0 2179.5,1050.8 2181.0,1046.6 2182.5,1039.3 2184.0,1052.5 2185.5,1050.6 2187.0,1042.1 2188.5,1046.6 2190.0,1049.3 2191.5,1041.1 2193.0,1043.4 2194.5,1051.8 2196.0,1048.2 2197.5,1041.2 2199.0,1057.1 2200.5,1061.5 2202.0,1051.7 2203.5,1050.7 2205.0,1067.7 2206.5,1070.9 2208.0,1063.7 2209.5,1069.3 2211.0,1083.5 2212.5,1078.8 2214.0,1073.6 2215.5,1068.9 2217.0,1075.1 2218.5,1061.1 2220.0,1053.8 2221.5,1067.1 2223.0,1080.6 2224.5,1068.5 2226.0,1066.7 2227.5,1075.5 2229.0,1075.1 2230.5,1066.2 2232.0,1066.2 2233.5,1070.3 2235.0,1069.9 2236.5,1060.9 2238.0,1063.9 2239.5,1064.7 2241.0,1066.4 2242.5,1057.6 2244.0,1053.9 2245.5,1060.4 2247.0,1061.3 2248.5,1055.9 2250.0,1058.5 2251.5,1068.0 2253.0,1068.4 2254.5,1056.7 2256.0,1056.0 2257.5,1051.9 2259.0,1051.2 2260.5,1052.2 2262.0,1050.2 2263.5,1046.9 2265.0,1060.4 2266.5,1065.0 2268.0,1058.2 2269.5,1060.0 2271.0,1067.9 2272.5,1062.9 2274.0,1066.2 2275.5,1063.2 2277.0,1059.4 2278.5,1057.4 2280.0,1065.5 2281.5,1063.6 2283.0,1063.6 2284.5,1070.0 2286.0,1067.3 2287.5,1051.1 2289.0,1049.0 2290.5,1062.4 2292.0,1060.8 2293.5,1056.4 2295.0,1057.0 2296.5,1057.7 2298.0,1052.6 2299.5,1056.0 2301.0,1059.9 2302.5,1056.5 2304.0,1053.2 2305.5,1052.5 2307.0,1052.6 2308.5,1051.2 2310.0,1052.2 2311.5,1048.4 2313.0,1049.3 2314.5,1059.8 2316.0,1056.8 2317.5,1057.5 2319.0,1059.5 2320.5,1056.6 2322.0,1042.1 2323.5,1042.6 2325.0,1051.4 2326.5,1042.0 2328.0,1032.9 2329.5,1037.0 2331.0,1036.6 2332.5,1028.1 2334.0,1030.7 2335.5,1046.7 2337.0,1047.3 2338.5,1044.5 2340.0,1054.1 2341.5,1055.7 2343.0,1043.7 2344.5,1041.0 2346.0,1050.9 2347.5,1044.8 2349.0,1034.2 2350.5,1043.5 2352.0,1050.2 2353.5,1049.7 2355.0,1048.5 2356.5,1050.9 2358.0,1049.1 2359.5,1049.5 2361.0,1053.4 2362.5,1057.3 2364.0,1058.0 2365.5,1051.1 2367.0,1049.4 2368.5,1045.7 2370.0,1049.2 2371.5,1056.4 2373.0,1049.8 2374.5,1042.5 2376.0,1042.9 2377.5,1047.2 2379.0,1053.4 2380.5,1047.3 2382.0,1042.0 2383.5,1049.6 2385.0,1055.1 2386.5,1047.9 2388.0,1050.8 2389.5,1054.9 2391.0,1058.8 2392.5,1052.5 2394.0,1050.5 2395.5,1047.4 2397.0,1042.2 2398.5,1047.2 2400.0,1048.6 2401.5,1041.4 2403.0,1039.8 2404.5,1047.5 2406.0,1051.2 2407.5,1043.1 2409.0,1038.1 2410.5,1038.6 2412.0,1044.0 2413.5,1049.5 2415.0,1043.0 2416.5,1038.3 2418.0,1046.5 2419.5,1055.1 2421.0,1046.3 2422.5,1041.3 2424.0,1052.7 2425.5,1061.7 2427.0,1055.5 2428.5,1049.0 2430.0,1049.4 2431.5,1052.2 2433.0,1050.4 2434.5,1041.4 2436.0,1044.4 2437.5,1047.9 2439.0,1042.2 2440.5,1036.7 2442.0,1046.0 2443.5,1053.2 2445.0,1044.0 2446.5,1039.6 2448.0,1048.6 2449.5,1053.0 2451.0,1040.6 2452.5,1043.5 2454.0,1048.4 2455.5,1051.2 2457.0,1052.1 2458.5,1050.8 2460.0,1044.6 2461.5,1047.4 2463.0,1045.0 2464.5,1046.6 2466.0,1044.3 2467.5,1046.9 2469.0,1042.1 2470.5,1045.7 2472.0,1049.3 2473.5,1046.7 2475.0,1039.4 2476.5,1045.2 2478.0,1050.7 2479.5,1043.3 2481.0,1046.3 2482.5,1047.1 2484.0,1045.0 2485.5,1045.2 2487.0,1044.1 2488.5,1038.5 2490.0,1036.8 2491.5,1043.2 2493.0,1044.0 2494.5,1035.0 2496.0,1045.5 2497.5,1052.6 2499.0,1054.3 2500.5,1051.0 2502.0,1054.4 2503.5,1049.1 2505.0,1051.1 2506.5,1055.1 2508.0,1053.5 2509.5,1050.7 2511.0,1047.4 2512.5,1054.6 2514.0,1052.4 2515.5,1040.0 2517.0,1041.0 2518.5,1052.2 2520.0,1053.3 2521.5,1044.8 2523.0,1047.6 2524.5,1053.0 2526.0,1049.9 2527.5,1045.2 2529.0,1051.2 2530.5,1052.0 2532.0,1050.6 2533.5,1051.1 2535.0,1050.1 2536.5,1048.4 2538.0,1044.9 2539.5,1055.2 2541.0,1059.8 2542.5,1058.2 2544.0,1062.8 2545.5,1063.5 2547.0,1055.8 2548.5,1056.4 2550.0,1062.3 2551.5,1064.0 2553.0,1056.5 2554.5,1057.1 2556.0,1061.0 2557.5,1065.3 2559.0,1052.4 2560.5,1047.9 2562.0,1054.8 2563.5,1055.6 2565.0,1056.7 2566.5,1059.4 2568.0,1056.4 2569.5,1056.6" fill="none" stroke="#3a8fa0" stroke-width="2" stroke-linejoin="round"/>
<path d="M432.0,1161.7 433.5,1157.4 435.0,1158.4 436.5,1161.5 438.0,1157.3 439.5,1154.1 441.0,1157.6 442.5,1161.4 444.0,1163.0 445.5,1161.9 447.0,1164.4 448.5,1163.5 450.0,1155.8 451.5,1150.1 453.0,1157.7 454.5,1162.9 456.0,1166.3 457.5,1169.4 459.0,1173.5 460.5,1165.0 462.0,1168.2 463.5,1168.3 465.0,1163.8 466.5,1163.2 468.0,1162.7 469.5,1166.9 471.0,1168.8 472.5,1163.4 474.0,1173.9 475.5,1172.0 477.0,1164.9 478.5,1162.9 480.0,1157.4 481.5,1159.2 483.0,1151.3 484.5,1154.7 486.0,1153.6 487.5,1157.7 489.0,1160.9 490.5,1157.6 492.0,1156.9 493.5,1153.0 495.0,1154.7 496.5,1154.2 498.0,1154.3 499.5,1153.0 501.0,1158.1 502.5,1171.1 504.0,1173.3 505.5,1162.7 507.0,1161.8 508.5,1167.3 510.0,1170.5 511.5,1158.6 513.0,1154.2 514.5,1159.3 516.0,1152.9 517.5,1147.0 519.0,1143.5 520.5,1154.7 522.0,1156.3 523.5,1150.6 525.0,1151.3 526.5,1156.7 528.0,1152.7 529.5,1144.6 531.0,1144.8 532.5,1157.9 534.0,1161.0 535.5,1150.1 537.0,1159.6 538.5,1165.0 540.0,1172.2 541.5,1182.9 543.0,1180.0 544.5,1160.9 546.0,1160.2 547.5,1161.6 549.0,1150.9 550.5,1139.1 552.0,1139.0 553.5,1132.2 555.0,1122.5 556.5,1128.0 558.0,1142.7 559.5,1140.7 561.0,1138.8 562.5,1149.1 564.0,1149.8 565.5,1146.1 567.0,1155.1 568.5,1161.8 570.0,1156.8 571.5,1156.5 573.0,1160.7 574.5,1162.3 576.0,1166.7 577.5,1165.1 579.0,1160.5 580.5,1156.0 582.0,1158.3 583.5,1161.7 585.0,1160.2 586.5,1161.5 588.0,1171.0 589.5,1163.3 591.0,1159.5 592.5,1154.1 594.0,1160.2 595.5,1158.4 597.0,1160.4 598.5,1162.9 600.0,1171.3 601.5,1174.9 603.0,1165.5 604.5,1162.9 606.0,1158.1 607.5,1148.8 609.0,1150.9 610.5,1158.2 612.0,1149.3 613.5,1146.2 615.0,1155.0 616.5,1151.0 618.0,1143.7 619.5,1153.1 621.0,1164.9 622.5,1165.9 624.0,1168.1 625.5,1172.6 627.0,1165.1 628.5,1155.1 630.0,1157.9 631.5,1161.0 633.0,1149.3 634.5,1146.1 636.0,1157.6 637.5,1160.1 639.0,1166.8 640.5,1181.8 642.0,1175.7 643.5,1171.6 645.0,1169.5 646.5,1165.8 648.0,1157.2 649.5,1155.8 651.0,1158.7 652.5,1159.4 654.0,1162.5 655.5,1159.7 657.0,1156.6 658.5,1154.1 660.0,1162.4 661.5,1161.9 663.0,1157.4 664.5,1155.0 666.0,1149.0 667.5,1154.5 669.0,1158.3 670.5,1160.5 672.0,1160.3 673.5,1165.8 675.0,1167.2 676.5,1154.2 678.0,1153.7 679.5,1151.1 681.0,1147.0 682.5,1152.6 684.0,1153.9 685.5,1154.8 687.0,1158.1 688.5,1164.8 690.0,1170.4 691.5,1180.4 693.0,1177.8 694.5,1167.2 696.0,1162.6 697.5,1166.6 699.0,1162.8 700.5,1155.0 702.0,1150.3 703.5,1157.4 705.0,1156.4 706.5,1155.5 708.0,1157.2 709.5,1152.1 711.0,1154.1 712.5,1166.4 714.0,1163.6 715.5,1159.4 717.0,1161.2 718.5,1164.7 720.0,1162.6 721.5,1155.5 723.0,1161.0 724.5,1169.7 726.0,1157.5 727.5,1160.9 729.0,1159.0 730.5,1152.4 732.0,1153.5 733.5,1163.0 735.0,1155.2 736.5,1152.4 738.0,1154.6 739.5,1152.7 741.0,1148.4 742.5,1154.8 744.0,1154.9 745.5,1150.7 747.0,1148.9 748.5,1156.3 750.0,1161.4 751.5,1160.2 753.0,1159.3 754.5,1157.8 756.0,1158.1 757.5,1153.0 759.0,1147.0 760.5,1154.9 762.0,1159.5 763.5,1161.5 765.0,1159.3 766.5,1159.2 768.0,1151.6 769.5,1145.7 771.0,1149.7 772.5,1152.3 774.0,1147.6 775.5,1143.5 777.0,1144.4 778.5,1144.2 780.0,1147.9 781.5,1151.3 783.0,1150.1 784.5,1143.5 786.0,1142.2 787.5,1139.6 789.0,1136.3 790.5,1133.8 792.0,1134.3 793.5,1136.9 795.0,1147.6 796.5,1147.6 798.0,1156.9 799.5,1158.9 801.0,1156.5 802.5,1152.9 804.0,1165.1 805.5,1166.8 807.0,1160.3 808.5,1156.1 810.0,1160.5 811.5,1165.8 813.0,1162.2 814.5,1161.4 816.0,1164.5 817.5,1169.8 819.0,1169.5 820.5,1168.8 822.0,1171.5 823.5,1169.5 825.0,1158.8 826.5,1155.7 828.0,1150.2 829.5,1152.6 831.0,1156.4 832.5,1165.2 834.0,1162.2 835.5,1147.7 837.0,1131.9 838.5,1137.9 840.0,1139.7 841.5,1138.9 843.0,1141.3 844.5,1141.6 846.0,1135.4 847.5,1132.6 849.0,1134.6 850.5,1146.0 852.0,1144.7 853.5,1136.9 855.0,1138.8 856.5,1141.1 858.0,1137.6 859.5,1139.0 861.0,1143.6 862.5,1139.3 864.0,1136.2 865.5,1144.4 867.0,1147.7 868.5,1145.1 870.0,1149.5 871.5,1155.4 873.0,1155.9 874.5,1151.1 876.0,1149.3 877.5,1145.2 879.0,1146.5 880.5,1143.0 882.0,1147.0 883.5,1152.1 885.0,1155.6 886.5,1163.1 888.0,1165.3 889.5,1160.7 891.0,1159.4 892.5,1159.7 894.0,1148.2 895.5,1147.1 897.0,1153.3 898.5,1155.0 900.0,1161.9 901.5,1164.6 903.0,1160.3 904.5,1154.4 906.0,1154.3 907.5,1148.0 909.0,1146.6 910.5,1149.4 912.0,1154.4 913.5,1150.6 915.0,1137.1 916.5,1138.7 918.0,1150.1 919.5,1147.8 921.0,1142.0 922.5,1151.1 924.0,1152.3 925.5,1151.6 927.0,1154.5 928.5,1155.6 930.0,1146.9 931.5,1140.5 933.0,1145.3 934.5,1145.8 936.0,1147.4 937.5,1138.9 939.0,1137.8 940.5,1144.6 942.0,1155.3 943.5,1153.4 945.0,1156.9 946.5,1164.2 948.0,1163.9 949.5,1165.3 951.0,1170.6 952.5,1169.5 954.0,1164.1 955.5,1158.6 957.0,1164.3 958.5,1161.3 960.0,1157.3 961.5,1151.6 963.0,1151.4 964.5,1158.3 966.0,1163.1 967.5,1166.4 969.0,1163.8 970.5,1160.7 972.0,1158.7 973.5,1154.2 975.0,1150.5 976.5,1149.9 978.0,1145.4 979.5,1150.1 981.0,1157.5 982.5,1157.4 984.0,1156.4 985.5,1155.9 987.0,1157.0 988.5,1150.5 990.0,1154.1 991.5,1151.4 993.0,1142.6 994.5,1143.6 996.0,1144.9 997.5,1147.5 999.0,1151.0 1000.5,1163.5 1002.0,1167.5 1003.5,1163.3 1005.0,1165.2 1006.5,1162.3 1008.0,1152.6 1009.5,1153.1 1011.0,1155.7 1012.5,1153.2 1014.0,1154.3 1015.5,1153.2 1017.0,1148.5 1018.5,1149.3 1020.0,1149.1 1021.5,1150.3 1023.0,1150.5 1024.5,1157.1 1026.0,1157.3 1027.5,1161.9 1029.0,1167.2 1030.5,1165.1 1032.0,1159.8 1033.5,1160.9 1035.0,1161.3 1036.5,1163.7 1038.0,1154.7 1039.5,1148.4 1041.0,1157.7 1042.5,1156.6 1044.0,1157.6 1045.5,1161.8 1047.0,1174.6 1048.5,1173.8 1050.0,1165.8 1051.5,1168.0 1053.0,1172.0 1054.5,1166.9 1056.0,1161.0 1057.5,1167.4 1059.0,1175.7 1060.5,1167.4 1062.0,1164.3 1063.5,1158.3 1065.0,1158.3 1066.5,1156.2 1068.0,1154.9 1069.5,1157.5 1071.0,1158.9 1072.5,1162.7 1074.0,1162.6 1075.5,1165.8 1077.0,1167.4 1078.5,1168.0 1080.0,1165.1 1081.5,1171.8 1083.0,1172.7 1084.5,1168.2 1086.0,1175.0 1087.5,1175.7 1089.0,1168.9 1090.5,1167.8 1092.0,1174.3 1093.5,1173.2 1095.0,1166.9 1096.5,1161.5 1098.0,1169.4 1099.5,1166.7 1101.0,1162.6 1102.5,1163.4 1104.0,1171.0 1105.5,1163.8 1107.0,1161.6 1108.5,1161.6 1110.0,1169.8 1111.5,1173.5 1113.0,1173.0 1114.5,1171.2 1116.0,1171.9 1117.5,1164.8 1119.0,1169.1 1120.5,1168.7 1122.0,1169.1 1123.5,1170.3 1125.0,1168.7 1126.5,1171.2 1128.0,1177.2 1129.5,1177.7 1131.0,1173.1 1132.5,1170.4 1134.0,1169.0 1135.5,1167.0 1137.0,1175.0 1138.5,1180.9 1140.0,1178.1 1141.5,1176.3 1143.0,1174.0 1144.5,1173.9 1146.0,1171.7 1147.5,1168.5 1149.0,1172.8 1150.5,1171.9 1152.0,1173.2 1153.5,1168.8 1155.0,1167.3 1156.5,1171.5 1158.0,1167.7 1159.5,1166.0 1161.0,1168.5 1162.5,1171.3 1164.0,1172.3 1165.5,1174.7 1167.0,1168.8 1168.5,1163.6 1170.0,1165.2 1171.5,1163.8 1173.0,1162.1 1174.5,1172.3 1176.0,1176.8 1177.5,1171.8 1179.0,1172.9 1180.5,1178.5 1182.0,1176.4 1183.5,1167.5 1185.0,1175.4 1186.5,1176.0 1188.0,1169.7 1189.5,1169.4 1191.0,1166.7 1192.5,1166.4 1194.0,1171.4 1195.5,1178.2 1197.0,1174.3 1198.5,1167.0 1200.0,1172.5 1201.5,1173.6 1203.0,1171.1 1204.5,1167.2 1206.0,1172.0 1207.5,1170.3 1209.0,1168.8 1210.5,1175.8 1212.0,1176.2 1213.5,1171.7 1215.0,1163.7 1216.5,1170.9 1218.0,1177.2 1219.5,1180.9 1221.0,1182.5 1222.5,1178.0 1224.0,1177.9 1225.5,1179.1 1227.0,1178.4 1228.5,1177.4 1230.0,1176.4 1231.5,1173.2 1233.0,1170.9 1234.5,1169.4 1236.0,1182.6 1237.5,1185.7 1239.0,1177.1 1240.5,1171.4 1242.0,1174.8 1243.5,1180.5 1245.0,1179.1 1246.5,1172.5 1248.0,1173.6 1249.5,1177.0 1251.0,1173.7 1252.5,1171.9 1254.0,1169.6 1255.5,1166.3 1257.0,1171.4 1258.5,1173.1 1260.0,1173.0 1261.5,1171.2 1263.0,1174.7 1264.5,1179.3 1266.0,1178.4 1267.5,1173.9 1269.0,1172.6 1270.5,1171.5 1272.0,1174.9 1273.5,1176.0 1275.0,1177.2 1276.5,1178.2 1278.0,1187.4 1279.5,1178.7 1281.0,1175.8 1282.5,1178.2 1284.0,1179.9 1285.5,1177.0 1287.0,1176.4 1288.5,1179.8 1290.0,1174.8 1291.5,1173.2 1293.0,1167.4 1294.5,1159.7 1296.0,1155.5 1297.5,1160.1 1299.0,1159.4 1300.5,1159.6 1302.0,1163.3 1303.5,1160.6 1305.0,1163.4 1306.5,1166.7 1308.0,1168.1 1309.5,1157.7 1311.0,1155.3 1312.5,1164.3 1314.0,1162.3 1315.5,1155.3 1317.0,1163.2 1318.5,1174.7 1320.0,1166.2 1321.5,1165.3 1323.0,1170.8 1324.5,1168.8 1326.0,1165.1 1327.5,1170.1 1329.0,1176.0 1330.5,1166.6 1332.0,1168.4 1333.5,1171.3 1335.0,1166.6 1336.5,1164.6 1338.0,1171.7 1339.5,1169.9 1341.0,1171.6 1342.5,1170.1 1344.0,1163.9 1345.5,1162.3 1347.0,1155.0 1348.5,1152.8 1350.0,1151.9 1351.5,1157.4 1353.0,1153.1 1354.5,1154.2 1356.0,1154.9 1357.5,1155.5 1359.0,1151.5 1360.5,1152.0 1362.0,1155.0 1363.5,1150.4 1365.0,1149.6 1366.5,1155.6 1368.0,1165.1 1369.5,1164.3 1371.0,1158.9 1372.5,1160.3 1374.0,1157.7 1375.5,1164.2 1377.0,1161.2 1378.5,1153.5 1380.0,1151.1 1381.5,1151.0 1383.0,1150.3 1384.5,1144.0 1386.0,1146.0 1387.5,1144.6 1389.0,1147.8 1390.5,1154.6 1392.0,1152.9 1393.5,1149.6 1395.0,1146.5 1396.5,1147.3 1398.0,1144.6 1399.5,1149.3 1401.0,1155.3 1402.5,1152.4 1404.0,1150.2 1405.5,1156.3 1407.0,1159.9 1408.5,1155.1 1410.0,1153.2 1411.5,1157.2 1413.0,1151.3 1414.5,1141.1 1416.0,1147.7 1417.5,1150.2 1419.0,1151.3 1420.5,1148.1 1422.0,1157.7 1423.5,1156.8 1425.0,1158.1 1426.5,1159.5 1428.0,1156.5 1429.5,1143.3 1431.0,1142.6 1432.5,1148.1 1434.0,1147.3 1435.5,1144.5 1437.0,1147.5 1438.5,1150.0 1440.0,1150.1 1441.5,1154.5 1443.0,1159.6 1444.5,1157.8 1446.0,1159.0 1447.5,1154.9 1449.0,1155.8 1450.5,1156.8 1452.0,1156.8 1453.5,1156.6 1455.0,1153.2 1456.5,1142.3 1458.0,1142.0 1459.5,1144.2 1461.0,1144.3 1462.5,1140.0 1464.0,1144.6 1465.5,1142.5 1467.0,1136.8 1468.5,1136.1 1470.0,1143.5 1471.5,1140.9 1473.0,1140.8 1474.5,1143.7 1476.0,1149.3 1477.5,1145.4 1479.0,1151.6 1480.5,1151.8 1482.0,1147.6 1483.5,1145.9 1485.0,1148.5 1486.5,1145.8 1488.0,1154.4 1489.5,1154.1 1491.0,1150.6 1492.5,1154.5 1494.0,1154.3 1495.5,1155.3 1497.0,1149.2 1498.5,1147.8 1500.0,1149.3 1501.5,1147.7 1503.0,1144.9 1504.5,1145.6 1506.0,1138.6 1507.5,1131.6 1509.0,1129.9 1510.5,1136.4 1512.0,1135.8 1513.5,1141.7 1515.0,1147.4 1516.5,1162.9 1518.0,1163.5 1519.5,1152.0 1521.0,1151.8 1522.5,1152.0 1524.0,1138.7 1525.5,1132.4 1527.0,1136.2 1528.5,1127.5 1530.0,1127.8 1531.5,1130.1 1533.0,1134.4 1534.5,1141.8 1536.0,1151.9 1537.5,1154.2 1539.0,1148.2 1540.5,1140.5 1542.0,1143.9 1543.5,1137.3 1545.0,1134.0 1546.5,1127.7 1548.0,1126.9 1549.5,1136.2 1551.0,1143.6 1552.5,1144.8 1554.0,1137.7 1555.5,1141.7 1557.0,1152.9 1558.5,1144.0 1560.0,1140.1 1561.5,1139.4 1563.0,1138.1 1564.5,1147.9 1566.0,1153.5 1567.5,1151.8 1569.0,1145.6 1570.5,1148.2 1572.0,1144.0 1573.5,1143.7 1575.0,1143.4 1576.5,1149.8 1578.0,1148.2 1579.5,1152.3 1581.0,1161.7 1582.5,1159.3 1584.0,1149.5 1585.5,1146.7 1587.0,1152.0 1588.5,1150.2 1590.0,1149.3 1591.5,1148.5 1593.0,1144.6 1594.5,1147.7 1596.0,1147.0 1597.5,1150.9 1599.0,1154.9 1600.5,1161.1 1602.0,1162.2 1603.5,1150.9 1605.0,1141.7 1606.5,1139.8 1608.0,1153.3 1609.5,1153.6 1611.0,1149.8 1612.5,1151.8 1614.0,1162.6 1615.5,1163.1 1617.0,1154.2 1618.5,1154.8 1620.0,1157.2 1621.5,1154.2 1623.0,1151.8 1624.5,1156.9 1626.0,1161.7 1627.5,1150.3 1629.0,1143.9 1630.5,1151.6 1632.0,1146.4 1633.5,1138.9 1635.0,1145.6 1636.5,1159.4 1638.0,1149.6 1639.5,1142.5 1641.0,1148.6 1642.5,1148.3 1644.0,1139.0 1645.5,1142.6 1647.0,1152.1 1648.5,1149.9 1650.0,1142.5 1651.5,1146.7 1653.0,1149.6 1654.5,1142.4 1656.0,1143.2 1657.5,1140.6 1659.0,1135.9 1660.5,1143.2 1662.0,1157.7 1663.5,1158.7 1665.0,1144.6 1666.5,1119.6 1668.0,1126.8 1669.5,1142.5 1671.0,1163.2 1672.5,1178.0 1674.0,1188.3 1675.5,1181.8 1677.0,1168.4 1678.5,1163.3 1680.0,1166.1 1681.5,1164.7 1683.0,1152.8 1684.5,1144.8 1686.0,1147.0 1687.5,1141.4 1689.0,1143.2 1690.5,1141.9 1692.0,1141.0 1693.5,1143.4 1695.0,1142.4 1696.5,1137.5 1698.0,1163.4 1699.5,1176.0 1701.0,1163.6 1702.5,1154.8 1704.0,1175.1 1705.5,1172.8 1707.0,1151.5 1708.5,1158.6 1710.0,1167.8 1711.5,1155.2 1713.0,1155.4 1714.5,1149.3 1716.0,1145.8 1717.5,1163.8 1719.0,1159.8 1720.5,1150.1 1722.0,1155.8 1723.5,1142.7 1725.0,1132.2 1726.5,1158.1 1728.0,1172.8 1729.5,1161.0 1731.0,1143.9 1732.5,1155.1 1734.0,1144.1 1735.5,1141.2 1737.0,1149.8 1738.5,1161.0 1740.0,1149.7 1741.5,1143.6 1743.0,1142.0 1744.5,1152.8 1746.0,1164.1 1747.5,1168.0 1749.0,1149.8 1750.5,1129.2 1752.0,1138.1 1753.5,1162.4 1755.0,1157.6 1756.5,1157.1 1758.0,1175.4 1759.5,1197.1 1761.0,1189.5 1762.5,1188.0 1764.0,1187.8 1765.5,1193.9 1767.0,1167.7 1768.5,1155.0 1770.0,1167.9 1771.5,1167.3 1773.0,1155.4 1774.5,1164.9 1776.0,1170.9 1777.5,1132.8 1779.0,1113.3 1780.5,1143.2 1782.0,1137.1 1783.5,1122.4 1785.0,1121.0 1786.5,1131.7 1788.0,1142.4 1789.5,1143.9 1791.0,1134.3 1792.5,1133.0 1794.0,1176.1 1795.5,1174.1 1797.0,1144.1 1798.5,1140.6 1800.0,1152.8 1801.5,1136.2 1803.0,1110.1 1804.5,1138.7 1806.0,1158.0 1807.5,1153.3 1809.0,1166.9 1810.5,1187.4 1812.0,1170.6 1813.5,1154.5 1815.0,1143.9 1816.5,1132.5 1818.0,1127.6 1819.5,1140.3 1821.0,1141.4 1822.5,1137.7 1824.0,1140.1 1825.5,1153.2 1827.0,1166.1 1828.5,1170.5 1830.0,1176.5 1831.5,1170.1 1833.0,1161.4 1834.5,1149.5 1836.0,1150.8 1837.5,1177.3 1839.0,1202.9 1840.5,1189.8 1842.0,1183.5 1843.5,1188.2 1845.0,1181.0 1846.5,1171.1 1848.0,1172.4 1849.5,1163.3 1851.0,1149.6 1852.5,1145.4 1854.0,1135.1 1855.5,1136.7 1857.0,1150.6 1858.5,1154.5 1860.0,1156.8 1861.5,1177.2 1863.0,1177.0 1864.5,1135.4 1866.0,1132.9 1867.5,1143.2 1869.0,1152.5 1870.5,1150.8 1872.0,1150.9 1873.5,1141.5 1875.0,1132.2 1876.5,1139.1 1878.0,1157.6 1879.5,1164.9 1881.0,1161.5 1882.5,1151.5 1884.0,1156.0 1885.5,1146.9 1887.0,1144.1 1888.5,1158.0 1890.0,1172.0 1891.5,1168.7 1893.0,1163.2 1894.5,1159.3 1896.0,1152.2 1897.5,1152.0 1899.0,1152.9 1900.5,1148.8 1902.0,1153.2 1903.5,1159.2 1905.0,1165.4 1906.5,1164.7 1908.0,1168.4 1909.5,1179.1 1911.0,1178.5 1912.5,1163.7 1914.0,1154.6 1915.5,1163.4 1917.0,1181.9 1918.5,1169.9 1920.0,1161.6 1921.5,1162.9 1923.0,1150.5 1924.5,1132.5 1926.0,1136.4 1927.5,1149.2 1929.0,1155.3 1930.5,1152.9 1932.0,1152.8 1933.5,1143.5 1935.0,1150.7 1936.5,1146.4 1938.0,1133.9 1939.5,1128.1 1941.0,1135.5 1942.5,1141.5 1944.0,1142.8 1945.5,1147.0 1947.0,1151.5 1948.5,1148.1 1950.0,1142.5 1951.5,1143.4 1953.0,1147.7 1954.5,1141.0 1956.0,1142.1 1957.5,1148.0 1959.0,1158.2 1960.5,1147.0 1962.0,1141.6 1963.5,1151.0 1965.0,1151.1 1966.5,1133.5 1968.0,1134.4 1969.5,1145.3 1971.0,1139.7 1972.5,1138.1 1974.0,1153.4 1975.5,1162.7 1977.0,1155.1 1978.5,1150.4 1980.0,1150.3 1981.5,1149.1 1983.0,1146.2 1984.5,1143.5 1986.0,1152.5 1987.5,1155.8 1989.0,1166.6 1990.5,1166.5 1992.0,1156.1 1993.5,1151.8 1995.0,1159.8 1996.5,1160.1 1998.0,1157.4 1999.5,1170.0 2001.0,1171.0 2002.5,1155.6 2004.0,1147.8 2005.5,1153.5 2007.0,1150.5 2008.5,1143.9 2010.0,1141.3 2011.5,1154.2 2013.0,1153.1 2014.5,1146.9 2016.0,1158.2 2017.5,1166.3 2019.0,1164.8 2020.5,1164.7 2022.0,1170.2 2023.5,1177.1 2025.0,1177.8 2026.5,1167.5 2028.0,1162.8 2029.5,1157.3 2031.0,1144.0 2032.5,1131.7 2034.0,1142.4 2035.5,1140.5 2037.0,1138.1 2038.5,1135.5 2040.0,1140.8 2041.5,1140.8 2043.0,1139.7 2044.5,1137.9 2046.0,1132.1 2047.5,1136.3 2049.0,1137.0 2050.5,1143.8 2052.0,1148.7 2053.5,1152.5 2055.0,1153.3 2056.5,1145.3 2058.0,1141.6 2059.5,1145.8 2061.0,1143.6 2062.5,1137.0 2064.0,1140.2 2065.5,1143.5 2067.0,1144.6 2068.5,1141.9 2070.0,1138.5 2071.5,1140.0 2073.0,1142.0 2074.5,1135.9 2076.0,1130.1 2077.5,1143.0 2079.0,1150.0 2080.5,1145.8 2082.0,1149.4 2083.5,1145.9 2085.0,1143.5 2086.5,1134.7 2088.0,1141.2 2089.5,1134.1 2091.0,1131.1 2092.5,1139.0 2094.0,1143.2 2095.5,1132.7 2097.0,1138.0 2098.5,1146.1 2100.0,1141.4 2101.5,1137.9 2103.0,1146.0 2104.5,1148.3 2106.0,1145.3 2107.5,1143.7 2109.0,1149.6 2110.5,1154.0 2112.0,1147.9 2113.5,1140.3 2115.0,1141.4 2116.5,1134.7 2118.0,1128.0 2119.5,1137.3 2121.0,1144.9 2122.5,1145.2 2124.0,1149.1 2125.5,1159.6 2127.0,1161.8 2128.5,1157.5 2130.0,1148.6 2131.5,1152.2 2133.0,1146.9 2134.5,1141.4 2136.0,1136.6 2137.5,1135.7 2139.0,1135.2 2140.5,1136.6 2142.0,1140.4 2143.5,1148.4 2145.0,1152.5 2146.5,1141.7 2148.0,1141.3 2149.5,1146.9 2151.0,1146.8 2152.5,1136.0 2154.0,1134.2 2155.5,1138.0 2157.0,1141.8 2158.5,1145.3 2160.0,1148.0 2161.5,1148.5 2163.0,1155.5 2164.5,1153.4 2166.0,1143.7 2167.5,1137.3 2169.0,1137.9 2170.5,1131.6 2172.0,1137.9 2173.5,1146.2 2175.0,1138.1 2176.5,1127.1 2178.0,1142.3 2179.5,1155.5 2181.0,1142.3 2182.5,1133.7 2184.0,1152.2 2185.5,1151.2 2187.0,1141.0 2188.5,1132.4 2190.0,1146.5 2191.5,1144.2 2193.0,1140.2 2194.5,1136.7 2196.0,1142.3 2197.5,1137.4 2199.0,1150.2 2200.5,1145.4 2202.0,1136.1 2203.5,1143.5 2205.0,1160.8 2206.5,1152.5 2208.0,1137.1 2209.5,1158.2 2211.0,1167.3 2212.5,1151.0 2214.0,1152.1 2215.5,1160.5 2217.0,1162.0 2218.5,1139.1 2220.0,1136.7 2221.5,1155.9 2223.0,1160.8 2224.5,1160.4 2226.0,1160.3 2227.5,1162.7 2229.0,1165.1 2230.5,1156.8 2232.0,1147.8 2233.5,1148.6 2235.0,1154.5 2236.5,1153.9 2238.0,1146.2 2239.5,1147.9 2241.0,1148.9 2242.5,1137.6 2244.0,1137.9 2245.5,1151.9 2247.0,1148.7 2248.5,1139.2 2250.0,1140.9 2251.5,1152.0 2253.0,1151.2 2254.5,1140.9 2256.0,1144.6 2257.5,1143.9 2259.0,1139.2 2260.5,1135.3 2262.0,1137.2 2263.5,1145.6 2265.0,1145.7 2266.5,1139.9 2268.0,1144.4 2269.5,1151.1 2271.0,1152.3 2272.5,1147.6 2274.0,1149.6 2275.5,1147.7 2277.0,1146.6 2278.5,1147.6 2280.0,1145.6 2281.5,1139.4 2283.0,1148.7 2284.5,1154.2 2286.0,1138.5 2287.5,1133.3 2289.0,1145.4 2290.5,1138.8 2292.0,1131.4 2293.5,1135.3 2295.0,1136.3 2296.5,1127.9 2298.0,1130.3 2299.5,1142.3 2301.0,1138.1 2302.5,1136.1 2304.0,1138.3 2305.5,1142.6 2307.0,1141.8 2308.5,1139.8 2310.0,1133.1 2311.5,1127.9 2313.0,1135.8 2314.5,1140.4 2316.0,1141.8 2317.5,1140.4 2319.0,1145.5 2320.5,1143.9 2322.0,1136.2 2323.5,1135.8 2325.0,1136.5 2326.5,1131.4 2328.0,1122.7 2329.5,1125.6 2331.0,1125.8 2332.5,1122.2 2334.0,1128.3 2335.5,1136.4 2337.0,1131.2 2338.5,1133.4 2340.0,1146.8 2341.5,1143.3 2343.0,1130.6 2344.5,1131.1 2346.0,1141.4 2347.5,1127.9 2349.0,1122.2 2350.5,1131.8 2352.0,1142.8 2353.5,1137.8 2355.0,1136.5 2356.5,1143.6 2358.0,1141.3 2359.5,1138.5 2361.0,1136.7 2362.5,1138.0 2364.0,1142.6 2365.5,1137.6 2367.0,1135.4 2368.5,1132.8 2370.0,1134.7 2371.5,1139.5 2373.0,1136.3 2374.5,1133.4 2376.0,1127.3 2377.5,1130.6 2379.0,1140.7 2380.5,1142.3 2382.0,1130.1 2383.5,1139.6 2385.0,1147.4 2386.5,1133.0 2388.0,1132.0 2389.5,1144.9 2391.0,1138.9 2392.5,1132.0 2394.0,1141.6 2395.5,1135.6 2397.0,1123.3 2398.5,1130.7 2400.0,1136.0 2401.5,1126.4 2403.0,1120.7 2404.5,1131.9 2406.0,1131.3 2407.5,1128.2 2409.0,1123.8 2410.5,1127.4 2412.0,1125.0 2413.5,1128.4 2415.0,1127.4 2416.5,1120.0 2418.0,1124.7 2419.5,1126.2 2421.0,1127.2 2422.5,1122.6 2424.0,1131.2 2425.5,1138.3 2427.0,1133.0 2428.5,1124.9 2430.0,1132.0 2431.5,1139.3 2433.0,1135.2 2434.5,1126.7 2436.0,1124.6 2437.5,1132.1 2439.0,1126.2 2440.5,1119.5 2442.0,1128.8 2443.5,1133.9 2445.0,1128.8 2446.5,1123.6 2448.0,1129.9 2449.5,1135.2 2451.0,1125.6 2452.5,1118.9 2454.0,1122.4 2455.5,1132.9 2457.0,1129.6 2458.5,1121.7 2460.0,1125.0 2461.5,1132.1 2463.0,1129.8 2464.5,1124.2 2466.0,1126.3 2467.5,1127.9 2469.0,1120.6 2470.5,1119.1 2472.0,1127.2 2473.5,1124.8 2475.0,1123.1 2476.5,1127.2 2478.0,1123.7 2479.5,1117.6 2481.0,1115.3 2482.5,1120.5 2484.0,1118.3 2485.5,1119.5 2487.0,1120.4 2488.5,1117.0 2490.0,1114.8 2491.5,1123.3 2493.0,1125.5 2494.5,1123.8 2496.0,1129.0 2497.5,1128.5 2499.0,1125.5 2500.5,1128.1 2502.0,1124.5 2503.5,1117.2 2505.0,1120.1 2506.5,1123.0 2508.0,1122.9 2509.5,1121.6 2511.0,1124.5 2512.5,1121.1 2514.0,1118.9 2515.5,1113.7 2517.0,1112.1 2518.5,1123.8 2520.0,1126.3 2521.5,1124.2 2523.0,1120.9 2524.5,1134.6 2526.0,1130.4 2527.5,1122.6 2529.0,1128.1 2530.5,1137.5 2532.0,1132.8 2533.5,1129.1 2535.0,1129.0 2536.5,1133.3 2538.0,1127.4 2539.5,1131.3 2541.0,1131.2 2542.5,1131.1 2544.0,1136.6 2545.5,1135.0 2547.0,1137.2 2548.5,1134.3 2550.0,1140.8 2551.5,1136.1 2553.0,1136.5 2554.5,1139.1 2556.0,1141.4 2557.5,1136.2 2559.0,1133.6 2560.5,1137.9 2562.0,1138.1 2563.5,1136.2 2565.0,1134.7 2566.5,1139.0 2568.0,1136.9 2569.5,1140.3" fill="none" stroke="#d63a9a" stroke-width="2" stroke-linejoin="round"/>
<path d="M432.0,1240.1 433.5,1238.6 435.0,1234.5 436.5,1239.6 438.0,1236.9 439.5,1241.1 441.0,1244.9 442.5,1252.4 444.0,1246.4 445.5,1246.6 447.0,1245.5 448.5,1246.3 450.0,1236.1 451.5,1239.7 453.0,1245.6 454.5,1245.0 456.0,1247.3 457.5,1252.7 459.0,1256.2 460.5,1249.4 462.0,1250.3 463.5,1249.5 465.0,1246.4 466.5,1243.1 468.0,1241.0 469.5,1247.1 471.0,1249.9 472.5,1249.6 474.0,1249.8 475.5,1251.8 477.0,1254.5 478.5,1245.8 480.0,1245.1 481.5,1247.4 483.0,1247.4 484.5,1244.2 486.0,1242.9 487.5,1240.4 489.0,1246.8 490.5,1244.8 492.0,1235.5 493.5,1236.8 495.0,1240.8 496.5,1244.1 498.0,1249.5 499.5,1254.0 501.0,1252.5 502.5,1250.5 504.0,1245.9 505.5,1251.4 507.0,1242.3 508.5,1247.7 510.0,1253.6 511.5,1241.0 513.0,1244.0 514.5,1249.0 516.0,1248.0 517.5,1239.3 519.0,1236.8 520.5,1242.3 522.0,1241.1 523.5,1236.1 525.0,1227.5 526.5,1235.4 528.0,1239.0 529.5,1233.8 531.0,1231.7 532.5,1238.1 534.0,1248.4 535.5,1234.6 537.0,1236.1 538.5,1244.5 540.0,1246.4 541.5,1255.3 543.0,1255.5 544.5,1236.6 546.0,1236.7 547.5,1233.6 549.0,1225.7 550.5,1222.6 552.0,1217.5 553.5,1213.5 555.0,1214.1 556.5,1220.1 558.0,1226.8 559.5,1225.4 561.0,1227.8 562.5,1230.8 564.0,1230.6 565.5,1222.7 567.0,1231.8 568.5,1234.0 570.0,1233.4 571.5,1243.3 573.0,1256.4 574.5,1249.7 576.0,1245.0 577.5,1254.1 579.0,1248.5 580.5,1243.9 582.0,1247.2 583.5,1243.5 585.0,1235.7 586.5,1234.8 588.0,1242.7 589.5,1249.9 591.0,1243.6 592.5,1238.7 594.0,1240.8 595.5,1248.1 597.0,1241.7 598.5,1245.6 600.0,1257.5 601.5,1263.0 603.0,1256.9 604.5,1255.2 606.0,1249.9 607.5,1241.3 609.0,1242.3 610.5,1245.1 612.0,1241.9 613.5,1245.9 615.0,1250.3 616.5,1244.8 618.0,1240.1 619.5,1248.4 621.0,1252.8 622.5,1247.5 624.0,1252.1 625.5,1262.9 627.0,1257.2 628.5,1248.7 630.0,1251.5 631.5,1253.3 633.0,1241.5 634.5,1247.2 636.0,1249.5 637.5,1248.9 639.0,1255.3 640.5,1259.4 642.0,1254.4 643.5,1252.8 645.0,1253.6 646.5,1247.2 648.0,1241.2 649.5,1244.8 651.0,1246.9 652.5,1250.3 654.0,1254.1 655.5,1248.6 657.0,1247.9 658.5,1248.3 660.0,1248.7 661.5,1244.1 663.0,1244.5 664.5,1239.3 666.0,1236.8 667.5,1239.0 669.0,1251.1 670.5,1254.0 672.0,1253.7 673.5,1257.2 675.0,1257.9 676.5,1252.7 678.0,1243.8 679.5,1236.1 681.0,1232.1 682.5,1237.2 684.0,1240.1 685.5,1240.1 687.0,1250.6 688.5,1254.9 690.0,1251.3 691.5,1258.6 693.0,1262.5 694.5,1253.7 696.0,1249.5 697.5,1256.3 699.0,1252.0 700.5,1241.8 702.0,1236.3 703.5,1239.7 705.0,1238.9 706.5,1237.5 708.0,1239.3 709.5,1238.5 711.0,1238.5 712.5,1247.9 714.0,1245.3 715.5,1243.7 717.0,1244.3 718.5,1243.2 720.0,1249.5 721.5,1242.8 723.0,1244.1 724.5,1248.0 726.0,1241.4 727.5,1246.6 729.0,1240.4 730.5,1236.1 732.0,1241.8 733.5,1246.9 735.0,1245.4 736.5,1240.6 738.0,1240.1 739.5,1236.1 741.0,1235.0 742.5,1234.1 744.0,1241.0 745.5,1239.2 747.0,1244.4 748.5,1248.6 750.0,1243.2 751.5,1249.4 753.0,1251.6 754.5,1249.6 756.0,1247.2 757.5,1245.3 759.0,1241.6 760.5,1239.7 762.0,1242.8 763.5,1244.1 765.0,1245.3 766.5,1246.7 768.0,1243.2 769.5,1239.5 771.0,1241.2 772.5,1242.3 774.0,1234.5 775.5,1227.8 777.0,1229.3 778.5,1225.9 780.0,1225.1 781.5,1230.7 783.0,1227.2 784.5,1220.7 786.0,1220.1 787.5,1222.3 789.0,1224.3 790.5,1222.4 792.0,1219.1 793.5,1225.5 795.0,1232.0 796.5,1231.8 798.0,1238.4 799.5,1245.5 801.0,1235.9 802.5,1232.3 804.0,1240.4 805.5,1246.0 807.0,1240.7 808.5,1235.4 810.0,1238.0 811.5,1249.3 813.0,1248.8 814.5,1248.5 816.0,1259.4 817.5,1257.9 819.0,1250.3 820.5,1248.8 822.0,1254.2 823.5,1245.4 825.0,1238.2 826.5,1235.1 828.0,1228.1 829.5,1232.3 831.0,1235.0 832.5,1244.6 834.0,1238.5 835.5,1225.3 837.0,1213.4 838.5,1217.5 840.0,1222.3 841.5,1220.0 843.0,1219.6 844.5,1219.5 846.0,1211.9 847.5,1205.4 849.0,1215.2 850.5,1220.4 852.0,1221.2 853.5,1217.4 855.0,1218.4 856.5,1215.6 858.0,1213.0 859.5,1217.1 861.0,1221.0 862.5,1221.5 864.0,1223.6 865.5,1227.3 867.0,1230.6 868.5,1233.0 870.0,1230.0 871.5,1242.6 873.0,1247.5 874.5,1244.6 876.0,1237.3 877.5,1235.9 879.0,1236.3 880.5,1241.0 882.0,1240.8 883.5,1247.1 885.0,1255.0 886.5,1256.0 888.0,1255.3 889.5,1252.7 891.0,1248.7 892.5,1248.2 894.0,1243.8 895.5,1246.6 897.0,1246.2 898.5,1248.9 900.0,1244.5 901.5,1247.7 903.0,1251.4 904.5,1242.5 906.0,1235.1 907.5,1233.0 909.0,1237.6 910.5,1238.5 912.0,1237.2 913.5,1238.5 915.0,1232.4 916.5,1236.4 918.0,1241.9 919.5,1238.7 921.0,1235.6 922.5,1233.3 924.0,1236.1 925.5,1236.9 927.0,1234.3 928.5,1243.5 930.0,1238.0 931.5,1230.0 933.0,1226.6 934.5,1233.6 936.0,1237.1 937.5,1229.3 939.0,1227.7 940.5,1234.2 942.0,1242.2 943.5,1235.9 945.0,1237.1 946.5,1245.9 948.0,1249.3 949.5,1245.7 951.0,1243.5 952.5,1243.8 954.0,1243.9 955.5,1242.8 957.0,1236.3 958.5,1240.4 960.0,1240.5 961.5,1245.5 963.0,1241.6 964.5,1246.4 966.0,1253.5 967.5,1252.9 969.0,1252.3 970.5,1250.9 972.0,1249.7 973.5,1245.8 975.0,1246.2 976.5,1245.2 978.0,1246.0 979.5,1247.2 981.0,1247.1 982.5,1249.8 984.0,1244.6 985.5,1243.3 987.0,1245.5 988.5,1247.5 990.0,1244.6 991.5,1235.5 993.0,1232.1 994.5,1234.4 996.0,1229.1 997.5,1229.8 999.0,1234.6 1000.5,1245.2 1002.0,1247.3 1003.5,1246.8 1005.0,1247.2 1006.5,1250.5 1008.0,1240.6 1009.5,1236.9 1011.0,1240.1 1012.5,1236.2 1014.0,1235.0 1015.5,1236.4 1017.0,1232.8 1018.5,1232.7 1020.0,1236.3 1021.5,1238.3 1023.0,1241.2 1024.5,1245.5 1026.0,1251.0 1027.5,1251.1 1029.0,1253.0 1030.5,1253.2 1032.0,1250.5 1033.5,1245.1 1035.0,1246.9 1036.5,1245.1 1038.0,1244.7 1039.5,1244.2 1041.0,1246.2 1042.5,1250.2 1044.0,1249.1 1045.5,1254.9 1047.0,1263.0 1048.5,1263.1 1050.0,1254.6 1051.5,1253.5 1053.0,1252.3 1054.5,1246.3 1056.0,1247.7 1057.5,1247.6 1059.0,1251.8 1060.5,1246.8 1062.0,1243.2 1063.5,1235.0 1065.0,1237.9 1066.5,1241.3 1068.0,1238.9 1069.5,1233.5 1071.0,1250.1 1072.5,1249.3 1074.0,1239.7 1075.5,1238.7 1077.0,1248.6 1078.5,1244.1 1080.0,1238.2 1081.5,1250.2 1083.0,1254.7 1084.5,1247.9 1086.0,1255.5 1087.5,1254.7 1089.0,1252.5 1090.5,1249.3 1092.0,1255.9 1093.5,1255.6 1095.0,1247.3 1096.5,1245.1 1098.0,1246.4 1099.5,1247.1 1101.0,1242.2 1102.5,1251.6 1104.0,1251.4 1105.5,1250.8 1107.0,1250.5 1108.5,1249.7 1110.0,1254.5 1111.5,1260.7 1113.0,1256.3 1114.5,1251.8 1116.0,1255.8 1117.5,1256.0 1119.0,1252.0 1120.5,1248.0 1122.0,1250.8 1123.5,1256.9 1125.0,1252.3 1126.5,1249.9 1128.0,1245.9 1129.5,1246.9 1131.0,1246.6 1132.5,1245.5 1134.0,1243.7 1135.5,1241.9 1137.0,1247.7 1138.5,1254.8 1140.0,1256.4 1141.5,1255.8 1143.0,1259.8 1144.5,1259.7 1146.0,1255.5 1147.5,1251.8 1149.0,1248.7 1150.5,1250.8 1152.0,1251.9 1153.5,1256.7 1155.0,1249.8 1156.5,1252.3 1158.0,1253.5 1159.5,1252.9 1161.0,1255.8 1162.5,1254.5 1164.0,1251.2 1165.5,1251.2 1167.0,1255.0 1168.5,1249.0 1170.0,1251.9 1171.5,1253.1 1173.0,1254.5 1174.5,1258.3 1176.0,1260.8 1177.5,1260.6 1179.0,1260.1 1180.5,1260.6 1182.0,1259.6 1183.5,1261.1 1185.0,1265.3 1186.5,1264.2 1188.0,1257.4 1189.5,1254.0 1191.0,1255.4 1192.5,1250.2 1194.0,1253.3 1195.5,1262.4 1197.0,1260.4 1198.5,1252.2 1200.0,1260.3 1201.5,1264.3 1203.0,1250.6 1204.5,1252.9 1206.0,1259.6 1207.5,1258.1 1209.0,1253.2 1210.5,1262.1 1212.0,1267.2 1213.5,1261.4 1215.0,1260.1 1216.5,1267.8 1218.0,1268.5 1219.5,1271.1 1221.0,1275.2 1222.5,1272.2 1224.0,1267.2 1225.5,1273.7 1227.0,1269.4 1228.5,1266.2 1230.0,1271.5 1231.5,1269.9 1233.0,1263.7 1234.5,1264.4 1236.0,1272.3 1237.5,1270.8 1239.0,1267.0 1240.5,1263.2 1242.0,1271.6 1243.5,1277.2 1245.0,1279.5 1246.5,1272.8 1248.0,1271.3 1249.5,1266.6 1251.0,1264.9 1252.5,1265.2 1254.0,1265.5 1255.5,1260.1 1257.0,1261.4 1258.5,1264.8 1260.0,1257.1 1261.5,1258.3 1263.0,1264.4 1264.5,1267.4 1266.0,1266.6 1267.5,1268.5 1269.0,1263.4 1270.5,1258.0 1272.0,1256.4 1273.5,1258.6 1275.0,1254.2 1276.5,1258.5 1278.0,1264.6 1279.5,1260.4 1281.0,1260.0 1282.5,1255.5 1284.0,1254.9 1285.5,1255.3 1287.0,1259.0 1288.5,1259.6 1290.0,1253.5 1291.5,1250.3 1293.0,1248.8 1294.5,1244.4 1296.0,1237.4 1297.5,1236.7 1299.0,1239.9 1300.5,1246.1 1302.0,1248.4 1303.5,1247.4 1305.0,1246.3 1306.5,1252.2 1308.0,1248.7 1309.5,1244.8 1311.0,1249.8 1312.5,1252.3 1314.0,1250.3 1315.5,1243.5 1317.0,1251.3 1318.5,1255.8 1320.0,1251.3 1321.5,1248.2 1323.0,1246.0 1324.5,1243.6 1326.0,1244.5 1327.5,1250.9 1329.0,1254.7 1330.5,1248.8 1332.0,1250.6 1333.5,1254.6 1335.0,1252.8 1336.5,1246.5 1338.0,1250.7 1339.5,1256.1 1341.0,1254.7 1342.5,1254.3 1344.0,1253.7 1345.5,1250.9 1347.0,1250.0 1348.5,1243.9 1350.0,1250.5 1351.5,1252.4 1353.0,1252.6 1354.5,1247.6 1356.0,1249.5 1357.5,1250.7 1359.0,1243.6 1360.5,1240.0 1362.0,1241.9 1363.5,1241.9 1365.0,1243.8 1366.5,1248.1 1368.0,1248.6 1369.5,1243.0 1371.0,1239.3 1372.5,1244.2 1374.0,1238.5 1375.5,1239.9 1377.0,1241.3 1378.5,1234.9 1380.0,1227.2 1381.5,1225.9 1383.0,1227.5 1384.5,1227.0 1386.0,1226.1 1387.5,1227.6 1389.0,1227.8 1390.5,1232.0 1392.0,1231.9 1393.5,1233.7 1395.0,1238.3 1396.5,1238.2 1398.0,1234.9 1399.5,1239.0 1401.0,1245.2 1402.5,1245.0 1404.0,1244.0 1405.5,1244.9 1407.0,1245.2 1408.5,1238.3 1410.0,1234.7 1411.5,1237.1 1413.0,1232.8 1414.5,1230.4 1416.0,1234.0 1417.5,1238.1 1419.0,1232.2 1420.5,1234.0 1422.0,1237.4 1423.5,1241.4 1425.0,1240.7 1426.5,1233.8 1428.0,1234.1 1429.5,1230.6 1431.0,1228.5 1432.5,1232.8 1434.0,1236.9 1435.5,1233.2 1437.0,1236.3 1438.5,1231.1 1440.0,1233.3 1441.5,1234.7 1443.0,1239.1 1444.5,1241.6 1446.0,1242.5 1447.5,1244.2 1449.0,1244.1 1450.5,1237.7 1452.0,1234.4 1453.5,1245.6 1455.0,1239.6 1456.5,1231.5 1458.0,1232.3 1459.5,1240.7 1461.0,1231.1 1462.5,1222.8 1464.0,1225.9 1465.5,1233.6 1467.0,1229.9 1468.5,1229.2 1470.0,1232.3 1471.5,1236.0 1473.0,1230.8 1474.5,1235.4 1476.0,1234.2 1477.5,1236.2 1479.0,1237.4 1480.5,1245.7 1482.0,1247.6 1483.5,1235.8 1485.0,1241.3 1486.5,1240.1 1488.0,1239.4 1489.5,1244.6 1491.0,1243.9 1492.5,1242.0 1494.0,1240.0 1495.5,1242.8 1497.0,1238.4 1498.5,1239.4 1500.0,1238.0 1501.5,1232.6 1503.0,1229.7 1504.5,1226.3 1506.0,1223.9 1507.5,1215.5 1509.0,1216.7 1510.5,1226.5 1512.0,1227.0 1513.5,1225.9 1515.0,1232.9 1516.5,1242.1 1518.0,1240.3 1519.5,1235.2 1521.0,1238.7 1522.5,1228.4 1524.0,1222.1 1525.5,1223.3 1527.0,1222.0 1528.5,1210.0 1530.0,1206.0 1531.5,1211.1 1533.0,1209.2 1534.5,1219.6 1536.0,1225.4 1537.5,1229.6 1539.0,1223.6 1540.5,1214.9 1542.0,1214.5 1543.5,1219.0 1545.0,1214.3 1546.5,1215.9 1548.0,1219.3 1549.5,1223.6 1551.0,1221.1 1552.5,1220.2 1554.0,1217.1 1555.5,1220.9 1557.0,1228.5 1558.5,1226.1 1560.0,1227.3 1561.5,1225.6 1563.0,1222.9 1564.5,1239.0 1566.0,1241.0 1567.5,1237.0 1569.0,1232.6 1570.5,1233.0 1572.0,1231.1 1573.5,1231.8 1575.0,1235.6 1576.5,1243.4 1578.0,1238.7 1579.5,1239.4 1581.0,1238.1 1582.5,1240.0 1584.0,1234.6 1585.5,1228.2 1587.0,1233.8 1588.5,1230.8 1590.0,1231.2 1591.5,1232.6 1593.0,1236.0 1594.5,1225.6 1596.0,1226.5 1597.5,1232.6 1599.0,1241.4 1600.5,1239.0 1602.0,1244.3 1603.5,1234.2 1605.0,1222.3 1606.5,1221.9 1608.0,1235.7 1609.5,1234.9 1611.0,1227.7 1612.5,1240.5 1614.0,1248.7 1615.5,1240.4 1617.0,1232.9 1618.5,1234.4 1620.0,1234.6 1621.5,1229.3 1623.0,1228.6 1624.5,1240.2 1626.0,1240.9 1627.5,1230.5 1629.0,1232.0 1630.5,1234.8 1632.0,1235.6 1633.5,1229.8 1635.0,1228.6 1636.5,1237.5 1638.0,1239.8 1639.5,1230.6 1641.0,1228.7 1642.5,1236.1 1644.0,1223.2 1645.5,1215.6 1647.0,1224.9 1648.5,1231.1 1650.0,1222.5 1651.5,1220.8 1653.0,1232.7 1654.5,1231.8 1656.0,1227.8 1657.5,1220.9 1659.0,1212.3 1660.5,1221.4 1662.0,1232.5 1663.5,1246.1 1665.0,1226.6 1666.5,1214.5 1668.0,1223.1 1669.5,1227.7 1671.0,1240.7 1672.5,1259.2 1674.0,1268.9 1675.5,1261.1 1677.0,1244.9 1678.5,1237.8 1680.0,1240.7 1681.5,1236.1 1683.0,1225.7 1684.5,1223.4 1686.0,1224.1 1687.5,1224.5 1689.0,1221.2 1690.5,1204.5 1692.0,1228.1 1693.5,1246.8 1695.0,1241.2 1696.5,1223.9 1698.0,1231.3 1699.5,1252.3 1701.0,1252.8 1702.5,1254.7 1704.0,1260.9 1705.5,1267.9 1707.0,1257.0 1708.5,1246.9 1710.0,1257.7 1711.5,1244.3 1713.0,1258.7 1714.5,1243.7 1716.0,1234.8 1717.5,1241.5 1719.0,1237.3 1720.5,1231.6 1722.0,1228.1 1723.5,1235.3 1725.0,1230.9 1726.5,1248.5 1728.0,1254.8 1729.5,1251.5 1731.0,1247.3 1732.5,1258.7 1734.0,1242.5 1735.5,1228.7 1737.0,1240.7 1738.5,1248.9 1740.0,1243.1 1741.5,1243.9 1743.0,1244.1 1744.5,1245.6 1746.0,1251.3 1747.5,1249.5 1749.0,1241.1 1750.5,1229.2 1752.0,1229.5 1753.5,1248.9 1755.0,1246.6 1756.5,1250.9 1758.0,1262.9 1759.5,1266.6 1761.0,1268.4 1762.5,1270.2 1764.0,1282.8 1765.5,1279.7 1767.0,1263.8 1768.5,1251.4 1770.0,1259.2 1771.5,1239.6 1773.0,1238.8 1774.5,1253.2 1776.0,1245.1 1777.5,1205.8 1779.0,1193.1 1780.5,1220.4 1782.0,1220.3 1783.5,1197.9 1785.0,1203.4 1786.5,1217.5 1788.0,1222.2 1789.5,1224.6 1791.0,1215.9 1792.5,1217.4 1794.0,1266.9 1795.5,1250.6 1797.0,1210.1 1798.5,1212.6 1800.0,1244.2 1801.5,1208.9 1803.0,1186.8 1804.5,1222.0 1806.0,1233.3 1807.5,1235.1 1809.0,1248.9 1810.5,1270.1 1812.0,1255.7 1813.5,1247.8 1815.0,1240.6 1816.5,1227.6 1818.0,1219.4 1819.5,1238.1 1821.0,1232.7 1822.5,1232.1 1824.0,1239.9 1825.5,1241.2 1827.0,1235.5 1828.5,1251.8 1830.0,1273.0 1831.5,1267.3 1833.0,1237.5 1834.5,1225.5 1836.0,1238.8 1837.5,1259.2 1839.0,1278.2 1840.5,1281.8 1842.0,1267.9 1843.5,1262.1 1845.0,1255.3 1846.5,1265.7 1848.0,1259.5 1849.5,1239.3 1851.0,1242.6 1852.5,1249.7 1854.0,1224.3 1855.5,1220.1 1857.0,1236.0 1858.5,1241.1 1860.0,1236.4 1861.5,1252.1 1863.0,1250.5 1864.5,1214.6 1866.0,1222.7 1867.5,1231.5 1869.0,1230.3 1870.5,1241.2 1872.0,1244.3 1873.5,1215.1 1875.0,1209.8 1876.5,1237.3 1878.0,1246.5 1879.5,1244.4 1881.0,1248.7 1882.5,1252.1 1884.0,1238.8 1885.5,1235.6 1887.0,1235.8 1888.5,1234.2 1890.0,1250.1 1891.5,1247.9 1893.0,1224.0 1894.5,1226.9 1896.0,1243.1 1897.5,1238.7 1899.0,1222.0 1900.5,1227.6 1902.0,1248.8 1903.5,1246.3 1905.0,1249.8 1906.5,1252.0 1908.0,1256.6 1909.5,1250.4 1911.0,1250.0 1912.5,1232.6 1914.0,1230.9 1915.5,1243.4 1917.0,1250.2 1918.5,1242.2 1920.0,1240.5 1921.5,1243.4 1923.0,1232.8 1924.5,1220.1 1926.0,1221.1 1927.5,1234.6 1929.0,1239.7 1930.5,1242.6 1932.0,1238.6 1933.5,1232.0 1935.0,1234.5 1936.5,1238.4 1938.0,1228.6 1939.5,1214.5 1941.0,1223.0 1942.5,1243.4 1944.0,1231.7 1945.5,1227.9 1947.0,1226.5 1948.5,1234.4 1950.0,1228.2 1951.5,1227.0 1953.0,1240.9 1954.5,1231.1 1956.0,1216.0 1957.5,1230.5 1959.0,1236.1 1960.5,1225.6 1962.0,1223.8 1963.5,1242.7 1965.0,1239.3 1966.5,1218.2 1968.0,1222.2 1969.5,1240.1 1971.0,1230.0 1972.5,1219.0 1974.0,1233.6 1975.5,1242.9 1977.0,1234.9 1978.5,1232.9 1980.0,1239.4 1981.5,1227.6 1983.0,1214.0 1984.5,1215.4 1986.0,1223.3 1987.5,1228.3 1989.0,1238.5 1990.5,1247.5 1992.0,1240.9 1993.5,1231.8 1995.0,1231.2 1996.5,1234.2 1998.0,1243.3 1999.5,1245.3 2001.0,1239.4 2002.5,1233.3 2004.0,1241.8 2005.5,1241.8 2007.0,1233.2 2008.5,1225.4 2010.0,1227.7 2011.5,1236.6 2013.0,1227.8 2014.5,1229.2 2016.0,1240.8 2017.5,1240.1 2019.0,1237.6 2020.5,1243.1 2022.0,1246.5 2023.5,1255.4 2025.0,1254.9 2026.5,1238.5 2028.0,1232.3 2029.5,1236.6 2031.0,1229.9 2032.5,1219.9 2034.0,1218.1 2035.5,1230.9 2037.0,1228.9 2038.5,1222.5 2040.0,1223.9 2041.5,1227.1 2043.0,1223.3 2044.5,1232.0 2046.0,1226.7 2047.5,1220.8 2049.0,1223.4 2050.5,1231.6 2052.0,1231.3 2053.5,1229.1 2055.0,1234.1 2056.5,1223.7 2058.0,1219.7 2059.5,1219.3 2061.0,1225.4 2062.5,1222.8 2064.0,1220.6 2065.5,1217.4 2067.0,1220.8 2068.5,1217.2 2070.0,1216.9 2071.5,1222.5 2073.0,1225.0 2074.5,1209.0 2076.0,1209.6 2077.5,1229.8 2079.0,1236.9 2080.5,1230.0 2082.0,1226.7 2083.5,1233.1 2085.0,1230.7 2086.5,1223.4 2088.0,1228.7 2089.5,1229.4 2091.0,1224.9 2092.5,1222.6 2094.0,1224.3 2095.5,1219.8 2097.0,1224.3 2098.5,1229.8 2100.0,1229.7 2101.5,1229.9 2103.0,1234.1 2104.5,1240.3 2106.0,1237.0 2107.5,1231.1 2109.0,1233.9 2110.5,1240.7 2112.0,1233.2 2113.5,1220.4 2115.0,1218.1 2116.5,1219.6 2118.0,1217.0 2119.5,1215.6 2121.0,1220.7 2122.5,1226.5 2124.0,1227.5 2125.5,1232.3 2127.0,1241.0 2128.5,1239.4 2130.0,1227.1 2131.5,1227.9 2133.0,1231.5 2134.5,1223.2 2136.0,1218.4 2137.5,1222.9 2139.0,1231.4 2140.5,1227.8 2142.0,1228.0 2143.5,1239.3 2145.0,1245.3 2146.5,1241.9 2148.0,1228.9 2149.5,1233.3 2151.0,1232.4 2152.5,1223.3 2154.0,1222.0 2155.5,1223.9 2157.0,1224.6 2158.5,1227.7 2160.0,1226.3 2161.5,1228.4 2163.0,1228.2 2164.5,1234.1 2166.0,1228.6 2167.5,1219.1 2169.0,1208.8 2170.5,1210.8 2172.0,1213.8 2173.5,1220.5 2175.0,1213.8 2176.5,1209.5 2178.0,1218.4 2179.5,1225.7 2181.0,1218.5 2182.5,1213.1 2184.0,1225.8 2185.5,1228.0 2187.0,1217.8 2188.5,1221.3 2190.0,1225.3 2191.5,1225.2 2193.0,1219.6 2194.5,1225.5 2196.0,1220.6 2197.5,1217.6 2199.0,1232.6 2200.5,1233.6 2202.0,1221.4 2203.5,1229.2 2205.0,1240.7 2206.5,1239.6 2208.0,1222.1 2209.5,1234.8 2211.0,1251.1 2212.5,1248.3 2214.0,1238.6 2215.5,1244.9 2217.0,1244.5 2218.5,1227.7 2220.0,1227.6 2221.5,1241.5 2223.0,1250.1 2224.5,1245.2 2226.0,1253.2 2227.5,1250.0 2229.0,1244.9 2230.5,1243.9 2232.0,1245.9 2233.5,1238.0 2235.0,1241.0 2236.5,1237.3 2238.0,1228.3 2239.5,1237.8 2241.0,1239.4 2242.5,1221.8 2244.0,1213.5 2245.5,1230.5 2247.0,1234.4 2248.5,1212.7 2250.0,1222.0 2251.5,1241.4 2253.0,1233.1 2254.5,1216.4 2256.0,1223.1 2257.5,1227.1 2259.0,1218.6 2260.5,1219.7 2262.0,1224.5 2263.5,1222.0 2265.0,1220.1 2266.5,1226.2 2268.0,1221.5 2269.5,1221.9 2271.0,1227.3 2272.5,1224.3 2274.0,1220.6 2275.5,1226.7 2277.0,1227.3 2278.5,1235.0 2280.0,1231.8 2281.5,1228.3 2283.0,1232.9 2284.5,1240.9 2286.0,1230.8 2287.5,1220.5 2289.0,1223.6 2290.5,1223.0 2292.0,1216.3 2293.5,1219.8 2295.0,1226.7 2296.5,1215.9 2298.0,1215.3 2299.5,1229.4 2301.0,1229.1 2302.5,1223.5 2304.0,1222.5 2305.5,1222.3 2307.0,1225.8 2308.5,1231.5 2310.0,1222.0 2311.5,1219.7 2313.0,1228.3 2314.5,1236.8 2316.0,1239.8 2317.5,1237.6 2319.0,1233.6 2320.5,1228.9 2322.0,1224.2 2323.5,1227.0 2325.0,1226.7 2326.5,1223.0 2328.0,1219.6 2329.5,1222.5 2331.0,1212.8 2332.5,1216.1 2334.0,1215.7 2335.5,1222.7 2337.0,1227.1 2338.5,1225.6 2340.0,1230.8 2341.5,1228.1 2343.0,1214.6 2344.5,1215.1 2346.0,1214.1 2347.5,1207.0 2349.0,1205.7 2350.5,1212.2 2352.0,1214.6 2353.5,1213.1 2355.0,1216.1 2356.5,1221.0 2358.0,1213.4 2359.5,1218.3 2361.0,1226.3 2362.5,1219.0 2364.0,1214.6 2365.5,1217.2 2367.0,1218.5 2368.5,1213.8 2370.0,1217.6 2371.5,1222.5 2373.0,1219.9 2374.5,1206.9 2376.0,1202.8 2377.5,1208.5 2379.0,1220.9 2380.5,1219.4 2382.0,1215.8 2383.5,1224.4 2385.0,1230.7 2386.5,1228.0 2388.0,1221.2 2389.5,1232.1 2391.0,1228.3 2392.5,1215.5 2394.0,1223.7 2395.5,1228.6 2397.0,1219.2 2398.5,1214.5 2400.0,1212.6 2401.5,1213.5 2403.0,1207.9 2404.5,1212.0 2406.0,1216.9 2407.5,1209.5 2409.0,1205.1 2410.5,1205.8 2412.0,1213.8 2413.5,1217.5 2415.0,1215.0 2416.5,1212.0 2418.0,1213.1 2419.5,1222.4 2421.0,1215.6 2422.5,1212.5 2424.0,1215.6 2425.5,1226.2 2427.0,1221.2 2428.5,1217.0 2430.0,1218.4 2431.5,1223.9 2433.0,1225.9 2434.5,1218.3 2436.0,1212.5 2437.5,1217.3 2439.0,1213.0 2440.5,1207.1 2442.0,1220.6 2443.5,1219.4 2445.0,1206.7 2446.5,1205.1 2448.0,1217.7 2449.5,1216.4 2451.0,1207.2 2452.5,1212.3 2454.0,1220.5 2455.5,1225.8 2457.0,1214.2 2458.5,1208.6 2460.0,1207.3 2461.5,1209.4 2463.0,1208.3 2464.5,1208.5 2466.0,1214.6 2467.5,1214.1 2469.0,1209.5 2470.5,1208.5 2472.0,1212.0 2473.5,1209.8 2475.0,1211.2 2476.5,1213.7 2478.0,1209.5 2479.5,1204.7 2481.0,1205.6 2482.5,1205.3 2484.0,1199.9 2485.5,1205.5 2487.0,1206.5 2488.5,1206.0 2490.0,1207.2 2491.5,1207.6 2493.0,1202.3 2494.5,1207.5 2496.0,1214.4 2497.5,1216.3 2499.0,1214.4 2500.5,1218.3 2502.0,1216.4 2503.5,1207.1 2505.0,1208.8 2506.5,1216.5 2508.0,1210.0 2509.5,1205.7 2511.0,1209.3 2512.5,1210.3 2514.0,1206.4 2515.5,1201.6 2517.0,1197.8 2518.5,1206.6 2520.0,1206.9 2521.5,1206.2 2523.0,1206.8 2524.5,1211.1 2526.0,1210.0 2527.5,1210.6 2529.0,1217.1 2530.5,1216.9 2532.0,1214.1 2533.5,1214.2 2535.0,1212.0 2536.5,1210.3 2538.0,1208.0 2539.5,1214.1 2541.0,1214.6 2542.5,1212.4 2544.0,1218.7 2545.5,1217.0 2547.0,1214.0 2548.5,1215.7 2550.0,1220.0 2551.5,1221.8 2553.0,1226.7 2554.5,1224.2 2556.0,1221.5 2557.5,1222.7 2559.0,1217.5 2560.5,1214.1 2562.0,1218.4 2563.5,1223.8 2565.0,1221.4 2566.5,1217.6 2568.0,1222.1 2569.5,1227.2" fill="none" stroke="#ee8878" stroke-width="2" stroke-linejoin="round"/>
<path d="M432.0,1295.8 433.5,1317.0 435.0,1323.0 436.5,1327.6 438.0,1327.7 439.5,1324.6 441.0,1318.8 442.5,1321.7 444.0,1323.1 445.5,1323.8 447.0,1329.2 448.5,1329.7 450.0,1326.7 451.5,1335.3 453.0,1341.7 454.5,1335.5 456.0,1338.4 457.5,1336.1 459.0,1338.0 460.5,1342.0 462.0,1344.2 463.5,1340.3 465.0,1340.0 466.5,1345.4 468.0,1353.6 469.5,1349.2 471.0,1344.8 472.5,1346.9 474.0,1346.5 475.5,1336.0 477.0,1337.2 478.5,1341.9 480.0,1325.4 481.5,1329.0 483.0,1326.4 484.5,1326.9 486.0,1334.2 487.5,1331.3 489.0,1329.1 490.5,1331.2 492.0,1324.9 493.5,1326.3 495.0,1326.9 496.5,1331.6 498.0,1331.7 499.5,1330.2 501.0,1334.3 502.5,1327.2 504.0,1322.4 505.5,1320.0 507.0,1301.2 508.5,1296.2 510.0,1296.3 511.5,1296.7 513.0,1296.7 514.5,1301.1 516.0,1297.3 517.5,1299.3 519.0,1307.7 520.5,1308.4 522.0,1315.0 523.5,1302.8 525.0,1299.5 526.5,1304.3 528.0,1301.3 529.5,1303.0 531.0,1298.7 532.5,1299.5 534.0,1301.2 535.5,1308.4 537.0,1296.1 538.5,1300.1 540.0,1296.6 541.5,1291.8 543.0,1296.5 544.5,1300.7 546.0,1300.5 547.5,1308.3 549.0,1309.5 550.5,1304.7 552.0,1298.5 553.5,1297.5 555.0,1299.3 556.5,1297.8 558.0,1293.0 559.5,1296.1 561.0,1294.8 562.5,1290.7 564.0,1301.3 565.5,1299.5 567.0,1299.6 568.5,1296.3 570.0,1309.3 571.5,1318.1 573.0,1323.1 574.5,1312.7 576.0,1314.5 577.5,1300.4 579.0,1293.8 580.5,1298.7 582.0,1300.7 583.5,1303.9 585.0,1307.0 586.5,1302.3 588.0,1295.0 589.5,1293.9 591.0,1298.8 592.5,1300.1 594.0,1302.3 595.5,1302.3 597.0,1302.5 598.5,1300.6 600.0,1295.9 601.5,1323.5 603.0,1338.8 604.5,1328.9 606.0,1323.1 607.5,1314.4 609.0,1312.5 610.5,1321.9 612.0,1322.1 613.5,1336.8 615.0,1337.3 616.5,1350.0 618.0,1347.3 619.5,1347.3 621.0,1340.2 622.5,1341.5 624.0,1327.0 625.5,1331.3 627.0,1329.2 628.5,1328.5 630.0,1332.8 631.5,1341.2 633.0,1335.1 634.5,1334.8 636.0,1335.9 637.5,1335.4 639.0,1333.5 640.5,1336.5 642.0,1346.0 643.5,1348.2 645.0,1353.1 646.5,1346.2 648.0,1340.5 649.5,1343.5 651.0,1337.8 652.5,1336.5 654.0,1324.4 655.5,1319.0 657.0,1313.2 658.5,1318.5 660.0,1317.1 661.5,1317.8 663.0,1320.5 664.5,1327.9 666.0,1327.1 667.5,1321.3 669.0,1311.3 670.5,1310.2 672.0,1305.9 673.5,1303.0 675.0,1309.6 676.5,1311.5 678.0,1315.6 679.5,1312.1 681.0,1314.6 682.5,1320.4 684.0,1330.1 685.5,1324.1 687.0,1325.3 688.5,1326.5 690.0,1337.5 691.5,1337.6 693.0,1327.2 694.5,1319.4 696.0,1314.8 697.5,1310.6 699.0,1309.3 700.5,1311.1 702.0,1309.4 703.5,1312.4 705.0,1314.3 706.5,1317.5 708.0,1329.3 709.5,1341.5 711.0,1346.7 712.5,1350.5 714.0,1346.1 715.5,1354.8 717.0,1352.3 718.5,1357.5 720.0,1353.4 721.5,1360.2 723.0,1355.2 724.5,1354.3 726.0,1350.1 727.5,1351.3 729.0,1360.8 730.5,1356.1 732.0,1350.4 733.5,1348.1 735.0,1341.6 736.5,1334.1 738.0,1328.9 739.5,1330.7 741.0,1333.7 742.5,1338.6 744.0,1338.4 745.5,1333.5 747.0,1332.9 748.5,1330.1 750.0,1332.7 751.5,1332.6 753.0,1333.4 754.5,1326.8 756.0,1333.6 757.5,1335.9 759.0,1328.8 760.5,1324.5 762.0,1323.3 763.5,1319.5 765.0,1319.5 766.5,1319.3 768.0,1318.8 769.5,1311.4 771.0,1319.8 772.5,1324.6 774.0,1326.0 775.5,1332.2 777.0,1330.1 778.5,1329.2 780.0,1331.0 781.5,1326.2 783.0,1327.9 784.5,1320.4 786.0,1318.3 787.5,1316.4 789.0,1319.9 790.5,1325.7 792.0,1329.7 793.5,1333.2 795.0,1334.8 796.5,1330.1 798.0,1329.8 799.5,1329.8 801.0,1326.9 802.5,1330.7 804.0,1322.0 805.5,1324.8 807.0,1323.8 808.5,1323.1 810.0,1322.4 811.5,1315.9 813.0,1316.2 814.5,1308.1 816.0,1314.2 817.5,1314.9 819.0,1314.3 820.5,1316.0 822.0,1324.7 823.5,1329.4 825.0,1339.1 826.5,1333.2 828.0,1317.0 829.5,1317.2 831.0,1312.4 832.5,1313.0 834.0,1310.2 835.5,1313.5 837.0,1315.4 838.5,1310.2 840.0,1311.4 841.5,1312.5 843.0,1318.0 844.5,1312.7 846.0,1310.9 847.5,1310.3 849.0,1305.0 850.5,1307.8 852.0,1307.3 853.5,1307.6 855.0,1301.2 856.5,1304.7 858.0,1314.7 859.5,1311.4 861.0,1311.2 862.5,1310.7 864.0,1316.0 865.5,1318.7 867.0,1316.3 868.5,1320.2 870.0,1330.5 871.5,1337.6 873.0,1331.4 874.5,1329.3 876.0,1318.5 877.5,1316.4 879.0,1314.5 880.5,1310.0 882.0,1309.5 883.5,1312.1 885.0,1310.9 886.5,1313.6 888.0,1312.8 889.5,1308.4 891.0,1314.0 892.5,1312.6 894.0,1315.9 895.5,1321.7 897.0,1330.1 898.5,1327.8 900.0,1325.8 901.5,1326.1 903.0,1322.0 904.5,1320.2 906.0,1316.8 907.5,1314.7 909.0,1312.2 910.5,1313.8 912.0,1316.0 913.5,1315.7 915.0,1317.5 916.5,1320.3 918.0,1324.2 919.5,1325.8 921.0,1321.0 922.5,1316.9 924.0,1323.2 925.5,1325.9 927.0,1316.1 928.5,1306.4 930.0,1309.0 931.5,1306.2 933.0,1318.6 934.5,1311.3 936.0,1316.8 937.5,1321.1 939.0,1309.6 940.5,1302.8 942.0,1305.4 943.5,1311.5 945.0,1316.4 946.5,1316.7 948.0,1322.0 949.5,1322.3 951.0,1329.0 952.5,1326.6 954.0,1328.8 955.5,1324.1 957.0,1326.7 958.5,1327.0 960.0,1338.4 961.5,1343.3 963.0,1355.4 964.5,1358.9 966.0,1365.3 967.5,1359.9 969.0,1370.8 970.5,1369.7 972.0,1367.5 973.5,1362.7 975.0,1358.1 976.5,1364.1 978.0,1359.5 979.5,1360.8 981.0,1357.1 982.5,1365.2 984.0,1369.4 985.5,1363.3 987.0,1356.9 988.5,1357.8 990.0,1359.3 991.5,1350.3 993.0,1352.6 994.5,1354.0 996.0,1353.7 997.5,1354.9 999.0,1352.7 1000.5,1351.7 1002.0,1357.1 1003.5,1359.2 1005.0,1360.6 1006.5,1364.1 1008.0,1360.5 1009.5,1361.5 1011.0,1358.0 1012.5,1345.5 1014.0,1335.7 1015.5,1321.8 1017.0,1328.2 1018.5,1324.3 1020.0,1319.8 1021.5,1314.8 1023.0,1308.8 1024.5,1306.0 1026.0,1319.0 1027.5,1313.8 1029.0,1312.8 1030.5,1311.1 1032.0,1312.5 1033.5,1310.8 1035.0,1313.7 1036.5,1317.1 1038.0,1316.5 1039.5,1322.7 1041.0,1320.4 1042.5,1322.6 1044.0,1322.0 1045.5,1306.6 1047.0,1313.5 1048.5,1315.8 1050.0,1318.5 1051.5,1317.1 1053.0,1319.2 1054.5,1317.7 1056.0,1324.2 1057.5,1318.3 1059.0,1324.1 1060.5,1328.4 1062.0,1336.8 1063.5,1338.8 1065.0,1340.5 1066.5,1340.9 1068.0,1340.0 1069.5,1342.6 1071.0,1340.9 1072.5,1334.9 1074.0,1337.3 1075.5,1340.1 1077.0,1339.0 1078.5,1332.7 1080.0,1330.8 1081.5,1325.9 1083.0,1332.4 1084.5,1332.1 1086.0,1321.4 1087.5,1323.4 1089.0,1325.2 1090.5,1328.2 1092.0,1326.1 1093.5,1312.9 1095.0,1311.7 1096.5,1318.6 1098.0,1312.6 1099.5,1317.6 1101.0,1310.0 1102.5,1313.3 1104.0,1308.8 1105.5,1304.2 1107.0,1304.4 1108.5,1311.6 1110.0,1315.1 1111.5,1322.9 1113.0,1317.2 1114.5,1319.7 1116.0,1325.3 1117.5,1324.2 1119.0,1317.8 1120.5,1315.7 1122.0,1319.4 1123.5,1324.2 1125.0,1338.3 1126.5,1340.4 1128.0,1332.0 1129.5,1332.5 1131.0,1329.4 1132.5,1331.7 1134.0,1331.5 1135.5,1335.7 1137.0,1345.6 1138.5,1356.9 1140.0,1351.4 1141.5,1349.8 1143.0,1354.6 1144.5,1357.0 1146.0,1361.1 1147.5,1352.6 1149.0,1357.6 1150.5,1353.7 1152.0,1362.9 1153.5,1367.9 1155.0,1366.2 1156.5,1363.4 1158.0,1361.2 1159.5,1361.3 1161.0,1355.9 1162.5,1364.2 1164.0,1360.3 1165.5,1361.4 1167.0,1362.5 1168.5,1359.2 1170.0,1355.0 1171.5,1359.7 1173.0,1364.8 1174.5,1367.2 1176.0,1363.2 1177.5,1358.0 1179.0,1358.1 1180.5,1352.6 1182.0,1358.6 1183.5,1355.2 1185.0,1351.8 1186.5,1355.2 1188.0,1352.1 1189.5,1356.7 1191.0,1360.9 1192.5,1356.8 1194.0,1354.0 1195.5,1353.2 1197.0,1353.9 1198.5,1345.6 1200.0,1358.0 1201.5,1361.1 1203.0,1364.5 1204.5,1360.6 1206.0,1358.4 1207.5,1361.3 1209.0,1354.6 1210.5,1358.8 1212.0,1362.0 1213.5,1363.5 1215.0,1353.0 1216.5,1323.2 1218.0,1324.8 1219.5,1330.1 1221.0,1336.3 1222.5,1335.6 1224.0,1333.4 1225.5,1331.2 1227.0,1334.8 1228.5,1338.7 1230.0,1341.6 1231.5,1343.2 1233.0,1336.5 1234.5,1334.0 1236.0,1336.2 1237.5,1328.3 1239.0,1337.5 1240.5,1332.7 1242.0,1334.9 1243.5,1327.4 1245.0,1329.4 1246.5,1325.7 1248.0,1316.7 1249.5,1317.7 1251.0,1314.1 1252.5,1317.7 1254.0,1313.5 1255.5,1311.4 1257.0,1312.9 1258.5,1312.8 1260.0,1307.2 1261.5,1311.7 1263.0,1313.3 1264.5,1321.0 1266.0,1320.7 1267.5,1326.4 1269.0,1326.5 1270.5,1327.4 1272.0,1332.6 1273.5,1321.3 1275.0,1322.7 1276.5,1323.8 1278.0,1323.7 1279.5,1326.3 1281.0,1331.3 1282.5,1334.1 1284.0,1328.0 1285.5,1330.7 1287.0,1327.2 1288.5,1330.0 1290.0,1322.6 1291.5,1321.8 1293.0,1324.2 1294.5,1324.6 1296.0,1317.5 1297.5,1320.7 1299.0,1326.4 1300.5,1319.0 1302.0,1317.6 1303.5,1314.7 1305.0,1311.8 1306.5,1311.5 1308.0,1309.7 1309.5,1315.2 1311.0,1327.4 1312.5,1323.2 1314.0,1329.2 1315.5,1341.1 1317.0,1338.5 1318.5,1342.8 1320.0,1345.7 1321.5,1347.5 1323.0,1352.4 1324.5,1347.4 1326.0,1342.1 1327.5,1339.1 1329.0,1351.6 1330.5,1346.6 1332.0,1347.8 1333.5,1347.9 1335.0,1350.3 1336.5,1347.1 1338.0,1333.8 1339.5,1345.7 1341.0,1352.6 1342.5,1362.1 1344.0,1361.8 1345.5,1361.0 1347.0,1363.0 1348.5,1358.6 1350.0,1360.8 1351.5,1362.5 1353.0,1364.0 1354.5,1356.9 1356.0,1351.9 1357.5,1359.4 1359.0,1356.5 1360.5,1357.2 1362.0,1346.6 1363.5,1353.2 1365.0,1348.5 1366.5,1350.8 1368.0,1354.8 1369.5,1351.5 1371.0,1348.4 1372.5,1353.4 1374.0,1356.0 1375.5,1353.7 1377.0,1356.2 1378.5,1348.3 1380.0,1357.5 1381.5,1362.4 1383.0,1359.2 1384.5,1358.0 1386.0,1358.6 1387.5,1357.9 1389.0,1347.6 1390.5,1354.1 1392.0,1360.2 1393.5,1348.1 1395.0,1350.1 1396.5,1350.1 1398.0,1351.4 1399.5,1352.5 1401.0,1348.8 1402.5,1347.1 1404.0,1341.3 1405.5,1335.7 1407.0,1332.0 1408.5,1326.4 1410.0,1316.4 1411.5,1314.1 1413.0,1339.0 1414.5,1343.3 1416.0,1339.8 1417.5,1346.1 1419.0,1346.3 1420.5,1346.0 1422.0,1341.9 1423.5,1341.0 1425.0,1346.5 1426.5,1342.9 1428.0,1344.6 1429.5,1339.3 1431.0,1344.3 1432.5,1342.0 1434.0,1340.4 1435.5,1337.6 1437.0,1345.4 1438.5,1343.8 1440.0,1346.6 1441.5,1349.6 1443.0,1342.2 1444.5,1343.2 1446.0,1346.7 1447.5,1347.6 1449.0,1346.9 1450.5,1348.8 1452.0,1351.4 1453.5,1350.1 1455.0,1348.6 1456.5,1343.1 1458.0,1345.3 1459.5,1347.7 1461.0,1347.7 1462.5,1350.2 1464.0,1351.6 1465.5,1352.2 1467.0,1349.0 1468.5,1350.1 1470.0,1345.8 1471.5,1347.2 1473.0,1342.0 1474.5,1351.0 1476.0,1350.1 1477.5,1353.1 1479.0,1357.3 1480.5,1361.0 1482.0,1358.9 1483.5,1351.5 1485.0,1351.1 1486.5,1350.5 1488.0,1353.1 1489.5,1355.3 1491.0,1354.5 1492.5,1359.0 1494.0,1357.2 1495.5,1352.7 1497.0,1339.1 1498.5,1355.5 1500.0,1360.3 1501.5,1356.6 1503.0,1359.9 1504.5,1359.4 1506.0,1357.6 1507.5,1354.2 1509.0,1361.8 1510.5,1364.0 1512.0,1356.8 1513.5,1351.5 1515.0,1337.9 1516.5,1335.4 1518.0,1333.2 1519.5,1335.9 1521.0,1338.3 1522.5,1335.9 1524.0,1342.8 1525.5,1341.6 1527.0,1336.3 1528.5,1331.3 1530.0,1332.6 1531.5,1329.2 1533.0,1331.0 1534.5,1327.2 1536.0,1321.9 1537.5,1324.6 1539.0,1329.8 1540.5,1334.1 1542.0,1335.8 1543.5,1337.7 1545.0,1329.8 1546.5,1342.0 1548.0,1348.5 1549.5,1352.1 1551.0,1345.8 1552.5,1348.1 1554.0,1343.3 1555.5,1352.4 1557.0,1344.3 1558.5,1346.9 1560.0,1345.7 1561.5,1355.8 1563.0,1347.5 1564.5,1352.4 1566.0,1351.1 1567.5,1353.1 1569.0,1353.0 1570.5,1355.9 1572.0,1345.7 1573.5,1345.2 1575.0,1345.2 1576.5,1346.2 1578.0,1349.8 1579.5,1354.7 1581.0,1345.3 1582.5,1348.3 1584.0,1353.0 1585.5,1351.7 1587.0,1352.3 1588.5,1345.6 1590.0,1348.6 1591.5,1348.5 1593.0,1353.5 1594.5,1346.0 1596.0,1345.6 1597.5,1345.1 1599.0,1347.4 1600.5,1350.4 1602.0,1351.6 1603.5,1346.9 1605.0,1346.2 1606.5,1349.2 1608.0,1351.5 1609.5,1346.3 1611.0,1349.7 1612.5,1349.0 1614.0,1349.0 1615.5,1348.9 1617.0,1349.0 1618.5,1348.1 1620.0,1350.1 1621.5,1350.7 1623.0,1348.5 1624.5,1349.4 1626.0,1352.2 1627.5,1345.2 1629.0,1348.7 1630.5,1351.7 1632.0,1349.2 1633.5,1338.7 1635.0,1341.1 1636.5,1338.4 1638.0,1331.0 1639.5,1322.9 1641.0,1326.8 1642.5,1337.0 1644.0,1332.9 1645.5,1332.7 1647.0,1331.4 1648.5,1333.6 1650.0,1340.1 1651.5,1336.0 1653.0,1336.2 1654.5,1336.3 1656.0,1337.1 1657.5,1341.3 1659.0,1336.7 1660.5,1339.4 1662.0,1339.9 1663.5,1341.6 1665.0,1332.2 1666.5,1331.7 1668.0,1335.2 1669.5,1348.0 1671.0,1353.7 1672.5,1353.9 1674.0,1350.8 1675.5,1340.6 1677.0,1337.7 1678.5,1343.9 1680.0,1343.6 1681.5,1334.5 1683.0,1339.0 1684.5,1341.6 1686.0,1344.5 1687.5,1337.2 1689.0,1340.2 1690.5,1338.0 1692.0,1337.8 1693.5,1336.7 1695.0,1335.5 1696.5,1333.5 1698.0,1336.0 1699.5,1337.3 1701.0,1333.9 1702.5,1331.9 1704.0,1333.7 1705.5,1329.9 1707.0,1337.4 1708.5,1339.1 1710.0,1348.4 1711.5,1334.6 1713.0,1329.4 1714.5,1330.5 1716.0,1339.7 1717.5,1343.4 1719.0,1341.3 1720.5,1340.4 1722.0,1339.5 1723.5,1340.9 1725.0,1338.5 1726.5,1338.7 1728.0,1339.7 1729.5,1340.0 1731.0,1340.5 1732.5,1336.4 1734.0,1335.8 1735.5,1340.4 1737.0,1340.8 1738.5,1338.9 1740.0,1338.5 1741.5,1332.8 1743.0,1329.6 1744.5,1330.2 1746.0,1327.4 1747.5,1326.7 1749.0,1325.5 1750.5,1327.0 1752.0,1328.8 1753.5,1327.0 1755.0,1326.1 1756.5,1330.4 1758.0,1327.6 1759.5,1330.6 1761.0,1333.1 1762.5,1333.8 1764.0,1332.1 1765.5,1333.8 1767.0,1337.6 1768.5,1334.9 1770.0,1333.8 1771.5,1332.3 1773.0,1333.5 1774.5,1343.9 1776.0,1339.1 1777.5,1343.0 1779.0,1349.8 1780.5,1360.0 1782.0,1344.1 1783.5,1345.0 1785.0,1340.1 1786.5,1331.1 1788.0,1331.8 1789.5,1334.8 1791.0,1327.0 1792.5,1334.4 1794.0,1332.2 1795.5,1332.4 1797.0,1337.4 1798.5,1360.1 1800.0,1358.6 1801.5,1347.9 1803.0,1337.5 1804.5,1331.2 1806.0,1327.4 1807.5,1346.4 1809.0,1357.4 1810.5,1354.1 1812.0,1354.1 1813.5,1341.9 1815.0,1332.2 1816.5,1328.5 1818.0,1335.0 1819.5,1330.9 1821.0,1329.9 1822.5,1329.2 1824.0,1339.4 1825.5,1343.0 1827.0,1347.5 1828.5,1351.0 1830.0,1348.1 1831.5,1347.8 1833.0,1341.8 1834.5,1338.5 1836.0,1342.0 1837.5,1332.7 1839.0,1331.3 1840.5,1330.9 1842.0,1335.1 1843.5,1346.2 1845.0,1363.2 1846.5,1354.4 1848.0,1355.1 1849.5,1356.7 1851.0,1359.2 1852.5,1355.6 1854.0,1349.3 1855.5,1341.5 1857.0,1335.6 1858.5,1332.7 1860.0,1336.0 1861.5,1342.0 1863.0,1338.8 1864.5,1342.3 1866.0,1341.7 1867.5,1338.3 1869.0,1341.5 1870.5,1345.4 1872.0,1339.5 1873.5,1338.8 1875.0,1341.9 1876.5,1341.4 1878.0,1345.7 1879.5,1343.4 1881.0,1347.0 1882.5,1347.1 1884.0,1355.0 1885.5,1343.1 1887.0,1343.2 1888.5,1342.1 1890.0,1334.6 1891.5,1337.0 1893.0,1340.2 1894.5,1335.9 1896.0,1336.7 1897.5,1340.7 1899.0,1338.5 1900.5,1344.9 1902.0,1332.6 1903.5,1329.5 1905.0,1336.3 1906.5,1335.2 1908.0,1334.0 1909.5,1328.7 1911.0,1331.4 1912.5,1327.9 1914.0,1331.7 1915.5,1332.0 1917.0,1337.0 1918.5,1332.2 1920.0,1335.3 1921.5,1341.8 1923.0,1344.3 1924.5,1347.8 1926.0,1346.3 1927.5,1344.9 1929.0,1340.8 1930.5,1341.5 1932.0,1336.6 1933.5,1337.0 1935.0,1339.0 1936.5,1338.9 1938.0,1331.5 1939.5,1332.3 1941.0,1326.2 1942.5,1334.9 1944.0,1330.1 1945.5,1332.9 1947.0,1330.8 1948.5,1333.9 1950.0,1336.6 1951.5,1336.1 1953.0,1329.3 1954.5,1326.5 1956.0,1334.6 1957.5,1335.7 1959.0,1330.4 1960.5,1333.0 1962.0,1341.2 1963.5,1341.5 1965.0,1338.4 1966.5,1333.2 1968.0,1335.8 1969.5,1329.5 1971.0,1340.3 1972.5,1340.1 1974.0,1343.2 1975.5,1341.6 1977.0,1346.8 1978.5,1345.1 1980.0,1336.3 1981.5,1336.7 1983.0,1357.2 1984.5,1363.5 1986.0,1353.3 1987.5,1343.3 1989.0,1337.9 1990.5,1338.0 1992.0,1340.6 1993.5,1336.2 1995.0,1336.3 1996.5,1334.0 1998.0,1333.3 1999.5,1330.3 2001.0,1330.6 2002.5,1332.4 2004.0,1328.5 2005.5,1325.9 2007.0,1327.9 2008.5,1325.3 2010.0,1332.6 2011.5,1332.3 2013.0,1327.2 2014.5,1327.0 2016.0,1325.5 2017.5,1323.3 2019.0,1323.9 2020.5,1319.8 2022.0,1320.9 2023.5,1315.2 2025.0,1316.5 2026.5,1315.5 2028.0,1345.3 2029.5,1345.6 2031.0,1319.1 2032.5,1322.0 2034.0,1316.9 2035.5,1316.9 2037.0,1317.3 2038.5,1318.2 2040.0,1317.1 2041.5,1320.4 2043.0,1317.2 2044.5,1319.8 2046.0,1333.9 2047.5,1344.7 2049.0,1327.5 2050.5,1318.2 2052.0,1313.5 2053.5,1320.5 2055.0,1327.3 2056.5,1348.1 2058.0,1327.0 2059.5,1320.5 2061.0,1320.4 2062.5,1322.2 2064.0,1324.1 2065.5,1322.6 2067.0,1319.5 2068.5,1321.3 2070.0,1323.8 2071.5,1319.1 2073.0,1314.5 2074.5,1316.8 2076.0,1319.2 2077.5,1320.0 2079.0,1320.9 2080.5,1321.7 2082.0,1320.2 2083.5,1315.0 2085.0,1317.8 2086.5,1318.8 2088.0,1319.4 2089.5,1319.0 2091.0,1326.4 2092.5,1339.9 2094.0,1343.2 2095.5,1329.0 2097.0,1324.8 2098.5,1323.1 2100.0,1330.0 2101.5,1332.0 2103.0,1330.6 2104.5,1336.2 2106.0,1333.5 2107.5,1330.3 2109.0,1329.3 2110.5,1322.1 2112.0,1330.7 2113.5,1333.6 2115.0,1349.9 2116.5,1352.8 2118.0,1346.7 2119.5,1345.3 2121.0,1333.2 2122.5,1322.6 2124.0,1319.8 2125.5,1312.4 2127.0,1313.4 2128.5,1315.4 2130.0,1325.8 2131.5,1330.2 2133.0,1326.6 2134.5,1325.1 2136.0,1332.8 2137.5,1359.1 2139.0,1353.2 2140.5,1349.7 2142.0,1342.0 2143.5,1341.0 2145.0,1338.4 2146.5,1344.3 2148.0,1337.1 2149.5,1342.6 2151.0,1341.7 2152.5,1346.4 2154.0,1344.5 2155.5,1343.1 2157.0,1337.6 2158.5,1339.8 2160.0,1336.5 2161.5,1325.4 2163.0,1306.8 2164.5,1302.4 2166.0,1313.6 2167.5,1311.2 2169.0,1319.1 2170.5,1315.7 2172.0,1324.4 2173.5,1340.4 2175.0,1354.7 2176.5,1366.3 2178.0,1365.4 2179.5,1357.5 2181.0,1350.6 2182.5,1340.0 2184.0,1341.0 2185.5,1355.7 2187.0,1353.9 2188.5,1345.6 2190.0,1342.3 2191.5,1348.2 2193.0,1364.3 2194.5,1348.0 2196.0,1326.9 2197.5,1329.2 2199.0,1336.0 2200.5,1342.6 2202.0,1357.1 2203.5,1328.3 2205.0,1295.3 2206.5,1298.0 2208.0,1308.3 2209.5,1311.9 2211.0,1306.3 2212.5,1312.4 2214.0,1313.8 2215.5,1315.7 2217.0,1314.9 2218.5,1309.7 2220.0,1305.6 2221.5,1314.2 2223.0,1311.3 2224.5,1313.2 2226.0,1308.5 2227.5,1312.4 2229.0,1312.9 2230.5,1318.8 2232.0,1321.8 2233.5,1317.3 2235.0,1324.6 2236.5,1318.0 2238.0,1318.3 2239.5,1321.3 2241.0,1321.3 2242.5,1310.3 2244.0,1312.8 2245.5,1308.3 2247.0,1308.8 2248.5,1311.3 2250.0,1312.2 2251.5,1324.7 2253.0,1328.1 2254.5,1331.3 2256.0,1329.7 2257.5,1334.7 2259.0,1330.4 2260.5,1323.7 2262.0,1311.1 2263.5,1305.0 2265.0,1306.1 2266.5,1311.1 2268.0,1316.7 2269.5,1319.1 2271.0,1317.7 2272.5,1311.3 2274.0,1305.2 2275.5,1300.4 2277.0,1308.7 2278.5,1315.8 2280.0,1314.7 2281.5,1312.8 2283.0,1322.8 2284.5,1319.3 2286.0,1315.7 2287.5,1315.9 2289.0,1309.7 2290.5,1302.1 2292.0,1297.5 2293.5,1295.8 2295.0,1296.0 2296.5,1297.7 2298.0,1290.5 2299.5,1295.3 2301.0,1298.8 2302.5,1292.6 2304.0,1301.8 2305.5,1297.9 2307.0,1299.7 2308.5,1305.6 2310.0,1306.3 2311.5,1323.0 2313.0,1324.5 2314.5,1331.4 2316.0,1327.3 2317.5,1326.4 2319.0,1325.5 2320.5,1318.8 2322.0,1322.6 2323.5,1340.5 2325.0,1345.1 2326.5,1348.2 2328.0,1345.7 2329.5,1346.7 2331.0,1351.4 2332.5,1360.6 2334.0,1357.2 2335.5,1347.3 2337.0,1341.9 2338.5,1348.9 2340.0,1354.1 2341.5,1353.6 2343.0,1346.2 2344.5,1330.5 2346.0,1338.0 2347.5,1344.3 2349.0,1350.4 2350.5,1353.2 2352.0,1357.3 2353.5,1353.8 2355.0,1357.3 2356.5,1359.6 2358.0,1360.5 2359.5,1351.4 2361.0,1349.0 2362.5,1346.2 2364.0,1336.7 2365.5,1346.8 2367.0,1354.3 2368.5,1360.8 2370.0,1360.6 2371.5,1339.4 2373.0,1327.5 2374.5,1313.3 2376.0,1310.6 2377.5,1331.9 2379.0,1351.0 2380.5,1338.4 2382.0,1338.0 2383.5,1337.6 2385.0,1344.8 2386.5,1349.7 2388.0,1354.4 2389.5,1357.4 2391.0,1357.8 2392.5,1363.9 2394.0,1368.7 2395.5,1374.7 2397.0,1374.7 2398.5,1375.2 2400.0,1369.4 2401.5,1368.2 2403.0,1361.7 2404.5,1366.5 2406.0,1364.1 2407.5,1371.4 2409.0,1375.9 2410.5,1367.3 2412.0,1361.8 2413.5,1370.8 2415.0,1374.3 2416.5,1371.2 2418.0,1379.5 2419.5,1372.0 2421.0,1363.6 2422.5,1368.4 2424.0,1366.4 2425.5,1362.5 2427.0,1363.7 2428.5,1366.6 2430.0,1369.1 2431.5,1371.4 2433.0,1373.0 2434.5,1365.2 2436.0,1366.3 2437.5,1365.8 2439.0,1357.8 2440.5,1357.9 2442.0,1354.0 2443.5,1340.9 2445.0,1344.5 2446.5,1356.0 2448.0,1354.4 2449.5,1346.9 2451.0,1347.1 2452.5,1344.7 2454.0,1349.8 2455.5,1352.1 2457.0,1350.2 2458.5,1355.5 2460.0,1358.5 2461.5,1351.0 2463.0,1355.3 2464.5,1356.1 2466.0,1350.6 2467.5,1347.4 2469.0,1352.8 2470.5,1348.0 2472.0,1350.7 2473.5,1357.6 2475.0,1359.2 2476.5,1357.0 2478.0,1352.5 2479.5,1351.6 2481.0,1344.7 2482.5,1349.2 2484.0,1349.0 2485.5,1346.8 2487.0,1341.1 2488.5,1335.8 2490.0,1340.0 2491.5,1338.6 2493.0,1348.6 2494.5,1343.8 2496.0,1352.6 2497.5,1349.9 2499.0,1350.3 2500.5,1353.3 2502.0,1360.2 2503.5,1356.1 2505.0,1357.5 2506.5,1355.6 2508.0,1357.5 2509.5,1352.8 2511.0,1356.8 2512.5,1358.7 2514.0,1359.7 2515.5,1356.1 2517.0,1358.1 2518.5,1365.2 2520.0,1364.8 2521.5,1369.0 2523.0,1366.2 2524.5,1364.1 2526.0,1360.0 2527.5,1355.4 2529.0,1359.1 2530.5,1357.8 2532.0,1356.9 2533.5,1362.4 2535.0,1353.7 2536.5,1359.5 2538.0,1364.9 2539.5,1365.6 2541.0,1360.6 2542.5,1353.7 2544.0,1355.8 2545.5,1356.4 2547.0,1354.6 2548.5,1354.0 2550.0,1353.0 2551.5,1355.7 2553.0,1353.7 2554.5,1354.1 2556.0,1352.8 2557.5,1351.5 2559.0,1354.5 2560.5,1348.1 2562.0,1353.3 2563.5,1355.9 2565.0,1358.4 2566.5,1353.3 2568.0,1354.0 2569.5,1354.5" fill="none" stroke="#b8b8a6" stroke-width="2" stroke-linejoin="round"/>
<path d="M432.0,1414.9 433.5,1412.3 435.0,1409.5 436.5,1415.7 438.0,1415.8 439.5,1410.9 441.0,1414.3 442.5,1415.1 444.0,1411.6 445.5,1414.5 447.0,1418.7 448.5,1416.8 450.0,1409.3 451.5,1411.9 453.0,1412.3 454.5,1416.5 456.0,1417.1 457.5,1422.9 459.0,1423.8 460.5,1415.0 462.0,1415.3 463.5,1416.8 465.0,1415.3 466.5,1416.8 468.0,1415.2 469.5,1417.7 471.0,1416.8 472.5,1422.1 474.0,1421.4 475.5,1423.8 477.0,1420.8 478.5,1417.2 480.0,1417.5 481.5,1415.2 483.0,1417.3 484.5,1415.2 486.0,1417.7 487.5,1418.6 489.0,1422.7 490.5,1413.8 492.0,1411.1 493.5,1411.0 495.0,1413.0 496.5,1413.4 498.0,1415.0 499.5,1420.2 501.0,1419.8 502.5,1423.3 504.0,1429.4 505.5,1425.2 507.0,1419.7 508.5,1422.1 510.0,1421.4 511.5,1417.8 513.0,1417.6 514.5,1420.8 516.0,1424.2 517.5,1417.3 519.0,1416.3 520.5,1419.6 522.0,1419.9 523.5,1417.9 525.0,1421.7 526.5,1421.7 528.0,1429.7 529.5,1426.5 531.0,1426.2 532.5,1423.3 534.0,1425.8 535.5,1423.3 537.0,1430.5 538.5,1438.5 540.0,1437.3 541.5,1443.4 543.0,1444.6 544.5,1444.1 546.0,1429.8 547.5,1426.0 549.0,1413.3 550.5,1410.1 552.0,1410.9 553.5,1403.2 555.0,1387.8 556.5,1396.3 558.0,1405.1 559.5,1399.3 561.0,1402.2 562.5,1408.2 564.0,1408.5 565.5,1403.4 567.0,1417.7 568.5,1420.5 570.0,1422.4 571.5,1426.2 573.0,1429.9 574.5,1426.3 576.0,1427.9 577.5,1436.8 579.0,1435.4 580.5,1422.6 582.0,1429.2 583.5,1422.4 585.0,1420.3 586.5,1426.8 588.0,1429.2 589.5,1426.6 591.0,1426.8 592.5,1432.1 594.0,1435.3 595.5,1435.8 597.0,1438.8 598.5,1434.7 600.0,1445.4 601.5,1443.0 603.0,1439.4 604.5,1437.7 606.0,1436.7 607.5,1429.2 609.0,1429.8 610.5,1429.6 612.0,1429.9 613.5,1425.2 615.0,1434.2 616.5,1434.1 618.0,1425.6 619.5,1429.0 621.0,1440.3 622.5,1438.1 624.0,1438.3 625.5,1439.1 627.0,1435.6 628.5,1428.0 630.0,1428.8 631.5,1428.9 633.0,1418.4 634.5,1417.6 636.0,1424.6 637.5,1426.9 639.0,1435.3 640.5,1438.7 642.0,1432.0 643.5,1425.6 645.0,1424.6 646.5,1422.2 648.0,1423.9 649.5,1429.0 651.0,1427.2 652.5,1430.3 654.0,1431.7 655.5,1432.0 657.0,1430.1 658.5,1431.5 660.0,1430.8 661.5,1424.4 663.0,1423.8 664.5,1424.2 666.0,1422.8 667.5,1428.7 669.0,1434.1 670.5,1430.7 672.0,1443.5 673.5,1442.5 675.0,1438.3 676.5,1435.4 678.0,1431.0 679.5,1423.8 681.0,1417.3 682.5,1421.1 684.0,1429.5 685.5,1428.4 687.0,1428.1 688.5,1433.6 690.0,1436.7 691.5,1442.0 693.0,1441.1 694.5,1434.8 696.0,1434.3 697.5,1436.5 699.0,1432.9 700.5,1420.9 702.0,1415.6 703.5,1418.8 705.0,1420.4 706.5,1419.8 708.0,1425.2 709.5,1421.4 711.0,1422.2 712.5,1424.8 714.0,1424.0 715.5,1425.3 717.0,1424.0 718.5,1422.3 720.0,1422.1 721.5,1425.8 723.0,1427.4 724.5,1429.5 726.0,1427.9 727.5,1425.0 729.0,1425.0 730.5,1417.8 732.0,1422.4 733.5,1427.6 735.0,1421.6 736.5,1420.8 738.0,1414.9 739.5,1406.5 741.0,1409.0 742.5,1414.2 744.0,1416.4 745.5,1413.7 747.0,1415.8 748.5,1421.8 750.0,1425.3 751.5,1430.1 753.0,1428.0 754.5,1423.7 756.0,1420.4 757.5,1424.3 759.0,1416.7 760.5,1418.5 762.0,1421.5 763.5,1426.3 765.0,1423.9 766.5,1419.8 768.0,1423.9 769.5,1420.4 771.0,1418.6 772.5,1422.6 774.0,1419.6 775.5,1412.0 777.0,1410.9 778.5,1415.3 780.0,1416.9 781.5,1420.5 783.0,1417.1 784.5,1412.0 786.0,1412.4 787.5,1409.9 789.0,1404.5 790.5,1405.5 792.0,1402.9 793.5,1410.0 795.0,1408.8 796.5,1409.6 798.0,1418.4 799.5,1426.5 801.0,1424.9 802.5,1419.4 804.0,1432.3 805.5,1434.0 807.0,1425.3 808.5,1422.7 810.0,1427.1 811.5,1433.9 813.0,1430.7 814.5,1433.2 816.0,1435.0 817.5,1439.6 819.0,1435.5 820.5,1433.8 822.0,1438.8 823.5,1433.6 825.0,1428.6 826.5,1419.9 828.0,1413.6 829.5,1418.2 831.0,1420.0 832.5,1426.8 834.0,1423.3 835.5,1406.1 837.0,1396.0 838.5,1399.8 840.0,1402.0 841.5,1400.9 843.0,1402.4 844.5,1404.3 846.0,1400.5 847.5,1393.7 849.0,1401.7 850.5,1404.7 852.0,1404.8 853.5,1405.4 855.0,1404.8 856.5,1399.4 858.0,1398.8 859.5,1398.0 861.0,1401.0 862.5,1400.8 864.0,1402.1 865.5,1396.5 867.0,1400.5 868.5,1402.9 870.0,1410.1 871.5,1422.3 873.0,1428.9 874.5,1421.4 876.0,1413.4 877.5,1409.4 879.0,1409.4 880.5,1411.6 882.0,1415.3 883.5,1422.3 885.0,1424.5 886.5,1426.8 888.0,1428.5 889.5,1425.5 891.0,1423.6 892.5,1421.0 894.0,1419.4 895.5,1415.8 897.0,1424.2 898.5,1418.3 900.0,1425.6 901.5,1423.6 903.0,1422.1 904.5,1416.3 906.0,1411.2 907.5,1412.4 909.0,1414.2 910.5,1418.6 912.0,1421.9 913.5,1417.7 915.0,1410.6 916.5,1418.0 918.0,1418.2 919.5,1418.6 921.0,1414.5 922.5,1415.9 924.0,1418.3 925.5,1416.9 927.0,1418.4 928.5,1421.3 930.0,1417.9 931.5,1408.8 933.0,1413.2 934.5,1418.6 936.0,1416.8 937.5,1412.0 939.0,1411.9 940.5,1412.8 942.0,1419.1 943.5,1415.2 945.0,1419.6 946.5,1429.9 948.0,1427.4 949.5,1421.0 951.0,1426.3 952.5,1426.1 954.0,1424.4 955.5,1417.4 957.0,1410.9 958.5,1413.6 960.0,1416.1 961.5,1416.3 963.0,1416.2 964.5,1424.8 966.0,1428.8 967.5,1427.7 969.0,1425.5 970.5,1422.2 972.0,1420.0 973.5,1416.9 975.0,1416.3 976.5,1413.5 978.0,1412.8 979.5,1419.4 981.0,1424.9 982.5,1425.3 984.0,1428.0 985.5,1434.0 987.0,1429.3 988.5,1421.1 990.0,1423.3 991.5,1416.8 993.0,1419.3 994.5,1419.2 996.0,1417.2 997.5,1413.5 999.0,1415.8 1000.5,1425.0 1002.0,1425.7 1003.5,1428.9 1005.0,1432.1 1006.5,1431.9 1008.0,1428.5 1009.5,1426.6 1011.0,1425.6 1012.5,1421.5 1014.0,1422.6 1015.5,1423.2 1017.0,1416.0 1018.5,1410.5 1020.0,1413.7 1021.5,1417.2 1023.0,1420.6 1024.5,1420.7 1026.0,1418.4 1027.5,1423.2 1029.0,1428.7 1030.5,1428.4 1032.0,1427.0 1033.5,1420.3 1035.0,1422.4 1036.5,1423.9 1038.0,1416.7 1039.5,1418.9 1041.0,1426.3 1042.5,1426.7 1044.0,1420.3 1045.5,1423.9 1047.0,1435.5 1048.5,1432.7 1050.0,1419.4 1051.5,1427.2 1053.0,1424.4 1054.5,1415.9 1056.0,1411.1 1057.5,1415.7 1059.0,1422.0 1060.5,1421.8 1062.0,1418.8 1063.5,1416.3 1065.0,1415.3 1066.5,1419.1 1068.0,1417.5 1069.5,1415.2 1071.0,1419.8 1072.5,1423.0 1074.0,1416.9 1075.5,1413.6 1077.0,1420.1 1078.5,1421.2 1080.0,1413.0 1081.5,1419.2 1083.0,1426.1 1084.5,1428.8 1086.0,1423.8 1087.5,1422.0 1089.0,1423.1 1090.5,1423.4 1092.0,1422.1 1093.5,1425.3 1095.0,1421.8 1096.5,1419.6 1098.0,1417.9 1099.5,1414.5 1101.0,1414.7 1102.5,1418.8 1104.0,1425.9 1105.5,1423.0 1107.0,1419.9 1108.5,1425.0 1110.0,1429.5 1111.5,1433.5 1113.0,1434.4 1114.5,1435.1 1116.0,1430.4 1117.5,1434.2 1119.0,1430.0 1120.5,1424.6 1122.0,1422.4 1123.5,1426.3 1125.0,1429.3 1126.5,1422.2 1128.0,1422.0 1129.5,1426.2 1131.0,1421.2 1132.5,1418.2 1134.0,1422.4 1135.5,1421.9 1137.0,1423.5 1138.5,1434.7 1140.0,1435.4 1141.5,1429.0 1143.0,1435.4 1144.5,1432.2 1146.0,1431.8 1147.5,1428.1 1149.0,1434.5 1150.5,1435.5 1152.0,1437.8 1153.5,1430.9 1155.0,1430.5 1156.5,1430.4 1158.0,1431.2 1159.5,1428.8 1161.0,1434.2 1162.5,1431.1 1164.0,1434.0 1165.5,1430.0 1167.0,1425.8 1168.5,1422.2 1170.0,1422.0 1171.5,1427.8 1173.0,1427.9 1174.5,1433.3 1176.0,1432.3 1177.5,1430.2 1179.0,1433.0 1180.5,1436.5 1182.0,1434.2 1183.5,1430.0 1185.0,1433.9 1186.5,1433.5 1188.0,1431.3 1189.5,1427.6 1191.0,1429.4 1192.5,1428.6 1194.0,1429.2 1195.5,1435.3 1197.0,1430.7 1198.5,1425.0 1200.0,1430.3 1201.5,1431.2 1203.0,1422.6 1204.5,1421.5 1206.0,1427.7 1207.5,1430.1 1209.0,1428.7 1210.5,1431.6 1212.0,1431.8 1213.5,1427.0 1215.0,1426.4 1216.5,1431.1 1218.0,1431.4 1219.5,1435.1 1221.0,1438.1 1222.5,1436.1 1224.0,1432.7 1225.5,1436.8 1227.0,1433.7 1228.5,1430.8 1230.0,1435.4 1231.5,1436.4 1233.0,1431.0 1234.5,1433.1 1236.0,1438.8 1237.5,1443.0 1239.0,1431.1 1240.5,1425.1 1242.0,1425.4 1243.5,1428.4 1245.0,1429.9 1246.5,1430.9 1248.0,1429.1 1249.5,1429.9 1251.0,1429.0 1252.5,1426.6 1254.0,1425.1 1255.5,1420.8 1257.0,1420.9 1258.5,1425.4 1260.0,1428.0 1261.5,1427.9 1263.0,1425.0 1264.5,1427.7 1266.0,1432.2 1267.5,1429.0 1269.0,1424.2 1270.5,1425.2 1272.0,1426.8 1273.5,1424.0 1275.0,1421.3 1276.5,1425.6 1278.0,1430.1 1279.5,1423.8 1281.0,1427.1 1282.5,1427.0 1284.0,1427.9 1285.5,1427.6 1287.0,1430.0 1288.5,1432.3 1290.0,1424.3 1291.5,1416.0 1293.0,1422.4 1294.5,1416.4 1296.0,1408.0 1297.5,1412.3 1299.0,1413.0 1300.5,1413.6 1302.0,1418.7 1303.5,1416.9 1305.0,1420.4 1306.5,1422.3 1308.0,1422.7 1309.5,1415.1 1311.0,1417.8 1312.5,1420.9 1314.0,1428.8 1315.5,1419.8 1317.0,1415.5 1318.5,1426.2 1320.0,1424.0 1321.5,1418.0 1323.0,1424.8 1324.5,1429.2 1326.0,1420.4 1327.5,1427.4 1329.0,1432.4 1330.5,1434.4 1332.0,1431.3 1333.5,1433.8 1335.0,1433.2 1336.5,1424.2 1338.0,1422.6 1339.5,1423.8 1341.0,1427.7 1342.5,1430.7 1344.0,1428.6 1345.5,1428.3 1347.0,1422.1 1348.5,1418.0 1350.0,1422.3 1351.5,1422.9 1353.0,1417.0 1354.5,1412.3 1356.0,1412.8 1357.5,1417.3 1359.0,1412.3 1360.5,1411.8 1362.0,1409.6 1363.5,1408.6 1365.0,1401.8 1366.5,1409.3 1368.0,1411.1 1369.5,1409.9 1371.0,1406.0 1372.5,1408.3 1374.0,1408.2 1375.5,1407.7 1377.0,1410.7 1378.5,1406.5 1380.0,1402.2 1381.5,1399.4 1383.0,1395.6 1384.5,1400.8 1386.0,1402.5 1387.5,1401.5 1389.0,1406.6 1390.5,1411.2 1392.0,1404.6 1393.5,1404.8 1395.0,1408.5 1396.5,1411.0 1398.0,1407.4 1399.5,1416.1 1401.0,1417.0 1402.5,1417.0 1404.0,1414.2 1405.5,1417.2 1407.0,1418.4 1408.5,1416.9 1410.0,1416.1 1411.5,1410.5 1413.0,1405.2 1414.5,1404.6 1416.0,1405.2 1417.5,1407.9 1419.0,1404.6 1420.5,1403.9 1422.0,1405.6 1423.5,1410.0 1425.0,1407.4 1426.5,1408.6 1428.0,1409.9 1429.5,1407.7 1431.0,1405.0 1432.5,1408.7 1434.0,1410.3 1435.5,1408.8 1437.0,1404.8 1438.5,1406.6 1440.0,1409.9 1441.5,1408.3 1443.0,1412.4 1444.5,1412.5 1446.0,1411.0 1447.5,1412.2 1449.0,1411.9 1450.5,1413.7 1452.0,1412.6 1453.5,1411.8 1455.0,1411.0 1456.5,1402.3 1458.0,1402.4 1459.5,1403.3 1461.0,1401.0 1462.5,1403.0 1464.0,1404.7 1465.5,1404.1 1467.0,1402.3 1468.5,1404.2 1470.0,1408.0 1471.5,1404.5 1473.0,1408.1 1474.5,1408.3 1476.0,1411.8 1477.5,1403.6 1479.0,1410.1 1480.5,1416.6 1482.0,1413.7 1483.5,1407.7 1485.0,1406.3 1486.5,1408.0 1488.0,1409.0 1489.5,1410.6 1491.0,1409.5 1492.5,1408.1 1494.0,1405.0 1495.5,1403.0 1497.0,1404.7 1498.5,1403.9 1500.0,1403.6 1501.5,1401.5 1503.0,1398.4 1504.5,1397.9 1506.0,1399.4 1507.5,1391.7 1509.0,1390.7 1510.5,1394.8 1512.0,1393.0 1513.5,1394.9 1515.0,1403.5 1516.5,1409.6 1518.0,1413.3 1519.5,1411.3 1521.0,1407.0 1522.5,1404.3 1524.0,1393.7 1525.5,1400.4 1527.0,1404.1 1528.5,1392.5 1530.0,1387.0 1531.5,1393.9 1533.0,1389.6 1534.5,1394.6 1536.0,1408.1 1537.5,1415.9 1539.0,1409.4 1540.5,1400.1 1542.0,1402.6 1543.5,1404.2 1545.0,1397.8 1546.5,1399.2 1548.0,1395.0 1549.5,1394.4 1551.0,1401.2 1552.5,1403.8 1554.0,1400.9 1555.5,1400.9 1557.0,1414.3 1558.5,1412.1 1560.0,1408.4 1561.5,1401.5 1563.0,1408.0 1564.5,1410.7 1566.0,1415.5 1567.5,1412.6 1569.0,1410.5 1570.5,1410.8 1572.0,1417.7 1573.5,1412.9 1575.0,1405.0 1576.5,1410.5 1578.0,1411.8 1579.5,1408.0 1581.0,1409.6 1582.5,1416.4 1584.0,1415.3 1585.5,1415.3 1587.0,1413.4 1588.5,1413.5 1590.0,1407.5 1591.5,1412.5 1593.0,1411.3 1594.5,1416.7 1596.0,1420.2 1597.5,1416.5 1599.0,1416.9 1600.5,1414.6 1602.0,1417.3 1603.5,1415.1 1605.0,1408.5 1606.5,1408.6 1608.0,1412.2 1609.5,1418.4 1611.0,1414.6 1612.5,1409.6 1614.0,1421.0 1615.5,1420.4 1617.0,1420.0 1618.5,1424.6 1620.0,1423.7 1621.5,1414.2 1623.0,1425.5 1624.5,1426.2 1626.0,1427.3 1627.5,1419.6 1629.0,1409.1 1630.5,1415.6 1632.0,1411.9 1633.5,1404.0 1635.0,1409.1 1636.5,1416.2 1638.0,1416.0 1639.5,1399.7 1641.0,1409.0 1642.5,1421.9 1644.0,1406.5 1645.5,1394.1 1647.0,1402.8 1648.5,1408.9 1650.0,1403.2 1651.5,1410.6 1653.0,1406.4 1654.5,1409.1 1656.0,1406.6 1657.5,1410.6 1659.0,1405.7 1660.5,1400.0 1662.0,1419.1 1663.5,1430.9 1665.0,1414.9 1666.5,1400.7 1668.0,1408.2 1669.5,1426.0 1671.0,1432.1 1672.5,1440.6 1674.0,1462.2 1675.5,1461.2 1677.0,1434.0 1678.5,1430.9 1680.0,1438.1 1681.5,1431.4 1683.0,1424.1 1684.5,1416.7 1686.0,1419.0 1687.5,1417.2 1689.0,1421.6 1690.5,1409.2 1692.0,1404.7 1693.5,1409.4 1695.0,1412.1 1696.5,1403.9 1698.0,1421.2 1699.5,1441.0 1701.0,1438.8 1702.5,1432.8 1704.0,1435.1 1705.5,1445.5 1707.0,1439.0 1708.5,1432.3 1710.0,1431.3 1711.5,1426.5 1713.0,1428.5 1714.5,1422.2 1716.0,1409.6 1717.5,1416.9 1719.0,1414.3 1720.5,1405.1 1722.0,1410.5 1723.5,1400.4 1725.0,1390.5 1726.5,1417.9 1728.0,1435.1 1729.5,1419.4 1731.0,1425.4 1732.5,1438.7 1734.0,1428.6 1735.5,1415.6 1737.0,1429.7 1738.5,1440.9 1740.0,1420.9 1741.5,1431.9 1743.0,1421.6 1744.5,1425.1 1746.0,1441.7 1747.5,1442.0 1749.0,1427.9 1750.5,1426.4 1752.0,1422.1 1753.5,1424.5 1755.0,1428.6 1756.5,1428.4 1758.0,1438.3 1759.5,1453.5 1761.0,1466.5 1762.5,1455.0 1764.0,1457.3 1765.5,1466.1 1767.0,1457.9 1768.5,1441.1 1770.0,1426.7 1771.5,1415.5 1773.0,1420.2 1774.5,1442.1 1776.0,1430.1 1777.5,1399.0 1779.0,1412.4 1780.5,1422.4 1782.0,1402.8 1783.5,1403.1 1785.0,1415.5 1786.5,1405.9 1788.0,1403.2 1789.5,1415.4 1791.0,1402.1 1792.5,1399.8 1794.0,1455.9 1795.5,1438.6 1797.0,1397.3 1798.5,1409.4 1800.0,1429.1 1801.5,1402.2 1803.0,1371.8 1804.5,1411.7 1806.0,1429.4 1807.5,1414.0 1809.0,1424.5 1810.5,1455.0 1812.0,1435.3 1813.5,1421.0 1815.0,1412.9 1816.5,1411.8 1818.0,1414.5 1819.5,1415.4 1821.0,1411.0 1822.5,1421.2 1824.0,1420.1 1825.5,1427.0 1827.0,1434.3 1828.5,1448.4 1830.0,1450.5 1831.5,1429.0 1833.0,1418.8 1834.5,1418.9 1836.0,1431.9 1837.5,1446.9 1839.0,1470.0 1840.5,1463.6 1842.0,1454.5 1843.5,1453.6 1845.0,1450.0 1846.5,1456.2 1848.0,1444.3 1849.5,1433.7 1851.0,1430.5 1852.5,1419.1 1854.0,1408.7 1855.5,1418.3 1857.0,1422.6 1858.5,1417.3 1860.0,1435.3 1861.5,1452.7 1863.0,1432.1 1864.5,1395.2 1866.0,1404.9 1867.5,1412.4 1869.0,1406.1 1870.5,1424.2 1872.0,1418.5 1873.5,1397.1 1875.0,1388.0 1876.5,1414.9 1878.0,1422.5 1879.5,1427.8 1881.0,1429.1 1882.5,1422.3 1884.0,1416.6 1885.5,1410.2 1887.0,1409.2 1888.5,1421.1 1890.0,1447.3 1891.5,1447.7 1893.0,1418.4 1894.5,1418.3 1896.0,1431.4 1897.5,1424.2 1899.0,1410.0 1900.5,1424.2 1902.0,1440.7 1903.5,1435.2 1905.0,1434.8 1906.5,1427.7 1908.0,1430.7 1909.5,1447.0 1911.0,1439.6 1912.5,1415.7 1914.0,1418.8 1915.5,1441.5 1917.0,1449.4 1918.5,1426.6 1920.0,1426.9 1921.5,1433.4 1923.0,1421.1 1924.5,1402.0 1926.0,1412.6 1927.5,1431.0 1929.0,1428.1 1930.5,1430.9 1932.0,1437.2 1933.5,1428.0 1935.0,1421.0 1936.5,1417.6 1938.0,1406.9 1939.5,1399.7 1941.0,1406.8 1942.5,1418.8 1944.0,1418.1 1945.5,1421.6 1947.0,1421.0 1948.5,1406.4 1950.0,1410.9 1951.5,1409.3 1953.0,1410.6 1954.5,1407.3 1956.0,1410.5 1957.5,1424.2 1959.0,1425.8 1960.5,1409.1 1962.0,1406.9 1963.5,1421.0 1965.0,1418.8 1966.5,1401.6 1968.0,1400.3 1969.5,1420.1 1971.0,1417.3 1972.5,1406.1 1974.0,1415.4 1975.5,1430.0 1977.0,1412.7 1978.5,1401.6 1980.0,1412.8 1981.5,1418.4 1983.0,1408.6 1984.5,1406.6 1986.0,1414.1 1987.5,1424.9 1989.0,1425.8 1990.5,1429.9 1992.0,1427.1 1993.5,1423.8 1995.0,1418.0 1996.5,1423.2 1998.0,1428.5 1999.5,1435.2 2001.0,1422.4 2002.5,1417.7 2004.0,1427.8 2005.5,1422.7 2007.0,1415.3 2008.5,1409.1 2010.0,1417.9 2011.5,1422.2 2013.0,1411.9 2014.5,1414.0 2016.0,1415.9 2017.5,1418.2 2019.0,1421.4 2020.5,1414.2 2022.0,1420.4 2023.5,1430.6 2025.0,1432.1 2026.5,1422.0 2028.0,1418.2 2029.5,1417.5 2031.0,1409.5 2032.5,1403.8 2034.0,1407.2 2035.5,1410.9 2037.0,1410.5 2038.5,1408.5 2040.0,1405.9 2041.5,1405.2 2043.0,1409.7 2044.5,1401.1 2046.0,1396.4 2047.5,1394.9 2049.0,1404.2 2050.5,1405.9 2052.0,1409.5 2053.5,1416.3 2055.0,1410.2 2056.5,1402.2 2058.0,1394.7 2059.5,1401.1 2061.0,1398.9 2062.5,1395.2 2064.0,1394.9 2065.5,1398.5 2067.0,1397.5 2068.5,1392.5 2070.0,1391.2 2071.5,1397.6 2073.0,1394.6 2074.5,1386.6 2076.0,1386.3 2077.5,1400.9 2079.0,1406.6 2080.5,1400.2 2082.0,1403.5 2083.5,1403.2 2085.0,1404.2 2086.5,1402.9 2088.0,1397.1 2089.5,1398.1 2091.0,1398.0 2092.5,1398.3 2094.0,1399.4 2095.5,1392.2 2097.0,1396.9 2098.5,1406.9 2100.0,1407.0 2101.5,1395.6 2103.0,1400.4 2104.5,1410.3 2106.0,1402.6 2107.5,1389.8 2109.0,1402.3 2110.5,1410.4 2112.0,1393.0 2113.5,1383.7 2115.0,1390.5 2116.5,1390.6 2118.0,1381.8 2119.5,1386.7 2121.0,1389.3 2122.5,1386.2 2124.0,1394.3 2125.5,1401.3 2127.0,1400.5 2128.5,1400.3 2130.0,1404.5 2131.5,1398.4 2133.0,1392.6 2134.5,1394.8 2136.0,1391.9 2137.5,1381.8 2139.0,1395.0 2140.5,1399.1 2142.0,1393.2 2143.5,1398.9 2145.0,1412.4 2146.5,1412.0 2148.0,1400.9 2149.5,1404.8 2151.0,1404.2 2152.5,1393.8 2154.0,1397.8 2155.5,1397.2 2157.0,1390.3 2158.5,1399.4 2160.0,1406.3 2161.5,1399.1 2163.0,1400.8 2164.5,1416.4 2166.0,1399.5 2167.5,1382.4 2169.0,1385.7 2170.5,1388.0 2172.0,1379.9 2173.5,1387.1 2175.0,1388.1 2176.5,1383.9 2178.0,1388.9 2179.5,1400.1 2181.0,1386.9 2182.5,1384.9 2184.0,1400.0 2185.5,1395.9 2187.0,1386.1 2188.5,1395.3 2190.0,1401.1 2191.5,1393.2 2193.0,1391.7 2194.5,1400.1 2196.0,1401.5 2197.5,1383.3 2199.0,1389.2 2200.5,1400.1 2202.0,1390.1 2203.5,1387.9 2205.0,1401.3 2206.5,1401.8 2208.0,1393.5 2209.5,1394.9 2211.0,1406.9 2212.5,1403.4 2214.0,1406.3 2215.5,1398.6 2217.0,1391.1 2218.5,1380.2 2220.0,1386.8 2221.5,1396.4 2223.0,1401.4 2224.5,1405.6 2226.0,1406.0 2227.5,1409.8 2229.0,1407.6 2230.5,1408.1 2232.0,1403.7 2233.5,1410.0 2235.0,1418.8 2236.5,1402.2 2238.0,1390.3 2239.5,1403.9 2241.0,1410.5 2242.5,1390.3 2244.0,1389.2 2245.5,1405.6 2247.0,1407.8 2248.5,1395.3 2250.0,1395.9 2251.5,1408.2 2253.0,1405.3 2254.5,1402.5 2256.0,1398.8 2257.5,1399.7 2259.0,1402.6 2260.5,1399.3 2262.0,1395.2 2263.5,1400.7 2265.0,1403.0 2266.5,1406.7 2268.0,1403.5 2269.5,1407.0 2271.0,1413.1 2272.5,1410.4 2274.0,1407.2 2275.5,1400.9 2277.0,1398.6 2278.5,1415.6 2280.0,1408.8 2281.5,1407.6 2283.0,1410.3 2284.5,1417.2 2286.0,1405.6 2287.5,1399.6 2289.0,1400.4 2290.5,1399.2 2292.0,1387.0 2293.5,1395.5 2295.0,1397.0 2296.5,1389.8 2298.0,1391.7 2299.5,1393.6 2301.0,1395.5 2302.5,1391.8 2304.0,1391.7 2305.5,1398.8 2307.0,1399.4 2308.5,1392.1 2310.0,1386.1 2311.5,1391.1 2313.0,1402.7 2314.5,1401.5 2316.0,1395.8 2317.5,1400.3 2319.0,1402.2 2320.5,1395.1 2322.0,1390.5 2323.5,1398.8 2325.0,1400.9 2326.5,1394.6 2328.0,1390.5 2329.5,1391.7 2331.0,1385.5 2332.5,1390.0 2334.0,1392.7 2335.5,1398.9 2337.0,1393.2 2338.5,1396.2 2340.0,1408.5 2341.5,1399.9 2343.0,1386.4 2344.5,1392.4 2346.0,1397.7 2347.5,1386.0 2349.0,1378.1 2350.5,1389.2 2352.0,1394.1 2353.5,1388.4 2355.0,1392.5 2356.5,1395.3 2358.0,1395.2 2359.5,1397.2 2361.0,1395.7 2362.5,1392.8 2364.0,1392.0 2365.5,1398.5 2367.0,1391.8 2368.5,1387.4 2370.0,1389.7 2371.5,1390.9 2373.0,1390.5 2374.5,1384.9 2376.0,1388.2 2377.5,1392.0 2379.0,1398.8 2380.5,1391.2 2382.0,1389.3 2383.5,1401.5 2385.0,1409.5 2386.5,1398.1 2388.0,1390.7 2389.5,1402.0 2391.0,1401.0 2392.5,1394.6 2394.0,1395.2 2395.5,1391.2 2397.0,1387.9 2398.5,1390.5 2400.0,1392.0 2401.5,1385.8 2403.0,1388.3 2404.5,1397.5 2406.0,1394.6 2407.5,1386.0 2409.0,1386.0 2410.5,1388.9 2412.0,1392.7 2413.5,1392.9 2415.0,1392.4 2416.5,1398.4 2418.0,1394.6 2419.5,1388.9 2421.0,1390.5 2422.5,1388.6 2424.0,1390.3 2425.5,1394.4 2427.0,1399.4 2428.5,1391.3 2430.0,1391.2 2431.5,1400.7 2433.0,1400.0 2434.5,1391.1 2436.0,1391.4 2437.5,1391.8 2439.0,1386.9 2440.5,1386.0 2442.0,1388.1 2443.5,1393.8 2445.0,1390.1 2446.5,1384.7 2448.0,1389.3 2449.5,1395.3 2451.0,1386.8 2452.5,1384.1 2454.0,1386.1 2455.5,1394.3 2457.0,1397.4 2458.5,1387.7 2460.0,1388.1 2461.5,1393.0 2463.0,1394.0 2464.5,1385.8 2466.0,1391.7 2467.5,1392.0 2469.0,1386.8 2470.5,1388.1 2472.0,1392.5 2473.5,1391.1 2475.0,1392.6 2476.5,1400.3 2478.0,1393.3 2479.5,1388.8 2481.0,1395.3 2482.5,1396.3 2484.0,1387.6 2485.5,1395.7 2487.0,1399.1 2488.5,1392.0 2490.0,1389.0 2491.5,1399.2 2493.0,1397.7 2494.5,1388.7 2496.0,1393.6 2497.5,1401.4 2499.0,1401.5 2500.5,1403.9 2502.0,1402.1 2503.5,1398.8 2505.0,1400.5 2506.5,1404.1 2508.0,1395.7 2509.5,1390.4 2511.0,1393.6 2512.5,1398.2 2514.0,1391.6 2515.5,1384.8 2517.0,1387.4 2518.5,1398.8 2520.0,1395.3 2521.5,1390.3 2523.0,1382.9 2524.5,1391.6 2526.0,1397.0 2527.5,1387.2 2529.0,1391.1 2530.5,1405.6 2532.0,1401.2 2533.5,1388.4 2535.0,1394.4 2536.5,1399.8 2538.0,1398.8 2539.5,1395.5 2541.0,1394.7 2542.5,1394.6 2544.0,1405.5 2545.5,1407.7 2547.0,1398.7 2548.5,1398.0 2550.0,1411.1 2551.5,1407.2 2553.0,1399.2 2554.5,1403.5 2556.0,1406.3 2557.5,1407.8 2559.0,1400.2 2560.5,1397.6 2562.0,1398.2 2563.5,1396.7 2565.0,1396.6 2566.5,1394.8 2568.0,1397.0 2569.5,1400.1" fill="none" stroke="#8e4a9c" stroke-width="2" stroke-linejoin="round"/>
<path d="M432.0,1495.9 433.5,1495.6 435.0,1496.4 436.5,1495.6 438.0,1499.9 439.5,1501.1 441.0,1501.9 442.5,1502.8 444.0,1500.4 445.5,1498.7 447.0,1498.6 448.5,1496.7 450.0,1494.8 451.5,1491.9 453.0,1488.7 454.5,1489.2 456.0,1492.6 457.5,1496.2 459.0,1494.0 460.5,1491.1 462.0,1494.0 463.5,1492.8 465.0,1491.2 466.5,1492.3 468.0,1493.2 469.5,1491.8 471.0,1489.6 472.5,1487.9 474.0,1490.9 475.5,1491.3 477.0,1489.6 478.5,1486.5 480.0,1485.2 481.5,1484.3 483.0,1484.3 484.5,1483.3 486.0,1483.4 487.5,1486.7 489.0,1484.4 490.5,1485.7 492.0,1482.3 493.5,1482.4 495.0,1486.1 496.5,1489.1 498.0,1492.2 499.5,1489.6 501.0,1490.4 502.5,1492.8 504.0,1494.4 505.5,1495.3 507.0,1497.3 508.5,1497.7 510.0,1497.4 511.5,1494.0 513.0,1492.3 514.5,1490.9 516.0,1491.1 517.5,1489.0 519.0,1490.1 520.5,1490.6 522.0,1486.8 523.5,1486.4 525.0,1481.8 526.5,1485.3 528.0,1490.4 529.5,1484.5 531.0,1483.2 532.5,1486.6 534.0,1483.1 535.5,1485.6 537.0,1489.0 538.5,1491.3 540.0,1496.0 541.5,1495.4 543.0,1492.3 544.5,1486.4 546.0,1485.5 547.5,1484.8 549.0,1482.6 550.5,1477.1 552.0,1476.6 553.5,1474.4 555.0,1480.6 556.5,1486.6 558.0,1483.4 559.5,1480.0 561.0,1478.4 562.5,1481.8 564.0,1477.2 565.5,1473.3 567.0,1473.6 568.5,1476.2 570.0,1476.6 571.5,1472.4 573.0,1478.6 574.5,1484.5 576.0,1488.8 577.5,1489.4 579.0,1490.9 580.5,1490.2 582.0,1492.4 583.5,1489.4 585.0,1485.0 586.5,1487.4 588.0,1490.3 589.5,1487.9 591.0,1485.4 592.5,1486.3 594.0,1486.4 595.5,1484.2 597.0,1486.4 598.5,1482.4 600.0,1486.1 601.5,1492.4 603.0,1493.0 604.5,1496.9 606.0,1495.9 607.5,1493.5 609.0,1495.4 610.5,1495.7 612.0,1491.1 613.5,1490.0 615.0,1490.6 616.5,1493.2 618.0,1489.7 619.5,1493.6 621.0,1495.3 622.5,1494.8 624.0,1496.5 625.5,1497.2 627.0,1496.5 628.5,1495.6 630.0,1496.7 631.5,1494.9 633.0,1494.3 634.5,1494.7 636.0,1492.7 637.5,1490.5 639.0,1490.4 640.5,1493.1 642.0,1492.8 643.5,1494.7 645.0,1494.3 646.5,1494.6 648.0,1491.8 649.5,1492.0 651.0,1495.2 652.5,1496.5 654.0,1495.9 655.5,1496.5 657.0,1495.0 658.5,1493.3 660.0,1494.6 661.5,1493.3 663.0,1490.8 664.5,1491.3 666.0,1494.7 667.5,1498.0 669.0,1496.9 670.5,1498.3 672.0,1504.4 673.5,1506.6 675.0,1502.8 676.5,1498.0 678.0,1498.3 679.5,1498.0 681.0,1496.1 682.5,1495.4 684.0,1492.6 685.5,1493.2 687.0,1494.1 688.5,1496.8 690.0,1495.7 691.5,1497.5 693.0,1499.0 694.5,1499.4 696.0,1499.3 697.5,1502.2 699.0,1501.4 700.5,1499.5 702.0,1496.1 703.5,1499.0 705.0,1497.5 706.5,1496.8 708.0,1496.3 709.5,1494.6 711.0,1495.9 712.5,1498.5 714.0,1498.0 715.5,1493.6 717.0,1493.8 718.5,1495.1 720.0,1493.8 721.5,1493.7 723.0,1496.0 724.5,1497.1 726.0,1496.0 727.5,1498.0 729.0,1497.0 730.5,1497.4 732.0,1500.0 733.5,1501.6 735.0,1498.9 736.5,1497.9 738.0,1497.0 739.5,1490.8 741.0,1487.8 742.5,1488.6 744.0,1489.2 745.5,1487.9 747.0,1489.3 748.5,1492.2 750.0,1493.4 751.5,1493.3 753.0,1494.4 754.5,1497.6 756.0,1497.6 757.5,1499.0 759.0,1500.3 760.5,1500.2 762.0,1501.1 763.5,1498.5 765.0,1499.7 766.5,1499.9 768.0,1498.6 769.5,1496.9 771.0,1491.9 772.5,1494.4 774.0,1492.3 775.5,1487.4 777.0,1486.1 778.5,1485.1 780.0,1487.8 781.5,1488.2 783.0,1485.7 784.5,1484.9 786.0,1484.7 787.5,1482.6 789.0,1483.1 790.5,1481.9 792.0,1482.7 793.5,1484.0 795.0,1486.5 796.5,1487.7 798.0,1488.6 799.5,1491.5 801.0,1492.4 802.5,1494.5 804.0,1496.2 805.5,1497.9 807.0,1496.6 808.5,1495.3 810.0,1497.0 811.5,1502.5 813.0,1505.5 814.5,1505.1 816.0,1507.8 817.5,1509.4 819.0,1508.0 820.5,1505.9 822.0,1502.3 823.5,1505.3 825.0,1511.7 826.5,1516.1 828.0,1513.3 829.5,1507.2 831.0,1498.9 832.5,1491.1 834.0,1489.0 835.5,1485.0 837.0,1477.5 838.5,1478.7 840.0,1482.2 841.5,1484.5 843.0,1485.3 844.5,1482.8 846.0,1479.0 847.5,1477.2 849.0,1475.4 850.5,1472.5 852.0,1473.0 853.5,1472.2 855.0,1474.3 856.5,1475.1 858.0,1473.6 859.5,1473.9 861.0,1472.3 862.5,1470.4 864.0,1470.4 865.5,1475.1 867.0,1475.1 868.5,1478.8 870.0,1481.1 871.5,1488.4 873.0,1489.6 874.5,1486.7 876.0,1483.0 877.5,1484.6 879.0,1480.9 880.5,1480.3 882.0,1483.3 883.5,1487.3 885.0,1491.0 886.5,1491.5 888.0,1491.3 889.5,1494.0 891.0,1491.7 892.5,1491.7 894.0,1489.9 895.5,1489.7 897.0,1488.4 898.5,1487.1 900.0,1487.0 901.5,1486.6 903.0,1487.8 904.5,1487.3 906.0,1486.9 907.5,1487.3 909.0,1488.0 910.5,1490.9 912.0,1489.5 913.5,1483.8 915.0,1484.0 916.5,1484.0 918.0,1485.6 919.5,1485.1 921.0,1486.1 922.5,1488.0 924.0,1489.4 925.5,1488.5 927.0,1488.6 928.5,1492.0 930.0,1492.8 931.5,1492.0 933.0,1491.3 934.5,1493.9 936.0,1491.3 937.5,1490.6 939.0,1488.0 940.5,1490.0 942.0,1487.0 943.5,1488.9 945.0,1488.8 946.5,1490.6 948.0,1490.1 949.5,1485.7 951.0,1485.3 952.5,1485.8 954.0,1485.0 955.5,1482.0 957.0,1481.2 958.5,1480.7 960.0,1484.7 961.5,1484.1 963.0,1483.2 964.5,1486.6 966.0,1489.3 967.5,1486.0 969.0,1487.5 970.5,1490.2 972.0,1491.1 973.5,1489.2 975.0,1486.2 976.5,1489.3 978.0,1486.6 979.5,1486.3 981.0,1486.5 982.5,1484.3 984.0,1481.0 985.5,1481.8 987.0,1483.9 988.5,1481.1 990.0,1480.6 991.5,1483.7 993.0,1482.3 994.5,1481.4 996.0,1483.8 997.5,1483.2 999.0,1484.2 1000.5,1487.0 1002.0,1491.0 1003.5,1491.7 1005.0,1490.8 1006.5,1491.2 1008.0,1492.1 1009.5,1492.0 1011.0,1493.6 1012.5,1489.1 1014.0,1487.2 1015.5,1486.7 1017.0,1486.6 1018.5,1484.9 1020.0,1485.7 1021.5,1485.6 1023.0,1483.2 1024.5,1484.7 1026.0,1488.9 1027.5,1491.0 1029.0,1493.9 1030.5,1495.1 1032.0,1494.3 1033.5,1491.3 1035.0,1490.7 1036.5,1490.5 1038.0,1490.6 1039.5,1490.4 1041.0,1493.4 1042.5,1493.0 1044.0,1494.2 1045.5,1495.7 1047.0,1497.8 1048.5,1497.1 1050.0,1497.9 1051.5,1497.5 1053.0,1498.3 1054.5,1497.2 1056.0,1499.5 1057.5,1498.4 1059.0,1503.0 1060.5,1498.7 1062.0,1495.9 1063.5,1492.5 1065.0,1492.0 1066.5,1493.6 1068.0,1494.6 1069.5,1497.2 1071.0,1499.6 1072.5,1499.6 1074.0,1497.2 1075.5,1498.4 1077.0,1499.7 1078.5,1499.6 1080.0,1497.5 1081.5,1500.0 1083.0,1503.4 1084.5,1501.1 1086.0,1499.7 1087.5,1499.0 1089.0,1500.8 1090.5,1498.1 1092.0,1498.9 1093.5,1499.5 1095.0,1497.1 1096.5,1494.2 1098.0,1495.8 1099.5,1498.0 1101.0,1499.2 1102.5,1498.6 1104.0,1499.1 1105.5,1499.3 1107.0,1499.1 1108.5,1500.6 1110.0,1501.1 1111.5,1505.2 1113.0,1505.0 1114.5,1507.7 1116.0,1508.7 1117.5,1507.6 1119.0,1507.8 1120.5,1504.8 1122.0,1506.4 1123.5,1505.8 1125.0,1506.5 1126.5,1505.2 1128.0,1503.2 1129.5,1504.7 1131.0,1505.2 1132.5,1506.8 1134.0,1503.2 1135.5,1502.3 1137.0,1503.0 1138.5,1503.8 1140.0,1502.4 1141.5,1501.1 1143.0,1504.5 1144.5,1508.3 1146.0,1506.6 1147.5,1507.1 1149.0,1508.4 1150.5,1510.1 1152.0,1508.9 1153.5,1507.3 1155.0,1507.8 1156.5,1504.9 1158.0,1503.9 1159.5,1505.2 1161.0,1506.4 1162.5,1508.1 1164.0,1506.5 1165.5,1506.1 1167.0,1504.9 1168.5,1501.4 1170.0,1502.0 1171.5,1503.2 1173.0,1503.8 1174.5,1505.6 1176.0,1505.9 1177.5,1503.9 1179.0,1506.4 1180.5,1507.3 1182.0,1508.7 1183.5,1507.5 1185.0,1510.9 1186.5,1511.4 1188.0,1512.1 1189.5,1510.0 1191.0,1507.3 1192.5,1508.8 1194.0,1506.8 1195.5,1510.2 1197.0,1511.2 1198.5,1510.9 1200.0,1510.2 1201.5,1511.8 1203.0,1507.5 1204.5,1511.2 1206.0,1512.8 1207.5,1512.6 1209.0,1509.4 1210.5,1509.3 1212.0,1511.1 1213.5,1509.8 1215.0,1510.2 1216.5,1511.6 1218.0,1512.8 1219.5,1513.1 1221.0,1515.0 1222.5,1511.4 1224.0,1512.7 1225.5,1515.3 1227.0,1515.8 1228.5,1513.8 1230.0,1513.4 1231.5,1512.1 1233.0,1510.4 1234.5,1510.4 1236.0,1513.8 1237.5,1514.6 1239.0,1513.0 1240.5,1512.2 1242.0,1511.7 1243.5,1517.8 1245.0,1520.6 1246.5,1518.6 1248.0,1520.9 1249.5,1519.5 1251.0,1519.2 1252.5,1514.9 1254.0,1512.8 1255.5,1512.3 1257.0,1511.6 1258.5,1508.8 1260.0,1510.9 1261.5,1509.0 1263.0,1507.8 1264.5,1508.9 1266.0,1509.5 1267.5,1510.7 1269.0,1510.7 1270.5,1509.0 1272.0,1512.0 1273.5,1513.9 1275.0,1515.0 1276.5,1513.0 1278.0,1513.8 1279.5,1512.2 1281.0,1510.9 1282.5,1508.2 1284.0,1508.9 1285.5,1509.3 1287.0,1510.7 1288.5,1512.7 1290.0,1508.4 1291.5,1506.7 1293.0,1507.9 1294.5,1506.5 1296.0,1503.1 1297.5,1505.8 1299.0,1507.7 1300.5,1507.1 1302.0,1508.0 1303.5,1506.1 1305.0,1506.4 1306.5,1508.2 1308.0,1508.3 1309.5,1507.1 1311.0,1505.6 1312.5,1507.8 1314.0,1508.2 1315.5,1505.2 1317.0,1506.7 1318.5,1509.5 1320.0,1509.5 1321.5,1511.8 1323.0,1511.8 1324.5,1512.7 1326.0,1508.9 1327.5,1506.7 1329.0,1505.7 1330.5,1505.0 1332.0,1504.9 1333.5,1506.1 1335.0,1503.9 1336.5,1504.3 1338.0,1503.9 1339.5,1502.8 1341.0,1503.2 1342.5,1504.1 1344.0,1503.7 1345.5,1502.5 1347.0,1501.1 1348.5,1499.3 1350.0,1501.3 1351.5,1502.3 1353.0,1500.5 1354.5,1499.9 1356.0,1500.0 1357.5,1500.0 1359.0,1498.5 1360.5,1499.7 1362.0,1497.8 1363.5,1494.3 1365.0,1495.5 1366.5,1495.7 1368.0,1495.5 1369.5,1493.7 1371.0,1496.3 1372.5,1497.3 1374.0,1496.1 1375.5,1497.4 1377.0,1496.8 1378.5,1494.8 1380.0,1489.4 1381.5,1491.0 1383.0,1489.0 1384.5,1485.2 1386.0,1484.9 1387.5,1490.7 1389.0,1489.5 1390.5,1490.0 1392.0,1488.6 1393.5,1492.6 1395.0,1494.2 1396.5,1496.4 1398.0,1497.8 1399.5,1501.3 1401.0,1500.4 1402.5,1502.9 1404.0,1502.5 1405.5,1504.9 1407.0,1505.2 1408.5,1506.1 1410.0,1508.3 1411.5,1505.6 1413.0,1505.7 1414.5,1505.9 1416.0,1506.2 1417.5,1506.4 1419.0,1502.9 1420.5,1503.0 1422.0,1505.9 1423.5,1503.9 1425.0,1504.7 1426.5,1505.0 1428.0,1506.3 1429.5,1505.2 1431.0,1503.4 1432.5,1505.0 1434.0,1504.6 1435.5,1505.8 1437.0,1505.2 1438.5,1504.6 1440.0,1505.6 1441.5,1507.1 1443.0,1509.9 1444.5,1509.4 1446.0,1510.8 1447.5,1511.5 1449.0,1512.1 1450.5,1509.6 1452.0,1510.5 1453.5,1511.6 1455.0,1512.1 1456.5,1510.8 1458.0,1512.8 1459.5,1514.3 1461.0,1512.0 1462.5,1508.9 1464.0,1504.4 1465.5,1506.6 1467.0,1502.2 1468.5,1503.8 1470.0,1503.9 1471.5,1505.5 1473.0,1506.0 1474.5,1507.1 1476.0,1506.4 1477.5,1505.1 1479.0,1507.8 1480.5,1508.4 1482.0,1505.8 1483.5,1508.3 1485.0,1510.7 1486.5,1511.8 1488.0,1506.6 1489.5,1509.0 1491.0,1511.4 1492.5,1510.4 1494.0,1507.8 1495.5,1510.4 1497.0,1509.0 1498.5,1510.6 1500.0,1512.4 1501.5,1509.8 1503.0,1511.8 1504.5,1515.9 1506.0,1514.6 1507.5,1513.6 1509.0,1514.4 1510.5,1516.3 1512.0,1514.8 1513.5,1516.8 1515.0,1517.2 1516.5,1518.6 1518.0,1520.9 1519.5,1518.1 1521.0,1517.0 1522.5,1517.1 1524.0,1514.2 1525.5,1512.7 1527.0,1514.2 1528.5,1510.3 1530.0,1506.9 1531.5,1508.9 1533.0,1506.5 1534.5,1503.7 1536.0,1506.1 1537.5,1504.8 1539.0,1501.4 1540.5,1495.9 1542.0,1499.9 1543.5,1498.1 1545.0,1497.9 1546.5,1495.2 1548.0,1496.8 1549.5,1494.5 1551.0,1497.4 1552.5,1496.9 1554.0,1494.5 1555.5,1496.8 1557.0,1500.4 1558.5,1505.0 1560.0,1501.6 1561.5,1500.2 1563.0,1500.3 1564.5,1501.2 1566.0,1505.6 1567.5,1508.8 1569.0,1503.2 1570.5,1503.8 1572.0,1503.8 1573.5,1506.6 1575.0,1502.8 1576.5,1501.3 1578.0,1502.6 1579.5,1501.6 1581.0,1501.4 1582.5,1502.1 1584.0,1505.2 1585.5,1504.9 1587.0,1504.9 1588.5,1502.1 1590.0,1502.9 1591.5,1505.4 1593.0,1504.6 1594.5,1505.3 1596.0,1504.5 1597.5,1503.6 1599.0,1500.0 1600.5,1501.3 1602.0,1503.7 1603.5,1500.3 1605.0,1498.0 1606.5,1496.0 1608.0,1500.2 1609.5,1500.5 1611.0,1497.9 1612.5,1499.1 1614.0,1501.1 1615.5,1497.8 1617.0,1495.1 1618.5,1499.2 1620.0,1497.9 1621.5,1496.3 1623.0,1496.4 1624.5,1496.3 1626.0,1496.7 1627.5,1496.4 1629.0,1493.6 1630.5,1489.9 1632.0,1493.3 1633.5,1490.9 1635.0,1488.6 1636.5,1491.1 1638.0,1486.9 1639.5,1490.9 1641.0,1493.8 1642.5,1496.2 1644.0,1491.3 1645.5,1493.4 1647.0,1495.4 1648.5,1490.1 1650.0,1487.4 1651.5,1492.9 1653.0,1494.3 1654.5,1492.9 1656.0,1492.7 1657.5,1491.9 1659.0,1488.1 1660.5,1493.1 1662.0,1499.5 1663.5,1503.3 1665.0,1505.3 1666.5,1506.6 1668.0,1518.0 1669.5,1520.5 1671.0,1525.6 1672.5,1531.6 1674.0,1538.2 1675.5,1540.9 1677.0,1542.2 1678.5,1539.4 1680.0,1536.4 1681.5,1531.0 1683.0,1526.9 1684.5,1524.1 1686.0,1510.9 1687.5,1510.8 1689.0,1510.0 1690.5,1504.2 1692.0,1498.8 1693.5,1495.9 1695.0,1483.9 1696.5,1478.2 1698.0,1482.7 1699.5,1487.6 1701.0,1485.9 1702.5,1491.0 1704.0,1502.0 1705.5,1505.7 1707.0,1501.9 1708.5,1509.3 1710.0,1511.4 1711.5,1512.1 1713.0,1515.3 1714.5,1514.2 1716.0,1501.8 1717.5,1504.0 1719.0,1507.2 1720.5,1497.1 1722.0,1503.5 1723.5,1509.9 1725.0,1510.4 1726.5,1516.1 1728.0,1523.4 1729.5,1521.1 1731.0,1509.9 1732.5,1513.7 1734.0,1518.4 1735.5,1501.6 1737.0,1502.1 1738.5,1505.9 1740.0,1501.5 1741.5,1501.2 1743.0,1510.5 1744.5,1517.4 1746.0,1522.0 1747.5,1532.9 1749.0,1533.4 1750.5,1520.7 1752.0,1511.2 1753.5,1514.3 1755.0,1510.9 1756.5,1508.7 1758.0,1516.3 1759.5,1522.7 1761.0,1530.0 1762.5,1529.5 1764.0,1532.1 1765.5,1524.4 1767.0,1511.6 1768.5,1502.7 1770.0,1499.2 1771.5,1501.0 1773.0,1497.0 1774.5,1506.5 1776.0,1510.2 1777.5,1507.9 1779.0,1508.0 1780.5,1508.9 1782.0,1500.8 1783.5,1490.1 1785.0,1493.8 1786.5,1503.4 1788.0,1505.3 1789.5,1509.0 1791.0,1508.6 1792.5,1505.1 1794.0,1523.5 1795.5,1524.4 1797.0,1502.8 1798.5,1500.0 1800.0,1504.6 1801.5,1487.3 1803.0,1470.5 1804.5,1498.0 1806.0,1512.0 1807.5,1505.8 1809.0,1512.8 1810.5,1525.6 1812.0,1526.2 1813.5,1520.5 1815.0,1509.9 1816.5,1505.9 1818.0,1498.2 1819.5,1494.7 1821.0,1493.4 1822.5,1498.4 1824.0,1508.6 1825.5,1513.4 1827.0,1513.7 1828.5,1522.1 1830.0,1528.7 1831.5,1515.8 1833.0,1501.2 1834.5,1484.1 1836.0,1496.1 1837.5,1508.1 1839.0,1526.5 1840.5,1531.5 1842.0,1526.6 1843.5,1528.9 1845.0,1518.5 1846.5,1515.3 1848.0,1510.8 1849.5,1501.1 1851.0,1490.9 1852.5,1497.4 1854.0,1499.1 1855.5,1495.6 1857.0,1497.7 1858.5,1497.8 1860.0,1503.1 1861.5,1503.8 1863.0,1503.6 1864.5,1497.2 1866.0,1488.5 1867.5,1488.9 1869.0,1489.8 1870.5,1499.4 1872.0,1499.7 1873.5,1495.5 1875.0,1496.2 1876.5,1503.4 1878.0,1503.7 1879.5,1500.0 1881.0,1492.1 1882.5,1488.5 1884.0,1493.0 1885.5,1492.8 1887.0,1480.5 1888.5,1488.1 1890.0,1501.9 1891.5,1503.5 1893.0,1493.7 1894.5,1503.7 1896.0,1520.3 1897.5,1509.5 1899.0,1500.8 1900.5,1499.3 1902.0,1492.6 1903.5,1487.6 1905.0,1486.5 1906.5,1482.1 1908.0,1479.7 1909.5,1496.9 1911.0,1512.8 1912.5,1510.2 1914.0,1503.8 1915.5,1514.1 1917.0,1516.5 1918.5,1504.5 1920.0,1493.8 1921.5,1489.6 1923.0,1490.0 1924.5,1478.5 1926.0,1475.2 1927.5,1480.6 1929.0,1489.0 1930.5,1495.7 1932.0,1492.1 1933.5,1486.1 1935.0,1482.6 1936.5,1483.9 1938.0,1477.4 1939.5,1466.8 1941.0,1472.4 1942.5,1477.0 1944.0,1474.2 1945.5,1480.8 1947.0,1485.8 1948.5,1480.6 1950.0,1475.4 1951.5,1474.9 1953.0,1472.3 1954.5,1470.9 1956.0,1468.1 1957.5,1471.1 1959.0,1475.8 1960.5,1471.6 1962.0,1466.2 1963.5,1474.7 1965.0,1478.4 1966.5,1472.1 1968.0,1469.6 1969.5,1472.4 1971.0,1470.8 1972.5,1468.6 1974.0,1475.4 1975.5,1474.7 1977.0,1469.0 1978.5,1466.1 1980.0,1467.1 1981.5,1467.3 1983.0,1467.8 1984.5,1467.7 1986.0,1469.5 1987.5,1469.5 1989.0,1470.9 1990.5,1471.0 1992.0,1472.1 1993.5,1475.2 1995.0,1480.4 1996.5,1479.2 1998.0,1479.8 1999.5,1479.6 2001.0,1479.2 2002.5,1477.8 2004.0,1477.9 2005.5,1476.2 2007.0,1472.5 2008.5,1471.7 2010.0,1471.7 2011.5,1472.5 2013.0,1466.4 2014.5,1465.4 2016.0,1469.6 2017.5,1473.0 2019.0,1475.7 2020.5,1473.7 2022.0,1476.3 2023.5,1485.5 2025.0,1491.9 2026.5,1490.1 2028.0,1487.4 2029.5,1489.5 2031.0,1487.8 2032.5,1487.6 2034.0,1486.3 2035.5,1486.2 2037.0,1485.0 2038.5,1485.1 2040.0,1483.1 2041.5,1483.1 2043.0,1483.9 2044.5,1482.9 2046.0,1480.7 2047.5,1478.1 2049.0,1477.6 2050.5,1477.6 2052.0,1477.8 2053.5,1477.8 2055.0,1477.3 2056.5,1476.9 2058.0,1475.6 2059.5,1478.4 2061.0,1479.5 2062.5,1478.3 2064.0,1482.0 2065.5,1483.4 2067.0,1483.1 2068.5,1481.4 2070.0,1484.0 2071.5,1484.8 2073.0,1486.0 2074.5,1481.8 2076.0,1481.5 2077.5,1486.0 2079.0,1484.8 2080.5,1480.6 2082.0,1479.7 2083.5,1481.8 2085.0,1479.0 2086.5,1475.6 2088.0,1477.4 2089.5,1476.3 2091.0,1476.3 2092.5,1477.4 2094.0,1476.3 2095.5,1473.8 2097.0,1475.5 2098.5,1477.9 2100.0,1476.8 2101.5,1477.3 2103.0,1480.8 2104.5,1479.6 2106.0,1479.5 2107.5,1476.3 2109.0,1478.5 2110.5,1481.0 2112.0,1479.6 2113.5,1477.1 2115.0,1475.0 2116.5,1472.9 2118.0,1470.0 2119.5,1470.3 2121.0,1469.5 2122.5,1467.3 2124.0,1469.6 2125.5,1471.4 2127.0,1469.7 2128.5,1469.0 2130.0,1468.8 2131.5,1466.5 2133.0,1466.0 2134.5,1466.0 2136.0,1465.3 2137.5,1465.3 2139.0,1465.0 2140.5,1465.7 2142.0,1464.4 2143.5,1466.1 2145.0,1465.9 2146.5,1466.5 2148.0,1463.6 2149.5,1465.2 2151.0,1465.8 2152.5,1464.2 2154.0,1461.8 2155.5,1461.9 2157.0,1462.9 2158.5,1464.3 2160.0,1463.6 2161.5,1460.8 2163.0,1460.4 2164.5,1466.3 2166.0,1469.4 2167.5,1470.7 2169.0,1472.4 2170.5,1476.5 2172.0,1474.5 2173.5,1475.2 2175.0,1473.5 2176.5,1472.0 2178.0,1474.2 2179.5,1475.3 2181.0,1469.4 2182.5,1466.0 2184.0,1470.2 2185.5,1473.9 2187.0,1470.0 2188.5,1469.3 2190.0,1472.5 2191.5,1474.6 2193.0,1475.1 2194.5,1480.4 2196.0,1480.2 2197.5,1476.9 2199.0,1477.3 2200.5,1481.1 2202.0,1481.5 2203.5,1478.4 2205.0,1482.0 2206.5,1481.7 2208.0,1480.0 2209.5,1478.7 2211.0,1477.9 2212.5,1474.0 2214.0,1475.7 2215.5,1476.8 2217.0,1476.7 2218.5,1474.4 2220.0,1472.9 2221.5,1473.8 2223.0,1473.7 2224.5,1477.1 2226.0,1477.0 2227.5,1477.5 2229.0,1475.0 2230.5,1474.5 2232.0,1476.1 2233.5,1475.9 2235.0,1480.4 2236.5,1479.7 2238.0,1480.0 2239.5,1479.5 2241.0,1478.6 2242.5,1476.0 2244.0,1473.8 2245.5,1476.4 2247.0,1472.8 2248.5,1470.4 2250.0,1470.8 2251.5,1476.1 2253.0,1474.2 2254.5,1470.8 2256.0,1474.6 2257.5,1476.3 2259.0,1476.3 2260.5,1476.1 2262.0,1478.2 2263.5,1478.4 2265.0,1475.9 2266.5,1477.8 2268.0,1474.0 2269.5,1477.1 2271.0,1480.8 2272.5,1481.7 2274.0,1480.3 2275.5,1477.8 2277.0,1477.2 2278.5,1483.0 2280.0,1482.5 2281.5,1483.0 2283.0,1483.3 2284.5,1486.7 2286.0,1483.9 2287.5,1483.3 2289.0,1483.6 2290.5,1481.5 2292.0,1475.5 2293.5,1475.5 2295.0,1475.1 2296.5,1472.3 2298.0,1470.5 2299.5,1473.0 2301.0,1476.2 2302.5,1472.9 2304.0,1473.8 2305.5,1473.9 2307.0,1471.5 2308.5,1471.7 2310.0,1469.7 2311.5,1471.6 2313.0,1473.6 2314.5,1476.4 2316.0,1474.0 2317.5,1474.1 2319.0,1475.0 2320.5,1477.7 2322.0,1475.6 2323.5,1475.6 2325.0,1475.5 2326.5,1472.8 2328.0,1470.5 2329.5,1469.1 2331.0,1469.7 2332.5,1466.4 2334.0,1467.7 2335.5,1469.4 2337.0,1468.3 2338.5,1467.7 2340.0,1474.6 2341.5,1471.9 2343.0,1465.8 2344.5,1465.9 2346.0,1466.9 2347.5,1464.5 2349.0,1462.1 2350.5,1466.9 2352.0,1465.1 2353.5,1458.3 2355.0,1460.2 2356.5,1463.4 2358.0,1465.0 2359.5,1465.3 2361.0,1466.2 2362.5,1466.1 2364.0,1466.5 2365.5,1469.6 2367.0,1470.3 2368.5,1469.0 2370.0,1470.8 2371.5,1471.6 2373.0,1471.2 2374.5,1469.3 2376.0,1468.0 2377.5,1471.2 2379.0,1474.4 2380.5,1473.8 2382.0,1471.9 2383.5,1473.5 2385.0,1475.9 2386.5,1475.1 2388.0,1476.7 2389.5,1479.9 2391.0,1477.4 2392.5,1476.1 2394.0,1477.6 2395.5,1479.1 2397.0,1476.6 2398.5,1478.6 2400.0,1480.2 2401.5,1478.2 2403.0,1478.6 2404.5,1481.3 2406.0,1477.0 2407.5,1475.5 2409.0,1473.2 2410.5,1471.2 2412.0,1475.4 2413.5,1476.5 2415.0,1474.7 2416.5,1471.8 2418.0,1470.9 2419.5,1476.2 2421.0,1474.6 2422.5,1474.6 2424.0,1477.4 2425.5,1476.5 2427.0,1476.6 2428.5,1477.0 2430.0,1478.3 2431.5,1475.3 2433.0,1474.8 2434.5,1472.5 2436.0,1475.5 2437.5,1477.2 2439.0,1475.8 2440.5,1478.8 2442.0,1480.5 2443.5,1481.7 2445.0,1478.3 2446.5,1480.3 2448.0,1480.3 2449.5,1480.3 2451.0,1477.9 2452.5,1477.0 2454.0,1478.8 2455.5,1478.3 2457.0,1476.8 2458.5,1476.6 2460.0,1474.8 2461.5,1476.2 2463.0,1478.0 2464.5,1476.7 2466.0,1476.0 2467.5,1473.9 2469.0,1470.8 2470.5,1471.7 2472.0,1476.4 2473.5,1476.9 2475.0,1479.0 2476.5,1480.4 2478.0,1477.3 2479.5,1476.4 2481.0,1474.4 2482.5,1475.1 2484.0,1474.6 2485.5,1476.5 2487.0,1475.5 2488.5,1475.2 2490.0,1475.8 2491.5,1478.6 2493.0,1478.8 2494.5,1477.0 2496.0,1478.0 2497.5,1476.7 2499.0,1479.5 2500.5,1475.9 2502.0,1475.4 2503.5,1474.9 2505.0,1476.5 2506.5,1475.0 2508.0,1473.2 2509.5,1473.2 2511.0,1472.9 2512.5,1473.6 2514.0,1473.7 2515.5,1468.6 2517.0,1468.8 2518.5,1472.1 2520.0,1473.6 2521.5,1472.1 2523.0,1471.6 2524.5,1474.7 2526.0,1476.6 2527.5,1472.7 2529.0,1475.3 2530.5,1475.8 2532.0,1475.7 2533.5,1471.4 2535.0,1473.8 2536.5,1475.3 2538.0,1475.7 2539.5,1475.7 2541.0,1475.8 2542.5,1477.9 2544.0,1475.8 2545.5,1473.8 2547.0,1476.4 2548.5,1475.8 2550.0,1476.2 2551.5,1477.8 2553.0,1476.3 2554.5,1474.6 2556.0,1475.0 2557.5,1476.4 2559.0,1475.5 2560.5,1474.8 2562.0,1473.0 2563.5,1472.9 2565.0,1474.2 2566.5,1472.6 2568.0,1472.9 2569.5,1471.7" fill="none" stroke="#46a87c" stroke-width="2" stroke-linejoin="round"/>
<text x="454" y="632" font-size="22" class="wt" textLength="294" lengthAdjust="spacing">F3 -155.924:115.559 (uV)</text>
<text x="454" y="716" font-size="22" class="wt" textLength="280" lengthAdjust="spacing">F4 -196.775:91.145 (uV)</text>
<text x="454" y="800" font-size="22" class="wt" textLength="282" lengthAdjust="spacing">C3 -98.775:107.836 (uV)</text>
<text x="454" y="884" font-size="22" class="wt" textLength="282" lengthAdjust="spacing">C4 -82.211:119.323 (uV)</text>
<text x="454" y="968" font-size="22" class="wt" textLength="309" lengthAdjust="spacing">FCZ -126.501:114.461 (uV)</text>
<text x="454" y="1051.5" font-size="22" class="wt" textLength="283" lengthAdjust="spacing">CZ -105.047:99.589 (uV)</text>
<text x="454" y="1135.5" font-size="22" class="wt" textLength="297" lengthAdjust="spacing">CPZ -68.866:108.781 (uV)</text>
<text x="454" y="1219" font-size="22" class="wt" textLength="267" lengthAdjust="spacing">PZ -82.579:87.483 (uV)</text>
<text x="454" y="1303" font-size="22" class="wt" textLength="337" lengthAdjust="spacing">POz -2012.247:2741.619 (uV)</text>
<text x="454" y="1386.5" font-size="22" class="wt" textLength="271" lengthAdjust="spacing">OZ -56.385:70.685 (uV)</text>
<text x="454" y="1470" font-size="22" class="wt" textLength="308" lengthAdjust="spacing">FPZ -150.169:117.709 (uV)</text>
<path d="M2622 388.7H2682" stroke="#d9822b" stroke-width="2"/>
<text x="2692" y="398.4" font-size="24" class="lg">F3</text>
<path d="M2622 426.8H2682" stroke="#e8806f" stroke-width="2"/>
<text x="2692" y="436.4" font-size="24" class="lg">F4</text>
<path d="M2622 464.8H2682" stroke="#6b3a8c" stroke-width="2"/>
<text x="2692" y="474.5" font-size="24" class="lg">C3</text>
<path d="M2622 502.8H2682" stroke="#ebb12f" stroke-width="2"/>
<text x="2692" y="512.5" font-size="24" class="lg">C4</text>
<path d="M2622 540.9H2682" stroke="#d9822b" stroke-width="2"/>
<text x="2692" y="550.6" font-size="24" class="lg">FCZ</text>
<path d="M2622 579.0H2682" stroke="#2a7d8c" stroke-width="2"/>
<text x="2692" y="588.7" font-size="24" class="lg">CZ</text>
<path d="M2622 617.0H2682" stroke="#c02a85" stroke-width="2"/>
<text x="2692" y="626.7" font-size="24" class="lg">CPZ</text>
<path d="M2622 655.0H2682" stroke="#e8806f" stroke-width="2"/>
<text x="2692" y="664.8" font-size="24" class="lg">PZ</text>
<path d="M2622 693.1H2682" stroke="#a0a090" stroke-width="2"/>
<text x="2692" y="702.8" font-size="24" class="lg">POz</text>
<path d="M2622 731.1H2682" stroke="#6b3a8c" stroke-width="2"/>
<text x="2692" y="740.9" font-size="24" class="lg">OZ</text>
<path d="M2622 769.2H2682" stroke="#3a9a70" stroke-width="2"/>
<text x="2692" y="778.9" font-size="24" class="lg">FPZ</text>
<rect x="2622" y="802.2" width="60" height="13" fill="#8080ff"/><path d="M2622 802.2H2682" stroke="#0000ff" stroke-width="2"/>
<text x="2692" y="817.0" font-size="24" class="lg">N2</text>
</svg></body></html>
